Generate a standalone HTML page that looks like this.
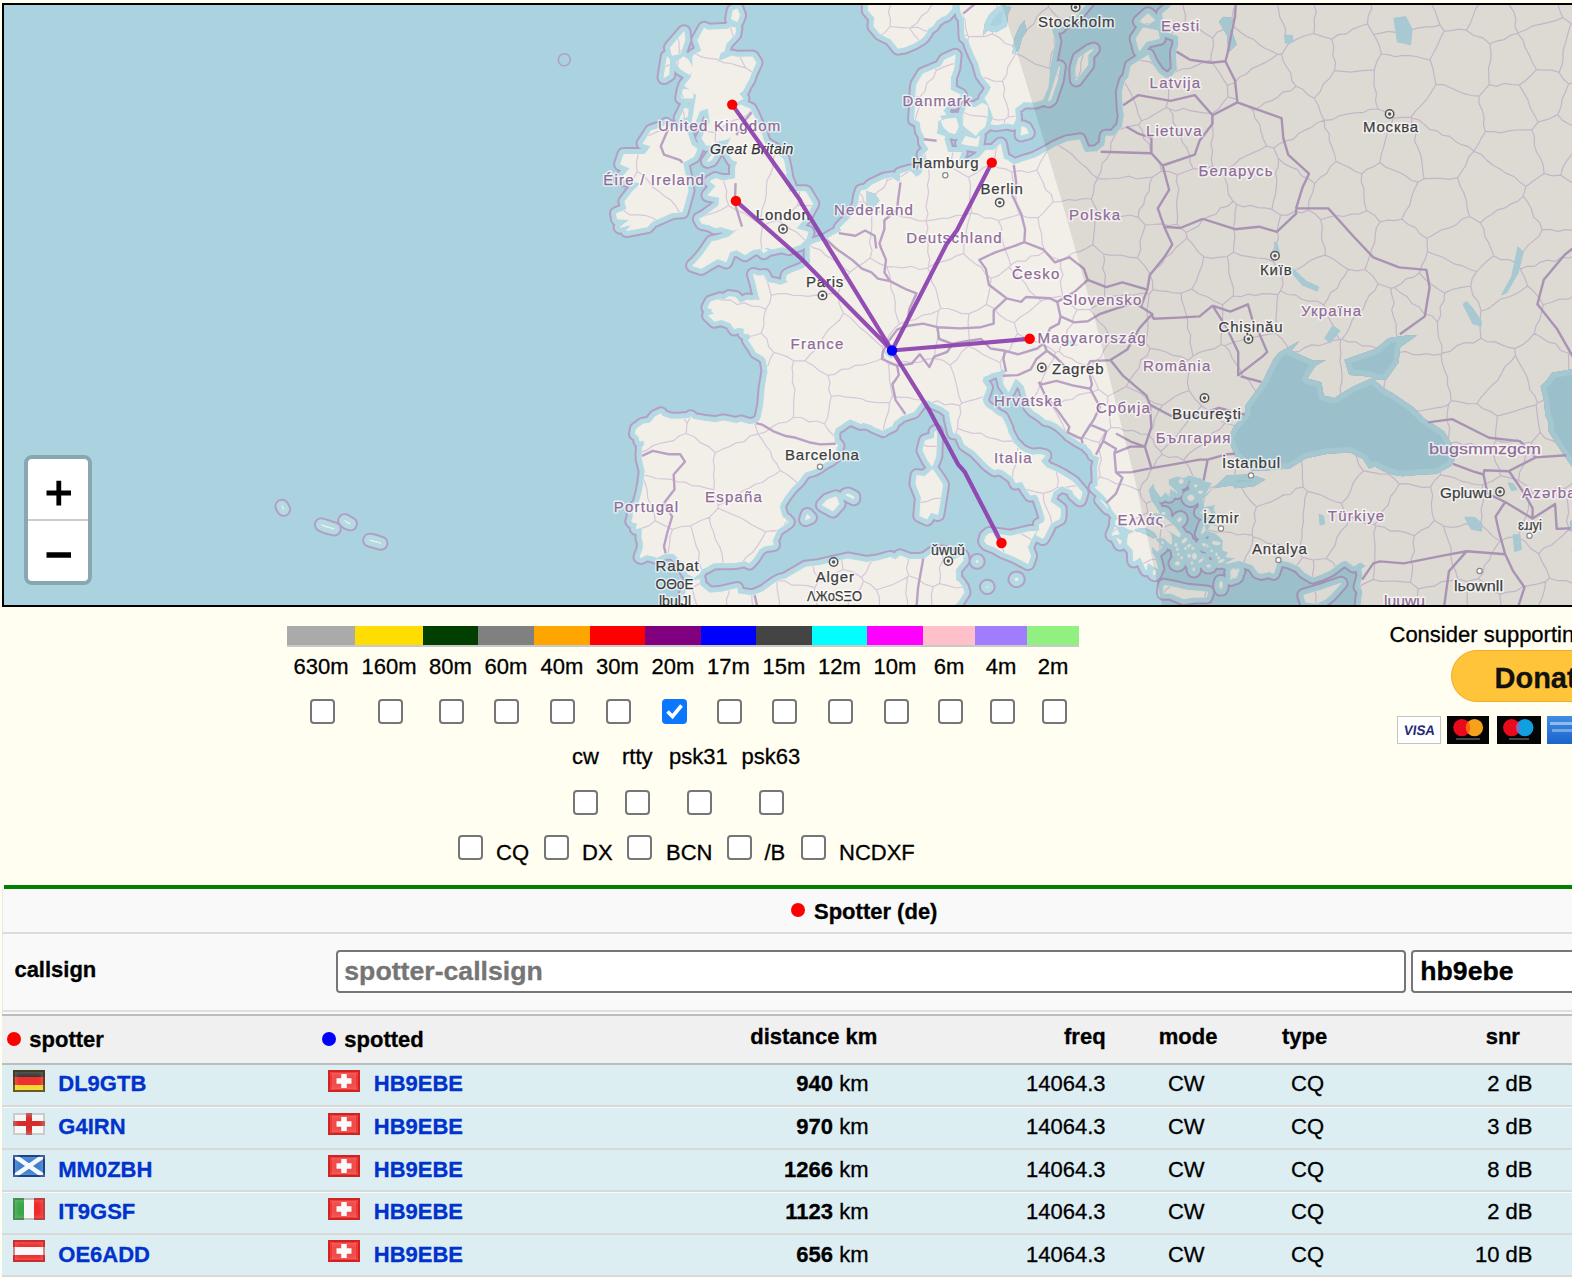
<!DOCTYPE html>
<html><head><meta charset="utf-8">
<style>
html,body{margin:0;padding:0;width:1572px;height:1278px;overflow:hidden;background:#fffef0;font-family:"Liberation Sans",sans-serif;color:#000}
.a{position:absolute;white-space:nowrap}
div.a{-webkit-text-stroke:0.3px currentColor}
</style></head><body>
<div class="a" style="left:2px;top:3px;width:1572px;height:600px;border-top:2px solid #000;border-left:2px solid #000;border-bottom:2px solid #000;overflow:hidden;background:#aad3df"><svg class="a" style="left:0;top:0" width="1572" height="600" viewBox="0 0 1572 600">
<circle cx="560.3" cy="54.7" r="6" fill="none" stroke="#b1a0c4" stroke-width="1.6"/>
<path d="M1160.2 -36.0L1167.5 0.9L1158.6 8.7L1159.3 13.7L1158.6 25.2L1174.7 31.0L1174.7 40.5L1172.5 46.6L1172.5 50.2L1173.3 64.9L1167.5 71.7L1161.8 73.5L1154.1 67.8L1147.4 57.7L1144.1 50.2L1127.1 61.0L1124.5 72.6L1121.3 76.1L1118.3 86.9L1119.2 104.0L1120.3 110.3L1118.4 121.7L1110.1 131.2L1102.0 131.2L1100.7 140.2L1092.7 146.8L1081.1 147.6L1079.0 143.5L1075.5 134.9L1062.9 136.8L1051.8 141.5L1044.1 146.0L1031.1 152.9L1018.2 157.0L1009.8 160.0L1005.0 156.4L999.4 153.7L996.5 139.0L989.7 145.4L981.7 145.4L974.9 152.9L964.8 159.2L955.5 158.6L954.4 155.1L957.3 147.6L943.9 147.6L941.5 139.3L939.9 134.3L940.7 131.5L932.2 129.0L933.4 123.1L933.4 116.3L937.6 114.0L935.1 110.3L941.8 109.7L939.2 105.7L945.0 97.4L949.5 98.8L956.4 89.9L947.9 85.8L946.3 84.3L946.5 72.6L949.9 62.8L950.2 59.5L951.1 50.2L940.8 55.0L936.8 61.6L919.0 69.0L913.0 79.0L912.5 81.4L911.2 98.8L911.4 101.7L910.6 114.3L916.1 116.8L917.4 125.9L920.3 130.9L920.6 137.6L925.1 144.6L919.0 149.6L923.0 154.2L920.6 161.4L917.4 168.7L911.7 172.8L911.4 170.9L906.1 166.0L896.5 168.7L896.5 175.4L894.8 177.3L892.1 176.0L888.4 172.8L880.4 174.1L867.5 180.3L862.7 184.8L857.2 185.9L855.6 191.0L854.3 199.2L851.9 205.0L849.3 208.4L846.9 211.8L843.4 216.0L840.2 218.6L836.1 223.0L838.1 225.8L833.4 228.1L827.6 231.2L822.1 234.5L818.8 235.8L810.4 238.4L806.1 240.4L806.4 244.2L806.1 249.3L806.7 257.4L802.7 260.9L798.0 264.1L786.6 268.4L783.1 270.4L782.3 275.1L784.3 276.8L781.8 278.3L776.6 280.3L770.7 278.8L763.8 277.5L760.4 270.6L754.6 271.1L749.4 269.4L751.9 278.0L754.9 291.1L756.5 295.7L750.9 295.0L748.2 295.7L743.3 295.0L736.4 298.6L731.6 292.5L725.2 291.6L718.7 295.7L716.6 293.7L706.7 296.9L703.9 302.7L709.1 304.2L707.5 306.1L711.0 309.0L704.6 310.5L710.4 316.2L717.6 314.5L726.4 317.9L730.5 323.9L734.0 322.2L740.4 323.4L740.1 328.4L745.3 328.8L746.9 332.4L744.5 335.2L749.3 342.3L752.0 347.0L759.7 351.6L762.1 354.9L763.0 359.7L764.1 367.4L763.6 368.5L761.3 381.5L760.5 389.9L759.7 399.6L757.3 411.9L755.6 415.7L752.0 418.1L748.8 419.2L745.3 419.6L736.9 417.0L732.4 418.5L728.9 417.9L719.5 415.9L711.6 417.7L699.3 416.1L689.6 414.3L686.6 411.7L685.3 413.4L675.5 414.1L667.4 414.3L658.4 411.4L657.0 408.8L651.2 411.7L648.0 415.7L645.5 418.1L638.9 419.2L632.3 424.1L631.5 428.9L634.9 431.3L635.9 436.1L639.6 435.0L640.7 439.4L638.3 442.2L638.3 445.5L638.0 450.2L638.3 454.6L641.2 466.3L639.9 477.2L638.0 487.5L634.8 499.1L629.5 504.1L629.1 512.4L627.8 516.1L629.1 517.7L633.6 517.7L632.3 523.5L637.5 522.3L638.3 523.9L638.0 533.1L639.4 537.8L639.1 543.7L636.0 552.0L636.9 552.4L641.2 550.4L643.3 549.7L648.0 550.8L653.1 552.4L657.6 549.9L661.6 548.3L668.9 548.3L670.8 549.7L678.0 556.4L679.3 561.8L682.7 566.8L683.7 568.8L690.6 572.2L693.0 569.8L694.6 569.6L697.8 564.0L702.2 562.2L709.6 558.0L718.2 557.4L724.0 557.8L732.1 557.4L740.9 555.6L745.4 558.0L750.1 552.6L755.2 544.3L760.5 541.0L764.9 540.2L769.5 539.6L768.1 536.2L769.7 532.5L771.6 528.2L772.9 524.9L778.6 521.0L784.3 517.1L782.4 514.9L778.2 512.0L775.3 501.8L777.1 497.4L781.0 491.3L787.1 483.1L794.6 475.9L800.8 467.2L809.8 464.6L815.7 461.4L820.1 458.0L825.7 455.2L831.0 451.3L832.1 447.0L831.8 442.4L834.0 441.1L830.2 436.6L829.7 428.5L831.6 423.0L836.9 420.1L840.2 417.4L846.3 413.9L851.9 416.3L857.0 418.5L859.5 417.4L867.0 419.6L869.8 421.6L876.0 424.1L879.2 425.6L880.4 424.1L888.1 420.8L889.5 417.0L893.6 414.1L897.6 410.8L900.0 410.1L905.8 408.1L909.8 406.8L917.0 397.4L924.3 394.9L928.6 397.4L938.6 401.9L945.5 407.0L946.3 414.1L949.5 427.8L953.7 428.0L957.3 431.7L960.5 439.4L970.4 445.9L978.2 453.9L983.8 459.9L990.7 464.9L993.8 463.6L998.9 465.1L1005.0 469.5L1009.8 473.0L1011.5 478.0L1013.5 477.4L1018.2 476.4L1021.7 483.3L1026.4 490.1L1032.0 489.2L1034.5 492.8L1038.5 504.1L1041.2 513.6L1039.6 517.7L1035.3 519.4L1035.6 524.7L1033.5 527.0L1032.4 530.1L1039.0 533.5L1042.3 527.4L1046.8 518.2L1055.7 513.6L1056.2 509.9L1056.2 503.7L1046.0 496.4L1049.3 486.5L1057.9 480.8L1068.6 485.2L1069.8 489.4L1076.0 494.9L1078.2 487.5L1069.4 477.2L1058.9 470.6L1052.0 466.8L1042.5 462.7L1036.7 456.1L1040.9 450.7L1036.1 449.6L1028.3 450.2L1021.9 448.1L1017.1 445.5L1012.3 440.5L1009.4 437.9L1003.9 427.4L1002.6 422.3L998.1 412.6L993.3 410.3L988.3 406.1L982.8 402.7L980.1 399.6L978.2 394.7L982.5 382.7L978.2 376.5L979.3 371.5L984.0 370.1L987.8 367.8L995.9 366.0L998.3 363.2L1002.1 366.7L1001.5 369.0L998.9 369.4L998.1 371.7L999.4 376.3L1000.0 379.7L1003.4 384.5L1004.4 386.8L1008.2 379.7L1010.8 373.8L1012.9 374.0L1017.1 377.7L1020.3 381.5L1023.2 392.2L1029.0 397.4L1025.6 401.4L1029.1 405.4L1036.4 410.1L1042.0 414.8L1045.1 415.0L1049.1 416.6L1054.4 419.6L1061.0 425.2L1065.3 429.8L1071.6 433.9L1073.7 435.5L1078.7 438.3L1082.5 439.0L1083.7 442.0L1087.9 445.9L1089.5 449.8L1095.7 452.2L1093.5 462.7L1094.0 471.3L1094.1 480.8L1091.1 482.3L1098.1 488.6L1102.3 493.4L1106.7 501.2L1108.8 505.7L1114.4 512.6L1113.6 515.7L1119.7 521.2L1125.3 524.5L1130.8 525.3L1130.2 527.0L1124.5 529.6L1123.2 538.8L1129.2 545.3L1129.7 556.0L1134.5 553.4L1136.3 551.8L1139.3 558.4L1142.2 564.8L1143.7 557.2L1149.8 561.4L1153.8 563.6L1151.4 554.4L1147.8 547.3L1147.4 540.8L1153.0 546.3L1157.8 542.3L1150.6 533.5L1156.2 532.5L1160.7 533.3L1163.1 536.2L1167.0 539.2L1167.6 538.0L1166.7 529.0L1162.6 525.6L1160.2 522.7L1150.6 518.8L1144.1 514.0L1148.2 507.4L1155.4 508.4L1152.2 503.2L1146.6 494.9L1144.1 485.0L1149.6 477.4L1151.4 484.4L1157.0 491.8L1161.8 486.5L1165.1 491.3L1165.9 483.3L1173.1 487.5L1164.3 479.1L1164.3 474.2L1173.3 471.0L1179.5 472.7L1184.8 470.0L1196.7 473.0L1199.6 475.5L1208.5 478.0L1201.7 489.7L1202.1 490.7L1200.0 501.6L1211.7 499.5L1210.1 504.3L1213.0 510.1L1214.0 513.0L1210.9 518.4L1216.5 522.9L1206.9 519.8L1203.7 525.6L1211.4 528.0L1219.1 535.0L1218.9 544.9L1224.6 547.5L1221.8 551.8L1232.6 553.0L1222.2 558.4L1235.3 555.4L1243.9 558.4L1248.7 560.0L1253.8 567.2L1257.4 568.4L1265.6 566.4L1269.6 568.4L1272.2 560.4L1274.4 554.8L1285.5 557.0L1295.3 561.6L1300.2 567.0L1308.7 572.0L1316.6 569.6L1326.4 565.0L1332.3 560.4L1337.6 556.4L1342.0 555.4L1349.7 561.0L1356.3 557.0L1362.4 560.8L1357.9 564.2L1358.9 570.8L1356.0 581.9L1358.4 585.0L1358.7 588.6L1357.7 594.3L1356.9 603.3L1350.0 621.3L1592.9 630.9L1592.9 -36.0ZM726.3 22.1L731.9 23.0L730.9 29.2L721.9 39.0L720.0 46.6L716.6 47.2L712.8 58.3L718.4 55.0L727.9 51.1L733.0 52.3L748.5 52.0L752.0 57.7L747.2 68.1L745.3 73.7L741.1 81.1L739.1 85.5L734.8 88.7L739.0 93.6L729.8 98.5L729.2 102.3L736.9 100.0L740.4 101.7L746.2 104.0L748.5 108.3L757.8 129.5L758.6 132.9L761.3 138.8L770.8 144.3L774.2 150.1L779.4 154.5L782.4 169.2L775.8 166.0L782.3 171.4L786.1 181.1L783.9 187.5L788.5 186.4L801.6 186.7L808.8 198.7L801.2 212.6L791.9 223.5L804.0 227.3L801.9 234.0L796.4 239.4L784.7 243.7L778.4 241.7L767.9 244.0L763.0 242.2L748.8 244.7L741.1 249.6L732.4 244.7L725.8 247.0L722.1 256.9L713.9 253.6L697.0 263.4L688.6 260.6L692.5 257.1L699.7 248.5L707.9 236.6L713.1 235.8L724.8 232.0L732.7 225.5L738.8 221.7L729.5 225.5L717.1 221.7L711.0 222.7L705.1 219.8L697.8 218.3L695.4 213.9L700.5 211.3L715.0 200.5L715.5 192.3L703.9 190.2L712.0 181.1L706.2 176.5L711.5 173.6L719.0 176.0L731.6 173.6L731.4 162.7L734.0 156.4L728.7 155.1L722.1 143.8L727.6 131.5L722.7 134.3L715.5 135.7L709.9 139.0L702.5 140.4L697.8 132.9L699.4 130.1L702.5 123.4L706.2 117.1L704.2 103.1L695.4 106.0L690.6 118.3L687.4 121.7L689.8 107.4L690.6 101.7L692.7 89.9L680.6 80.5L686.9 72.6L688.8 64.3L689.0 50.8L697.7 45.7L693.8 35.0L700.2 23.3L704.2 25.2L724.0 24.3ZM662.1 119.4L668.1 124.5L681.7 123.9L687.4 139.9L693.0 144.0L689.8 151.5L678.5 157.8L682.5 175.4L684.1 185.6L678.2 206.8L668.1 207.6L648.0 216.5L643.4 221.7L622.7 225.5L627.8 219.6L616.1 222.2L626.2 214.4L613.4 213.9L612.6 208.6L623.0 204.2L620.9 196.5L628.7 186.2L635.9 179.5L635.1 177.6L616.6 174.1L626.2 163.3L616.6 159.2L619.8 149.6L640.7 149.6L647.1 141.3L639.1 138.5L647.1 125.9L657.9 122.5ZM669.7 621.3L674.5 606.6L679.3 594.5L681.7 588.2L683.5 582.9L685.4 576.5L687.4 576.7L695.4 574.4L695.9 580.3L705.9 588.2L717.4 587.2L733.0 583.5L733.5 588.8L745.3 590.4L750.7 590.2L759.7 586.2L770.4 578.3L775.8 575.4L781.9 573.8L801.6 562.2L816.0 560.4L829.9 557.0L843.7 554.0L862.4 557.4L873.5 556.0L886.3 552.4L891.6 554.8L896.0 550.8L905.5 554.4L916.6 554.4L921.5 553.2L929.1 547.7L939.4 546.9L944.7 548.9L946.3 556.4L958.4 550.8L959.2 555.4L951.5 564.4L951.8 575.8L954.8 576.9L958.5 582.3L960.0 587.6L953.7 597.2L943.1 605.8L941.5 630.9ZM864.3 -36.0L864.3 5.6L870.7 12.8L869.9 21.2L876.3 28.9L886.8 34.1L894.0 43.2L900.6 42.0L909.3 38.4L915.4 35.0L919.0 32.3L921.7 28.6L924.3 23.6L929.1 20.6L932.0 15.9L937.5 11.8L942.0 10.3L947.9 3.7L949.2 -36.0ZM952.1 -36.0L956.8 5.6L957.6 10.3L960.3 13.7L961.1 32.0L964.5 34.4L967.2 42.6L971.2 51.7L974.5 58.3L977.5 69.6L981.7 75.5L987.3 82.3L983.8 89.3L980.9 93.0L984.9 100.3L987.0 105.4L989.7 113.2L986.8 118.8L992.2 119.7L1002.9 118.0L1009.0 119.4L1011.5 114.6L1010.7 103.7L1015.2 100.3L1019.7 96.8L1031.4 97.1L1038.8 94.5L1043.8 82.6L1045.2 71.4L1045.2 64.9L1048.3 49.9L1050.9 36.5L1047.6 24.3L1054.1 19.6L1055.7 22.1L1062.9 15.0L1066.9 8.7L1069.4 15.0L1076.6 5.6L1084.6 -3.9L1086.2 -36.0ZM679.3 51.7L672.1 57.7L676.1 63.7L685.7 69.6L689.0 63.7L684.1 54.7ZM679.3 84.3L677.7 93.0L689.0 93.0L689.0 85.8ZM680.1 26.7L666.4 42.6L668.1 50.2L676.1 48.7L680.9 35.0ZM663.2 51.7L660.0 72.6L664.8 69.6L665.6 54.7ZM680.9 103.1L676.1 113.2L683.3 111.7L684.1 104.6ZM729.2 5.6L727.6 14.0L733.2 16.5L735.6 10.3L733.2 4.0ZM710.7 146.2L703.4 156.4L707.5 155.1L711.5 148.2ZM755.7 243.0L759.7 247.8L763.4 245.2L760.5 243.5ZM983.3 100.8L983.3 110.9L980.9 121.7L974.5 126.7L972.0 130.4L962.4 123.1L959.8 120.8L958.9 110.9L962.4 102.6L971.2 102.6L978.5 98.2ZM937.1 116.0L942.8 114.0L951.9 113.2L954.4 121.4L951.1 128.7L945.3 127.3L939.9 122.5ZM957.6 138.5L961.6 131.5L972.0 134.3L975.3 130.9L973.7 141.3L964.0 139.9ZM1017.9 121.7L1017.1 130.1L1024.3 127.9L1021.9 123.1ZM1074.7 53.2L1071.8 63.7L1072.3 74.9L1077.4 68.1L1083.8 59.8L1083.8 50.2L1089.5 44.1L1085.4 45.7ZM1055.4 61.6L1044.4 95.9L1046.8 94.5L1053.3 75.5ZM1139.3 22.7L1132.1 33.5L1135.3 45.7L1142.5 36.5L1155.4 33.5L1153.8 25.8ZM1144.1 8.7L1135.3 16.5L1144.1 19.6L1150.6 15.0ZM932.2 426.3L932.6 432.8L931.8 451.3L929.9 456.7L928.0 461.2L923.8 455.2L921.1 449.8L919.0 445.3L921.4 435.7L930.2 433.3L931.0 426.9ZM928.5 464.4L933.4 471.3L938.6 479.5L936.7 492.0L933.8 509.5L927.0 507.2L923.0 514.0L915.8 510.5L917.4 492.8L911.9 478.9L912.9 470.6L920.7 471.5ZM1030.8 528.0L1032.4 526.6L1025.8 526.6L1006.1 531.3L995.7 529.6L985.4 528.4L981.7 531.7L980.6 536.2L983.0 539.2L991.0 542.3L999.1 547.1L1009.8 551.2L1024.0 558.6L1026.6 551.0L1023.4 542.3L1026.7 535.2ZM832.1 491.8L835.0 499.1L828.9 505.9L818.4 500.1L823.3 494.9ZM841.8 489.7L849.8 493.8L849.8 491.8L844.2 489.0ZM803.2 509.5L801.6 514.6L806.4 512.6ZM1159.4 586.2L1160.2 580.3L1168.3 581.9L1182.8 585.2L1194.0 586.2L1203.7 587.2L1202.1 592.1L1190.8 592.1L1179.5 593.7L1166.7 588.2L1159.4 588.2ZM1299.7 590.2L1316.2 585.4L1337.0 578.3L1326.7 589.8L1321.6 594.1L1312.2 598.6L1301.8 597.0ZM1234.2 563.4L1227.0 570.4L1227.0 574.4L1235.0 566.4ZM1203.7 503.2L1196.4 507.4L1203.7 511.5L1208.5 510.5ZM1200.4 519.8L1197.2 529.0L1201.2 526.0ZM1208.5 536.2L1215.7 539.2L1210.1 537.2ZM1175.5 532.1L1160.2 522.9L1150.6 511.1L1160.2 512.2L1169.9 520.8L1176.3 529.0ZM1096.7 494.9L1103.9 503.2L1101.5 499.1ZM1111.2 521.9L1108.0 530.1L1115.2 529.0ZM1112.8 533.1L1116.0 539.2L1117.6 536.2ZM365.7 535.2L376.9 538.2L370.5 536.2ZM340.7 515.7L346.4 518.8L343.2 517.7ZM317.4 519.8L330.3 523.9L322.2 521.9ZM278.0 501.2L279.6 504.3ZM1182.7 533.5L1181.8 533.1L1180.4 533.6L1178.9 534.9L1178.0 536.4L1177.9 537.6L1178.8 538.0L1180.3 537.5L1181.8 536.2L1182.7 534.7ZM1186.9 539.5L1186.3 539.1L1185.2 539.3L1184.2 540.0L1183.5 541.0L1183.5 541.8L1184.1 542.2L1185.1 542.0L1186.1 541.3L1186.8 540.3ZM1190.1 543.3L1189.9 542.7L1189.3 542.3L1188.5 542.3L1187.8 542.7L1187.6 543.3L1187.8 543.9L1188.5 544.2L1189.3 544.2L1189.9 543.9ZM1192.6 551.4L1192.2 549.6L1191.1 548.5L1189.8 548.5L1188.8 549.6L1188.4 551.4L1188.8 553.1L1189.8 554.2L1191.1 554.2L1192.2 553.1ZM1186.6 550.8L1186.3 549.8L1185.6 549.2L1184.7 549.2L1184.0 549.8L1183.7 550.8L1184.0 551.7L1184.7 552.3L1185.6 552.3L1186.3 551.7ZM1182.3 543.5L1182.1 542.6L1181.7 542.1L1181.2 542.1L1180.8 542.6L1180.7 543.5L1180.8 544.3L1181.2 544.8L1181.7 544.8L1182.1 544.3ZM1172.9 539.8L1172.8 538.8L1172.3 538.1L1171.7 538.1L1171.2 538.8L1171.0 539.8L1171.2 540.9L1171.7 541.6L1172.3 541.6L1172.8 540.9ZM1174.2 544.3L1174.1 543.5L1173.7 542.9L1173.2 542.9L1172.8 543.5L1172.6 544.3L1172.8 545.1L1173.2 545.6L1173.7 545.6L1174.1 545.1ZM1175.4 549.3L1175.2 548.8L1174.7 548.4L1174.1 548.4L1173.6 548.8L1173.4 549.3L1173.6 549.9L1174.1 550.3L1174.7 550.3L1175.2 549.9ZM1178.4 552.8L1178.3 551.9L1177.9 551.4L1177.4 551.4L1177.0 551.9L1176.8 552.8L1177.0 553.6L1177.4 554.1L1177.9 554.1L1178.3 553.6ZM1175.8 558.4L1175.4 557.5L1174.2 556.9L1172.7 556.9L1171.5 557.5L1171.0 558.4L1171.5 559.3L1172.7 559.9L1174.2 559.9L1175.4 559.3ZM1189.0 558.0L1188.8 557.4L1188.2 557.0L1187.6 557.0L1187.0 557.4L1186.8 558.0L1187.0 558.6L1187.6 559.0L1188.2 559.0L1188.8 558.6ZM1199.6 553.7L1198.9 553.5L1197.6 554.0L1196.1 555.1L1195.1 556.2L1194.8 557.0L1195.5 557.2L1196.9 556.7L1198.3 555.7L1199.4 554.6ZM1190.6 564.4L1190.5 563.5L1190.1 562.9L1189.6 562.9L1189.2 563.5L1189.0 564.4L1189.2 565.3L1189.6 565.9L1190.1 565.9L1190.5 565.3ZM1206.6 561.0L1206.2 560.3L1205.2 559.9L1204.0 559.9L1203.1 560.3L1202.7 561.0L1203.1 561.7L1204.0 562.1L1205.2 562.1L1206.2 561.7ZM1220.4 554.8L1219.7 554.4L1218.0 554.5L1216.1 555.3L1214.7 556.3L1214.3 557.2L1215.0 557.6L1216.7 557.4L1218.6 556.7L1220.0 555.7ZM1215.7 552.8L1215.5 552.1L1214.9 551.6L1214.2 551.6L1213.7 552.1L1213.5 552.8L1213.7 553.5L1214.2 553.9L1214.9 553.9L1215.5 553.5ZM1213.3 549.3L1213.2 548.5L1212.8 548.0L1212.3 548.0L1211.9 548.5L1211.7 549.3L1211.9 550.2L1212.3 550.7L1212.8 550.7L1213.2 550.2ZM1208.3 545.9L1208.2 545.2L1207.9 544.8L1207.5 544.8L1207.2 545.2L1207.0 545.9L1207.2 546.6L1207.5 547.1L1207.9 547.1L1208.2 546.6ZM1204.3 541.4L1203.9 540.5L1202.5 539.5L1200.6 538.8L1198.9 538.6L1198.2 539.0L1198.6 540.0L1200.0 541.0L1201.9 541.7L1203.6 541.9ZM1218.3 580.3L1218.1 578.0L1217.4 576.5L1216.6 576.5L1216.0 578.0L1215.7 580.3L1216.0 582.6L1216.6 584.1L1217.4 584.1L1218.1 582.6ZM1190.0 492.8L1189.4 491.2L1187.8 490.2L1185.8 490.2L1184.2 491.2L1183.6 492.8L1184.2 494.4L1185.8 495.4L1187.8 495.4L1189.4 494.4ZM1179.2 476.4L1178.8 475.1L1177.8 474.3L1176.5 474.3L1175.4 475.1L1175.0 476.4L1175.4 477.6L1176.5 478.4L1177.8 478.4L1178.8 477.6ZM1193.2 480.8L1192.9 480.1L1192.1 479.6L1191.1 479.6L1190.3 480.1L1190.0 480.8L1190.3 481.5L1191.1 482.0L1192.1 482.0L1192.9 481.5ZM1177.2 513.1L1176.5 512.6L1175.4 512.9L1174.3 513.8L1173.7 515.1L1173.8 516.2L1174.5 516.7L1175.7 516.4L1176.7 515.5L1177.3 514.2ZM1161.4 508.4L1161.0 507.8L1160.0 507.5L1158.8 507.5L1157.9 507.8L1157.5 508.4L1157.9 509.0L1158.8 509.4L1160.0 509.4L1161.0 509.0ZM1159.6 537.6L1159.4 537.0L1158.9 536.6L1158.3 536.6L1157.8 537.0L1157.7 537.6L1157.8 538.2L1158.3 538.6L1158.9 538.6L1159.4 538.2ZM1151.9 567.4L1151.6 566.0L1151.0 565.1L1150.2 565.1L1149.5 566.0L1149.3 567.4L1149.5 568.8L1150.2 569.7L1151.0 569.7L1151.6 568.8ZM1198.8 487.1L1198.4 486.4L1197.2 485.9L1195.7 485.9L1194.5 486.4L1194.0 487.1L1194.5 487.9L1195.7 488.3L1197.2 488.3L1198.4 487.9ZM1200.1 494.5L1200.0 494.0L1199.6 493.7L1199.1 493.7L1198.7 494.0L1198.5 494.5L1198.7 495.0L1199.1 495.3L1199.6 495.3L1200.0 495.0ZM1114.1 517.7L1113.8 516.2L1113.2 515.2L1112.4 515.2L1111.7 516.2L1111.5 517.7L1111.7 519.3L1112.4 520.3L1113.2 520.3L1113.8 519.3ZM1216.5 538.2L1215.8 537.4L1213.7 536.9L1211.3 536.9L1209.3 537.4L1208.5 538.2L1209.3 539.0L1211.3 539.6L1213.7 539.6L1215.8 539.0ZM1014.2 574.4L1013.9 573.7L1013.1 573.2L1012.1 573.2L1011.3 573.7L1011.0 574.4L1011.3 575.1L1012.1 575.5L1013.1 575.5L1013.9 575.1ZM974.1 556.4L974.0 555.8L973.5 555.4L972.9 555.4L972.4 555.8L972.2 556.4L972.4 557.0L972.9 557.3L973.5 557.3L974.0 557.0ZM984.1 581.9L984.0 581.5L983.6 581.3L983.1 581.3L982.7 581.5L982.5 581.9L982.7 582.2L983.1 582.5L983.6 582.5L984.0 582.2ZM1232.9 566.1L1231.0 564.2L1228.9 563.8L1227.2 565.2L1226.7 567.8L1227.5 570.6L1229.4 572.6L1231.5 573.0L1233.2 571.6L1233.7 569.0Z" fill="none" stroke="#b1a0c4" stroke-width="15" stroke-linejoin="round"/>
<path d="M1160.2 -36.0L1167.5 0.9L1158.6 8.7L1159.3 13.7L1158.6 25.2L1174.7 31.0L1174.7 40.5L1172.5 46.6L1172.5 50.2L1173.3 64.9L1167.5 71.7L1161.8 73.5L1154.1 67.8L1147.4 57.7L1144.1 50.2L1127.1 61.0L1124.5 72.6L1121.3 76.1L1118.3 86.9L1119.2 104.0L1120.3 110.3L1118.4 121.7L1110.1 131.2L1102.0 131.2L1100.7 140.2L1092.7 146.8L1081.1 147.6L1079.0 143.5L1075.5 134.9L1062.9 136.8L1051.8 141.5L1044.1 146.0L1031.1 152.9L1018.2 157.0L1009.8 160.0L1005.0 156.4L999.4 153.7L996.5 139.0L989.7 145.4L981.7 145.4L974.9 152.9L964.8 159.2L955.5 158.6L954.4 155.1L957.3 147.6L943.9 147.6L941.5 139.3L939.9 134.3L940.7 131.5L932.2 129.0L933.4 123.1L933.4 116.3L937.6 114.0L935.1 110.3L941.8 109.7L939.2 105.7L945.0 97.4L949.5 98.8L956.4 89.9L947.9 85.8L946.3 84.3L946.5 72.6L949.9 62.8L950.2 59.5L951.1 50.2L940.8 55.0L936.8 61.6L919.0 69.0L913.0 79.0L912.5 81.4L911.2 98.8L911.4 101.7L910.6 114.3L916.1 116.8L917.4 125.9L920.3 130.9L920.6 137.6L925.1 144.6L919.0 149.6L923.0 154.2L920.6 161.4L917.4 168.7L911.7 172.8L911.4 170.9L906.1 166.0L896.5 168.7L896.5 175.4L894.8 177.3L892.1 176.0L888.4 172.8L880.4 174.1L867.5 180.3L862.7 184.8L857.2 185.9L855.6 191.0L854.3 199.2L851.9 205.0L849.3 208.4L846.9 211.8L843.4 216.0L840.2 218.6L836.1 223.0L838.1 225.8L833.4 228.1L827.6 231.2L822.1 234.5L818.8 235.8L810.4 238.4L806.1 240.4L806.4 244.2L806.1 249.3L806.7 257.4L802.7 260.9L798.0 264.1L786.6 268.4L783.1 270.4L782.3 275.1L784.3 276.8L781.8 278.3L776.6 280.3L770.7 278.8L763.8 277.5L760.4 270.6L754.6 271.1L749.4 269.4L751.9 278.0L754.9 291.1L756.5 295.7L750.9 295.0L748.2 295.7L743.3 295.0L736.4 298.6L731.6 292.5L725.2 291.6L718.7 295.7L716.6 293.7L706.7 296.9L703.9 302.7L709.1 304.2L707.5 306.1L711.0 309.0L704.6 310.5L710.4 316.2L717.6 314.5L726.4 317.9L730.5 323.9L734.0 322.2L740.4 323.4L740.1 328.4L745.3 328.8L746.9 332.4L744.5 335.2L749.3 342.3L752.0 347.0L759.7 351.6L762.1 354.9L763.0 359.7L764.1 367.4L763.6 368.5L761.3 381.5L760.5 389.9L759.7 399.6L757.3 411.9L755.6 415.7L752.0 418.1L748.8 419.2L745.3 419.6L736.9 417.0L732.4 418.5L728.9 417.9L719.5 415.9L711.6 417.7L699.3 416.1L689.6 414.3L686.6 411.7L685.3 413.4L675.5 414.1L667.4 414.3L658.4 411.4L657.0 408.8L651.2 411.7L648.0 415.7L645.5 418.1L638.9 419.2L632.3 424.1L631.5 428.9L634.9 431.3L635.9 436.1L639.6 435.0L640.7 439.4L638.3 442.2L638.3 445.5L638.0 450.2L638.3 454.6L641.2 466.3L639.9 477.2L638.0 487.5L634.8 499.1L629.5 504.1L629.1 512.4L627.8 516.1L629.1 517.7L633.6 517.7L632.3 523.5L637.5 522.3L638.3 523.9L638.0 533.1L639.4 537.8L639.1 543.7L636.0 552.0L636.9 552.4L641.2 550.4L643.3 549.7L648.0 550.8L653.1 552.4L657.6 549.9L661.6 548.3L668.9 548.3L670.8 549.7L678.0 556.4L679.3 561.8L682.7 566.8L683.7 568.8L690.6 572.2L693.0 569.8L694.6 569.6L697.8 564.0L702.2 562.2L709.6 558.0L718.2 557.4L724.0 557.8L732.1 557.4L740.9 555.6L745.4 558.0L750.1 552.6L755.2 544.3L760.5 541.0L764.9 540.2L769.5 539.6L768.1 536.2L769.7 532.5L771.6 528.2L772.9 524.9L778.6 521.0L784.3 517.1L782.4 514.9L778.2 512.0L775.3 501.8L777.1 497.4L781.0 491.3L787.1 483.1L794.6 475.9L800.8 467.2L809.8 464.6L815.7 461.4L820.1 458.0L825.7 455.2L831.0 451.3L832.1 447.0L831.8 442.4L834.0 441.1L830.2 436.6L829.7 428.5L831.6 423.0L836.9 420.1L840.2 417.4L846.3 413.9L851.9 416.3L857.0 418.5L859.5 417.4L867.0 419.6L869.8 421.6L876.0 424.1L879.2 425.6L880.4 424.1L888.1 420.8L889.5 417.0L893.6 414.1L897.6 410.8L900.0 410.1L905.8 408.1L909.8 406.8L917.0 397.4L924.3 394.9L928.6 397.4L938.6 401.9L945.5 407.0L946.3 414.1L949.5 427.8L953.7 428.0L957.3 431.7L960.5 439.4L970.4 445.9L978.2 453.9L983.8 459.9L990.7 464.9L993.8 463.6L998.9 465.1L1005.0 469.5L1009.8 473.0L1011.5 478.0L1013.5 477.4L1018.2 476.4L1021.7 483.3L1026.4 490.1L1032.0 489.2L1034.5 492.8L1038.5 504.1L1041.2 513.6L1039.6 517.7L1035.3 519.4L1035.6 524.7L1033.5 527.0L1032.4 530.1L1039.0 533.5L1042.3 527.4L1046.8 518.2L1055.7 513.6L1056.2 509.9L1056.2 503.7L1046.0 496.4L1049.3 486.5L1057.9 480.8L1068.6 485.2L1069.8 489.4L1076.0 494.9L1078.2 487.5L1069.4 477.2L1058.9 470.6L1052.0 466.8L1042.5 462.7L1036.7 456.1L1040.9 450.7L1036.1 449.6L1028.3 450.2L1021.9 448.1L1017.1 445.5L1012.3 440.5L1009.4 437.9L1003.9 427.4L1002.6 422.3L998.1 412.6L993.3 410.3L988.3 406.1L982.8 402.7L980.1 399.6L978.2 394.7L982.5 382.7L978.2 376.5L979.3 371.5L984.0 370.1L987.8 367.8L995.9 366.0L998.3 363.2L1002.1 366.7L1001.5 369.0L998.9 369.4L998.1 371.7L999.4 376.3L1000.0 379.7L1003.4 384.5L1004.4 386.8L1008.2 379.7L1010.8 373.8L1012.9 374.0L1017.1 377.7L1020.3 381.5L1023.2 392.2L1029.0 397.4L1025.6 401.4L1029.1 405.4L1036.4 410.1L1042.0 414.8L1045.1 415.0L1049.1 416.6L1054.4 419.6L1061.0 425.2L1065.3 429.8L1071.6 433.9L1073.7 435.5L1078.7 438.3L1082.5 439.0L1083.7 442.0L1087.9 445.9L1089.5 449.8L1095.7 452.2L1093.5 462.7L1094.0 471.3L1094.1 480.8L1091.1 482.3L1098.1 488.6L1102.3 493.4L1106.7 501.2L1108.8 505.7L1114.4 512.6L1113.6 515.7L1119.7 521.2L1125.3 524.5L1130.8 525.3L1130.2 527.0L1124.5 529.6L1123.2 538.8L1129.2 545.3L1129.7 556.0L1134.5 553.4L1136.3 551.8L1139.3 558.4L1142.2 564.8L1143.7 557.2L1149.8 561.4L1153.8 563.6L1151.4 554.4L1147.8 547.3L1147.4 540.8L1153.0 546.3L1157.8 542.3L1150.6 533.5L1156.2 532.5L1160.7 533.3L1163.1 536.2L1167.0 539.2L1167.6 538.0L1166.7 529.0L1162.6 525.6L1160.2 522.7L1150.6 518.8L1144.1 514.0L1148.2 507.4L1155.4 508.4L1152.2 503.2L1146.6 494.9L1144.1 485.0L1149.6 477.4L1151.4 484.4L1157.0 491.8L1161.8 486.5L1165.1 491.3L1165.9 483.3L1173.1 487.5L1164.3 479.1L1164.3 474.2L1173.3 471.0L1179.5 472.7L1184.8 470.0L1196.7 473.0L1199.6 475.5L1208.5 478.0L1201.7 489.7L1202.1 490.7L1200.0 501.6L1211.7 499.5L1210.1 504.3L1213.0 510.1L1214.0 513.0L1210.9 518.4L1216.5 522.9L1206.9 519.8L1203.7 525.6L1211.4 528.0L1219.1 535.0L1218.9 544.9L1224.6 547.5L1221.8 551.8L1232.6 553.0L1222.2 558.4L1235.3 555.4L1243.9 558.4L1248.7 560.0L1253.8 567.2L1257.4 568.4L1265.6 566.4L1269.6 568.4L1272.2 560.4L1274.4 554.8L1285.5 557.0L1295.3 561.6L1300.2 567.0L1308.7 572.0L1316.6 569.6L1326.4 565.0L1332.3 560.4L1337.6 556.4L1342.0 555.4L1349.7 561.0L1356.3 557.0L1362.4 560.8L1357.9 564.2L1358.9 570.8L1356.0 581.9L1358.4 585.0L1358.7 588.6L1357.7 594.3L1356.9 603.3L1350.0 621.3L1592.9 630.9L1592.9 -36.0ZM726.3 22.1L731.9 23.0L730.9 29.2L721.9 39.0L720.0 46.6L716.6 47.2L712.8 58.3L718.4 55.0L727.9 51.1L733.0 52.3L748.5 52.0L752.0 57.7L747.2 68.1L745.3 73.7L741.1 81.1L739.1 85.5L734.8 88.7L739.0 93.6L729.8 98.5L729.2 102.3L736.9 100.0L740.4 101.7L746.2 104.0L748.5 108.3L757.8 129.5L758.6 132.9L761.3 138.8L770.8 144.3L774.2 150.1L779.4 154.5L782.4 169.2L775.8 166.0L782.3 171.4L786.1 181.1L783.9 187.5L788.5 186.4L801.6 186.7L808.8 198.7L801.2 212.6L791.9 223.5L804.0 227.3L801.9 234.0L796.4 239.4L784.7 243.7L778.4 241.7L767.9 244.0L763.0 242.2L748.8 244.7L741.1 249.6L732.4 244.7L725.8 247.0L722.1 256.9L713.9 253.6L697.0 263.4L688.6 260.6L692.5 257.1L699.7 248.5L707.9 236.6L713.1 235.8L724.8 232.0L732.7 225.5L738.8 221.7L729.5 225.5L717.1 221.7L711.0 222.7L705.1 219.8L697.8 218.3L695.4 213.9L700.5 211.3L715.0 200.5L715.5 192.3L703.9 190.2L712.0 181.1L706.2 176.5L711.5 173.6L719.0 176.0L731.6 173.6L731.4 162.7L734.0 156.4L728.7 155.1L722.1 143.8L727.6 131.5L722.7 134.3L715.5 135.7L709.9 139.0L702.5 140.4L697.8 132.9L699.4 130.1L702.5 123.4L706.2 117.1L704.2 103.1L695.4 106.0L690.6 118.3L687.4 121.7L689.8 107.4L690.6 101.7L692.7 89.9L680.6 80.5L686.9 72.6L688.8 64.3L689.0 50.8L697.7 45.7L693.8 35.0L700.2 23.3L704.2 25.2L724.0 24.3ZM662.1 119.4L668.1 124.5L681.7 123.9L687.4 139.9L693.0 144.0L689.8 151.5L678.5 157.8L682.5 175.4L684.1 185.6L678.2 206.8L668.1 207.6L648.0 216.5L643.4 221.7L622.7 225.5L627.8 219.6L616.1 222.2L626.2 214.4L613.4 213.9L612.6 208.6L623.0 204.2L620.9 196.5L628.7 186.2L635.9 179.5L635.1 177.6L616.6 174.1L626.2 163.3L616.6 159.2L619.8 149.6L640.7 149.6L647.1 141.3L639.1 138.5L647.1 125.9L657.9 122.5ZM669.7 621.3L674.5 606.6L679.3 594.5L681.7 588.2L683.5 582.9L685.4 576.5L687.4 576.7L695.4 574.4L695.9 580.3L705.9 588.2L717.4 587.2L733.0 583.5L733.5 588.8L745.3 590.4L750.7 590.2L759.7 586.2L770.4 578.3L775.8 575.4L781.9 573.8L801.6 562.2L816.0 560.4L829.9 557.0L843.7 554.0L862.4 557.4L873.5 556.0L886.3 552.4L891.6 554.8L896.0 550.8L905.5 554.4L916.6 554.4L921.5 553.2L929.1 547.7L939.4 546.9L944.7 548.9L946.3 556.4L958.4 550.8L959.2 555.4L951.5 564.4L951.8 575.8L954.8 576.9L958.5 582.3L960.0 587.6L953.7 597.2L943.1 605.8L941.5 630.9ZM864.3 -36.0L864.3 5.6L870.7 12.8L869.9 21.2L876.3 28.9L886.8 34.1L894.0 43.2L900.6 42.0L909.3 38.4L915.4 35.0L919.0 32.3L921.7 28.6L924.3 23.6L929.1 20.6L932.0 15.9L937.5 11.8L942.0 10.3L947.9 3.7L949.2 -36.0ZM952.1 -36.0L956.8 5.6L957.6 10.3L960.3 13.7L961.1 32.0L964.5 34.4L967.2 42.6L971.2 51.7L974.5 58.3L977.5 69.6L981.7 75.5L987.3 82.3L983.8 89.3L980.9 93.0L984.9 100.3L987.0 105.4L989.7 113.2L986.8 118.8L992.2 119.7L1002.9 118.0L1009.0 119.4L1011.5 114.6L1010.7 103.7L1015.2 100.3L1019.7 96.8L1031.4 97.1L1038.8 94.5L1043.8 82.6L1045.2 71.4L1045.2 64.9L1048.3 49.9L1050.9 36.5L1047.6 24.3L1054.1 19.6L1055.7 22.1L1062.9 15.0L1066.9 8.7L1069.4 15.0L1076.6 5.6L1084.6 -3.9L1086.2 -36.0ZM679.3 51.7L672.1 57.7L676.1 63.7L685.7 69.6L689.0 63.7L684.1 54.7ZM679.3 84.3L677.7 93.0L689.0 93.0L689.0 85.8ZM680.1 26.7L666.4 42.6L668.1 50.2L676.1 48.7L680.9 35.0ZM663.2 51.7L660.0 72.6L664.8 69.6L665.6 54.7ZM680.9 103.1L676.1 113.2L683.3 111.7L684.1 104.6ZM729.2 5.6L727.6 14.0L733.2 16.5L735.6 10.3L733.2 4.0ZM710.7 146.2L703.4 156.4L707.5 155.1L711.5 148.2ZM755.7 243.0L759.7 247.8L763.4 245.2L760.5 243.5ZM983.3 100.8L983.3 110.9L980.9 121.7L974.5 126.7L972.0 130.4L962.4 123.1L959.8 120.8L958.9 110.9L962.4 102.6L971.2 102.6L978.5 98.2ZM937.1 116.0L942.8 114.0L951.9 113.2L954.4 121.4L951.1 128.7L945.3 127.3L939.9 122.5ZM957.6 138.5L961.6 131.5L972.0 134.3L975.3 130.9L973.7 141.3L964.0 139.9ZM1017.9 121.7L1017.1 130.1L1024.3 127.9L1021.9 123.1ZM1074.7 53.2L1071.8 63.7L1072.3 74.9L1077.4 68.1L1083.8 59.8L1083.8 50.2L1089.5 44.1L1085.4 45.7ZM1055.4 61.6L1044.4 95.9L1046.8 94.5L1053.3 75.5ZM1139.3 22.7L1132.1 33.5L1135.3 45.7L1142.5 36.5L1155.4 33.5L1153.8 25.8ZM1144.1 8.7L1135.3 16.5L1144.1 19.6L1150.6 15.0ZM932.2 426.3L932.6 432.8L931.8 451.3L929.9 456.7L928.0 461.2L923.8 455.2L921.1 449.8L919.0 445.3L921.4 435.7L930.2 433.3L931.0 426.9ZM928.5 464.4L933.4 471.3L938.6 479.5L936.7 492.0L933.8 509.5L927.0 507.2L923.0 514.0L915.8 510.5L917.4 492.8L911.9 478.9L912.9 470.6L920.7 471.5ZM1030.8 528.0L1032.4 526.6L1025.8 526.6L1006.1 531.3L995.7 529.6L985.4 528.4L981.7 531.7L980.6 536.2L983.0 539.2L991.0 542.3L999.1 547.1L1009.8 551.2L1024.0 558.6L1026.6 551.0L1023.4 542.3L1026.7 535.2ZM832.1 491.8L835.0 499.1L828.9 505.9L818.4 500.1L823.3 494.9ZM841.8 489.7L849.8 493.8L849.8 491.8L844.2 489.0ZM803.2 509.5L801.6 514.6L806.4 512.6ZM1159.4 586.2L1160.2 580.3L1168.3 581.9L1182.8 585.2L1194.0 586.2L1203.7 587.2L1202.1 592.1L1190.8 592.1L1179.5 593.7L1166.7 588.2L1159.4 588.2ZM1299.7 590.2L1316.2 585.4L1337.0 578.3L1326.7 589.8L1321.6 594.1L1312.2 598.6L1301.8 597.0ZM1234.2 563.4L1227.0 570.4L1227.0 574.4L1235.0 566.4ZM1203.7 503.2L1196.4 507.4L1203.7 511.5L1208.5 510.5ZM1200.4 519.8L1197.2 529.0L1201.2 526.0ZM1208.5 536.2L1215.7 539.2L1210.1 537.2ZM1175.5 532.1L1160.2 522.9L1150.6 511.1L1160.2 512.2L1169.9 520.8L1176.3 529.0ZM1096.7 494.9L1103.9 503.2L1101.5 499.1ZM1111.2 521.9L1108.0 530.1L1115.2 529.0ZM1112.8 533.1L1116.0 539.2L1117.6 536.2ZM365.7 535.2L376.9 538.2L370.5 536.2ZM340.7 515.7L346.4 518.8L343.2 517.7ZM317.4 519.8L330.3 523.9L322.2 521.9ZM278.0 501.2L279.6 504.3ZM1182.7 533.5L1181.8 533.1L1180.4 533.6L1178.9 534.9L1178.0 536.4L1177.9 537.6L1178.8 538.0L1180.3 537.5L1181.8 536.2L1182.7 534.7ZM1186.9 539.5L1186.3 539.1L1185.2 539.3L1184.2 540.0L1183.5 541.0L1183.5 541.8L1184.1 542.2L1185.1 542.0L1186.1 541.3L1186.8 540.3ZM1190.1 543.3L1189.9 542.7L1189.3 542.3L1188.5 542.3L1187.8 542.7L1187.6 543.3L1187.8 543.9L1188.5 544.2L1189.3 544.2L1189.9 543.9ZM1192.6 551.4L1192.2 549.6L1191.1 548.5L1189.8 548.5L1188.8 549.6L1188.4 551.4L1188.8 553.1L1189.8 554.2L1191.1 554.2L1192.2 553.1ZM1186.6 550.8L1186.3 549.8L1185.6 549.2L1184.7 549.2L1184.0 549.8L1183.7 550.8L1184.0 551.7L1184.7 552.3L1185.6 552.3L1186.3 551.7ZM1182.3 543.5L1182.1 542.6L1181.7 542.1L1181.2 542.1L1180.8 542.6L1180.7 543.5L1180.8 544.3L1181.2 544.8L1181.7 544.8L1182.1 544.3ZM1172.9 539.8L1172.8 538.8L1172.3 538.1L1171.7 538.1L1171.2 538.8L1171.0 539.8L1171.2 540.9L1171.7 541.6L1172.3 541.6L1172.8 540.9ZM1174.2 544.3L1174.1 543.5L1173.7 542.9L1173.2 542.9L1172.8 543.5L1172.6 544.3L1172.8 545.1L1173.2 545.6L1173.7 545.6L1174.1 545.1ZM1175.4 549.3L1175.2 548.8L1174.7 548.4L1174.1 548.4L1173.6 548.8L1173.4 549.3L1173.6 549.9L1174.1 550.3L1174.7 550.3L1175.2 549.9ZM1178.4 552.8L1178.3 551.9L1177.9 551.4L1177.4 551.4L1177.0 551.9L1176.8 552.8L1177.0 553.6L1177.4 554.1L1177.9 554.1L1178.3 553.6ZM1175.8 558.4L1175.4 557.5L1174.2 556.9L1172.7 556.9L1171.5 557.5L1171.0 558.4L1171.5 559.3L1172.7 559.9L1174.2 559.9L1175.4 559.3ZM1189.0 558.0L1188.8 557.4L1188.2 557.0L1187.6 557.0L1187.0 557.4L1186.8 558.0L1187.0 558.6L1187.6 559.0L1188.2 559.0L1188.8 558.6ZM1199.6 553.7L1198.9 553.5L1197.6 554.0L1196.1 555.1L1195.1 556.2L1194.8 557.0L1195.5 557.2L1196.9 556.7L1198.3 555.7L1199.4 554.6ZM1190.6 564.4L1190.5 563.5L1190.1 562.9L1189.6 562.9L1189.2 563.5L1189.0 564.4L1189.2 565.3L1189.6 565.9L1190.1 565.9L1190.5 565.3ZM1206.6 561.0L1206.2 560.3L1205.2 559.9L1204.0 559.9L1203.1 560.3L1202.7 561.0L1203.1 561.7L1204.0 562.1L1205.2 562.1L1206.2 561.7ZM1220.4 554.8L1219.7 554.4L1218.0 554.5L1216.1 555.3L1214.7 556.3L1214.3 557.2L1215.0 557.6L1216.7 557.4L1218.6 556.7L1220.0 555.7ZM1215.7 552.8L1215.5 552.1L1214.9 551.6L1214.2 551.6L1213.7 552.1L1213.5 552.8L1213.7 553.5L1214.2 553.9L1214.9 553.9L1215.5 553.5ZM1213.3 549.3L1213.2 548.5L1212.8 548.0L1212.3 548.0L1211.9 548.5L1211.7 549.3L1211.9 550.2L1212.3 550.7L1212.8 550.7L1213.2 550.2ZM1208.3 545.9L1208.2 545.2L1207.9 544.8L1207.5 544.8L1207.2 545.2L1207.0 545.9L1207.2 546.6L1207.5 547.1L1207.9 547.1L1208.2 546.6ZM1204.3 541.4L1203.9 540.5L1202.5 539.5L1200.6 538.8L1198.9 538.6L1198.2 539.0L1198.6 540.0L1200.0 541.0L1201.9 541.7L1203.6 541.9ZM1218.3 580.3L1218.1 578.0L1217.4 576.5L1216.6 576.5L1216.0 578.0L1215.7 580.3L1216.0 582.6L1216.6 584.1L1217.4 584.1L1218.1 582.6ZM1190.0 492.8L1189.4 491.2L1187.8 490.2L1185.8 490.2L1184.2 491.2L1183.6 492.8L1184.2 494.4L1185.8 495.4L1187.8 495.4L1189.4 494.4ZM1179.2 476.4L1178.8 475.1L1177.8 474.3L1176.5 474.3L1175.4 475.1L1175.0 476.4L1175.4 477.6L1176.5 478.4L1177.8 478.4L1178.8 477.6ZM1193.2 480.8L1192.9 480.1L1192.1 479.6L1191.1 479.6L1190.3 480.1L1190.0 480.8L1190.3 481.5L1191.1 482.0L1192.1 482.0L1192.9 481.5ZM1177.2 513.1L1176.5 512.6L1175.4 512.9L1174.3 513.8L1173.7 515.1L1173.8 516.2L1174.5 516.7L1175.7 516.4L1176.7 515.5L1177.3 514.2ZM1161.4 508.4L1161.0 507.8L1160.0 507.5L1158.8 507.5L1157.9 507.8L1157.5 508.4L1157.9 509.0L1158.8 509.4L1160.0 509.4L1161.0 509.0ZM1159.6 537.6L1159.4 537.0L1158.9 536.6L1158.3 536.6L1157.8 537.0L1157.7 537.6L1157.8 538.2L1158.3 538.6L1158.9 538.6L1159.4 538.2ZM1151.9 567.4L1151.6 566.0L1151.0 565.1L1150.2 565.1L1149.5 566.0L1149.3 567.4L1149.5 568.8L1150.2 569.7L1151.0 569.7L1151.6 568.8ZM1198.8 487.1L1198.4 486.4L1197.2 485.9L1195.7 485.9L1194.5 486.4L1194.0 487.1L1194.5 487.9L1195.7 488.3L1197.2 488.3L1198.4 487.9ZM1200.1 494.5L1200.0 494.0L1199.6 493.7L1199.1 493.7L1198.7 494.0L1198.5 494.5L1198.7 495.0L1199.1 495.3L1199.6 495.3L1200.0 495.0ZM1114.1 517.7L1113.8 516.2L1113.2 515.2L1112.4 515.2L1111.7 516.2L1111.5 517.7L1111.7 519.3L1112.4 520.3L1113.2 520.3L1113.8 519.3ZM1216.5 538.2L1215.8 537.4L1213.7 536.9L1211.3 536.9L1209.3 537.4L1208.5 538.2L1209.3 539.0L1211.3 539.6L1213.7 539.6L1215.8 539.0ZM1014.2 574.4L1013.9 573.7L1013.1 573.2L1012.1 573.2L1011.3 573.7L1011.0 574.4L1011.3 575.1L1012.1 575.5L1013.1 575.5L1013.9 575.1ZM974.1 556.4L974.0 555.8L973.5 555.4L972.9 555.4L972.4 555.8L972.2 556.4L972.4 557.0L972.9 557.3L973.5 557.3L974.0 557.0ZM984.1 581.9L984.0 581.5L983.6 581.3L983.1 581.3L982.7 581.5L982.5 581.9L982.7 582.2L983.1 582.5L983.6 582.5L984.0 582.2ZM1232.9 566.1L1231.0 564.2L1228.9 563.8L1227.2 565.2L1226.7 567.8L1227.5 570.6L1229.4 572.6L1231.5 573.0L1233.2 571.6L1233.7 569.0Z" fill="none" stroke="#b5dae4" stroke-width="11" stroke-linejoin="round"/>
<path d="M1160.2 -36.0L1167.5 0.9L1158.6 8.7L1159.3 13.7L1158.6 25.2L1174.7 31.0L1174.7 40.5L1172.5 46.6L1172.5 50.2L1173.3 64.9L1167.5 71.7L1161.8 73.5L1154.1 67.8L1147.4 57.7L1144.1 50.2L1127.1 61.0L1124.5 72.6L1121.3 76.1L1118.3 86.9L1119.2 104.0L1120.3 110.3L1118.4 121.7L1110.1 131.2L1102.0 131.2L1100.7 140.2L1092.7 146.8L1081.1 147.6L1079.0 143.5L1075.5 134.9L1062.9 136.8L1051.8 141.5L1044.1 146.0L1031.1 152.9L1018.2 157.0L1009.8 160.0L1005.0 156.4L999.4 153.7L996.5 139.0L989.7 145.4L981.7 145.4L974.9 152.9L964.8 159.2L955.5 158.6L954.4 155.1L957.3 147.6L943.9 147.6L941.5 139.3L939.9 134.3L940.7 131.5L932.2 129.0L933.4 123.1L933.4 116.3L937.6 114.0L935.1 110.3L941.8 109.7L939.2 105.7L945.0 97.4L949.5 98.8L956.4 89.9L947.9 85.8L946.3 84.3L946.5 72.6L949.9 62.8L950.2 59.5L951.1 50.2L940.8 55.0L936.8 61.6L919.0 69.0L913.0 79.0L912.5 81.4L911.2 98.8L911.4 101.7L910.6 114.3L916.1 116.8L917.4 125.9L920.3 130.9L920.6 137.6L925.1 144.6L919.0 149.6L923.0 154.2L920.6 161.4L917.4 168.7L911.7 172.8L911.4 170.9L906.1 166.0L896.5 168.7L896.5 175.4L894.8 177.3L892.1 176.0L888.4 172.8L880.4 174.1L867.5 180.3L862.7 184.8L857.2 185.9L855.6 191.0L854.3 199.2L851.9 205.0L849.3 208.4L846.9 211.8L843.4 216.0L840.2 218.6L836.1 223.0L838.1 225.8L833.4 228.1L827.6 231.2L822.1 234.5L818.8 235.8L810.4 238.4L806.1 240.4L806.4 244.2L806.1 249.3L806.7 257.4L802.7 260.9L798.0 264.1L786.6 268.4L783.1 270.4L782.3 275.1L784.3 276.8L781.8 278.3L776.6 280.3L770.7 278.8L763.8 277.5L760.4 270.6L754.6 271.1L749.4 269.4L751.9 278.0L754.9 291.1L756.5 295.7L750.9 295.0L748.2 295.7L743.3 295.0L736.4 298.6L731.6 292.5L725.2 291.6L718.7 295.7L716.6 293.7L706.7 296.9L703.9 302.7L709.1 304.2L707.5 306.1L711.0 309.0L704.6 310.5L710.4 316.2L717.6 314.5L726.4 317.9L730.5 323.9L734.0 322.2L740.4 323.4L740.1 328.4L745.3 328.8L746.9 332.4L744.5 335.2L749.3 342.3L752.0 347.0L759.7 351.6L762.1 354.9L763.0 359.7L764.1 367.4L763.6 368.5L761.3 381.5L760.5 389.9L759.7 399.6L757.3 411.9L755.6 415.7L752.0 418.1L748.8 419.2L745.3 419.6L736.9 417.0L732.4 418.5L728.9 417.9L719.5 415.9L711.6 417.7L699.3 416.1L689.6 414.3L686.6 411.7L685.3 413.4L675.5 414.1L667.4 414.3L658.4 411.4L657.0 408.8L651.2 411.7L648.0 415.7L645.5 418.1L638.9 419.2L632.3 424.1L631.5 428.9L634.9 431.3L635.9 436.1L639.6 435.0L640.7 439.4L638.3 442.2L638.3 445.5L638.0 450.2L638.3 454.6L641.2 466.3L639.9 477.2L638.0 487.5L634.8 499.1L629.5 504.1L629.1 512.4L627.8 516.1L629.1 517.7L633.6 517.7L632.3 523.5L637.5 522.3L638.3 523.9L638.0 533.1L639.4 537.8L639.1 543.7L636.0 552.0L636.9 552.4L641.2 550.4L643.3 549.7L648.0 550.8L653.1 552.4L657.6 549.9L661.6 548.3L668.9 548.3L670.8 549.7L678.0 556.4L679.3 561.8L682.7 566.8L683.7 568.8L690.6 572.2L693.0 569.8L694.6 569.6L697.8 564.0L702.2 562.2L709.6 558.0L718.2 557.4L724.0 557.8L732.1 557.4L740.9 555.6L745.4 558.0L750.1 552.6L755.2 544.3L760.5 541.0L764.9 540.2L769.5 539.6L768.1 536.2L769.7 532.5L771.6 528.2L772.9 524.9L778.6 521.0L784.3 517.1L782.4 514.9L778.2 512.0L775.3 501.8L777.1 497.4L781.0 491.3L787.1 483.1L794.6 475.9L800.8 467.2L809.8 464.6L815.7 461.4L820.1 458.0L825.7 455.2L831.0 451.3L832.1 447.0L831.8 442.4L834.0 441.1L830.2 436.6L829.7 428.5L831.6 423.0L836.9 420.1L840.2 417.4L846.3 413.9L851.9 416.3L857.0 418.5L859.5 417.4L867.0 419.6L869.8 421.6L876.0 424.1L879.2 425.6L880.4 424.1L888.1 420.8L889.5 417.0L893.6 414.1L897.6 410.8L900.0 410.1L905.8 408.1L909.8 406.8L917.0 397.4L924.3 394.9L928.6 397.4L938.6 401.9L945.5 407.0L946.3 414.1L949.5 427.8L953.7 428.0L957.3 431.7L960.5 439.4L970.4 445.9L978.2 453.9L983.8 459.9L990.7 464.9L993.8 463.6L998.9 465.1L1005.0 469.5L1009.8 473.0L1011.5 478.0L1013.5 477.4L1018.2 476.4L1021.7 483.3L1026.4 490.1L1032.0 489.2L1034.5 492.8L1038.5 504.1L1041.2 513.6L1039.6 517.7L1035.3 519.4L1035.6 524.7L1033.5 527.0L1032.4 530.1L1039.0 533.5L1042.3 527.4L1046.8 518.2L1055.7 513.6L1056.2 509.9L1056.2 503.7L1046.0 496.4L1049.3 486.5L1057.9 480.8L1068.6 485.2L1069.8 489.4L1076.0 494.9L1078.2 487.5L1069.4 477.2L1058.9 470.6L1052.0 466.8L1042.5 462.7L1036.7 456.1L1040.9 450.7L1036.1 449.6L1028.3 450.2L1021.9 448.1L1017.1 445.5L1012.3 440.5L1009.4 437.9L1003.9 427.4L1002.6 422.3L998.1 412.6L993.3 410.3L988.3 406.1L982.8 402.7L980.1 399.6L978.2 394.7L982.5 382.7L978.2 376.5L979.3 371.5L984.0 370.1L987.8 367.8L995.9 366.0L998.3 363.2L1002.1 366.7L1001.5 369.0L998.9 369.4L998.1 371.7L999.4 376.3L1000.0 379.7L1003.4 384.5L1004.4 386.8L1008.2 379.7L1010.8 373.8L1012.9 374.0L1017.1 377.7L1020.3 381.5L1023.2 392.2L1029.0 397.4L1025.6 401.4L1029.1 405.4L1036.4 410.1L1042.0 414.8L1045.1 415.0L1049.1 416.6L1054.4 419.6L1061.0 425.2L1065.3 429.8L1071.6 433.9L1073.7 435.5L1078.7 438.3L1082.5 439.0L1083.7 442.0L1087.9 445.9L1089.5 449.8L1095.7 452.2L1093.5 462.7L1094.0 471.3L1094.1 480.8L1091.1 482.3L1098.1 488.6L1102.3 493.4L1106.7 501.2L1108.8 505.7L1114.4 512.6L1113.6 515.7L1119.7 521.2L1125.3 524.5L1130.8 525.3L1130.2 527.0L1124.5 529.6L1123.2 538.8L1129.2 545.3L1129.7 556.0L1134.5 553.4L1136.3 551.8L1139.3 558.4L1142.2 564.8L1143.7 557.2L1149.8 561.4L1153.8 563.6L1151.4 554.4L1147.8 547.3L1147.4 540.8L1153.0 546.3L1157.8 542.3L1150.6 533.5L1156.2 532.5L1160.7 533.3L1163.1 536.2L1167.0 539.2L1167.6 538.0L1166.7 529.0L1162.6 525.6L1160.2 522.7L1150.6 518.8L1144.1 514.0L1148.2 507.4L1155.4 508.4L1152.2 503.2L1146.6 494.9L1144.1 485.0L1149.6 477.4L1151.4 484.4L1157.0 491.8L1161.8 486.5L1165.1 491.3L1165.9 483.3L1173.1 487.5L1164.3 479.1L1164.3 474.2L1173.3 471.0L1179.5 472.7L1184.8 470.0L1196.7 473.0L1199.6 475.5L1208.5 478.0L1201.7 489.7L1202.1 490.7L1200.0 501.6L1211.7 499.5L1210.1 504.3L1213.0 510.1L1214.0 513.0L1210.9 518.4L1216.5 522.9L1206.9 519.8L1203.7 525.6L1211.4 528.0L1219.1 535.0L1218.9 544.9L1224.6 547.5L1221.8 551.8L1232.6 553.0L1222.2 558.4L1235.3 555.4L1243.9 558.4L1248.7 560.0L1253.8 567.2L1257.4 568.4L1265.6 566.4L1269.6 568.4L1272.2 560.4L1274.4 554.8L1285.5 557.0L1295.3 561.6L1300.2 567.0L1308.7 572.0L1316.6 569.6L1326.4 565.0L1332.3 560.4L1337.6 556.4L1342.0 555.4L1349.7 561.0L1356.3 557.0L1362.4 560.8L1357.9 564.2L1358.9 570.8L1356.0 581.9L1358.4 585.0L1358.7 588.6L1357.7 594.3L1356.9 603.3L1350.0 621.3L1592.9 630.9L1592.9 -36.0ZM726.3 22.1L731.9 23.0L730.9 29.2L721.9 39.0L720.0 46.6L716.6 47.2L712.8 58.3L718.4 55.0L727.9 51.1L733.0 52.3L748.5 52.0L752.0 57.7L747.2 68.1L745.3 73.7L741.1 81.1L739.1 85.5L734.8 88.7L739.0 93.6L729.8 98.5L729.2 102.3L736.9 100.0L740.4 101.7L746.2 104.0L748.5 108.3L757.8 129.5L758.6 132.9L761.3 138.8L770.8 144.3L774.2 150.1L779.4 154.5L782.4 169.2L775.8 166.0L782.3 171.4L786.1 181.1L783.9 187.5L788.5 186.4L801.6 186.7L808.8 198.7L801.2 212.6L791.9 223.5L804.0 227.3L801.9 234.0L796.4 239.4L784.7 243.7L778.4 241.7L767.9 244.0L763.0 242.2L748.8 244.7L741.1 249.6L732.4 244.7L725.8 247.0L722.1 256.9L713.9 253.6L697.0 263.4L688.6 260.6L692.5 257.1L699.7 248.5L707.9 236.6L713.1 235.8L724.8 232.0L732.7 225.5L738.8 221.7L729.5 225.5L717.1 221.7L711.0 222.7L705.1 219.8L697.8 218.3L695.4 213.9L700.5 211.3L715.0 200.5L715.5 192.3L703.9 190.2L712.0 181.1L706.2 176.5L711.5 173.6L719.0 176.0L731.6 173.6L731.4 162.7L734.0 156.4L728.7 155.1L722.1 143.8L727.6 131.5L722.7 134.3L715.5 135.7L709.9 139.0L702.5 140.4L697.8 132.9L699.4 130.1L702.5 123.4L706.2 117.1L704.2 103.1L695.4 106.0L690.6 118.3L687.4 121.7L689.8 107.4L690.6 101.7L692.7 89.9L680.6 80.5L686.9 72.6L688.8 64.3L689.0 50.8L697.7 45.7L693.8 35.0L700.2 23.3L704.2 25.2L724.0 24.3ZM662.1 119.4L668.1 124.5L681.7 123.9L687.4 139.9L693.0 144.0L689.8 151.5L678.5 157.8L682.5 175.4L684.1 185.6L678.2 206.8L668.1 207.6L648.0 216.5L643.4 221.7L622.7 225.5L627.8 219.6L616.1 222.2L626.2 214.4L613.4 213.9L612.6 208.6L623.0 204.2L620.9 196.5L628.7 186.2L635.9 179.5L635.1 177.6L616.6 174.1L626.2 163.3L616.6 159.2L619.8 149.6L640.7 149.6L647.1 141.3L639.1 138.5L647.1 125.9L657.9 122.5ZM669.7 621.3L674.5 606.6L679.3 594.5L681.7 588.2L683.5 582.9L685.4 576.5L687.4 576.7L695.4 574.4L695.9 580.3L705.9 588.2L717.4 587.2L733.0 583.5L733.5 588.8L745.3 590.4L750.7 590.2L759.7 586.2L770.4 578.3L775.8 575.4L781.9 573.8L801.6 562.2L816.0 560.4L829.9 557.0L843.7 554.0L862.4 557.4L873.5 556.0L886.3 552.4L891.6 554.8L896.0 550.8L905.5 554.4L916.6 554.4L921.5 553.2L929.1 547.7L939.4 546.9L944.7 548.9L946.3 556.4L958.4 550.8L959.2 555.4L951.5 564.4L951.8 575.8L954.8 576.9L958.5 582.3L960.0 587.6L953.7 597.2L943.1 605.8L941.5 630.9ZM864.3 -36.0L864.3 5.6L870.7 12.8L869.9 21.2L876.3 28.9L886.8 34.1L894.0 43.2L900.6 42.0L909.3 38.4L915.4 35.0L919.0 32.3L921.7 28.6L924.3 23.6L929.1 20.6L932.0 15.9L937.5 11.8L942.0 10.3L947.9 3.7L949.2 -36.0ZM952.1 -36.0L956.8 5.6L957.6 10.3L960.3 13.7L961.1 32.0L964.5 34.4L967.2 42.6L971.2 51.7L974.5 58.3L977.5 69.6L981.7 75.5L987.3 82.3L983.8 89.3L980.9 93.0L984.9 100.3L987.0 105.4L989.7 113.2L986.8 118.8L992.2 119.7L1002.9 118.0L1009.0 119.4L1011.5 114.6L1010.7 103.7L1015.2 100.3L1019.7 96.8L1031.4 97.1L1038.8 94.5L1043.8 82.6L1045.2 71.4L1045.2 64.9L1048.3 49.9L1050.9 36.5L1047.6 24.3L1054.1 19.6L1055.7 22.1L1062.9 15.0L1066.9 8.7L1069.4 15.0L1076.6 5.6L1084.6 -3.9L1086.2 -36.0ZM679.3 51.7L672.1 57.7L676.1 63.7L685.7 69.6L689.0 63.7L684.1 54.7ZM679.3 84.3L677.7 93.0L689.0 93.0L689.0 85.8ZM680.1 26.7L666.4 42.6L668.1 50.2L676.1 48.7L680.9 35.0ZM663.2 51.7L660.0 72.6L664.8 69.6L665.6 54.7ZM680.9 103.1L676.1 113.2L683.3 111.7L684.1 104.6ZM729.2 5.6L727.6 14.0L733.2 16.5L735.6 10.3L733.2 4.0ZM710.7 146.2L703.4 156.4L707.5 155.1L711.5 148.2ZM755.7 243.0L759.7 247.8L763.4 245.2L760.5 243.5ZM983.3 100.8L983.3 110.9L980.9 121.7L974.5 126.7L972.0 130.4L962.4 123.1L959.8 120.8L958.9 110.9L962.4 102.6L971.2 102.6L978.5 98.2ZM937.1 116.0L942.8 114.0L951.9 113.2L954.4 121.4L951.1 128.7L945.3 127.3L939.9 122.5ZM957.6 138.5L961.6 131.5L972.0 134.3L975.3 130.9L973.7 141.3L964.0 139.9ZM1017.9 121.7L1017.1 130.1L1024.3 127.9L1021.9 123.1ZM1074.7 53.2L1071.8 63.7L1072.3 74.9L1077.4 68.1L1083.8 59.8L1083.8 50.2L1089.5 44.1L1085.4 45.7ZM1055.4 61.6L1044.4 95.9L1046.8 94.5L1053.3 75.5ZM1139.3 22.7L1132.1 33.5L1135.3 45.7L1142.5 36.5L1155.4 33.5L1153.8 25.8ZM1144.1 8.7L1135.3 16.5L1144.1 19.6L1150.6 15.0ZM932.2 426.3L932.6 432.8L931.8 451.3L929.9 456.7L928.0 461.2L923.8 455.2L921.1 449.8L919.0 445.3L921.4 435.7L930.2 433.3L931.0 426.9ZM928.5 464.4L933.4 471.3L938.6 479.5L936.7 492.0L933.8 509.5L927.0 507.2L923.0 514.0L915.8 510.5L917.4 492.8L911.9 478.9L912.9 470.6L920.7 471.5ZM1030.8 528.0L1032.4 526.6L1025.8 526.6L1006.1 531.3L995.7 529.6L985.4 528.4L981.7 531.7L980.6 536.2L983.0 539.2L991.0 542.3L999.1 547.1L1009.8 551.2L1024.0 558.6L1026.6 551.0L1023.4 542.3L1026.7 535.2ZM832.1 491.8L835.0 499.1L828.9 505.9L818.4 500.1L823.3 494.9ZM841.8 489.7L849.8 493.8L849.8 491.8L844.2 489.0ZM803.2 509.5L801.6 514.6L806.4 512.6ZM1159.4 586.2L1160.2 580.3L1168.3 581.9L1182.8 585.2L1194.0 586.2L1203.7 587.2L1202.1 592.1L1190.8 592.1L1179.5 593.7L1166.7 588.2L1159.4 588.2ZM1299.7 590.2L1316.2 585.4L1337.0 578.3L1326.7 589.8L1321.6 594.1L1312.2 598.6L1301.8 597.0ZM1234.2 563.4L1227.0 570.4L1227.0 574.4L1235.0 566.4ZM1203.7 503.2L1196.4 507.4L1203.7 511.5L1208.5 510.5ZM1200.4 519.8L1197.2 529.0L1201.2 526.0ZM1208.5 536.2L1215.7 539.2L1210.1 537.2ZM1175.5 532.1L1160.2 522.9L1150.6 511.1L1160.2 512.2L1169.9 520.8L1176.3 529.0ZM1096.7 494.9L1103.9 503.2L1101.5 499.1ZM1111.2 521.9L1108.0 530.1L1115.2 529.0ZM1112.8 533.1L1116.0 539.2L1117.6 536.2ZM365.7 535.2L376.9 538.2L370.5 536.2ZM340.7 515.7L346.4 518.8L343.2 517.7ZM317.4 519.8L330.3 523.9L322.2 521.9ZM278.0 501.2L279.6 504.3ZM1182.7 533.5L1181.8 533.1L1180.4 533.6L1178.9 534.9L1178.0 536.4L1177.9 537.6L1178.8 538.0L1180.3 537.5L1181.8 536.2L1182.7 534.7ZM1186.9 539.5L1186.3 539.1L1185.2 539.3L1184.2 540.0L1183.5 541.0L1183.5 541.8L1184.1 542.2L1185.1 542.0L1186.1 541.3L1186.8 540.3ZM1190.1 543.3L1189.9 542.7L1189.3 542.3L1188.5 542.3L1187.8 542.7L1187.6 543.3L1187.8 543.9L1188.5 544.2L1189.3 544.2L1189.9 543.9ZM1192.6 551.4L1192.2 549.6L1191.1 548.5L1189.8 548.5L1188.8 549.6L1188.4 551.4L1188.8 553.1L1189.8 554.2L1191.1 554.2L1192.2 553.1ZM1186.6 550.8L1186.3 549.8L1185.6 549.2L1184.7 549.2L1184.0 549.8L1183.7 550.8L1184.0 551.7L1184.7 552.3L1185.6 552.3L1186.3 551.7ZM1182.3 543.5L1182.1 542.6L1181.7 542.1L1181.2 542.1L1180.8 542.6L1180.7 543.5L1180.8 544.3L1181.2 544.8L1181.7 544.8L1182.1 544.3ZM1172.9 539.8L1172.8 538.8L1172.3 538.1L1171.7 538.1L1171.2 538.8L1171.0 539.8L1171.2 540.9L1171.7 541.6L1172.3 541.6L1172.8 540.9ZM1174.2 544.3L1174.1 543.5L1173.7 542.9L1173.2 542.9L1172.8 543.5L1172.6 544.3L1172.8 545.1L1173.2 545.6L1173.7 545.6L1174.1 545.1ZM1175.4 549.3L1175.2 548.8L1174.7 548.4L1174.1 548.4L1173.6 548.8L1173.4 549.3L1173.6 549.9L1174.1 550.3L1174.7 550.3L1175.2 549.9ZM1178.4 552.8L1178.3 551.9L1177.9 551.4L1177.4 551.4L1177.0 551.9L1176.8 552.8L1177.0 553.6L1177.4 554.1L1177.9 554.1L1178.3 553.6ZM1175.8 558.4L1175.4 557.5L1174.2 556.9L1172.7 556.9L1171.5 557.5L1171.0 558.4L1171.5 559.3L1172.7 559.9L1174.2 559.9L1175.4 559.3ZM1189.0 558.0L1188.8 557.4L1188.2 557.0L1187.6 557.0L1187.0 557.4L1186.8 558.0L1187.0 558.6L1187.6 559.0L1188.2 559.0L1188.8 558.6ZM1199.6 553.7L1198.9 553.5L1197.6 554.0L1196.1 555.1L1195.1 556.2L1194.8 557.0L1195.5 557.2L1196.9 556.7L1198.3 555.7L1199.4 554.6ZM1190.6 564.4L1190.5 563.5L1190.1 562.9L1189.6 562.9L1189.2 563.5L1189.0 564.4L1189.2 565.3L1189.6 565.9L1190.1 565.9L1190.5 565.3ZM1206.6 561.0L1206.2 560.3L1205.2 559.9L1204.0 559.9L1203.1 560.3L1202.7 561.0L1203.1 561.7L1204.0 562.1L1205.2 562.1L1206.2 561.7ZM1220.4 554.8L1219.7 554.4L1218.0 554.5L1216.1 555.3L1214.7 556.3L1214.3 557.2L1215.0 557.6L1216.7 557.4L1218.6 556.7L1220.0 555.7ZM1215.7 552.8L1215.5 552.1L1214.9 551.6L1214.2 551.6L1213.7 552.1L1213.5 552.8L1213.7 553.5L1214.2 553.9L1214.9 553.9L1215.5 553.5ZM1213.3 549.3L1213.2 548.5L1212.8 548.0L1212.3 548.0L1211.9 548.5L1211.7 549.3L1211.9 550.2L1212.3 550.7L1212.8 550.7L1213.2 550.2ZM1208.3 545.9L1208.2 545.2L1207.9 544.8L1207.5 544.8L1207.2 545.2L1207.0 545.9L1207.2 546.6L1207.5 547.1L1207.9 547.1L1208.2 546.6ZM1204.3 541.4L1203.9 540.5L1202.5 539.5L1200.6 538.8L1198.9 538.6L1198.2 539.0L1198.6 540.0L1200.0 541.0L1201.9 541.7L1203.6 541.9ZM1218.3 580.3L1218.1 578.0L1217.4 576.5L1216.6 576.5L1216.0 578.0L1215.7 580.3L1216.0 582.6L1216.6 584.1L1217.4 584.1L1218.1 582.6ZM1190.0 492.8L1189.4 491.2L1187.8 490.2L1185.8 490.2L1184.2 491.2L1183.6 492.8L1184.2 494.4L1185.8 495.4L1187.8 495.4L1189.4 494.4ZM1179.2 476.4L1178.8 475.1L1177.8 474.3L1176.5 474.3L1175.4 475.1L1175.0 476.4L1175.4 477.6L1176.5 478.4L1177.8 478.4L1178.8 477.6ZM1193.2 480.8L1192.9 480.1L1192.1 479.6L1191.1 479.6L1190.3 480.1L1190.0 480.8L1190.3 481.5L1191.1 482.0L1192.1 482.0L1192.9 481.5ZM1177.2 513.1L1176.5 512.6L1175.4 512.9L1174.3 513.8L1173.7 515.1L1173.8 516.2L1174.5 516.7L1175.7 516.4L1176.7 515.5L1177.3 514.2ZM1161.4 508.4L1161.0 507.8L1160.0 507.5L1158.8 507.5L1157.9 507.8L1157.5 508.4L1157.9 509.0L1158.8 509.4L1160.0 509.4L1161.0 509.0ZM1159.6 537.6L1159.4 537.0L1158.9 536.6L1158.3 536.6L1157.8 537.0L1157.7 537.6L1157.8 538.2L1158.3 538.6L1158.9 538.6L1159.4 538.2ZM1151.9 567.4L1151.6 566.0L1151.0 565.1L1150.2 565.1L1149.5 566.0L1149.3 567.4L1149.5 568.8L1150.2 569.7L1151.0 569.7L1151.6 568.8ZM1198.8 487.1L1198.4 486.4L1197.2 485.9L1195.7 485.9L1194.5 486.4L1194.0 487.1L1194.5 487.9L1195.7 488.3L1197.2 488.3L1198.4 487.9ZM1200.1 494.5L1200.0 494.0L1199.6 493.7L1199.1 493.7L1198.7 494.0L1198.5 494.5L1198.7 495.0L1199.1 495.3L1199.6 495.3L1200.0 495.0ZM1114.1 517.7L1113.8 516.2L1113.2 515.2L1112.4 515.2L1111.7 516.2L1111.5 517.7L1111.7 519.3L1112.4 520.3L1113.2 520.3L1113.8 519.3ZM1216.5 538.2L1215.8 537.4L1213.7 536.9L1211.3 536.9L1209.3 537.4L1208.5 538.2L1209.3 539.0L1211.3 539.6L1213.7 539.6L1215.8 539.0ZM1014.2 574.4L1013.9 573.7L1013.1 573.2L1012.1 573.2L1011.3 573.7L1011.0 574.4L1011.3 575.1L1012.1 575.5L1013.1 575.5L1013.9 575.1ZM974.1 556.4L974.0 555.8L973.5 555.4L972.9 555.4L972.4 555.8L972.2 556.4L972.4 557.0L972.9 557.3L973.5 557.3L974.0 557.0ZM984.1 581.9L984.0 581.5L983.6 581.3L983.1 581.3L982.7 581.5L982.5 581.9L982.7 582.2L983.1 582.5L983.6 582.5L984.0 582.2ZM1232.9 566.1L1231.0 564.2L1228.9 563.8L1227.2 565.2L1226.7 567.8L1227.5 570.6L1229.4 572.6L1231.5 573.0L1233.2 571.6L1233.7 569.0Z" fill="#f2efe9" stroke="#f2efe9" stroke-width="1" stroke-linejoin="round"/>
<defs><clipPath id="lclip"><path d="M1160.2 -36.0L1167.5 0.9L1158.6 8.7L1159.3 13.7L1158.6 25.2L1174.7 31.0L1174.7 40.5L1172.5 46.6L1172.5 50.2L1173.3 64.9L1167.5 71.7L1161.8 73.5L1154.1 67.8L1147.4 57.7L1144.1 50.2L1127.1 61.0L1124.5 72.6L1121.3 76.1L1118.3 86.9L1119.2 104.0L1120.3 110.3L1118.4 121.7L1110.1 131.2L1102.0 131.2L1100.7 140.2L1092.7 146.8L1081.1 147.6L1079.0 143.5L1075.5 134.9L1062.9 136.8L1051.8 141.5L1044.1 146.0L1031.1 152.9L1018.2 157.0L1009.8 160.0L1005.0 156.4L999.4 153.7L996.5 139.0L989.7 145.4L981.7 145.4L974.9 152.9L964.8 159.2L955.5 158.6L954.4 155.1L957.3 147.6L943.9 147.6L941.5 139.3L939.9 134.3L940.7 131.5L932.2 129.0L933.4 123.1L933.4 116.3L937.6 114.0L935.1 110.3L941.8 109.7L939.2 105.7L945.0 97.4L949.5 98.8L956.4 89.9L947.9 85.8L946.3 84.3L946.5 72.6L949.9 62.8L950.2 59.5L951.1 50.2L940.8 55.0L936.8 61.6L919.0 69.0L913.0 79.0L912.5 81.4L911.2 98.8L911.4 101.7L910.6 114.3L916.1 116.8L917.4 125.9L920.3 130.9L920.6 137.6L925.1 144.6L919.0 149.6L923.0 154.2L920.6 161.4L917.4 168.7L911.7 172.8L911.4 170.9L906.1 166.0L896.5 168.7L896.5 175.4L894.8 177.3L892.1 176.0L888.4 172.8L880.4 174.1L867.5 180.3L862.7 184.8L857.2 185.9L855.6 191.0L854.3 199.2L851.9 205.0L849.3 208.4L846.9 211.8L843.4 216.0L840.2 218.6L836.1 223.0L838.1 225.8L833.4 228.1L827.6 231.2L822.1 234.5L818.8 235.8L810.4 238.4L806.1 240.4L806.4 244.2L806.1 249.3L806.7 257.4L802.7 260.9L798.0 264.1L786.6 268.4L783.1 270.4L782.3 275.1L784.3 276.8L781.8 278.3L776.6 280.3L770.7 278.8L763.8 277.5L760.4 270.6L754.6 271.1L749.4 269.4L751.9 278.0L754.9 291.1L756.5 295.7L750.9 295.0L748.2 295.7L743.3 295.0L736.4 298.6L731.6 292.5L725.2 291.6L718.7 295.7L716.6 293.7L706.7 296.9L703.9 302.7L709.1 304.2L707.5 306.1L711.0 309.0L704.6 310.5L710.4 316.2L717.6 314.5L726.4 317.9L730.5 323.9L734.0 322.2L740.4 323.4L740.1 328.4L745.3 328.8L746.9 332.4L744.5 335.2L749.3 342.3L752.0 347.0L759.7 351.6L762.1 354.9L763.0 359.7L764.1 367.4L763.6 368.5L761.3 381.5L760.5 389.9L759.7 399.6L757.3 411.9L755.6 415.7L752.0 418.1L748.8 419.2L745.3 419.6L736.9 417.0L732.4 418.5L728.9 417.9L719.5 415.9L711.6 417.7L699.3 416.1L689.6 414.3L686.6 411.7L685.3 413.4L675.5 414.1L667.4 414.3L658.4 411.4L657.0 408.8L651.2 411.7L648.0 415.7L645.5 418.1L638.9 419.2L632.3 424.1L631.5 428.9L634.9 431.3L635.9 436.1L639.6 435.0L640.7 439.4L638.3 442.2L638.3 445.5L638.0 450.2L638.3 454.6L641.2 466.3L639.9 477.2L638.0 487.5L634.8 499.1L629.5 504.1L629.1 512.4L627.8 516.1L629.1 517.7L633.6 517.7L632.3 523.5L637.5 522.3L638.3 523.9L638.0 533.1L639.4 537.8L639.1 543.7L636.0 552.0L636.9 552.4L641.2 550.4L643.3 549.7L648.0 550.8L653.1 552.4L657.6 549.9L661.6 548.3L668.9 548.3L670.8 549.7L678.0 556.4L679.3 561.8L682.7 566.8L683.7 568.8L690.6 572.2L693.0 569.8L694.6 569.6L697.8 564.0L702.2 562.2L709.6 558.0L718.2 557.4L724.0 557.8L732.1 557.4L740.9 555.6L745.4 558.0L750.1 552.6L755.2 544.3L760.5 541.0L764.9 540.2L769.5 539.6L768.1 536.2L769.7 532.5L771.6 528.2L772.9 524.9L778.6 521.0L784.3 517.1L782.4 514.9L778.2 512.0L775.3 501.8L777.1 497.4L781.0 491.3L787.1 483.1L794.6 475.9L800.8 467.2L809.8 464.6L815.7 461.4L820.1 458.0L825.7 455.2L831.0 451.3L832.1 447.0L831.8 442.4L834.0 441.1L830.2 436.6L829.7 428.5L831.6 423.0L836.9 420.1L840.2 417.4L846.3 413.9L851.9 416.3L857.0 418.5L859.5 417.4L867.0 419.6L869.8 421.6L876.0 424.1L879.2 425.6L880.4 424.1L888.1 420.8L889.5 417.0L893.6 414.1L897.6 410.8L900.0 410.1L905.8 408.1L909.8 406.8L917.0 397.4L924.3 394.9L928.6 397.4L938.6 401.9L945.5 407.0L946.3 414.1L949.5 427.8L953.7 428.0L957.3 431.7L960.5 439.4L970.4 445.9L978.2 453.9L983.8 459.9L990.7 464.9L993.8 463.6L998.9 465.1L1005.0 469.5L1009.8 473.0L1011.5 478.0L1013.5 477.4L1018.2 476.4L1021.7 483.3L1026.4 490.1L1032.0 489.2L1034.5 492.8L1038.5 504.1L1041.2 513.6L1039.6 517.7L1035.3 519.4L1035.6 524.7L1033.5 527.0L1032.4 530.1L1039.0 533.5L1042.3 527.4L1046.8 518.2L1055.7 513.6L1056.2 509.9L1056.2 503.7L1046.0 496.4L1049.3 486.5L1057.9 480.8L1068.6 485.2L1069.8 489.4L1076.0 494.9L1078.2 487.5L1069.4 477.2L1058.9 470.6L1052.0 466.8L1042.5 462.7L1036.7 456.1L1040.9 450.7L1036.1 449.6L1028.3 450.2L1021.9 448.1L1017.1 445.5L1012.3 440.5L1009.4 437.9L1003.9 427.4L1002.6 422.3L998.1 412.6L993.3 410.3L988.3 406.1L982.8 402.7L980.1 399.6L978.2 394.7L982.5 382.7L978.2 376.5L979.3 371.5L984.0 370.1L987.8 367.8L995.9 366.0L998.3 363.2L1002.1 366.7L1001.5 369.0L998.9 369.4L998.1 371.7L999.4 376.3L1000.0 379.7L1003.4 384.5L1004.4 386.8L1008.2 379.7L1010.8 373.8L1012.9 374.0L1017.1 377.7L1020.3 381.5L1023.2 392.2L1029.0 397.4L1025.6 401.4L1029.1 405.4L1036.4 410.1L1042.0 414.8L1045.1 415.0L1049.1 416.6L1054.4 419.6L1061.0 425.2L1065.3 429.8L1071.6 433.9L1073.7 435.5L1078.7 438.3L1082.5 439.0L1083.7 442.0L1087.9 445.9L1089.5 449.8L1095.7 452.2L1093.5 462.7L1094.0 471.3L1094.1 480.8L1091.1 482.3L1098.1 488.6L1102.3 493.4L1106.7 501.2L1108.8 505.7L1114.4 512.6L1113.6 515.7L1119.7 521.2L1125.3 524.5L1130.8 525.3L1130.2 527.0L1124.5 529.6L1123.2 538.8L1129.2 545.3L1129.7 556.0L1134.5 553.4L1136.3 551.8L1139.3 558.4L1142.2 564.8L1143.7 557.2L1149.8 561.4L1153.8 563.6L1151.4 554.4L1147.8 547.3L1147.4 540.8L1153.0 546.3L1157.8 542.3L1150.6 533.5L1156.2 532.5L1160.7 533.3L1163.1 536.2L1167.0 539.2L1167.6 538.0L1166.7 529.0L1162.6 525.6L1160.2 522.7L1150.6 518.8L1144.1 514.0L1148.2 507.4L1155.4 508.4L1152.2 503.2L1146.6 494.9L1144.1 485.0L1149.6 477.4L1151.4 484.4L1157.0 491.8L1161.8 486.5L1165.1 491.3L1165.9 483.3L1173.1 487.5L1164.3 479.1L1164.3 474.2L1173.3 471.0L1179.5 472.7L1184.8 470.0L1196.7 473.0L1199.6 475.5L1208.5 478.0L1201.7 489.7L1202.1 490.7L1200.0 501.6L1211.7 499.5L1210.1 504.3L1213.0 510.1L1214.0 513.0L1210.9 518.4L1216.5 522.9L1206.9 519.8L1203.7 525.6L1211.4 528.0L1219.1 535.0L1218.9 544.9L1224.6 547.5L1221.8 551.8L1232.6 553.0L1222.2 558.4L1235.3 555.4L1243.9 558.4L1248.7 560.0L1253.8 567.2L1257.4 568.4L1265.6 566.4L1269.6 568.4L1272.2 560.4L1274.4 554.8L1285.5 557.0L1295.3 561.6L1300.2 567.0L1308.7 572.0L1316.6 569.6L1326.4 565.0L1332.3 560.4L1337.6 556.4L1342.0 555.4L1349.7 561.0L1356.3 557.0L1362.4 560.8L1357.9 564.2L1358.9 570.8L1356.0 581.9L1358.4 585.0L1358.7 588.6L1357.7 594.3L1356.9 603.3L1350.0 621.3L1592.9 630.9L1592.9 -36.0ZM726.3 22.1L731.9 23.0L730.9 29.2L721.9 39.0L720.0 46.6L716.6 47.2L712.8 58.3L718.4 55.0L727.9 51.1L733.0 52.3L748.5 52.0L752.0 57.7L747.2 68.1L745.3 73.7L741.1 81.1L739.1 85.5L734.8 88.7L739.0 93.6L729.8 98.5L729.2 102.3L736.9 100.0L740.4 101.7L746.2 104.0L748.5 108.3L757.8 129.5L758.6 132.9L761.3 138.8L770.8 144.3L774.2 150.1L779.4 154.5L782.4 169.2L775.8 166.0L782.3 171.4L786.1 181.1L783.9 187.5L788.5 186.4L801.6 186.7L808.8 198.7L801.2 212.6L791.9 223.5L804.0 227.3L801.9 234.0L796.4 239.4L784.7 243.7L778.4 241.7L767.9 244.0L763.0 242.2L748.8 244.7L741.1 249.6L732.4 244.7L725.8 247.0L722.1 256.9L713.9 253.6L697.0 263.4L688.6 260.6L692.5 257.1L699.7 248.5L707.9 236.6L713.1 235.8L724.8 232.0L732.7 225.5L738.8 221.7L729.5 225.5L717.1 221.7L711.0 222.7L705.1 219.8L697.8 218.3L695.4 213.9L700.5 211.3L715.0 200.5L715.5 192.3L703.9 190.2L712.0 181.1L706.2 176.5L711.5 173.6L719.0 176.0L731.6 173.6L731.4 162.7L734.0 156.4L728.7 155.1L722.1 143.8L727.6 131.5L722.7 134.3L715.5 135.7L709.9 139.0L702.5 140.4L697.8 132.9L699.4 130.1L702.5 123.4L706.2 117.1L704.2 103.1L695.4 106.0L690.6 118.3L687.4 121.7L689.8 107.4L690.6 101.7L692.7 89.9L680.6 80.5L686.9 72.6L688.8 64.3L689.0 50.8L697.7 45.7L693.8 35.0L700.2 23.3L704.2 25.2L724.0 24.3ZM662.1 119.4L668.1 124.5L681.7 123.9L687.4 139.9L693.0 144.0L689.8 151.5L678.5 157.8L682.5 175.4L684.1 185.6L678.2 206.8L668.1 207.6L648.0 216.5L643.4 221.7L622.7 225.5L627.8 219.6L616.1 222.2L626.2 214.4L613.4 213.9L612.6 208.6L623.0 204.2L620.9 196.5L628.7 186.2L635.9 179.5L635.1 177.6L616.6 174.1L626.2 163.3L616.6 159.2L619.8 149.6L640.7 149.6L647.1 141.3L639.1 138.5L647.1 125.9L657.9 122.5ZM669.7 621.3L674.5 606.6L679.3 594.5L681.7 588.2L683.5 582.9L685.4 576.5L687.4 576.7L695.4 574.4L695.9 580.3L705.9 588.2L717.4 587.2L733.0 583.5L733.5 588.8L745.3 590.4L750.7 590.2L759.7 586.2L770.4 578.3L775.8 575.4L781.9 573.8L801.6 562.2L816.0 560.4L829.9 557.0L843.7 554.0L862.4 557.4L873.5 556.0L886.3 552.4L891.6 554.8L896.0 550.8L905.5 554.4L916.6 554.4L921.5 553.2L929.1 547.7L939.4 546.9L944.7 548.9L946.3 556.4L958.4 550.8L959.2 555.4L951.5 564.4L951.8 575.8L954.8 576.9L958.5 582.3L960.0 587.6L953.7 597.2L943.1 605.8L941.5 630.9ZM864.3 -36.0L864.3 5.6L870.7 12.8L869.9 21.2L876.3 28.9L886.8 34.1L894.0 43.2L900.6 42.0L909.3 38.4L915.4 35.0L919.0 32.3L921.7 28.6L924.3 23.6L929.1 20.6L932.0 15.9L937.5 11.8L942.0 10.3L947.9 3.7L949.2 -36.0ZM952.1 -36.0L956.8 5.6L957.6 10.3L960.3 13.7L961.1 32.0L964.5 34.4L967.2 42.6L971.2 51.7L974.5 58.3L977.5 69.6L981.7 75.5L987.3 82.3L983.8 89.3L980.9 93.0L984.9 100.3L987.0 105.4L989.7 113.2L986.8 118.8L992.2 119.7L1002.9 118.0L1009.0 119.4L1011.5 114.6L1010.7 103.7L1015.2 100.3L1019.7 96.8L1031.4 97.1L1038.8 94.5L1043.8 82.6L1045.2 71.4L1045.2 64.9L1048.3 49.9L1050.9 36.5L1047.6 24.3L1054.1 19.6L1055.7 22.1L1062.9 15.0L1066.9 8.7L1069.4 15.0L1076.6 5.6L1084.6 -3.9L1086.2 -36.0ZM679.3 51.7L672.1 57.7L676.1 63.7L685.7 69.6L689.0 63.7L684.1 54.7ZM679.3 84.3L677.7 93.0L689.0 93.0L689.0 85.8ZM680.1 26.7L666.4 42.6L668.1 50.2L676.1 48.7L680.9 35.0ZM663.2 51.7L660.0 72.6L664.8 69.6L665.6 54.7ZM680.9 103.1L676.1 113.2L683.3 111.7L684.1 104.6ZM729.2 5.6L727.6 14.0L733.2 16.5L735.6 10.3L733.2 4.0ZM710.7 146.2L703.4 156.4L707.5 155.1L711.5 148.2ZM755.7 243.0L759.7 247.8L763.4 245.2L760.5 243.5ZM983.3 100.8L983.3 110.9L980.9 121.7L974.5 126.7L972.0 130.4L962.4 123.1L959.8 120.8L958.9 110.9L962.4 102.6L971.2 102.6L978.5 98.2ZM937.1 116.0L942.8 114.0L951.9 113.2L954.4 121.4L951.1 128.7L945.3 127.3L939.9 122.5ZM957.6 138.5L961.6 131.5L972.0 134.3L975.3 130.9L973.7 141.3L964.0 139.9ZM1017.9 121.7L1017.1 130.1L1024.3 127.9L1021.9 123.1ZM1074.7 53.2L1071.8 63.7L1072.3 74.9L1077.4 68.1L1083.8 59.8L1083.8 50.2L1089.5 44.1L1085.4 45.7ZM1055.4 61.6L1044.4 95.9L1046.8 94.5L1053.3 75.5ZM1139.3 22.7L1132.1 33.5L1135.3 45.7L1142.5 36.5L1155.4 33.5L1153.8 25.8ZM1144.1 8.7L1135.3 16.5L1144.1 19.6L1150.6 15.0ZM932.2 426.3L932.6 432.8L931.8 451.3L929.9 456.7L928.0 461.2L923.8 455.2L921.1 449.8L919.0 445.3L921.4 435.7L930.2 433.3L931.0 426.9ZM928.5 464.4L933.4 471.3L938.6 479.5L936.7 492.0L933.8 509.5L927.0 507.2L923.0 514.0L915.8 510.5L917.4 492.8L911.9 478.9L912.9 470.6L920.7 471.5ZM1030.8 528.0L1032.4 526.6L1025.8 526.6L1006.1 531.3L995.7 529.6L985.4 528.4L981.7 531.7L980.6 536.2L983.0 539.2L991.0 542.3L999.1 547.1L1009.8 551.2L1024.0 558.6L1026.6 551.0L1023.4 542.3L1026.7 535.2ZM832.1 491.8L835.0 499.1L828.9 505.9L818.4 500.1L823.3 494.9ZM841.8 489.7L849.8 493.8L849.8 491.8L844.2 489.0ZM803.2 509.5L801.6 514.6L806.4 512.6ZM1159.4 586.2L1160.2 580.3L1168.3 581.9L1182.8 585.2L1194.0 586.2L1203.7 587.2L1202.1 592.1L1190.8 592.1L1179.5 593.7L1166.7 588.2L1159.4 588.2ZM1299.7 590.2L1316.2 585.4L1337.0 578.3L1326.7 589.8L1321.6 594.1L1312.2 598.6L1301.8 597.0ZM1234.2 563.4L1227.0 570.4L1227.0 574.4L1235.0 566.4ZM1203.7 503.2L1196.4 507.4L1203.7 511.5L1208.5 510.5ZM1200.4 519.8L1197.2 529.0L1201.2 526.0ZM1208.5 536.2L1215.7 539.2L1210.1 537.2ZM1175.5 532.1L1160.2 522.9L1150.6 511.1L1160.2 512.2L1169.9 520.8L1176.3 529.0ZM1096.7 494.9L1103.9 503.2L1101.5 499.1ZM1111.2 521.9L1108.0 530.1L1115.2 529.0ZM1112.8 533.1L1116.0 539.2L1117.6 536.2ZM365.7 535.2L376.9 538.2L370.5 536.2ZM340.7 515.7L346.4 518.8L343.2 517.7ZM317.4 519.8L330.3 523.9L322.2 521.9ZM278.0 501.2L279.6 504.3ZM1182.7 533.5L1181.8 533.1L1180.4 533.6L1178.9 534.9L1178.0 536.4L1177.9 537.6L1178.8 538.0L1180.3 537.5L1181.8 536.2L1182.7 534.7ZM1186.9 539.5L1186.3 539.1L1185.2 539.3L1184.2 540.0L1183.5 541.0L1183.5 541.8L1184.1 542.2L1185.1 542.0L1186.1 541.3L1186.8 540.3ZM1190.1 543.3L1189.9 542.7L1189.3 542.3L1188.5 542.3L1187.8 542.7L1187.6 543.3L1187.8 543.9L1188.5 544.2L1189.3 544.2L1189.9 543.9ZM1192.6 551.4L1192.2 549.6L1191.1 548.5L1189.8 548.5L1188.8 549.6L1188.4 551.4L1188.8 553.1L1189.8 554.2L1191.1 554.2L1192.2 553.1ZM1186.6 550.8L1186.3 549.8L1185.6 549.2L1184.7 549.2L1184.0 549.8L1183.7 550.8L1184.0 551.7L1184.7 552.3L1185.6 552.3L1186.3 551.7ZM1182.3 543.5L1182.1 542.6L1181.7 542.1L1181.2 542.1L1180.8 542.6L1180.7 543.5L1180.8 544.3L1181.2 544.8L1181.7 544.8L1182.1 544.3ZM1172.9 539.8L1172.8 538.8L1172.3 538.1L1171.7 538.1L1171.2 538.8L1171.0 539.8L1171.2 540.9L1171.7 541.6L1172.3 541.6L1172.8 540.9ZM1174.2 544.3L1174.1 543.5L1173.7 542.9L1173.2 542.9L1172.8 543.5L1172.6 544.3L1172.8 545.1L1173.2 545.6L1173.7 545.6L1174.1 545.1ZM1175.4 549.3L1175.2 548.8L1174.7 548.4L1174.1 548.4L1173.6 548.8L1173.4 549.3L1173.6 549.9L1174.1 550.3L1174.7 550.3L1175.2 549.9ZM1178.4 552.8L1178.3 551.9L1177.9 551.4L1177.4 551.4L1177.0 551.9L1176.8 552.8L1177.0 553.6L1177.4 554.1L1177.9 554.1L1178.3 553.6ZM1175.8 558.4L1175.4 557.5L1174.2 556.9L1172.7 556.9L1171.5 557.5L1171.0 558.4L1171.5 559.3L1172.7 559.9L1174.2 559.9L1175.4 559.3ZM1189.0 558.0L1188.8 557.4L1188.2 557.0L1187.6 557.0L1187.0 557.4L1186.8 558.0L1187.0 558.6L1187.6 559.0L1188.2 559.0L1188.8 558.6ZM1199.6 553.7L1198.9 553.5L1197.6 554.0L1196.1 555.1L1195.1 556.2L1194.8 557.0L1195.5 557.2L1196.9 556.7L1198.3 555.7L1199.4 554.6ZM1190.6 564.4L1190.5 563.5L1190.1 562.9L1189.6 562.9L1189.2 563.5L1189.0 564.4L1189.2 565.3L1189.6 565.9L1190.1 565.9L1190.5 565.3ZM1206.6 561.0L1206.2 560.3L1205.2 559.9L1204.0 559.9L1203.1 560.3L1202.7 561.0L1203.1 561.7L1204.0 562.1L1205.2 562.1L1206.2 561.7ZM1220.4 554.8L1219.7 554.4L1218.0 554.5L1216.1 555.3L1214.7 556.3L1214.3 557.2L1215.0 557.6L1216.7 557.4L1218.6 556.7L1220.0 555.7ZM1215.7 552.8L1215.5 552.1L1214.9 551.6L1214.2 551.6L1213.7 552.1L1213.5 552.8L1213.7 553.5L1214.2 553.9L1214.9 553.9L1215.5 553.5ZM1213.3 549.3L1213.2 548.5L1212.8 548.0L1212.3 548.0L1211.9 548.5L1211.7 549.3L1211.9 550.2L1212.3 550.7L1212.8 550.7L1213.2 550.2ZM1208.3 545.9L1208.2 545.2L1207.9 544.8L1207.5 544.8L1207.2 545.2L1207.0 545.9L1207.2 546.6L1207.5 547.1L1207.9 547.1L1208.2 546.6ZM1204.3 541.4L1203.9 540.5L1202.5 539.5L1200.6 538.8L1198.9 538.6L1198.2 539.0L1198.6 540.0L1200.0 541.0L1201.9 541.7L1203.6 541.9ZM1218.3 580.3L1218.1 578.0L1217.4 576.5L1216.6 576.5L1216.0 578.0L1215.7 580.3L1216.0 582.6L1216.6 584.1L1217.4 584.1L1218.1 582.6ZM1190.0 492.8L1189.4 491.2L1187.8 490.2L1185.8 490.2L1184.2 491.2L1183.6 492.8L1184.2 494.4L1185.8 495.4L1187.8 495.4L1189.4 494.4ZM1179.2 476.4L1178.8 475.1L1177.8 474.3L1176.5 474.3L1175.4 475.1L1175.0 476.4L1175.4 477.6L1176.5 478.4L1177.8 478.4L1178.8 477.6ZM1193.2 480.8L1192.9 480.1L1192.1 479.6L1191.1 479.6L1190.3 480.1L1190.0 480.8L1190.3 481.5L1191.1 482.0L1192.1 482.0L1192.9 481.5ZM1177.2 513.1L1176.5 512.6L1175.4 512.9L1174.3 513.8L1173.7 515.1L1173.8 516.2L1174.5 516.7L1175.7 516.4L1176.7 515.5L1177.3 514.2ZM1161.4 508.4L1161.0 507.8L1160.0 507.5L1158.8 507.5L1157.9 507.8L1157.5 508.4L1157.9 509.0L1158.8 509.4L1160.0 509.4L1161.0 509.0ZM1159.6 537.6L1159.4 537.0L1158.9 536.6L1158.3 536.6L1157.8 537.0L1157.7 537.6L1157.8 538.2L1158.3 538.6L1158.9 538.6L1159.4 538.2ZM1151.9 567.4L1151.6 566.0L1151.0 565.1L1150.2 565.1L1149.5 566.0L1149.3 567.4L1149.5 568.8L1150.2 569.7L1151.0 569.7L1151.6 568.8ZM1198.8 487.1L1198.4 486.4L1197.2 485.9L1195.7 485.9L1194.5 486.4L1194.0 487.1L1194.5 487.9L1195.7 488.3L1197.2 488.3L1198.4 487.9ZM1200.1 494.5L1200.0 494.0L1199.6 493.7L1199.1 493.7L1198.7 494.0L1198.5 494.5L1198.7 495.0L1199.1 495.3L1199.6 495.3L1200.0 495.0ZM1114.1 517.7L1113.8 516.2L1113.2 515.2L1112.4 515.2L1111.7 516.2L1111.5 517.7L1111.7 519.3L1112.4 520.3L1113.2 520.3L1113.8 519.3ZM1216.5 538.2L1215.8 537.4L1213.7 536.9L1211.3 536.9L1209.3 537.4L1208.5 538.2L1209.3 539.0L1211.3 539.6L1213.7 539.6L1215.8 539.0ZM1014.2 574.4L1013.9 573.7L1013.1 573.2L1012.1 573.2L1011.3 573.7L1011.0 574.4L1011.3 575.1L1012.1 575.5L1013.1 575.5L1013.9 575.1ZM974.1 556.4L974.0 555.8L973.5 555.4L972.9 555.4L972.4 555.8L972.2 556.4L972.4 557.0L972.9 557.3L973.5 557.3L974.0 557.0ZM984.1 581.9L984.0 581.5L983.6 581.3L983.1 581.3L982.7 581.5L982.5 581.9L982.7 582.2L983.1 582.5L983.6 582.5L984.0 582.2ZM1232.9 566.1L1231.0 564.2L1228.9 563.8L1227.2 565.2L1226.7 567.8L1227.5 570.6L1229.4 572.6L1231.5 573.0L1233.2 571.6L1233.7 569.0Z"/></clipPath></defs>
<path d="M-590.6 182.5L-583.6 181.2L-576.5 183.7L-569.6 180.5L-562.6 179.9L-555.5 179.7L-548.5 180.7L-541.4 182.3L-534.3 182.0L-527.3 181.3L-520.2 182.0L-513.2 181.5L-506.3 179.1L-499.2 178.4L-492.1 180.8L-485.1 179.9L-478.2 177.1L-471.1 179.2L-464.1 177.9L-457.0 177.7L-450.0 177.3L-443.0 176.5L-436.0 175.7L-428.9 176.4L-421.9 176.5L-414.7 178.4L-407.8 175.2L-400.7 178.0L-393.7 175.0L-386.7 175.4L-379.6 176.8L-372.6 176.6L-365.6 174.9L-358.6 173.3L-351.5 174.6L-344.5 174.0L-337.4 175.8L-330.4 172.9L-323.4 173.3L-316.3 175.0L-309.4 171.7L-302.3 172.8L-295.2 174.0L-288.2 172.7M-288.2 172.7L-281.1 172.6L-274.6 168.9L-267.6 167.9L-260.7 166.9L-253.3 168.9L-246.7 165.5L-239.5 166.1L-232.5 165.6L-225.9 162.6L-219.0 161.3L-211.6 162.7L-204.9 160.4L-198.1 158.1L-191.0 158.6L-184.2 156.1L-177.3 154.9L-170.5 152.9L-163.2 154.5L-156.2 154.0L-149.4 152.0L-142.3 152.0L-135.9 147.7L-128.8 147.4L-121.7 147.2L-114.5 147.8L-107.6 146.8L-101.0 143.7L-94.1 142.1L-87.1 141.7L-80.1 140.9L-72.9 141.4L-66.4 137.7L-59.1 138.8L-52.2 137.5L-45.2 136.8L-38.3 135.5L-31.5 133.9L-24.7 131.8L-17.8 130.7L-10.8 129.8L-3.6 130.2L2.9 126.7L9.9 126.0L17.2 127.0L23.8 124.1L30.6 122.4L37.6 121.2L44.8 122.0L51.6 120.1L58.9 121.4L65.8 120.0L72.8 119.3L79.3 115.7L86.2 114.0L93.1 113.0L100.3 113.3L107.3 113.0L114.1 111.0L120.9 109.2L128.0 108.8L135.0 108.5L142.0 107.6L148.9 106.8L155.9 106.1L162.8 104.4L169.4 101.4L176.7 102.9L183.4 99.9L190.5 99.8L197.3 98.1L204.4 98.3L211.1 95.3L218.0 94.4L225.0 93.4L231.9 92.0L239.2 93.5L246.0 91.4L252.8 89.4L259.7 88.6L267.0 89.7L273.7 86.9L280.5 84.8L287.7 85.8L294.6 84.2L301.7 84.4L308.1 80.1L315.3 80.4L322.4 80.6L329.3 79.6L336.3 78.8L342.8 74.6L349.9 74.5L356.7 72.8L363.7 72.0L371.0 73.7L377.8 71.3L384.9 71.4L391.5 68.4L398.7 69.1L405.4 66.5L412.3 64.8L419.5 65.6L426.5 65.1L433.0 61.1L440.2 61.8L447.1 60.8L453.9 58.3L460.9 57.8L467.7 55.9L474.7 55.1L481.6 54.2L488.8 54.4L495.7 53.5L502.4 50.8L509.2 49.1L516.4 49.2L523.5 49.4L530.1 46.5L537.2 45.9L544.0 44.5L551.3 45.5L558.1 43.4M558.1 43.4L556.6 36.3L553.2 29.5L551.7 22.4L551.1 15.0L550.0 7.8L548.7 0.6L545.1 -6.1L543.7 -13.3L543.2 -20.7M543.2 -20.7L536.4 -22.4L529.3 -22.4L522.3 -23.0L515.3 -24.1L508.7 -27.5L501.4 -26.2L494.6 -28.1L487.5 -28.4L480.6 -29.7L473.9 -32.3L467.0 -33.8L459.7 -32.6L452.6 -33.0L446.0 -36.0L438.7 -35.1L431.7 -35.5L425.2 -39.7L418.0 -39.0L411.2 -41.5L404.1 -41.0L397.4 -43.8L390.2 -43.3L383.1 -43.3L376.0 -43.8L369.4 -46.7L362.4 -48.1L355.6 -50.1L348.2 -48.2L341.6 -51.1L334.5 -51.3L327.6 -52.8L320.4 -52.5L313.6 -54.0L306.7 -55.9L300.0 -58.4L292.6 -56.5L285.8 -58.9L279.1 -61.1L272.2 -62.7L264.8 -61.0L257.8 -61.8L251.3 -65.7L244.4 -66.9L237.1 -66.1L230.0 -65.6L223.5 -69.8L216.2 -68.9L209.5 -71.8L202.4 -71.8L195.6 -73.6L188.3 -72.2L181.7 -75.5L174.4 -74.5L167.5 -76.2L160.8 -78.8L153.9 -79.8L146.6 -78.5L139.6 -79.7L132.8 -81.4L125.9 -82.8L118.8 -83.4L111.7 -83.5L104.9 -85.0L98.2 -87.7L91.3 -89.4L83.9 -87.3L77.2 -90.2L70.3 -92.0L63.0 -90.4L56.5 -94.3L49.1 -92.8L42.4 -95.5L35.5 -96.4L28.5 -97.7L21.4 -97.6L14.5 -99.0L7.6 -100.6L0.6 -101.1L-6.2 -103.0L-13.3 -103.3L-20.3 -104.3L-27.4 -103.8L-34.1 -107.0L-41.1 -107.6L-48.2 -107.7L-54.9 -110.6L-61.8 -111.7L-68.9 -111.6L-76.0 -111.6L-82.8 -113.7L-90.0 -113.4L-96.9 -114.6L-103.7 -116.7L-110.9 -116.5L-117.6 -118.8L-124.6 -120.1L-131.8 -119.4L-138.4 -122.6L-145.7 -121.6L-152.3 -125.0L-159.2 -126.2L-166.3 -126.3L-173.5 -125.7L-180.2 -128.3L-187.2 -128.9L-193.9 -132.0L-201.3 -130.1L-207.9 -133.7L-214.7 -135.2L-221.8 -135.3L-228.7 -136.7L-236.0 -135.5L-242.6 -139.3L-249.8 -138.6L-256.5 -141.3L-263.5 -142.2L-270.8 -140.6L-277.5 -143.8L-284.3 -145.4L-291.8 -143.3L-298.6 -145.4L-305.3 -147.8L-312.6 -146.7L-319.1 -150.4L-326.4 -149.2L-333.1 -152.2L-340.4 -150.8L-347.2 -153.1L-353.9 -155.7L-361.2 -154.2L-368.2 -155.4L-375.0 -157.3L-382.1 -157.7L-389.2 -157.7L-396.0 -159.2L-403.0 -160.2L-409.5 -164.0L-416.6 -164.1L-423.5 -165.9L-430.8 -164.4L-437.5 -167.6L-444.8 -166.3L-451.5 -168.8L-458.4 -170.2L-465.5 -170.2L-472.2 -173.1L-479.3 -173.0L-486.3 -174.1L-493.1 -176.2L-500.4 -174.5L-506.9 -178.7L-514.1 -178.4L-521.1 -178.6L-527.9 -181.1L-535.1 -180.2L-541.7 -183.9L-548.9 -183.4L-555.9 -183.7L-562.7 -186.2L-569.8 -186.0L-576.9 -186.1L-583.6 -189.2L-590.6 -189.4M-590.6 376.7L-583.6 375.0L-576.6 377.6L-569.6 375.5L-562.5 376.8L-555.5 377.9L-548.5 376.4L-541.4 376.5L-534.4 375.2L-527.4 373.9L-520.4 373.9L-513.3 374.3L-506.3 375.8L-499.2 375.1L-492.2 375.2L-485.2 376.5L-478.2 373.7L-471.1 373.9L-464.1 375.3L-457.1 372.9L-450.0 372.8L-443.0 373.9L-436.0 372.9L-428.9 373.7L-421.9 373.1L-414.9 374.3L-407.8 374.2L-400.8 372.7L-393.8 374.1L-386.7 373.5L-379.7 372.2L-372.6 374.9L-365.7 372.3L-358.6 371.9L-351.6 371.6L-344.5 373.4L-337.5 374.2L-330.5 373.7L-323.5 372.3L-316.4 371.7L-309.4 370.6L-302.3 372.8L-295.3 372.4L-288.3 371.5L-281.3 372.5L-274.2 371.7L-267.2 373.3L-260.2 372.5L-253.2 370.6L-246.1 372.9L-239.1 369.7L-232.0 371.3L-225.0 370.8L-218.0 370.0L-211.0 369.3L-203.9 371.8L-196.9 368.9L-189.9 370.7L-182.8 372.0L-175.8 369.1L-168.8 369.2L-161.7 370.5L-154.7 370.0L-147.7 370.4L-140.6 370.9L-133.6 368.5L-126.6 368.9L-119.6 368.8L-112.5 367.8L-105.5 370.7L-98.4 370.2L-91.4 369.8L-84.4 367.2L-77.3 370.1L-70.3 369.6L-63.3 368.5L-56.2 369.4L-49.2 368.2L-42.2 367.3L-35.2 366.8L-28.1 367.1L-21.1 366.3L-14.1 367.3L-7.0 368.7L0.0 368.4L7.0 368.8L14.1 368.2L21.1 366.5L28.1 367.4L35.1 366.9L42.2 368.0L49.2 367.0L56.2 365.9L63.3 367.2L70.3 368.3L77.3 365.5L84.4 367.7L91.4 364.5L98.4 365.3L105.5 365.1L112.5 366.8L119.6 367.4L126.6 366.6L133.6 365.0L140.6 366.9L147.6 364.8L154.7 364.3L161.7 366.6L168.8 365.5L175.8 365.7L182.8 365.5L189.9 366.5L196.9 364.5L203.9 365.8L210.9 365.1L218.0 365.6L225.0 364.0L232.0 364.9L239.1 364.2L246.1 363.2L253.1 362.7L260.2 364.1L267.2 362.0L274.2 364.9L281.2 362.1L288.3 361.5L295.3 361.7L302.4 364.6L309.4 362.4L316.4 361.5L323.4 361.0L330.4 360.9L337.5 363.2L344.5 362.9L351.6 363.0L358.6 363.0L365.6 360.5L372.7 361.9M372.7 361.9L380.1 361.3L387.4 359.6L395.0 360.2L402.4 359.3L409.8 358.6L416.8 354.7L424.5 356.6L431.9 355.9L439.3 355.0L446.4 351.1L453.8 350.5L461.1 349.2L468.7 349.6M468.7 349.6L479.7 344.3M479.7 344.3L484.3 338.7L491.7 336.7L497.2 332.4L502.4 327.6L508.4 323.8L513.6 319.0L518.5 313.7L523.6 308.9L529.2 304.6L536.3 302.2L540.7 296.4L546.5 292.4L552.3 288.5L557.0 283.0L563.7 280.1M563.7 280.1L565.2 273.0L567.6 266.3L571.4 260.0L572.6 252.8L574.7 245.9L577.7 239.4M577.7 239.4L571.2 235.6L563.8 234.9L557.3 231.5L550.1 230.1L542.5 230.0L536.0 226.4L529.1 224.2L522.6 220.8L515.2 220.1L508.6 216.6L501.5 215.0L494.3 213.9L488.0 209.5L480.3 209.9L474.1 205.2L466.5 205.2L459.4 203.6L452.7 200.7L446.4 196.6L439.7 193.7L431.7 194.8L425.3 190.9L418.4 188.7L411.8 185.5L404.5 184.3M404.5 184.3L397.4 185.1L390.4 183.6L383.4 183.7L376.4 181.6L369.3 183.3L362.4 180.5L355.2 182.5L348.1 182.4L341.2 180.3L334.1 180.7L327.0 181.7L320.0 179.4L312.9 181.1L306.0 178.2L298.9 178.1L291.9 177.4L284.8 177.6L277.7 178.3L270.7 177.7L263.7 177.4L256.7 175.2L249.5 177.8L242.6 174.5L235.4 177.3L228.4 176.3L221.4 175.7L214.4 173.0L207.3 174.1L200.3 174.2L193.3 172.0L186.1 174.0L179.1 172.8L172.1 172.2L165.1 171.0L158.1 170.6L151.0 170.7L143.9 171.4L136.9 171.1L129.8 171.3L122.9 168.5L115.8 169.4M115.8 169.4L108.7 168.9L101.6 168.6L94.5 170.7L87.4 169.8L80.3 168.7L73.2 169.4L66.2 171.1L59.1 170.0L52.0 168.5L44.9 170.9L37.8 171.1L30.7 170.8L23.6 169.4L16.5 169.0L9.5 171.5L2.4 171.5L-4.7 171.3L-11.8 171.0L-18.9 170.4L-26.0 171.8L-33.1 171.2L-40.1 171.8L-47.2 169.0L-54.3 169.9L-61.4 172.3L-68.5 169.2L-75.6 172.4L-82.7 171.4L-89.8 169.3L-96.9 170.1L-103.9 170.3L-111.0 171.5L-118.1 172.4L-125.2 170.9L-132.3 172.8L-139.4 172.5L-146.5 171.9L-153.5 173.3L-160.6 172.0L-167.7 170.7L-174.8 171.1L-181.9 171.8L-189.0 171.4L-196.1 172.1L-203.1 173.3L-210.2 171.7L-217.3 172.4L-224.4 171.3L-231.5 170.8L-238.6 172.5L-245.7 172.1L-252.8 171.5L-259.8 172.7L-266.9 173.5L-274.0 171.8L-281.1 171.3L-288.2 172.7M558.1 43.4L563.2 49.2L569.1 53.9L574.5 59.3L580.6 63.9L586.8 68.4M586.8 68.4L591.7 62.3L595.7 55.5L599.8 48.8L605.3 43.1L609.4 36.4M609.4 36.4L606.7 29.5L606.6 22.2L606.6 14.9L605.1 7.8L603.5 0.7L600.9 -6.2L600.3 -13.4L599.1 -20.6L598.4 -27.8L596.4 -34.8L595.5 -42.0M595.5 -42.0L588.7 -39.9L581.8 -38.1L576.3 -32.9L569.1 -31.8L562.4 -29.6L556.4 -25.6L549.8 -23.3L543.2 -20.7M587.4 83.8L580.1 83.3L573.8 87.9L566.5 87.4L559.9 90.0L552.5 89.1L545.5 89.8L538.8 92.5L532.2 95.2L524.9 94.8L518.0 96.2L511.0 96.8L504.2 98.8L497.1 99.6L490.1 100.2L483.3 102.6L476.5 104.2L469.2 103.6L462.7 107.5L455.5 107.0L448.7 109.3L441.6 109.3L435.0 112.8L427.6 111.0L421.0 114.5L414.3 116.8L407.2 117.3L400.2 118.1L393.5 120.7L386.3 120.6L379.4 121.8L372.3 122.1L365.5 124.6L358.7 126.1L351.8 127.5L344.5 127.0L337.4 127.5L330.8 130.2L324.0 132.6L316.7 131.8L310.0 134.5L303.2 136.4L296.3 138.0L289.0 136.9L282.0 138.1L275.2 139.9L268.4 141.8L261.4 142.7L254.7 145.2L247.2 143.8L240.7 147.2L233.6 147.5L226.5 148.1L219.6 149.4L212.9 151.9L206.1 153.7L199.0 154.1L192.3 156.9L184.9 155.6L178.3 158.6L171.0 158.1L164.5 161.4L157.5 162.3L150.6 164.0L143.6 164.6L136.8 166.7L130.0 168.6L122.6 167.3L115.8 169.4M404.5 184.3L411.4 182.2L418.4 180.7L425.5 179.5L432.6 178.8L439.6 177.3L446.7 176.7L453.8 175.4L460.6 173.0L468.0 173.6L475.0 172.0L481.4 167.9L489.0 169.2L496.0 168.1L503.0 166.4L509.6 162.7L517.0 163.8L523.9 161.8L530.5 158.2L537.5 156.9L545.2 158.8L552.0 156.5L558.9 154.5M558.9 154.5L563.8 149.4L568.9 144.5L574.4 140.1L580.0 135.9L586.7 132.9L591.2 127.2L596.1 122.2L602.4 118.7M602.4 118.7L600.7 111.1L597.3 104.3L592.3 98.2L591.7 90.2L587.4 83.8M587.4 83.8L587.7 79.8M587.7 79.8L586.8 68.4M567.7 465.7L561.2 469.2L554.5 472.6L548.4 476.8L541.6 480.0L535.5 484.1L529.1 487.9L523.9 493.7L516.6 496.1L510.6 500.4L503.9 503.7L498.1 508.5L490.9 511.0L485.2 515.8L479.0 519.9M479.0 519.9L486.2 519.1L493.4 519.0L500.7 518.7L507.9 520.0L515.2 518.5L522.4 520.0L529.6 518.9L536.9 520.2L544.1 520.3L551.3 520.5L558.6 521.7L565.8 518.7L573.0 521.7L580.3 520.4L587.5 520.6M587.5 520.6L589.2 511.7L590.3 502.8M590.3 502.8L587.1 496.3L583.9 489.8L578.7 484.5L575.0 478.2L572.9 471.0L567.7 465.7M567.7 465.7L570.0 455.6L575.1 446.7M575.1 446.7L568.8 443.5L562.2 440.7L554.9 440.0L549.1 435.4L542.7 432.4L536.5 428.8L529.2 428.1L523.5 423.2L516.4 422.0L509.8 419.4L503.8 415.3L496.1 415.4L490.5 410.4L483.9 408.0L476.9 406.2L471.1 401.7L463.9 400.7L457.5 397.6L451.1 394.7L444.9 391.1L437.6 390.2L431.3 386.8L424.8 384.1L418.5 380.9L412.3 377.3L405.0 376.3L399.2 371.8L392.1 370.5L385.7 367.4L378.9 365.4L372.7 361.9M-590.6 659.5L-583.7 658.7L-576.5 659.5L-569.6 657.5L-562.6 657.2L-555.8 654.7L-548.8 653.8L-541.8 652.9L-534.7 653.1L-527.7 652.4L-520.7 652.1L-514.0 648.6L-506.7 650.2L-499.7 649.9L-492.8 647.9L-486.0 645.3L-478.9 645.3L-472.1 643.4L-465.0 643.2L-457.7 645.0L-450.9 643.1L-443.9 642.4L-436.8 642.0L-429.8 641.6L-422.9 639.7L-415.9 638.9L-408.9 638.1L-401.9 637.5L-395.0 636.3L-388.0 635.7L-381.2 633.2L-374.0 634.0L-367.1 632.4L-360.0 632.6L-353.3 629.4L-346.3 628.9L-339.3 627.5L-332.0 629.3L-325.0 629.0L-318.1 627.2L-311.2 625.3L-304.1 626.1L-297.1 625.1L-290.2 623.5L-283.3 621.6L-276.3 620.9L-269.3 620.5L-262.4 619.3L-255.3 618.8L-248.3 618.7L-241.1 618.9L-234.5 614.9L-227.3 615.9L-220.6 613.2L-213.5 612.6L-206.3 614.3L-199.4 612.6L-192.2 613.0L-185.5 610.4L-178.7 608.1L-171.5 608.6L-164.4 608.4L-157.3 608.8L-150.3 608.1L-143.5 605.5L-136.6 604.4L-129.7 602.5L-122.5 603.6L-115.7 601.2L-108.7 600.1L-101.8 598.8L-94.8 597.9L-87.5 599.5L-80.8 596.6L-73.5 598.8L-66.8 594.8L-59.5 596.8L-52.9 593.3L-45.9 592.1L-38.6 593.7L-31.8 591.2L-24.6 592.1L-17.9 589.3L-11.0 588.0L-3.7 589.7L3.3 588.6L10.3 588.3L17.3 587.0L24.0 583.9L31.2 585.0L38.2 584.4L45.1 582.7L52.3 583.5L59.0 580.3L66.3 582.0L73.2 580.2L79.8 576.9L86.8 576.0L94.1 577.5L101.1 577.2L107.8 573.7L114.9 573.7L122.1 574.4L128.8 571.5L136.1 573.2L142.9 571.0L149.7 568.6L156.8 568.9L163.9 568.8L170.8 567.4L177.9 567.4L184.7 564.7L192.0 566.2L198.8 563.8L205.9 564.0L212.8 563.1L219.7 561.5L226.7 560.5L233.9 561.1L240.9 560.8L247.8 559.4L254.7 557.8L261.6 556.0L268.5 554.3L275.9 556.7L282.7 554.9L289.8 554.5L296.6 551.9L303.7 552.0L310.8 552.5L317.7 551.1L324.6 549.5L331.5 547.6L338.5 547.2L345.7 548.0L352.5 545.3L359.6 545.6L366.5 544.4L373.6 544.6L380.6 543.5L387.4 540.8L394.2 538.9L401.3 539.0L408.4 538.7L415.4 538.2M415.4 538.2L422.5 536.4L429.8 535.2L437.0 533.4L443.2 528.5L451.0 529.2L458.1 527.1L465.2 525.2L472.0 522.2L479.0 519.9M409.5 1780.1L409.8 1773.1L412.9 1766.5L413.8 1759.5L414.5 1752.5L416.4 1745.7L415.5 1738.5L415.7 1731.4L418.4 1724.8L420.4 1718.0L419.4 1710.7L422.4 1704.1L424.2 1697.3L422.8 1690.0L425.2 1683.3L426.5 1676.4L426.9 1669.4L427.1 1662.3L428.3 1655.4L431.2 1648.8L432.4 1641.9L432.4 1634.8L432.1 1627.7L435.8 1621.1L436.8 1614.2L435.9 1607.0L438.3 1600.3L440.5 1593.5L441.5 1586.6L441.3 1579.5L442.3 1572.5L443.8 1565.7L443.5 1558.5L444.6 1551.6L445.6 1544.7L448.6 1538.0L448.5 1530.9L450.3 1524.1L450.8 1517.1L452.3 1510.3L452.1 1503.1L452.8 1496.2L457.3 1489.8L456.2 1482.5L456.3 1475.4L459.3 1468.8L460.9 1462.0L459.8 1454.7L462.5 1448.0L462.7 1441.0L464.4 1434.2L463.7 1427.0L464.8 1420.0L469.3 1413.7L470.0 1406.7L469.7 1399.5L471.1 1392.7L471.1 1385.6L474.1 1379.0L473.9 1371.8L476.9 1365.2L477.3 1358.2L478.6 1351.3L480.2 1344.5L478.8 1337.1L479.1 1330.1L480.8 1323.3L481.8 1316.3L482.6 1309.4L483.5 1302.4L486.4 1295.8L488.7 1289.1L488.3 1281.9L491.1 1275.3L492.1 1268.3L490.2 1260.9L493.2 1254.3L493.5 1247.3L493.7 1240.2L497.7 1233.8L496.3 1226.4L498.5 1219.7L499.9 1212.8L502.1 1206.1L502.2 1199.0L502.3 1191.9L503.6 1185.0L503.7 1177.9L507.6 1171.5L508.8 1164.6L507.2 1157.2L507.6 1150.2L509.5 1143.4L510.9 1136.5L514.0 1129.9L515.1 1123.0L516.0 1116.1L514.2 1108.7L518.0 1102.2L518.8 1095.2L519.7 1088.3L522.0 1081.5L519.8 1074.1L521.2 1067.2L524.4 1060.7L526.2 1053.8L526.3 1046.8L526.1 1039.6L528.2 1032.9L529.9 1026.1L528.7 1018.8L530.6 1012.0L531.4 1005.0L532.1 998.0L534.4 991.3L534.4 984.2L535.8 977.3L536.5 970.4L539.5 963.7L538.2 956.5L541.8 949.9L541.1 942.7L541.6 935.7L545.9 929.3L544.5 922.0L548.1 915.5L549.0 908.5L550.1 901.6L548.6 894.3L550.8 887.5L550.6 880.4L554.7 873.9L555.5 867.0L555.8 859.9L556.3 852.9L557.0 845.9L559.8 839.3L559.6 832.2L561.3 825.3L560.6 818.1L562.0 811.3L562.5 804.3L566.0 797.7L566.5 790.7L566.1 783.5L569.8 777.0L568.8 769.8L570.4 762.9L570.6 755.9L572.1 749.0L575.2 742.4L575.1 735.3M575.1 735.3L574.0 728.2L572.9 721.2L573.5 714.0L572.4 706.9L574.0 699.7L570.7 692.8L573.3 685.4L569.4 678.5L571.9 671.2L570.6 664.2L568.5 657.2L568.9 650.0L567.7 642.9L567.1 635.8L566.4 628.7L566.5 621.6L566.5 614.4M566.5 614.4L559.4 613.3L552.4 614.0L545.4 614.9L538.7 618.5L531.7 618.5L524.5 617.0L517.8 620.6L510.6 618.9L503.8 621.1L496.6 619.3L490.0 623.4L482.7 621.2L475.9 623.5L469.0 624.9L462.1 626.1L454.8 623.7L448.0 625.5L441.1 627.4L434.1 627.1L426.9 626.1L420.2 629.2L413.1 628.6L406.3 630.8L399.3 631.3L392.1 629.8L385.2 630.7L378.4 633.2L371.5 634.3L364.5 634.9L357.3 633.7L350.4 634.8L343.5 636.2L336.6 637.1L329.4 636.3L322.4 636.6L315.4 636.9L308.5 638.4L301.7 640.4L294.8 641.5L287.6 639.8L280.7 641.6L273.6 641.2L266.9 644.2L259.7 642.2L252.9 644.5L245.7 643.3L238.7 643.9L231.9 645.9L225.1 648.3L217.8 645.7L211.0 647.9L203.9 647.2L197.1 650.0L190.2 650.9L183.0 649.3L176.2 651.6L169.3 653.0L162.2 652.9L155.2 652.8L148.4 655.5L141.3 654.3L134.3 655.3L127.3 655.7L120.5 657.7L113.3 656.3L106.3 656.5L99.3 657.0L92.5 659.6L85.4 658.9L78.6 660.7L71.5 660.1L64.7 663.2L57.5 660.9L50.5 661.3L43.7 663.6L36.7 664.2L29.7 664.8L22.8 665.4L16.0 667.9L8.7 665.2L2.0 668.5L-5.0 669.3L-11.9 670.2L-19.0 670.4L-26.1 669.0L-32.8 672.5L-39.8 672.9L-47.0 671.4L-53.8 673.8L-60.7 675.1L-67.9 673.7L-74.8 674.4L-81.8 675.3L-88.8 675.3L-95.6 678.1L-102.8 676.0L-109.7 677.2L-116.5 680.3L-123.5 680.6L-130.6 680.0L-137.5 680.6L-144.4 682.0L-151.4 683.3L-158.4 682.9L-165.3 684.5L-172.4 683.5L-179.5 683.2L-186.2 686.5L-193.3 685.6L-200.4 685.6L-207.1 688.4L-214.3 686.6L-221.3 686.9L-228.1 689.5L-235.1 690.1L-242.2 689.2L-249.1 691.0L-256.0 692.1L-263.2 690.8L-270.1 692.1L-276.9 694.3L-283.8 695.3L-290.8 695.6L-297.9 695.9L-305.0 694.6L-311.9 695.9L-318.9 696.2L-325.9 697.2L-332.8 697.7L-339.5 701.2L-346.7 700.2L-353.8 699.3L-360.8 700.0L-367.5 703.1L-374.5 703.2L-381.6 703.1L-388.4 704.7L-395.5 704.7L-402.3 707.0L-409.4 706.4L-416.4 706.8L-423.2 709.2L-430.2 709.4L-437.4 707.1L-444.4 708.4L-451.4 708.5L-458.2 710.3L-465.3 710.3L-472.3 710.7L-479.2 711.3L-485.9 715.0L-493.1 713.5L-499.9 715.5L-507.1 714.7L-513.9 716.8L-521.0 716.5L-528.1 715.8L-534.9 717.5L-541.8 719.5L-548.8 719.2L-555.8 720.1L-562.9 718.9L-569.7 722.0L-576.6 722.6L-583.7 722.0L-590.6 723.2M546.8 -1196.0L548.5 -1189.0L547.1 -1181.9L546.2 -1174.8L548.1 -1167.9L549.4 -1160.9L549.0 -1153.8L549.1 -1146.8L550.8 -1139.9L551.3 -1132.8L551.6 -1125.8L551.4 -1118.8L551.3 -1111.7L552.1 -1104.7L552.6 -1097.7L553.5 -1090.7L552.2 -1083.6L551.5 -1076.5L552.7 -1069.5L553.2 -1062.5L553.2 -1055.5L555.2 -1048.6L553.7 -1041.4L555.0 -1034.5L555.0 -1027.4L555.1 -1020.4L556.0 -1013.4L556.9 -1006.4L557.5 -999.4L557.9 -992.4L557.2 -985.3L558.0 -978.3L557.6 -971.2L560.1 -964.3L559.2 -957.2L557.7 -950.1L560.3 -943.2L559.5 -936.1L560.1 -929.1L561.2 -922.1L559.0 -915.0L561.8 -908.1L560.5 -901.0L563.0 -894.1L563.7 -887.1L561.2 -879.9L563.1 -873.0L564.8 -866.0L563.9 -858.9L564.1 -851.9L563.4 -844.8L566.0 -837.9L565.9 -830.9L563.6 -823.7L564.8 -816.7L567.2 -809.8L566.9 -802.7L567.2 -795.7L566.4 -788.6L567.0 -781.6L566.5 -774.6L566.9 -767.6L568.4 -760.6L567.9 -753.5L568.3 -746.5L568.5 -739.5L569.9 -732.5L569.2 -725.4L569.8 -718.4L569.4 -711.4L572.6 -704.5L570.2 -697.3L573.7 -690.5L571.3 -683.3L572.3 -676.3L573.0 -669.3L571.7 -662.2L573.4 -655.2L574.3 -648.2L573.3 -641.2L573.4 -634.1L574.7 -627.1L575.8 -620.2L575.9 -613.1L576.3 -606.1L575.7 -599.0L577.6 -592.1L577.6 -585.0L577.3 -578.0L578.3 -571.0L578.8 -564.0L577.5 -556.9L577.6 -549.9L579.3 -542.9L579.8 -535.9L581.1 -528.9L581.0 -521.9L581.9 -514.9L580.7 -507.8L581.1 -500.7L583.2 -493.8L580.5 -486.6L583.0 -479.7L581.5 -472.6L581.9 -465.6L581.8 -458.5L584.9 -451.7L584.4 -444.6L583.0 -437.5L586.6 -430.6L586.8 -423.6L585.3 -416.5L585.9 -409.5L584.7 -402.4L585.6 -395.4L586.8 -388.4L585.5 -381.3L587.6 -374.4L587.9 -367.3L587.7 -360.3L589.1 -353.3L589.5 -346.3L589.0 -339.2L590.3 -332.3L588.5 -325.1L589.8 -318.2L590.7 -311.2L592.6 -304.2L591.9 -297.1L592.2 -290.1L592.0 -283.1L592.3 -276.0L591.5 -269.0L591.5 -261.9L593.6 -255.0L594.1 -248.0L593.8 -240.9L592.8 -233.8L595.5 -226.9L595.2 -219.9L594.5 -212.8L597.2 -205.9L597.0 -198.8L595.0 -191.7L595.9 -184.7L597.4 -177.7L599.2 -170.8L596.7 -163.6L597.8 -156.6L597.7 -149.6L597.4 -142.5L598.1 -135.5L600.1 -128.6L601.4 -121.6L601.3 -114.6L600.9 -107.5L601.2 -100.5L602.7 -93.5L603.1 -86.5L601.8 -79.4L602.3 -72.4L603.5 -65.4L601.6 -58.3L603.7 -51.3M603.7 -51.3L610.3 -48.4L617.9 -47.9L624.2 -44.1L630.6 -40.4L638.0 -39.5L644.3 -35.7L651.9 -35.5L658.4 -32.0L664.5 -27.7L671.6 -26.0L678.3 -23.3L685.7 -22.4L692.2 -18.8M692.2 -18.8L693.5 -19.4M693.5 -19.4L695.2 -26.2L697.2 -33.0L697.9 -40.0L701.0 -46.5L702.4 -53.4L705.8 -59.8L706.0 -67.0L707.2 -74.0L708.0 -81.1L709.9 -87.8L713.7 -94.1L713.2 -101.5L715.0 -108.3L717.0 -115.1L720.0 -121.6L722.8 -128.1L723.8 -135.1L726.2 -141.8L725.4 -149.3L727.0 -156.1L731.4 -162.2L731.6 -169.5L734.7 -175.9L735.2 -183.1L736.3 -190.0L738.4 -196.8L739.6 -203.7L744.2 -209.8L744.8 -216.9L745.8 -224.0L747.9 -230.7L749.4 -237.5L750.0 -244.7L754.7 -250.7L755.4 -257.8L758.5 -264.3L758.4 -271.6L760.8 -278.2L761.3 -285.4L762.3 -292.4L767.2 -298.4L768.6 -305.3L768.5 -312.6L772.3 -318.9L773.8 -325.7L773.8 -333.0L776.6 -339.6L779.6 -346.1L779.7 -353.3L783.1 -359.7L782.4 -367.1L784.6 -373.8L787.5 -380.3L787.6 -387.6L789.6 -394.3L793.4 -400.6L793.8 -407.8L796.6 -414.3L796.4 -421.7L798.0 -428.5L800.4 -435.2L801.5 -442.1L806.0 -448.3L805.4 -455.7L808.1 -462.3L808.3 -469.5L811.5 -475.9L812.8 -482.9L814.6 -489.7L815.2 -496.8L817.2 -503.5L821.4 -509.7L821.5 -517.0L822.9 -523.9L824.4 -530.7L826.5 -537.5L829.0 -544.1M829.0 -544.1L828.6 -551.2L828.4 -558.2L831.1 -565.1L830.4 -572.2L830.3 -579.2L832.7 -586.1L831.0 -593.2L832.2 -600.2L834.7 -607.1L832.6 -614.3L834.3 -621.2L836.2 -628.1L836.6 -635.1L834.7 -642.3L835.9 -649.3L837.7 -656.2L837.0 -663.3L839.6 -670.1L837.4 -677.3L840.5 -684.2L839.4 -691.3L838.9 -698.4L840.2 -705.3L839.6 -712.4L842.1 -719.3L841.0 -726.4L843.8 -733.2L843.2 -740.3L842.9 -747.4L842.9 -754.4L844.7 -761.3L843.8 -768.5L846.7 -775.3L844.5 -782.5L846.4 -789.4L847.0 -796.4L846.5 -803.5L848.8 -810.4L847.9 -817.5L849.4 -824.4L849.5 -831.5L849.1 -838.5L849.9 -845.5L849.3 -852.6L850.1 -859.6L853.0 -866.4L851.6 -873.6L853.3 -880.5L851.8 -887.6L853.9 -894.5L853.7 -901.6L854.7 -908.6L854.5 -915.6L854.1 -922.7L855.5 -929.7L855.7 -936.7L855.8 -943.7L858.5 -950.6L857.4 -957.7L858.3 -964.7L860.6 -971.6L860.6 -978.6L861.5 -985.6L861.9 -992.6L859.8 -999.8L860.8 -1006.8L860.4 -1013.8L863.3 -1020.7L863.7 -1027.7L863.1 -1034.8L863.8 -1041.8L865.2 -1048.7L865.8 -1055.7L864.7 -1062.9L867.3 -1069.7L866.0 -1076.8L867.5 -1083.8L866.4 -1090.9L866.7 -1097.9L870.0 -1104.7L869.9 -1111.8L870.3 -1118.8L868.4 -1126.0L868.9 -1133.0L869.8 -1140.0L870.4 -1147.0L871.3 -1154.0L872.1 -1161.0L871.3 -1168.0L872.8 -1175.0L874.5 -1181.9L873.3 -1189.0L875.0 -1196.0M595.5 -42.0L603.7 -51.3M577.7 239.4L585.9 237.3L593.1 232.9M593.1 232.9L595.2 225.8M595.2 225.8L592.1 219.2L589.3 212.5L584.5 206.7L581.8 200.0L579.3 193.1L574.9 187.2L570.5 181.3L569.9 173.4L566.4 167.0L561.5 161.4L558.9 154.5M575.1 446.7L578.2 444.6M578.2 444.6L576.5 437.4L579.5 430.2L578.6 422.9L576.6 415.7L577.3 408.5L576.8 401.3L579.3 394.1L578.3 386.8M578.3 386.8L571.1 385.5L565.1 380.8L558.0 379.0L550.4 379.0L544.3 374.6L537.1 373.3L530.6 369.7L523.9 367.1L516.4 366.7L509.3 365.0L503.5 359.7L496.0 359.2L489.7 355.1L482.6 353.6L475.8 351.2L468.7 349.6M415.4 538.2L422.3 540.8L429.6 541.5L436.9 542.3L444.3 542.3L451.0 546.0L458.4 546.5L465.5 548.3L472.3 551.2L480.1 549.8L486.8 553.5L494.4 552.4L501.1 556.1L508.2 557.9L515.7 557.4L522.7 559.9L529.5 562.8L536.9 563.1L544.2 564.2L551.5 564.6L558.8 565.4L565.7 568.4M565.7 568.4L573.6 565.8M573.6 565.8L576.1 558.9L579.2 552.3L581.5 545.4L584.8 538.9L587.2 531.9L591.4 525.8M591.4 525.8L587.5 520.6M566.5 614.4L567.9 613.8M567.9 613.8L568.3 606.2L567.8 598.6L565.8 591.1L565.5 583.6L566.1 575.9L565.7 568.4M595.2 225.8L600.7 218.7L607.7 212.8L612.1 204.9M612.1 204.9L615.1 198.2L618.5 191.7L623.8 186.3L625.0 178.6L629.8 173.0L633.1 166.4M633.1 166.4L632.4 158.3L634.0 150.1L632.9 142.0L632.6 133.8M632.6 133.8L625.5 129.2L617.0 127.3L610.2 121.9L602.4 118.7M479.7 344.3L487.1 343.6L494.4 342.0L501.9 342.1L509.3 341.3L516.3 337.6L523.7 337.2L531.1 336.4L538.4 334.8L545.7 333.2L553.1 333.0L560.5 331.6L568.1 332.4L575.3 330.4L582.7 329.5M582.7 329.5L587.7 323.3L594.1 318.7L600.4 313.9M600.4 313.9L595.1 309.2L589.6 304.6L583.9 300.3L578.4 295.7L573.0 291.1L570.1 283.6L563.7 280.1M587.7 79.8L595.1 78.9L601.7 74.9L609.4 75.4L616.8 74.6L623.6 71.4L630.4 68.1L637.9 67.8L645.0 65.9L652.0 63.3L659.5 62.8L666.2 59.2L673.8 59.2M673.8 59.2L675.3 45.5M675.3 45.5L674.9 36.3L671.6 27.8M671.6 27.8L663.7 28.3L656.0 29.5L648.0 29.5L640.4 31.5L632.8 34.1L625.1 35.2L617.4 36.6L609.4 36.4M573.6 565.8L581.7 568.5L587.7 574.9L595.4 578.2M595.4 578.2L602.8 575.7L608.8 570.5L616.0 567.6M616.0 567.6L612.3 560.5L611.3 552.6L609.4 544.9L607.1 537.3L603.1 530.4M603.1 530.4L591.4 525.8M567.9 613.8L577.1 612.9L586.2 615.4L595.4 614.7M595.4 614.7L596.6 607.4L596.3 600.1L594.8 592.8L594.3 585.5L595.4 578.2M575.1 735.3L578.0 728.4L578.1 720.8L580.1 713.7L582.5 706.7L583.7 699.4L587.1 692.7L586.9 685.0L588.0 677.7L591.7 671.0L593.7 663.9L596.2 656.9L597.6 649.6L600.1 642.7L602.1 635.5L602.3 628.0L604.2 620.8M604.2 620.8L595.4 614.7M590.3 502.8L596.3 498.7L601.5 493.5L607.7 489.8L614.2 486.5L619.0 480.9L626.2 478.5L631.0 472.8L637.6 469.7M637.6 469.7L636.6 462.8L637.6 455.6L635.1 448.8M635.1 448.8L627.9 449.8L620.7 449.4L613.7 447.5L606.5 447.8L599.6 445.4L592.3 447.4L585.4 443.9L578.2 444.6M578.3 386.8L585.3 385.5L591.7 382.8L597.9 379.4M597.9 379.4L598.1 378.8M598.1 378.8L595.6 371.8L592.9 365.0L592.0 357.5L589.3 350.6L586.8 343.7L584.3 336.7L582.7 329.5M600.4 313.9L607.5 313.3L614.6 313.6L621.8 313.8L628.9 313.6L635.9 311.7M635.9 311.7L641.2 302.2M641.2 302.2L640.9 294.1L642.3 286.3L643.8 278.4L644.9 270.5M644.9 270.5L639.3 266.1L633.1 262.6L627.0 258.8L621.0 255.0L615.8 250.1L610.3 245.6L605.6 239.9L599.8 235.9L593.1 232.9M702.8 1780.1L703.7 1773.0L703.8 1766.0L703.4 1759.0L701.8 1752.1L702.2 1745.0L699.1 1738.2L701.0 1731.0L700.4 1724.0L699.0 1717.1L699.6 1710.0L700.6 1703.0L698.6 1696.0L698.9 1689.0L697.3 1682.1L697.1 1675.1L698.7 1668.0L695.3 1661.1L695.5 1654.1L696.9 1647.0L695.8 1640.0L694.1 1633.1L695.9 1626.0L694.5 1619.0L694.9 1612.0L694.0 1605.0L694.0 1598.0L693.8 1591.0L692.9 1584.0L691.5 1577.0L691.4 1570.0L693.6 1562.9L692.1 1555.9L690.2 1549.0L692.5 1541.9L690.0 1535.0L689.1 1528.0L690.3 1520.9L689.0 1513.9L689.5 1506.9L689.4 1499.9L687.9 1492.9L688.8 1485.9L686.8 1478.9L687.9 1471.9L687.8 1464.9L685.6 1457.9L686.5 1450.9L684.9 1443.9L685.9 1436.9L687.1 1429.8L685.6 1422.8L685.9 1415.8L685.7 1408.8L683.0 1401.9L685.9 1394.7L684.5 1387.8L682.0 1380.9L684.3 1373.7L682.3 1366.8L681.2 1359.8L683.7 1352.7L681.9 1345.8L682.4 1338.7L679.7 1331.8L681.7 1324.7L678.8 1317.8L679.1 1310.8L679.2 1303.8L677.6 1296.8L679.3 1289.7L677.6 1282.8L677.6 1275.8L678.7 1268.7L677.4 1261.7L678.7 1254.6L677.4 1247.7L678.0 1240.6L676.5 1233.7L677.4 1226.6L676.9 1219.6L674.1 1212.7L675.8 1205.6L674.0 1198.7L675.2 1191.6L674.6 1184.6L674.7 1177.6L671.9 1170.7L672.4 1163.7L673.4 1156.6L673.8 1149.6L672.7 1142.6L669.9 1135.7L671.6 1128.6L669.4 1121.7L670.7 1114.6L671.3 1107.6L668.4 1100.7L671.0 1093.5L669.8 1086.6L667.9 1079.6L667.4 1072.6L667.9 1065.6L669.0 1058.5L667.8 1051.5L665.7 1044.6L665.1 1037.6L665.0 1030.6L667.2 1023.5L664.6 1016.6L665.6 1009.5L664.3 1002.6L665.4 995.5L664.0 988.5L662.8 981.6L665.1 974.4L663.5 967.5L663.7 960.5L663.8 953.4L664.0 946.4L660.3 939.6L661.1 932.5L660.1 925.5L661.0 918.5L662.0 911.4L661.4 904.4L658.3 897.5L658.5 890.5L660.5 883.4L659.6 876.4L658.3 869.4L658.2 862.4L656.7 855.5L658.9 848.4L656.9 841.4L658.3 834.3L657.0 827.4L654.7 820.5L655.3 813.4L654.6 806.4L656.7 799.3L655.2 792.4L652.9 785.4L653.0 778.4L653.4 771.4L653.4 764.4L653.5 757.3L652.5 750.4L652.0 743.4L650.4 736.4L652.1 729.3L650.9 722.3L649.4 715.4L650.7 708.3L652.2 701.2L648.5 694.4L648.5 687.4L650.1 680.3L648.3 673.3L648.8 666.3M648.8 666.3L643.2 661.1L638.8 654.8L633.2 649.6L629.1 643.1L624.0 637.5L620.2 630.7L615.3 624.9L609.0 620.3M609.0 620.3L604.2 620.8M671.6 27.8L673.0 20.4L677.7 14.5L681.3 8.2L684.6 1.7L687.2 -5.1L689.7 -12.0L692.2 -18.8M603.1 530.4L610.2 529.4L617.0 527.0L623.9 525.3L631.2 525.6L638.0 523.1M638.0 523.1L645.2 520.6L651.0 515.6M651.0 515.6L650.3 507.6L647.2 500.2L643.7 493.0L643.1 484.9L640.8 477.3L637.8 469.9M637.8 469.9L637.6 469.7M632.6 133.8L639.6 131.6L646.8 129.8L653.5 126.6L660.7 125.1L667.6 122.4L674.2 119.0L681.7 118.2M681.7 118.2L680.1 110.9L679.1 103.6L680.5 95.9L677.7 88.7L676.3 81.4L674.9 74.1L673.9 66.7L673.8 59.2M598.1 378.8L602.0 372.3L605.7 365.6L609.7 359.2L616.6 354.8L619.8 347.7L624.1 341.5L628.8 335.6L632.4 328.8L637.3 323.0M637.3 323.0L635.9 311.7M635.7 447.9L632.8 440.6L630.7 433.1L629.8 425.3L628.1 417.7L627.8 409.7L625.5 402.3L623.6 394.7M623.6 394.7L618.0 389.6L610.5 387.5L605.1 381.9L597.9 379.4M635.1 448.8L635.7 447.9M635.7 447.9L642.5 445.4L648.4 440.9L655.1 438.5L662.3 437.1L669.5 435.6L675.3 430.8L682.1 428.5M682.1 428.5L683.1 418.5M683.1 418.5L679.4 412.3L674.0 407.4L670.8 400.8L664.1 397.0L660.8 390.4L657.5 383.8L651.9 379.1M651.9 379.1L645.2 383.7L638.2 387.7L631.5 392.3L623.6 394.7M644.9 270.5L650.5 265.7L656.9 262.3L663.6 259.3M663.6 259.3L668.2 252.2L670.6 244.0L675.2 236.9L678.5 229.2L683.4 222.3M683.4 222.3L676.4 220.2L669.5 217.6L662.2 216.6L654.6 216.4L648.0 212.8L641.0 210.3L633.6 209.8L626.0 209.9L619.5 205.6L612.1 204.9M609.0 620.3L616.5 617.7L622.8 612.8M622.8 612.8L623.5 604.5L623.9 596.2L625.3 588.0L627.7 580.0L628.8 571.8M628.8 571.8L616.0 567.6M651.9 379.1L656.3 372.5L658.6 365.0L661.2 357.7M661.2 357.7L658.5 351.1L652.4 346.7L648.8 340.7L646.0 334.1L641.8 328.5L637.3 323.0M637.8 469.9L645.1 471.1L652.1 473.5L659.5 473.8L666.9 474.3L673.8 477.0L681.3 477.2L688.1 480.7L695.5 481.2L702.6 483.2L709.8 484.7M709.8 484.7L710.4 477.3L709.5 469.9L710.5 462.5L709.2 455.0L711.3 447.7M711.3 447.7L704.8 441.6L696.8 437.9L690.3 431.8L682.1 428.5M628.8 571.8L631.2 571.1M631.2 571.1L630.7 562.8L633.8 555.1L635.4 547.2L635.1 539.0L635.4 530.9L638.0 523.1M661.2 357.7L668.8 357.0L676.2 357.5L683.5 360.2L691.1 358.3L698.5 360.3M698.5 360.3L703.5 355.2L706.4 348.7L710.8 343.2L714.8 337.4M714.8 337.4L709.7 330.9L704.3 324.6L698.8 318.3M698.8 318.3L691.8 315.8L684.5 314.0L677.0 312.9L670.2 309.4L662.6 309.1L655.8 305.5L648.7 303.3L641.2 302.2M622.8 612.8L630.3 614.4L638.0 613.2L645.4 615.5L653.0 615.0M653.0 615.0L657.5 608.4L658.6 600.5L660.9 593.0L664.7 586.0L667.5 578.7M667.5 578.7L663.3 573.5M663.3 573.5L655.4 571.3L647.1 573.6L639.1 573.4L631.2 571.1M648.8 666.3L651.1 658.4L654.2 650.8L657.0 643.1L658.0 634.9L660.8 627.2M660.8 627.2L658.4 620.2L653.0 615.0M663.3 573.5L663.0 566.4L665.7 559.6L664.0 552.3L664.5 545.3L665.6 538.4L666.1 531.4L668.4 524.5M668.4 524.5L659.7 520.1L651.0 515.6M681.7 118.2L689.1 120.7L697.0 121.7L703.6 126.6L711.6 127.3M711.6 127.3L717.5 123.3L723.3 118.9L729.6 115.4L736.8 113.5L743.3 110.4L748.1 104.4L754.1 100.3L761.1 98.1M761.1 98.1L763.3 86.1M763.3 86.1L758.6 79.6L751.8 75.1L748.4 67.5L741.7 62.8M741.7 62.8L734.3 60.9L727.1 58.5L719.4 57.6L712.5 54.1L704.8 53.3L697.3 51.9L690.4 47.9L682.3 48.8L675.3 45.5M728.9 1780.1L729.9 1773.0L727.5 1765.9L729.7 1758.9L728.9 1751.8L730.7 1744.8L727.8 1737.7L729.7 1730.6L729.3 1723.5L731.2 1716.5L731.4 1709.4L730.3 1702.3L728.9 1695.2L729.1 1688.2L729.2 1681.1L729.9 1674.0L729.3 1667.0L729.2 1659.9L731.3 1652.8L731.0 1645.8L729.8 1638.7L732.4 1631.6L729.7 1624.5L731.0 1617.5L729.6 1610.4L732.3 1603.3L732.4 1596.3L730.3 1589.2L732.1 1582.1L732.4 1575.1L730.6 1568.0L730.8 1560.9L731.5 1553.8L733.0 1546.8L730.5 1539.7L732.4 1532.6L732.2 1525.5L731.7 1518.5L732.3 1511.4L733.5 1504.3L731.1 1497.2L733.6 1490.2L731.8 1483.1L733.4 1476.1L733.8 1469.0L731.4 1461.9L733.9 1454.8L734.5 1447.8L732.1 1440.7L731.2 1433.6L731.6 1426.5L734.7 1419.5L731.4 1412.4L734.7 1405.3L732.0 1398.2L734.2 1391.2L732.0 1384.1L732.3 1377.0L734.3 1370.0L732.2 1362.9L733.2 1355.8L735.3 1348.8L734.7 1341.7L735.4 1334.6L735.8 1327.6L732.5 1320.5L733.3 1313.4L735.4 1306.3L735.1 1299.3L732.8 1292.2L734.6 1285.1L733.7 1278.0L734.5 1271.0L733.4 1263.9L733.2 1256.8L736.7 1249.8L734.4 1242.7L736.5 1235.6L733.8 1228.5L735.2 1221.5L734.1 1214.4L735.2 1207.3L734.4 1200.2L736.3 1193.2L734.4 1186.1L736.6 1179.1L735.9 1172.0L734.5 1164.9L735.5 1157.8L736.1 1150.8L736.2 1143.7M736.2 1143.7L737.4 1136.6L735.1 1129.6L734.4 1122.6L736.9 1115.5L736.3 1108.5L735.5 1101.5L733.6 1094.5L733.1 1087.5L733.1 1080.4L732.2 1073.4L731.8 1066.4L733.3 1059.3L732.7 1052.3L733.0 1045.2L732.0 1038.2L730.5 1031.2L732.7 1024.1L732.3 1017.1L731.7 1010.1L731.5 1003.1L731.7 996.0L732.5 988.9L731.9 981.9L731.1 974.9L729.7 967.9L729.2 960.9L729.3 953.9L731.1 946.7L728.7 939.8L728.5 932.8L728.3 925.7L727.1 918.7L729.9 911.6L726.1 904.7L728.0 897.6L728.9 890.5L726.3 883.6L727.3 876.5L726.2 869.5L725.5 862.5L725.1 855.4L724.6 848.4L726.9 841.3L726.5 834.3L726.7 827.2L723.3 820.3L725.4 813.2L723.8 806.2L724.8 799.1L724.2 792.1L723.1 785.1L725.2 778.0L721.5 771.1L723.9 764.0L724.0 756.9L722.6 749.9L722.3 742.9M722.3 742.9L720.4 736.0L719.6 728.8L714.8 722.9L714.0 715.7L712.2 708.8L708.8 702.4L707.7 695.3L704.5 688.9L702.7 682.0L700.8 675.1L698.9 668.3L695.5 661.9L694.3 654.8L691.9 648.1L688.6 641.7L687.7 634.5L685.2 627.9M685.2 627.9L677.0 628.5L669.0 625.9L660.8 627.2M667.5 578.7L674.4 580.0L681.2 582.2L688.3 582.8M688.3 582.8L694.7 579.1L701.1 575.4M701.1 575.4L699.3 568.6L696.6 562.0L694.5 555.2L695.4 547.7L692.3 541.2L690.4 534.4L688.7 527.6L686.8 520.8M686.8 520.8L677.4 521.5L668.4 524.5M741.7 62.8L738.0 56.3L735.0 49.4L734.4 41.7L730.4 35.2L728.2 28.1L726.1 20.9L723.5 13.9L720.6 7.0L715.1 1.2L713.4 -6.1L711.0 -13.2M711.0 -13.2L702.7 -17.4L693.5 -19.4M685.2 627.9L692.9 622.7L699.2 615.9M699.2 615.9L695.2 608.0L692.6 599.7L690.1 591.3L688.3 582.8M633.1 166.4L639.6 170.4L644.4 176.0L648.8 182.2L655.0 186.4L660.7 191.2L667.0 195.3L671.8 201.1L675.8 207.7L682.0 211.8L688.0 216.3M688.0 216.3L695.3 213.0L702.7 209.9L710.5 207.8L717.8 204.5L724.7 200.4M724.7 200.4L722.2 193.4L722.7 185.7L720.3 178.6L719.5 171.2L717.2 164.1L716.4 156.7L715.0 149.4L713.8 142.0L711.2 135.0L711.6 127.3M683.1 418.5L686.6 410.9L692.1 404.5L694.9 396.4L699.6 389.6L705.0 383.1M705.0 383.1L703.6 375.3L699.9 368.1L698.5 360.3M683.4 222.3L688.0 216.3M686.8 520.8L695.8 516.0L705.4 512.3M705.4 512.3L714.0 503.3M714.0 503.3L714.2 500.4M714.2 500.4L711.1 492.8L709.8 484.7M663.6 259.3L670.3 263.6L678.6 264.3L685.1 269.3L692.0 273.2L699.7 275.2M699.7 275.2L706.4 271.9L713.7 270.3L721.2 269.3L728.0 266.3L734.8 263.2L741.4 259.7L748.9 258.8L756.0 256.6M756.0 256.6L756.0 249.4L757.7 242.2L756.7 234.9L757.5 227.7L758.3 220.5M758.3 220.5L754.3 217.7M754.3 217.7L747.2 212.9L740.1 208.1L731.9 205.2L724.7 200.4M698.8 318.3L700.3 309.4L702.9 300.6L704.5 291.7M704.5 291.7L703.6 283.0L699.7 275.2M833.9 1780.1L832.9 1773.1L835.8 1766.1L835.0 1759.1L833.9 1752.0L835.1 1745.0L834.0 1738.0L833.2 1731.0L835.7 1724.0L834.5 1716.9L835.1 1709.9L835.1 1702.9L836.7 1695.9L836.3 1688.9L833.8 1681.8L835.9 1674.9L835.6 1667.8L835.7 1660.8L837.2 1653.8L835.8 1646.8L836.1 1639.8L837.7 1632.8L836.2 1625.7L836.5 1618.7L836.7 1611.7L837.9 1604.7L837.5 1597.7L837.8 1590.7L836.7 1583.6L835.5 1576.6L837.9 1569.6L837.6 1562.6L838.5 1555.6L838.6 1548.6L836.4 1541.5L836.9 1534.5L836.4 1527.5L839.2 1520.5L836.8 1513.4L836.8 1506.4L839.3 1499.5L838.8 1492.4L837.0 1485.4L839.4 1478.4L839.6 1471.4L838.9 1464.4L837.5 1457.3L839.9 1450.3L839.0 1443.3L839.7 1436.3L841.3 1429.3L840.8 1422.3L841.1 1415.3L838.6 1408.2L839.4 1401.2L840.2 1394.2L838.4 1387.1L842.1 1380.2L839.6 1373.1L839.7 1366.1L840.0 1359.1L839.9 1352.1L842.2 1345.1L841.2 1338.1L841.2 1331.0L840.9 1324.0L839.7 1317.0L840.7 1310.0L842.9 1303.0L842.8 1296.0L843.1 1289.0L841.0 1281.9L840.9 1274.9L840.5 1267.9L842.4 1260.9L841.9 1253.8L842.3 1246.8L842.5 1239.8L843.0 1232.8L842.3 1225.8L844.0 1218.8L841.9 1211.7L844.6 1204.8L843.5 1197.7L841.7 1190.7L842.8 1183.7L843.7 1176.7L843.4 1169.6L844.0 1162.6L843.3 1155.6L843.2 1148.6L845.2 1141.6L843.5 1134.6L845.1 1127.6L845.6 1120.5L844.9 1113.5L844.5 1106.5L846.4 1099.5L844.7 1092.5L846.4 1085.5L843.6 1078.4L845.0 1071.4L845.9 1064.4L843.9 1057.4L846.9 1050.4L844.2 1043.3L846.2 1036.3L844.8 1029.3L847.6 1022.3L846.4 1015.3L847.4 1008.3L846.4 1001.2L847.1 994.2L847.3 987.2L846.0 980.2L845.8 973.2L848.2 966.2L845.8 959.1L848.7 952.2L846.2 945.1L846.0 938.1L846.1 931.1L848.7 924.1L849.4 917.1L847.6 910.0L848.5 903.0L847.2 896.0L849.7 889.0L849.0 882.0L847.2 874.9L846.9 867.9L849.3 860.9L847.1 853.9L850.1 846.9L849.0 839.9M849.0 839.9L847.2 833.0L846.0 826.0L846.3 818.9L844.3 812.0L844.2 804.9L841.7 798.2L843.4 790.8L840.3 784.1L841.1 776.9L837.7 770.2L839.0 762.9L838.6 755.9L835.5 749.2L833.2 742.4L833.5 735.2L833.4 728.1L830.9 721.3L831.0 714.2L828.4 707.4L828.7 700.3L828.7 693.2L826.6 686.3L826.5 679.2L823.5 672.5L825.0 665.2L821.5 658.6L823.3 651.2L822.6 644.2L821.4 637.2L818.9 630.4L817.1 623.6L816.8 616.5M816.8 616.5L813.0 614.5M813.0 614.5L806.5 617.6L799.2 618.9L792.9 622.4L786.2 625.0M786.2 625.0L784.0 631.9L786.3 639.2L784.2 646.1L782.2 652.9L782.4 660.0L782.0 667.1L782.9 674.2L782.1 681.2L780.9 688.2L778.0 695.0L777.5 702.0L779.0 709.2L775.9 716.0L778.4 723.3L775.7 730.1L773.7 737.0L775.2 744.2L772.4 751.0L772.8 758.1L774.3 765.4L772.6 772.3L771.5 779.2L771.5 786.3L769.1 793.2L770.4 800.4L767.6 807.2L768.7 814.3L768.8 821.4L766.4 828.3L767.4 835.4L765.0 842.3L763.5 849.2L763.5 856.3L763.3 863.3L764.2 870.5L761.8 877.3L762.6 884.5L760.0 891.3L761.1 898.5L758.9 905.4L759.0 912.4L758.2 919.4L756.5 926.4L757.6 933.5L757.0 940.5L753.5 947.3L755.0 954.5L752.5 961.3L751.7 968.3L752.5 975.5L753.0 982.6L752.5 989.6L749.0 996.4L751.1 1003.6L749.0 1010.5L748.2 1017.5L749.0 1024.7L747.1 1031.6L747.5 1038.7L745.5 1045.6L744.9 1052.6L744.8 1059.6L744.7 1066.7L743.3 1073.6L743.3 1080.7L742.9 1087.7L741.8 1094.7L738.9 1101.5L739.5 1108.6L737.5 1115.5L739.9 1122.8L735.9 1129.5L736.9 1136.7L736.2 1143.7M699.2 615.9L708.7 618.9L718.6 619.9M718.6 619.9L720.5 618.5M720.5 618.5L721.7 610.7L723.1 602.8L722.4 594.7L725.2 587.1L724.1 578.9L726.3 571.2M726.3 571.2L724.4 570.6M724.4 570.6L716.8 573.0L709.2 575.4L701.1 575.4M711.3 447.7L718.2 444.2L725.5 441.6L732.3 437.8L740.3 436.7L746.2 430.9L754.0 429.2M754.0 429.2L751.7 421.1L748.0 413.4L746.7 404.9L743.8 397.0M743.8 397.0L736.4 393.2L728.6 390.7L720.0 390.1L712.5 386.8L705.0 383.1M714.8 337.4L721.9 336.3L729.3 336.1L735.6 331.3L743.1 331.8L750.2 330.5L757.1 328.3M757.1 328.3L759.9 320.5L759.8 312.1L761.9 304.1M761.9 304.1L755.0 301.5L747.6 301.1L740.7 298.0L732.9 299.6L726.4 294.8L718.8 295.1L711.6 293.6L704.5 291.7M724.4 570.6L720.6 563.8L718.8 556.3L718.1 548.5L715.5 541.3L711.4 534.6L709.6 527.1L706.6 520.0L705.4 512.3M726.3 571.2L729.3 571.0M729.3 571.0L733.1 564.1L737.8 557.8L742.7 551.7L749.2 546.7L753.9 540.4L758.0 533.6L761.7 526.7M761.7 526.7L754.9 523.4L748.1 520.0L741.7 515.7L735.1 512.0L728.1 509.2L721.1 506.2L714.0 503.3M743.8 397.0L746.2 390.3L750.8 384.8L754.8 379.0L757.8 372.7L758.9 365.3L764.2 360.2L766.3 353.4L770.0 347.4M770.0 347.4L764.7 341.7L762.8 333.7L757.1 328.3M722.3 742.9L723.6 735.7L724.6 728.4L723.1 721.0L726.3 713.9L727.4 706.7L728.0 699.4L728.2 692.1L728.0 684.7M728.0 684.7L728.1 677.4L727.0 670.2L725.2 663.1L723.6 656.0L723.9 648.6L722.7 641.4L722.0 634.1L718.9 627.2L718.6 619.9M786.2 625.0L775.9 620.1M775.9 620.1L767.5 618.1L758.9 619.5M758.9 619.5L755.7 625.9L751.3 631.8L750.9 639.6L745.0 644.9L742.5 651.7L741.2 659.0L736.2 664.6L735.1 672.1L732.1 678.7L728.0 684.7M758.9 619.5L751.1 614.4M751.1 614.4L743.5 615.6L735.9 617.4L728.2 617.5L720.5 618.5M761.9 304.1L765.9 297.8L767.1 290.5M767.1 290.5L765.5 283.5L763.4 276.7L760.1 270.3L759.2 263.1L756.0 256.6M754.3 217.7L757.0 211.0L758.3 203.9L760.9 197.1L762.2 190.0L762.4 182.7L763.0 175.4L766.6 168.9L769.0 162.1L768.9 154.7L771.5 147.9L774.0 141.1L775.5 134.1L774.5 126.4L777.8 119.8L779.6 112.9M779.6 112.9L772.3 109.3L766.4 104.1L761.1 98.1M751.1 614.4L750.9 605.8L748.2 597.6L747.6 589.1L745.9 580.7M745.9 580.7L737.6 576.0L729.3 571.0M711.0 -13.2L718.6 -13.7L726.1 -14.1L733.6 -13.5L741.1 -11.7L748.6 -12.4L756.2 -13.5L763.7 -14.2L771.2 -13.5L778.7 -12.6M778.7 -12.6L780.4 -19.4L780.6 -26.5L782.4 -33.3L783.9 -40.2L782.5 -47.5L785.5 -54.1L784.3 -61.4L788.1 -67.9L786.9 -75.2L788.2 -82.1L791.7 -88.7L790.6 -96.0L791.1 -103.0L794.5 -109.6L794.6 -116.7L796.6 -123.5L795.9 -130.7L797.3 -137.6L799.9 -144.3L799.4 -151.5L802.1 -158.1L800.3 -165.5L803.6 -172.1L802.3 -179.4L804.6 -186.2L803.8 -193.4L805.4 -200.2L809.2 -206.8L808.5 -214.0L810.8 -220.7L809.8 -228.0L811.2 -234.9L811.4 -242.0L814.0 -248.7L816.1 -255.4L815.9 -262.6L816.5 -269.6L819.5 -276.2L820.4 -283.2L820.6 -290.3L819.5 -297.5L822.5 -304.2L822.9 -311.2L825.8 -317.9L824.7 -325.2L826.8 -331.9L827.7 -338.9L827.8 -346.0L829.4 -352.9L831.0 -359.7L832.8 -366.5L832.4 -373.7M832.4 -373.7L832.2 -380.8L831.6 -387.9L833.7 -395.0L830.2 -402.1L832.9 -409.2L832.2 -416.3L831.6 -423.4L831.1 -430.5L832.0 -437.6L832.4 -444.7L831.7 -451.8L831.6 -458.9L828.9 -466.0L829.8 -473.1L829.0 -480.2L831.8 -487.3L831.4 -494.4L828.6 -501.5L830.1 -508.6L829.9 -515.7L827.8 -522.7L828.9 -529.9L830.1 -537.0L829.0 -544.1M714.2 500.4L720.6 497.3L726.2 492.7L733.2 490.7L738.6 485.8L745.3 483.1L751.2 479.2L758.4 477.5L764.0 473.0L770.5 470.0L776.2 465.6M776.2 465.6L773.0 459.2L768.4 453.7L766.5 446.5L762.1 441.0L758.3 434.9L754.1 429.2M754.1 429.2L754.0 429.2M770.0 347.4L776.8 349.5L783.5 351.9L789.6 355.8M789.6 355.8L800.8 355.8M800.8 355.8L805.8 350.0L811.3 344.6L816.1 338.6L819.6 331.6L823.9 325.2L829.7 320.1L835.6 315.0L839.3 308.1M839.3 308.1L835.4 298.9L833.8 289.0M833.8 289.0L826.4 288.3L819.0 290.5L811.6 290.2L804.2 291.3L796.7 290.5L789.3 290.4L781.9 288.5L774.4 288.6L767.1 290.5M763.3 86.1L766.7 79.7L771.4 74.3L777.6 70.0L779.9 62.7L784.6 57.3L789.3 51.9L792.7 45.5L798.2 40.7M798.2 40.7L800.7 31.6L804.8 23.1M804.8 23.1L801.4 15.1L798.7 6.9M798.7 6.9L791.8 0.7L786.5 -7.3L778.7 -12.6M761.7 526.7L768.9 525.7L776.2 526.3M776.2 526.3L778.8 525.0M778.8 525.0L781.7 517.6L787.7 511.8L790.1 504.1L794.1 497.2M794.1 497.2L796.6 489.1L796.8 480.7M796.8 480.7L790.2 475.2L783.6 469.8L776.2 465.6M758.3 220.5L765.8 217.5L773.8 215.6M773.8 215.6L779.7 209.5L787.7 206.0L793.8 200.1M793.8 200.1L794.6 192.8L795.7 185.6L797.0 178.4L798.2 171.2L797.3 163.8L798.5 156.6L801.3 149.6L800.8 142.1L800.8 134.8L802.4 127.7M802.4 127.7L795.1 122.3L786.7 118.5L779.6 112.9M775.9 620.1L776.4 612.7L773.3 605.5L775.7 597.9L774.3 590.6L773.0 583.3L773.1 575.9M773.1 575.9L772.7 575.6M772.7 575.6L763.5 575.7L755.0 579.8L745.9 580.7M833.8 289.0L837.0 281.3L840.5 273.8L845.9 267.3M845.9 267.3L840.0 262.9L834.4 258.0L828.3 253.9L821.7 250.4L816.5 244.9L809.0 242.6L803.4 237.7L798.1 232.4L792.8 227.2L786.1 223.9L780.2 219.4L773.8 215.6M772.7 575.6L774.2 568.6L773.3 561.5L775.8 554.6L775.6 547.5L774.6 540.4L775.3 533.3L776.2 526.3M754.1 429.2L761.6 426.9L768.0 422.0L774.8 418.1L783.0 417.0L789.5 412.4M789.5 412.4L789.6 405.3L789.6 398.2L790.1 391.2L791.0 384.1L788.2 377.0L789.0 369.9L788.0 362.9L789.6 355.8M832.4 -373.7L833.7 -366.4L834.3 -359.0L834.0 -351.4L835.6 -344.2L836.9 -336.8L838.5 -329.6L838.8 -322.1L840.8 -314.9L839.8 -307.3L840.9 -299.9L842.9 -292.7M842.9 -292.7L843.6 -285.5L847.8 -279.2L847.8 -271.9L849.4 -264.9L852.1 -258.3L852.6 -251.0L854.4 -244.2L856.8 -237.4L858.3 -230.5L860.8 -223.8L861.8 -216.7L866.3 -210.5L866.1 -203.1L867.9 -196.2L870.1 -189.4L873.1 -182.8L875.7 -176.2L875.7 -168.8L876.7 -161.7L880.5 -155.3L882.5 -148.5L884.3 -141.6L886.6 -134.9L886.4 -127.4L887.2 -120.3L889.7 -113.6L893.1 -107.1L893.7 -99.9L897.7 -93.6L896.9 -86.0L900.5 -79.6L903.5 -73.0L903.2 -65.6L906.7 -59.2L908.1 -52.1L910.7 -45.5L911.0 -38.2M911.0 -38.2L918.3 -36.6L925.6 -34.4L932.7 -31.8L940.7 -32.7L947.6 -29.3M947.6 -29.3L951.9 -35.6L952.7 -43.6L956.2 -50.3L960.7 -56.6L962.9 -63.9L966.0 -70.8L970.0 -77.3L972.9 -84.3M972.9 -84.3L972.2 -91.3L974.7 -98.2L972.9 -105.3L975.6 -112.2L975.8 -119.2L975.2 -126.2L973.7 -133.3L976.8 -140.2L974.5 -147.3L976.5 -154.2L976.6 -161.2L975.7 -168.3L978.1 -175.2L978.8 -182.1L978.6 -189.1L978.3 -196.2L979.1 -203.1L979.7 -210.1L978.8 -217.2L981.5 -224.1L982.3 -231.0L982.0 -238.0L982.9 -245.0L981.0 -252.1L983.7 -259.0L980.8 -266.2L982.6 -273.1L981.7 -280.1L983.2 -287.1L984.4 -294.0L984.9 -301.0L984.3 -308.0L984.3 -315.0L984.1 -322.1L985.2 -329.0L985.2 -336.0L985.2 -343.0L987.5 -349.9L987.1 -357.0L987.2 -364.0L986.7 -371.0L988.9 -377.9L987.4 -385.0L988.0 -392.0L989.4 -398.9L990.3 -405.9L991.6 -412.8L991.2 -419.8L992.3 -426.8L992.5 -433.8L992.2 -440.8L992.5 -447.8L990.6 -454.9L991.4 -461.9L991.1 -468.9L994.5 -475.8L994.4 -482.8L994.4 -489.8L993.5 -496.8L994.1 -503.8L993.8 -510.8L995.9 -517.7L997.5 -524.7L995.4 -531.8L994.8 -538.8L995.7 -545.8L996.7 -552.8L999.0 -559.7L999.0 -566.7L998.1 -573.7L997.2 -580.8L997.6 -587.8L998.1 -594.7L1000.7 -601.6L1000.0 -608.7L1002.2 -615.6L1002.3 -622.6L1002.3 -629.6L1001.5 -636.6L1003.1 -643.6L1000.9 -650.7L1001.2 -657.7L1003.2 -664.6L1003.4 -671.6L1002.7 -678.6L1003.2 -685.6L1002.7 -692.7L1006.3 -699.5L1005.9 -706.5L1007.1 -713.5L1007.6 -720.4L1006.0 -727.5L1007.5 -734.5L1006.6 -741.5L1008.5 -748.4L1009.0 -755.4L1006.8 -762.6L1006.7 -769.6L1007.8 -776.5L1009.5 -783.4L1009.1 -790.5L1008.1 -797.5L1011.5 -804.4L1011.7 -811.4L1010.9 -818.4L1009.7 -825.5L1013.1 -832.3L1012.2 -839.4L1010.9 -846.5L1012.2 -853.4L1013.6 -860.3L1014.9 -867.3L1013.8 -874.4L1014.8 -881.3L1013.6 -888.4L1014.1 -895.4L1016.8 -902.2L1015.3 -909.3L1014.6 -916.4L1016.8 -923.3L1015.4 -930.4L1016.1 -937.3L1017.4 -944.3L1018.2 -951.2L1018.7 -958.2L1019.4 -965.2L1018.8 -972.2L1017.8 -979.3L1020.5 -986.2L1018.5 -993.3L1020.3 -1000.2L1020.4 -1007.2L1021.8 -1014.2L1022.3 -1021.1L1020.9 -1028.2L1022.8 -1035.1L1023.3 -1042.1L1022.9 -1049.1L1022.0 -1056.2L1025.2 -1063.1L1024.4 -1070.1L1022.8 -1077.2L1023.8 -1084.2L1026.9 -1091.0L1024.5 -1098.1L1025.5 -1105.1L1027.3 -1112.0L1027.8 -1119.0L1027.4 -1126.0L1028.2 -1133.0L1026.0 -1140.1L1026.6 -1147.1L1030.1 -1153.9L1029.9 -1161.0L1027.5 -1168.1L1027.9 -1175.1L1028.9 -1182.0L1031.8 -1188.9L1030.6 -1196.0M798.7 6.9L803.5 1.2L810.0 -2.5L816.0 -6.7L820.7 -12.4L826.8 -16.6L830.6 -23.2L835.7 -28.4L840.8 -33.7L848.0 -36.6L852.8 -42.2M852.8 -42.2L851.1 -49.3L853.9 -56.6L852.7 -63.7L850.5 -70.8L852.5 -78.1L849.9 -85.1L850.8 -92.3L849.1 -99.4L851.3 -106.7L851.4 -113.9L851.2 -121.0L847.6 -128.0L850.4 -135.3L849.0 -142.4L849.7 -149.6L848.3 -156.7L848.4 -163.9L848.0 -171.1L848.5 -178.2L845.6 -185.3L845.2 -192.4L846.7 -199.7L845.5 -206.8L845.6 -214.0L844.0 -221.1L846.3 -228.3L843.4 -235.4L846.1 -242.6L845.7 -249.8L844.2 -256.9L842.7 -264.0L844.3 -271.2L842.4 -278.3L842.9 -285.5L842.9 -292.7M773.1 575.9L780.8 575.8L787.8 580.2L795.6 580.0L803.3 580.7L810.7 582.6M810.7 582.6L815.6 573.9M815.6 573.9L810.5 567.6L808.6 559.5L805.1 552.3L801.3 545.3L796.3 538.9M796.3 538.9L789.6 535.4L784.3 530.0L778.8 525.0M813.0 614.5L811.7 606.6L812.8 598.5L810.0 590.6L810.7 582.6M802.4 127.7L812.5 127.9L822.6 127.4M822.6 127.4L829.8 125.4L835.8 121.3L840.9 115.5L848.1 113.6M848.1 113.6L849.2 104.8L853.2 96.9M853.2 96.9L847.2 92.8L843.7 86.2L838.4 81.4L833.2 76.4L828.1 71.5L822.9 66.5L818.5 60.9L813.6 55.7L809.2 49.9L803.8 45.3L798.2 40.7M796.8 480.7L803.8 478.0L810.4 474.8L816.8 471.0L823.1 467.1L829.2 462.8M829.2 462.8L832.0 452.9L838.0 444.4M838.0 444.4L834.2 437.7L830.3 431.0L824.7 425.5L820.6 419.0M820.6 419.0L813.1 416.0L804.8 416.8L797.6 412.5L789.5 412.4M815.6 573.9L823.4 570.6L831.5 568.3L839.0 564.5M839.0 564.5L837.7 555.3L837.4 546.0L837.6 536.7M837.6 536.7L829.4 537.7L821.1 538.2L812.9 539.5L804.6 538.7L796.3 538.9M794.1 497.2L799.3 502.4L805.9 505.0L811.4 509.5L817.8 512.7L823.7 516.6L829.4 520.7L835.9 523.6L842.4 526.5M842.4 526.5L848.9 521.8L855.8 517.8L863.0 514.3L870.1 510.5M870.1 510.5L863.6 505.7L859.1 499.3L855.8 491.8L850.8 485.7L844.0 481.1L840.1 474.1L835.0 468.2L829.2 462.8M820.6 419.0L823.6 412.4L824.9 405.4L825.7 398.3L827.2 391.4M827.2 391.4L824.6 384.6L826.0 377.1L823.7 370.3M823.7 370.3L815.7 366.0L808.7 360.2L800.8 355.8M837.6 536.7L842.4 526.5M845.9 267.3L852.4 262.2L859.4 258.0L866.1 253.1M866.1 253.1L868.1 245.5L865.5 237.7L867.1 230.1L867.8 222.4L867.7 214.8L867.8 207.1M867.8 207.1L865.0 199.6M865.0 199.6L860.2 197.7M860.2 197.7L852.8 196.4L845.4 198.6L838.0 197.0L830.7 198.1L823.2 197.3L816.0 200.8L808.6 200.6L801.2 200.6L793.8 200.1M860.2 197.7L858.1 190.6L851.8 185.7L849.2 178.9L847.2 171.8L844.6 164.9L838.6 159.9L836.0 153.0L833.4 146.2L830.0 139.8L826.8 133.3L822.6 127.4M1138.6 1780.1L1139.2 1773.1L1137.1 1766.1L1136.9 1759.1L1135.8 1752.1L1138.0 1745.0L1136.0 1738.1L1135.9 1731.0L1138.2 1723.9L1136.8 1716.9L1136.3 1709.9L1136.3 1702.9L1135.9 1695.9L1136.0 1688.9L1134.3 1681.9L1133.2 1674.9L1132.9 1667.9L1132.5 1660.9L1133.5 1653.8L1132.4 1646.9L1132.1 1639.8L1133.2 1632.8L1134.7 1625.7L1133.4 1618.7L1131.6 1611.8L1133.2 1604.7L1130.8 1597.7L1130.3 1590.7L1130.7 1583.7L1130.9 1576.7L1131.6 1569.6L1130.5 1562.6L1131.2 1555.6L1128.7 1548.7L1131.5 1541.5L1129.1 1534.6L1130.6 1527.5L1127.5 1520.6L1130.1 1513.5L1127.7 1506.5L1129.7 1499.4L1129.2 1492.4L1128.5 1485.4L1126.8 1478.5L1125.6 1471.5L1126.0 1464.5L1128.3 1457.3L1125.4 1450.4L1126.9 1443.4L1126.4 1436.3L1126.4 1429.3L1124.4 1422.4L1124.1 1415.4L1123.6 1408.3L1126.6 1401.2L1124.1 1394.3L1124.9 1387.2L1124.3 1380.2L1122.8 1373.3L1122.0 1366.3L1121.6 1359.3L1124.3 1352.1L1121.5 1345.2L1124.2 1338.1L1121.8 1331.1L1122.8 1324.1L1120.5 1317.1L1122.6 1310.0L1120.4 1303.1L1120.5 1296.1L1120.8 1289.0L1119.1 1282.1L1119.3 1275.0L1121.1 1268.0L1119.0 1261.0L1119.1 1254.0L1120.2 1246.9L1118.0 1240.0L1117.6 1233.0L1117.5 1225.9L1117.8 1218.9L1117.5 1211.9L1118.2 1204.8L1117.3 1197.8L1118.5 1190.8L1115.3 1183.9L1117.3 1176.8L1117.6 1169.7L1115.2 1162.8L1114.2 1155.8L1115.4 1148.7L1114.0 1141.8L1115.0 1134.7L1115.7 1127.7L1113.2 1120.7L1113.0 1113.7L1114.1 1106.6L1112.7 1099.7L1112.7 1092.6L1113.2 1085.6L1111.7 1078.6L1111.3 1071.6L1112.1 1064.6L1112.2 1057.5L1113.7 1050.5L1112.0 1043.5L1110.1 1036.5L1110.3 1029.5L1112.0 1022.4L1111.1 1015.4L1111.9 1008.4L1112.0 1001.3L1111.4 994.3L1108.4 987.4L1111.2 980.3L1109.4 973.3L1108.1 966.4L1107.6 959.4L1109.9 952.3L1107.3 945.3L1106.5 938.3L1106.9 931.3L1109.1 924.2L1107.1 917.2L1107.8 910.2L1106.8 903.2M1106.8 903.2L1103.7 896.7L1103.4 889.5L1101.3 882.7L1099.3 875.9L1099.3 868.6L1096.7 862.0L1094.2 855.3L1095.6 847.7L1092.3 841.2L1089.6 834.5L1087.4 827.8L1088.1 820.4L1086.0 813.6L1082.7 807.1L1082.6 799.9L1082.0 792.7L1079.7 786.0L1077.0 779.4L1076.3 772.3L1075.1 765.3L1073.7 758.4L1070.3 751.9L1071.0 744.5L1069.9 737.5L1067.6 730.7L1066.4 723.7L1063.0 717.3L1063.3 709.9L1059.2 703.6L1057.7 696.7L1057.4 689.5L1056.9 682.4L1052.4 676.1L1052.3 668.9M1052.3 668.9L1046.1 664.7L1040.2 660.2L1035.7 654.1L1029.5 649.9L1024.1 644.8L1019.9 638.3L1014.0 633.8L1008.4 629.0M1008.4 629.0L1002.1 632.0M1002.1 632.0L997.2 637.7L995.4 645.2L991.1 651.2L989.7 658.8L983.2 663.7L982.0 671.5L977.8 677.6L974.2 684.0M974.2 684.0L973.1 691.1L970.5 697.9L971.0 705.1L968.1 711.9L968.4 719.1L968.7 726.4L965.4 733.1L966.6 740.5L962.7 747.1L963.5 754.4L963.3 761.6L959.6 768.2L960.8 775.6L959.4 782.6L958.5 789.6L956.3 796.5L957.5 803.9L955.2 810.7L954.9 817.9L951.4 824.6L953.3 832.0L950.0 838.7L950.2 846.0L948.4 852.9L946.9 859.9L945.3 866.8L946.3 874.2L944.8 881.2L944.2 888.3L940.1 894.8L941.9 902.3L940.9 909.4L938.4 916.2L937.1 923.2L935.0 930.1L936.8 937.5L935.1 944.5L934.3 951.6L931.7 958.4L931.1 965.5L930.2 972.5L927.4 979.3L927.1 986.5L926.6 993.6M926.6 993.6L924.7 1000.5L923.8 1007.5L925.7 1014.7L922.7 1021.5L924.1 1028.7L924.8 1035.8L921.1 1042.6L923.4 1049.9L923.2 1056.9L921.6 1063.9L921.0 1070.9L918.0 1077.7L917.8 1084.8L918.8 1091.9L917.9 1098.9L916.2 1105.8L915.7 1112.9L915.7 1119.9L915.6 1127.0L916.5 1134.1L915.5 1141.1L913.4 1148.0L913.1 1155.1L911.7 1162.0L910.8 1169.0L910.0 1176.0L912.2 1183.3L912.0 1190.3L908.5 1197.1L909.1 1204.2L909.9 1211.4L907.5 1218.2L908.5 1225.4L908.0 1232.4L907.0 1239.4L905.8 1246.4L904.7 1253.4L906.3 1260.6L903.3 1267.4L903.2 1274.4L903.1 1281.5L901.9 1288.5L900.8 1295.5L903.1 1302.7L900.8 1309.6L899.5 1316.6L898.8 1323.6L898.5 1330.6L899.6 1337.8L896.2 1344.6L896.3 1351.6L897.7 1358.8L896.4 1365.8L893.9 1372.7L896.1 1379.9L894.8 1386.9L892.2 1393.7L891.8 1400.8L893.7 1408.0L891.3 1414.9L892.1 1422.0L890.4 1428.9L889.4 1435.9L891.2 1443.1L890.3 1450.1L889.7 1457.2L888.9 1464.2L889.2 1471.2L888.3 1478.2L886.7 1485.2L886.1 1492.2L886.8 1499.3L884.4 1506.2L882.5 1513.1L883.2 1520.2L883.5 1527.3L881.6 1534.3L882.0 1541.4L882.4 1548.5L880.7 1555.4L881.8 1562.5L878.9 1569.4L880.1 1576.6L878.8 1583.5L876.1 1590.4L876.2 1597.4L875.4 1604.4L875.5 1611.5L875.0 1618.5L874.2 1625.5L872.6 1632.5L874.8 1639.7L872.2 1646.6L873.3 1653.8L872.9 1660.8L870.3 1667.6L870.5 1674.7L869.0 1681.7L868.4 1688.7L868.8 1695.8L869.7 1702.9L869.7 1710.0L867.3 1716.9L866.0 1723.9L867.1 1731.0L867.2 1738.1L866.9 1745.1L865.7 1752.1L863.3 1759.0L865.2 1766.2L863.8 1773.2L862.3 1780.1M816.8 616.5L825.0 616.0L833.1 617.1M833.1 617.1L833.2 617.1M833.2 617.1L838.2 610.6L843.4 604.3L844.9 595.6L849.6 588.9L856.5 583.7L859.5 576.0M859.5 576.0L857.5 572.4M857.5 572.4L848.9 566.9L839.0 564.5M839.3 308.1L845.8 312.1L850.9 317.4L856.1 322.8L862.1 327.2L867.5 332.3L872.9 337.3L878.5 342.3M878.5 342.3L882.1 335.9L885.8 329.6L890.1 323.8L895.6 318.8M895.6 318.8L892.8 311.9L891.0 304.8L891.3 297.3L889.9 290.1L886.8 283.3L887.0 275.8L885.2 268.7L882.8 261.7M882.8 261.7L874.2 257.9L866.1 253.1M865.0 199.6L869.5 193.6L873.3 186.9L880.0 182.5L883.4 175.5M883.4 175.5L881.5 168.5L877.6 162.0L875.8 154.9L875.5 147.4L872.3 140.7L871.3 133.3L868.4 126.6M868.4 126.6L861.1 123.1L855.5 117.0L848.1 113.6M823.7 370.3L831.0 369.1L837.3 364.4L844.8 363.9L851.4 360.3L859.0 359.9L866.1 358.0L873.1 355.7L879.8 352.5M879.8 352.5L878.5 342.3M853.2 96.9L857.5 91.0L862.2 85.5L868.7 81.7L873.5 76.2L878.3 70.9M878.3 70.9L876.3 63.0L875.8 55.1L876.5 47.1L874.1 39.3L874.7 31.2M874.7 31.2L867.8 30.0L860.6 30.6L853.7 29.7L846.7 28.3L839.8 27.1L832.9 25.6L825.6 27.2L818.9 24.0L811.7 24.9L804.8 23.1M838.0 444.4L844.6 441.4L851.9 440.3L858.8 438.1L865.6 435.6L872.8 434.3L879.2 430.6M879.2 430.6L879.8 422.1L881.8 414.0L884.6 406.0L885.6 397.6M885.6 397.6L878.2 397.7L870.9 397.3L863.6 396.3L856.5 393.5L849.2 392.6L841.9 392.2L834.7 390.5L827.2 391.4M857.5 572.4L862.5 566.9L865.3 559.9L869.5 553.8L874.8 548.6L877.0 541.2L882.9 536.2L885.5 529.1L890.9 523.9M890.9 523.9L888.8 514.2M888.8 514.2L879.1 514.0L870.1 510.5M926.6 993.6L926.5 986.6L925.1 979.6L927.8 972.5L927.5 965.5L925.9 958.5L924.9 951.5L924.5 944.5L925.8 937.5L925.7 930.5L925.1 923.5L926.2 916.4L925.5 909.4L926.2 902.4L923.7 895.4L923.5 888.4L924.5 881.4L924.8 874.3L923.8 867.3L925.2 860.3L923.5 853.3L923.8 846.3L924.2 839.3L925.0 832.3L925.1 825.2L923.5 818.2L923.7 811.2L925.3 804.2L925.3 797.2L924.0 790.2L922.1 783.2L923.2 776.2L923.8 769.1L922.4 762.1L921.4 755.1L924.7 748.1L924.3 741.1L921.4 734.1L922.5 727.1L923.0 720.0L921.7 713.0L920.8 706.0L923.1 699.0L923.1 692.0L921.8 685.0L920.4 678.0L921.4 671.0L920.3 664.0L921.6 656.9M921.6 656.9L917.0 650.7L909.1 648.1L903.9 642.5L899.3 636.1L892.1 632.8L886.3 627.9L881.5 621.8M881.5 621.8L877.9 624.9M877.9 624.9L877.8 632.1L875.9 638.9L873.0 645.4L870.4 652.0L871.1 659.4L869.5 666.2L865.8 672.6L865.5 679.7L864.2 686.6L862.0 693.3M862.0 693.3L862.8 700.4L861.7 707.3L858.5 714.1L860.9 721.3L859.8 728.3L857.4 735.1L856.3 742.0L855.6 749.0L856.5 756.1L854.2 762.9L854.8 770.0L855.3 777.1L854.1 784.0L852.6 790.9L851.9 797.9L853.4 805.1L852.6 812.0L849.2 818.8L851.6 826.0L848.5 832.8L849.0 839.9M862.0 693.3L858.9 686.6L855.9 679.8L853.3 672.8L851.4 665.6L850.5 658.0L845.1 652.2L844.8 644.4L840.4 638.1L837.3 631.4L836.5 623.7L833.1 617.1M885.6 397.6L888.5 391.1M888.5 391.1L887.0 383.2L885.5 375.3L885.3 367.2L884.6 359.3M884.6 359.3L879.8 352.5M888.8 514.2L895.6 508.5L900.7 501.3M900.7 501.3L900.4 493.9L897.8 486.9L894.2 480.2L895.2 472.5L893.1 465.4L892.5 458.0L891.1 450.8L887.3 444.1L886.3 436.8M886.3 436.8L879.2 430.6M868.4 126.6L875.6 126.4L882.6 124.9L889.2 121.6L896.2 120.5L903.2 119.2L910.3 118.2M910.3 118.2L912.2 111.0L914.6 103.9L917.4 97.0M917.4 97.0L915.5 92.2M915.5 92.2L908.6 89.9L902.6 86.0L897.6 80.3L890.6 78.3L884.8 74.0L878.3 70.9M874.7 31.2L881.2 27.4L885.9 21.5M885.9 21.5L886.5 14.3L884.4 7.2L886.5 -0.1L885.8 -7.3L884.4 -14.4M884.4 -14.4L880.3 -20.4L874.4 -24.3L869.2 -29.0L864.1 -33.8L857.5 -36.9L852.8 -42.2M877.9 624.9L870.5 623.0L862.9 622.7L855.7 619.8L847.8 621.0L840.7 618.2L833.2 617.1M881.5 621.8L881.6 621.5M881.6 621.5L879.2 614.3L879.0 606.6L875.5 599.7L875.3 592.0L872.3 585.0M872.3 585.0L866.6 579.5L859.5 576.0M915.5 92.2L920.9 86.3L922.8 78.1L929.4 72.9L932.3 65.4M932.3 65.4L929.2 58.9L925.2 52.9L921.3 46.9L915.6 42.0L914.3 34.4L909.5 29.0L905.5 23.0M905.5 23.0L895.7 22.4L885.9 21.5M881.6 621.5L888.1 618.3L895.3 617.1L901.6 613.4M901.6 613.4L903.0 605.2L903.7 596.9L901.8 588.5L902.6 580.2L903.6 571.9M903.6 571.9L896.1 576.0L888.5 579.8L880.3 582.3L872.3 585.0M903.6 571.9L904.8 570.8M904.8 570.8L902.5 563.2L904.6 555.2L901.9 547.7L902.3 539.8M902.3 539.8L895.3 532.7L890.9 523.9M867.8 207.1L875.8 206.8L883.2 210.4L891.2 209.7L898.8 211.9L906.6 212.9L914.1 215.6L922.0 215.8M922.0 215.8L924.0 208.7L921.9 201.5L923.4 194.4L924.6 187.3L923.4 180.2L925.2 173.1L924.9 166.0L924.4 158.8M924.4 158.8L917.8 162.2L910.2 163.1L903.8 166.9L897.6 171.3L890.1 172.5L883.4 175.5M886.3 436.8L893.8 438.6L901.4 438.2L909.0 438.7L916.6 439.1L924.0 441.4L931.6 441.3L939.3 440.3L946.7 442.0M946.7 442.0L949.8 432.5L953.7 423.4M953.7 423.4L953.9 415.7L956.7 408.4L955.8 400.6M955.8 400.6L948.4 398.9L940.6 399.8L933.6 396.0L925.6 398.0L918.4 395.0L910.9 394.5L903.6 392.4L895.9 392.4L888.5 391.1M901.6 613.4L909.2 611.8L916.9 613.2L924.5 613.0M924.5 613.0L926.8 605.3L927.8 597.5L927.4 589.5L929.0 581.8M929.0 581.8L920.5 579.0L913.2 573.7L904.8 570.8M884.6 359.3L892.5 359.3L899.9 356.3L907.9 357.7L915.6 357.1L923.0 354.1L930.8 353.4M930.8 353.4L931.0 345.4L932.8 337.5L934.2 329.6L932.2 321.4L933.2 313.5L934.5 305.5M934.5 305.5L926.9 308.8L918.7 310.0L911.5 314.5L903.4 316.0L895.6 318.8M882.8 261.7L891.0 262.0L899.1 262.9L907.4 261.3L915.4 264.5L923.6 263.1M923.6 263.1L924.2 262.5M924.2 262.5L925.7 254.6L923.7 246.9L924.2 239.1L921.7 231.4L923.9 223.5L922.1 215.8M922.1 215.8L922.0 215.8M934.5 305.5L936.8 303.5M936.8 303.5L934.8 296.7L933.3 289.7L931.5 282.9L927.6 276.7L927.3 269.4L923.6 263.1M902.3 539.8L909.7 540.2L917.2 541.0L924.1 544.2L931.1 547.0L938.7 547.0M938.7 547.0L947.2 544.1L955.2 540.1L962.2 534.5M962.2 534.5L965.0 528.4M965.0 528.4L960.3 522.5L956.8 515.7L951.1 510.6L945.2 505.7L941.9 498.7L936.9 493.1M936.9 493.1L929.4 493.7L922.5 496.7L915.1 497.7L908.1 500.5L900.7 501.3M924.4 158.8L924.6 158.6M924.6 158.6L921.5 152.1L919.6 145.2L917.5 138.4L915.0 131.7L911.3 125.5L910.3 118.2M884.4 -14.4L888.5 -20.5L894.7 -24.4L900.9 -28.1L906.3 -32.8L911.0 -38.2M921.6 656.9L923.8 649.9L926.8 643.3L930.7 637.1L932.5 630.0L936.6 623.8M936.6 623.8L930.8 618.1L924.5 613.0M974.2 684.0L973.2 676.8L968.4 670.8L967.3 663.6L965.3 656.7L963.0 649.9L960.5 643.1L958.0 636.4L954.1 630.1L952.5 623.1M952.5 623.1L944.5 622.2L936.6 623.8M936.9 493.1L942.5 486.5L944.0 477.5L951.1 471.8L953.9 463.6M953.9 463.6L951.4 456.4L947.7 449.7L946.7 442.0M924.6 158.6L934.8 158.0L944.6 160.5M944.6 160.5L947.7 153.2L949.4 145.5L949.6 137.4L952.8 130.1L955.4 122.7L958.7 115.4L959.1 107.3M959.1 107.3L957.1 105.2M957.1 105.2L949.1 104.1L941.4 101.0L933.1 101.2L925.1 99.7L917.4 97.0M924.2 262.5L930.9 258.6L938.3 256.7L945.7 254.6L952.4 250.8L959.7 248.7M959.7 248.7L960.0 240.4L961.7 232.3L962.6 224.2L964.5 216.1L967.0 208.2M967.0 208.2L959.6 210.1L952.0 210.7L944.8 213.1L937.1 213.4L929.6 214.8L922.1 215.8M905.5 23.0L906.6 22.6M906.6 22.6L913.2 18.1L917.2 11.2L923.7 6.6L927.8 -0.3L932.4 -6.7L938.7 -11.4L942.8 -18.2L949.1 -23.1M949.1 -23.1L949.4 -24.2M949.4 -24.2L947.6 -29.3M932.3 65.4L939.8 61.9L947.5 59.2L955.7 58.3M955.7 58.3L958.7 51.8L962.0 45.5L962.4 38.2L965.1 31.6M965.1 31.6L963.7 30.4M963.7 30.4L956.5 30.0L949.4 28.7L942.2 28.0L935.2 25.8L928.0 25.9L920.7 25.8L913.9 22.3L906.6 22.6M929.0 581.8L935.5 578.6M935.5 578.6L936.5 570.7L935.3 562.6L939.1 555.0L938.7 547.0M967.0 208.2L967.3 207.8M967.3 207.8L967.6 200.7L965.6 193.6L966.1 186.4L966.5 179.2L964.4 172.2M964.4 172.2L957.7 168.6L951.1 164.6L944.6 160.5M955.8 400.6L957.7 398.1M957.7 398.1L954.7 390.8L953.2 382.9L951.3 375.2L949.2 367.6L946.1 360.2M946.1 360.2L939.1 355.3L930.8 353.4M936.8 303.5L944.0 303.5L950.9 305.6L957.6 308.6L964.9 308.6M964.9 308.6L974.1 304.9L982.3 299.4M982.3 299.4L984.3 290.8L986.2 282.1L987.2 273.3M987.2 273.3L981.3 268.8L977.3 262.3L970.8 258.4L965.0 253.9L959.7 248.7M952.5 623.1L962.3 615.9M962.3 615.9L962.9 607.7L964.5 599.7L969.0 592.3L969.4 584.0M969.4 584.0L961.1 581.6L952.2 583.0L943.8 580.6L935.5 578.6M957.7 398.1L964.5 396.2L971.5 394.4L978.2 392.0L985.7 392.0L992.0 388.2L999.1 386.8M999.1 386.8L998.5 379.6L999.1 372.1L997.3 365.0L996.1 357.8M996.1 357.8L989.8 354.5L983.2 351.7L977.1 348.2L971.2 344.1L964.7 341.2M964.7 341.2L957.8 346.8L952.9 354.5L946.1 360.2M953.9 463.6L961.8 464.5L969.5 466.0L977.3 467.3L984.7 470.6L992.7 470.7L1000.6 471.2L1008.2 473.4M1008.2 473.4L1009.3 465.2L1012.7 457.4L1012.0 448.9L1014.9 441.0M1014.9 441.0L1014.4 438.5M1014.4 438.5L1007.0 435.9L998.8 436.4L991.4 433.9L983.7 432.5L976.7 428.0L968.6 428.4L961.1 426.2L953.7 423.4M957.1 105.2L957.4 96.6L960.0 88.5L963.5 80.6L964.5 72.1M964.5 72.1L960.8 64.8L955.7 58.3M1048.0 -1196.0L1046.8 -1188.9L1046.9 -1181.9L1048.6 -1174.9L1047.5 -1167.8L1050.8 -1160.9L1048.1 -1153.8L1050.1 -1146.8L1051.2 -1139.8L1049.5 -1132.7L1049.4 -1125.7L1051.4 -1118.7L1052.7 -1111.7L1050.1 -1104.6L1050.8 -1097.6L1051.7 -1090.6L1050.6 -1083.5L1054.2 -1076.6L1054.4 -1069.6L1054.4 -1062.6L1055.1 -1055.5L1052.9 -1048.4L1053.4 -1041.4L1055.6 -1034.5L1055.7 -1027.4L1055.9 -1020.4L1054.6 -1013.3L1054.6 -1006.3L1053.8 -999.2L1056.3 -992.3L1054.3 -985.2L1056.6 -978.2L1057.0 -971.2L1057.8 -964.2L1058.1 -957.2L1055.7 -950.1L1055.9 -943.0L1057.2 -936.0L1059.4 -929.1L1059.6 -922.1L1060.0 -915.0L1059.6 -908.0L1058.4 -900.9L1061.2 -894.0L1059.7 -886.9L1059.5 -879.9L1062.1 -872.9L1060.9 -865.8L1059.9 -858.8L1060.9 -851.8L1061.6 -844.8L1060.4 -837.7L1061.6 -830.7L1062.8 -823.7L1062.9 -816.7L1061.2 -809.6L1061.8 -802.6L1061.8 -795.5L1063.4 -788.6L1065.2 -781.6L1065.3 -774.6L1064.8 -767.5L1064.0 -760.4L1066.7 -753.5L1064.1 -746.4L1064.5 -739.4L1065.7 -732.4L1067.8 -725.4L1065.2 -718.3L1066.9 -711.3L1066.2 -704.2L1066.9 -697.2L1066.6 -690.2L1068.0 -683.2L1066.3 -676.1L1066.6 -669.1L1066.9 -662.1L1068.3 -655.1L1069.7 -648.1L1069.7 -641.1L1070.4 -634.1L1068.4 -626.9L1069.0 -619.9L1069.3 -612.9L1069.5 -605.9L1069.1 -598.8L1070.5 -591.9L1072.1 -584.9L1070.8 -577.8L1072.8 -570.8L1071.8 -563.8L1073.7 -556.8L1071.5 -549.7L1073.1 -542.7L1074.1 -535.7L1072.1 -528.6L1075.4 -521.7L1072.6 -514.6L1073.5 -507.6L1075.9 -500.6L1074.0 -493.5L1074.9 -486.5L1074.0 -479.4L1075.4 -472.5L1076.3 -465.5L1074.7 -458.4L1078.0 -451.5L1075.8 -444.3L1078.5 -437.4L1078.2 -430.4L1079.0 -423.4L1076.6 -416.2L1078.4 -409.3L1077.6 -402.2L1079.6 -395.2L1078.2 -388.1L1078.7 -381.1L1081.0 -374.2L1079.8 -367.1L1079.3 -360.1L1081.4 -353.1L1080.0 -346.0L1080.9 -339.0M1080.9 -339.0L1083.1 -332.2L1084.3 -325.2L1083.8 -317.8L1085.2 -310.9L1086.5 -303.9L1090.0 -297.4L1090.9 -290.3L1091.6 -283.2L1093.2 -276.3L1095.8 -269.5L1095.8 -262.3L1098.9 -255.7L1098.5 -248.3L1101.6 -241.7L1104.3 -235.0L1103.6 -227.6L1107.2 -221.1L1106.8 -213.8L1110.5 -207.3L1108.7 -199.6L1111.7 -193.0L1112.5 -185.9L1116.1 -179.4L1115.8 -172.1L1118.2 -165.3L1120.1 -158.5L1119.6 -151.1L1123.8 -144.7L1123.7 -137.5L1126.6 -130.8L1125.4 -123.3L1126.7 -116.3L1131.2 -110.0L1131.2 -102.7L1132.6 -95.8L1133.2 -88.6L1134.7 -81.7L1137.5 -75.0L1136.9 -67.6L1141.0 -61.2L1142.6 -54.3L1141.7 -46.8L1145.7 -40.4L1145.8 -33.2M1145.8 -33.2L1149.4 -30.2M1149.4 -30.2L1158.2 -30.1L1166.7 -27.7L1175.3 -26.4M1175.3 -26.4L1184.8 -31.1M1184.8 -31.1L1185.5 -38.6L1186.1 -46.1L1190.1 -53.0L1189.7 -60.7L1192.1 -67.9L1191.4 -75.6L1195.0 -82.7L1193.8 -90.5L1197.5 -97.5L1197.7 -105.0L1200.3 -112.2L1199.8 -119.9M1199.8 -119.9L1200.8 -126.9L1200.3 -134.0L1199.9 -141.0L1201.1 -148.0L1199.6 -155.1L1198.4 -162.1L1201.3 -169.1L1200.9 -176.2L1200.4 -183.2L1200.7 -190.2L1198.8 -197.3L1199.6 -204.3L1200.9 -211.3L1201.4 -218.4L1201.3 -225.4L1198.5 -232.4L1200.4 -239.5L1199.9 -246.5L1199.4 -253.5L1198.5 -260.6L1198.4 -267.6L1199.6 -274.6L1199.7 -281.7L1198.9 -288.7L1199.2 -295.7L1199.9 -302.8L1200.6 -309.8L1200.0 -316.8L1198.4 -323.9L1201.0 -330.9L1199.2 -337.9L1201.3 -345.0L1201.4 -352.0L1198.3 -359.0L1199.9 -366.1L1201.3 -373.1L1199.2 -380.1L1199.8 -387.2L1198.9 -394.2L1197.9 -401.2L1198.5 -408.3L1198.2 -415.3L1198.8 -422.3L1200.0 -429.4L1199.8 -436.4L1201.2 -443.4L1200.2 -450.5L1199.0 -457.5L1201.2 -464.5L1200.0 -471.6L1199.7 -478.6L1200.8 -485.6L1200.1 -492.7L1199.0 -499.7L1199.9 -506.7L1198.8 -513.8L1201.2 -520.8L1198.6 -527.8L1201.2 -534.9L1197.9 -541.9L1197.7 -548.9L1199.6 -556.0L1198.4 -563.0L1199.5 -570.0L1198.1 -577.1L1200.6 -584.1L1200.0 -591.1L1200.1 -598.2L1201.0 -605.2L1201.2 -612.2L1200.0 -619.3L1200.2 -626.3L1197.6 -633.3L1197.8 -640.4L1199.1 -647.4L1201.1 -654.4L1198.7 -661.5L1199.6 -668.5L1197.6 -675.5L1199.0 -682.6L1200.8 -689.6L1199.7 -696.6L1200.5 -703.7L1197.6 -710.7L1198.2 -717.7L1198.2 -724.8L1200.5 -731.8L1197.9 -738.8L1200.8 -745.9L1198.4 -752.9L1200.7 -759.9L1199.3 -766.9L1198.6 -774.0L1200.9 -781.0L1198.9 -788.0L1200.0 -795.1L1197.7 -802.1L1200.4 -809.1L1201.0 -816.2L1197.8 -823.2L1200.1 -830.2L1198.4 -837.3L1197.9 -844.3L1198.7 -851.3L1199.8 -858.4L1200.8 -865.4L1201.0 -872.4L1201.0 -879.5L1199.6 -886.5L1199.7 -893.5L1197.9 -900.6L1200.0 -907.6L1199.3 -914.6L1198.6 -921.7L1200.6 -928.7L1198.2 -935.7L1197.8 -942.8L1197.9 -949.8L1197.8 -956.8L1199.4 -963.9L1200.2 -970.9L1197.9 -977.9L1199.1 -985.0L1199.3 -992.0L1199.3 -999.0L1198.8 -1006.1L1199.2 -1013.1L1197.3 -1020.1L1197.5 -1027.2L1198.8 -1034.2L1198.1 -1041.2L1200.0 -1048.3L1198.1 -1055.3L1200.2 -1062.3L1198.1 -1069.4L1197.5 -1076.4L1198.9 -1083.4L1198.6 -1090.5L1198.4 -1097.5L1199.9 -1104.5L1198.0 -1111.6L1199.6 -1118.6L1200.2 -1125.6L1198.8 -1132.7L1199.0 -1139.7L1200.5 -1146.7L1199.3 -1153.8L1197.8 -1160.8L1197.4 -1167.8L1197.4 -1174.9L1198.3 -1181.9L1197.4 -1188.9L1198.9 -1196.0M964.7 341.2L965.3 333.0L964.5 324.9L964.1 316.7L964.9 308.6M963.7 30.4L961.6 22.8L961.0 14.7L956.5 7.7L954.1 0.2L952.6 -7.6L950.6 -15.3L949.1 -23.1M987.2 273.3L994.0 270.9L999.6 266.5L1005.2 262.2M1005.2 262.2L1006.8 260.1M1006.8 260.1L1004.5 252.7L1001.5 245.6L999.0 238.2L997.2 230.7L997.6 222.6L994.4 215.5M994.4 215.5L987.7 213.1L980.5 212.9L974.2 209.3L967.3 207.8M965.0 528.4L971.8 525.3L979.2 525.3L986.3 523.6M986.3 523.6L991.9 517.6L998.2 512.4M998.2 512.4L1000.7 504.1L1006.6 497.5L1010.3 489.8L1013.4 481.8M1013.4 481.8L1008.2 473.4M964.4 172.2L972.4 167.9L979.7 162.5L988.2 159.2M988.2 159.2L990.9 152.0L992.2 144.3L995.0 137.0L995.1 129.0L1000.0 122.4L1000.7 114.5M1000.7 114.5L993.5 115.1L986.7 113.1L979.8 111.3L972.8 110.8L965.8 110.0L959.1 107.3M965.1 31.6L973.0 31.4L980.9 31.6L988.4 28.9M988.4 28.9L989.1 20.6L990.2 12.3L992.9 4.3L992.6 -4.1L994.9 -12.2M994.9 -12.2L987.2 -13.9L979.9 -16.9L972.1 -18.0L964.2 -19.0L956.6 -20.7L949.4 -24.2M969.4 584.0L973.1 580.9M973.1 580.9L971.4 573.1L971.2 565.0L969.1 557.3L964.4 550.3L964.1 542.2L962.2 534.5M1014.4 438.5L1015.0 431.5L1014.6 424.4L1017.0 417.5L1017.0 410.5L1018.8 403.6L1018.3 396.5M1018.3 396.5L1011.6 393.9L1006.2 388.7L999.1 386.8M973.1 580.9L982.3 581.9L991.6 580.7M991.6 580.7L997.4 574.2L1002.4 566.8L1009.2 561.2M1009.2 561.2L1005.3 554.9L1000.4 549.4L998.3 542.1L994.6 535.8L990.4 529.7L986.3 523.6M964.5 72.1L972.8 74.9L981.6 72.6L989.8 76.1L998.3 76.4M998.3 76.4L1002.6 70.0L1003.8 61.9L1007.8 55.3L1011.7 48.6M1011.7 48.6L1008.6 40.7M1008.6 40.7L1001.1 38.2L995.3 32.6L988.4 28.9M1002.1 632.0L995.8 628.6L988.6 627.1L982.4 623.3L975.4 621.7L969.2 617.9L962.3 615.9M996.1 357.8L999.8 350.1L1006.3 344.1L1009.1 335.7L1013.6 328.6M1013.6 328.6L1010.2 317.8M1010.2 317.8L1002.2 314.7L995.4 309.8L989.7 303.3L982.3 299.4M1000.7 114.5L1004.2 112.0M1004.2 112.0L1004.3 104.7L1002.3 97.7L999.4 90.9L1000.8 83.3L998.3 76.4M1008.6 40.7L1014.3 35.7L1017.9 28.7L1023.7 23.8L1029.6 19.0L1033.0 11.8L1038.2 6.4L1044.6 2.0M1044.6 2.0L1044.0 -8.9M1044.0 -8.9L1039.5 -15.6L1035.8 -22.8M1035.8 -22.8L1027.7 -24.5L1019.6 -25.3L1011.3 -23.9M1011.3 -23.9L1003.5 -17.5L994.9 -12.2M1011.3 -23.9L1008.7 -30.7L1004.5 -36.5L1000.9 -42.7L996.2 -48.2L993.5 -55.0L988.7 -60.4L985.8 -67.0L980.8 -72.3L975.8 -77.7L972.9 -84.3M1008.4 629.0L1010.1 624.8M1010.1 624.8L1009.9 614.4L1009.5 603.9M1009.5 603.9L1005.0 598.2L1000.1 592.7L995.7 586.8L991.6 580.7M994.4 215.5L1001.3 213.5L1008.4 211.7L1015.2 209.4M1015.2 209.4L1013.0 202.5L1012.0 195.4L1011.5 188.2L1010.3 181.1L1008.7 174.1L1007.8 167.0M1007.8 167.0L1001.5 163.9L994.3 162.9L988.2 159.2M1035.8 -22.8L1038.7 -29.5L1040.7 -36.6L1045.1 -42.8L1047.7 -49.6L1050.8 -56.3L1052.7 -63.5L1054.6 -70.6L1059.7 -76.5L1061.1 -83.9L1063.5 -90.8L1066.7 -97.5M1066.7 -97.5L1066.3 -104.6L1067.2 -111.7L1068.7 -118.7L1069.5 -125.8L1068.7 -133.0L1070.0 -140.0L1068.6 -147.3L1069.8 -154.3L1069.9 -161.4L1070.2 -168.5L1070.8 -175.6L1072.6 -182.7L1072.9 -189.8L1071.5 -197.0L1072.0 -204.1L1074.4 -211.1L1074.3 -218.2L1074.8 -225.3L1075.1 -232.4L1075.7 -239.5L1074.6 -246.7L1074.3 -253.9L1075.8 -260.9L1075.0 -268.1L1078.8 -275.0L1077.6 -282.2L1078.6 -289.2L1080.0 -296.3L1079.9 -303.4L1078.2 -310.6L1079.0 -317.7L1078.6 -324.9L1081.5 -331.8L1080.9 -339.0M1018.3 396.5L1029.7 392.9M1029.7 392.9L1033.6 386.8L1035.9 379.9L1038.7 373.2L1041.5 366.6L1045.3 360.4L1049.2 354.3L1051.6 347.5M1051.6 347.5L1045.9 343.1L1039.5 340.1L1033.2 336.8L1026.2 335.1L1019.8 332.0L1013.6 328.6M1007.8 167.0L1016.1 165.7L1024.6 167.5L1032.8 165.1M1032.8 165.1L1036.4 157.2L1040.8 149.8L1045.7 142.6L1050.9 135.7M1050.9 135.7L1049.9 127.7M1049.9 127.7L1047.3 120.1L1042.0 114.1M1042.0 114.1L1034.5 112.4L1026.8 113.8L1019.4 111.6L1011.8 111.0L1004.2 112.0M998.2 512.4L1004.5 517.2L1011.3 521.6L1016.1 528.2L1023.2 532.1L1030.0 536.4L1035.3 542.4M1035.3 542.4L1041.4 538.4L1045.3 532.1L1050.5 527.1M1050.5 527.1L1047.9 519.5L1046.4 511.5L1042.9 504.1L1039.9 496.6L1039.3 488.4M1039.3 488.4L1030.5 486.6L1021.9 484.4L1013.4 481.8M1009.2 561.2L1016.0 558.6L1023.1 559.1L1030.1 558.8M1030.1 558.8L1033.6 550.9L1035.3 542.4M1010.2 317.8L1016.6 311.8L1024.1 307.3L1030.7 301.6L1037.2 295.8M1037.2 295.8L1031.0 290.9L1025.3 285.8L1021.6 278.5L1016.2 273.1L1010.0 268.3L1005.2 262.2M1042.0 114.1L1044.2 107.3L1049.4 102.1L1052.7 95.9L1053.7 88.6L1058.0 82.9L1060.8 76.5M1060.8 76.5L1053.4 69.9L1045.6 63.6M1045.6 63.6L1038.6 61.2L1031.4 59.2L1025.0 55.2L1018.7 51.2L1011.7 48.6M1009.5 603.9L1016.2 600.4L1022.6 596.2L1028.4 591.1L1035.1 587.5L1041.8 584.0L1048.6 580.7M1048.6 580.7L1043.8 575.4L1039.0 570.0L1035.8 563.3L1030.1 558.8M1006.8 260.1L1013.1 256.0L1021.1 256.2L1026.9 251.0L1034.5 250.3L1040.8 246.3M1040.8 246.3L1038.2 238.1L1037.7 229.4L1035.3 221.2L1034.0 212.7M1034.0 212.7L1024.3 212.7L1015.2 209.4M1039.3 488.4L1046.6 486.4L1053.2 482.5M1053.2 482.5L1054.4 475.4L1052.6 468.3L1054.6 461.2L1053.7 454.1L1055.7 447.0L1054.1 439.9M1054.1 439.9L1046.3 441.7L1038.5 440.8L1030.6 441.5L1022.8 440.3L1014.9 441.0M1052.3 668.9L1055.4 661.8L1057.7 654.4L1058.8 646.8L1060.3 639.2L1063.8 632.2L1063.5 624.1L1066.2 616.9L1069.1 609.7M1069.1 609.7L1068.5 608.5M1068.5 608.5L1061.0 609.6L1054.0 612.8L1046.1 612.9L1039.7 618.1L1032.1 618.8L1025.0 621.7L1017.9 624.5L1010.1 624.8M1054.1 439.9L1059.1 434.0L1065.9 430.4M1065.9 430.4L1061.0 425.1L1058.3 418.6L1054.9 412.4L1051.5 406.2L1047.8 400.2M1047.8 400.2L1038.5 397.2L1029.7 392.9M1034.0 212.7L1039.6 207.9L1044.2 202.1L1049.2 196.8M1049.2 196.8L1047.5 189.6L1041.6 184.7L1039.4 177.8L1036.1 171.5L1032.8 165.1M1051.6 347.5L1055.0 346.2M1055.0 346.2L1057.5 339.1L1062.2 332.9L1063.0 325.0L1068.3 319.1L1069.5 311.4L1073.0 304.7M1073.0 304.7L1065.4 298.2L1058.6 290.9M1058.6 290.9L1051.4 292.1L1044.3 293.9L1037.2 295.8M1058.6 290.9L1057.4 283.8L1056.3 276.8L1059.0 269.6L1056.5 262.6L1056.6 255.5M1056.6 255.5L1048.0 252.1L1040.8 246.3M1068.5 608.5L1067.9 598.3L1066.2 588.2M1066.2 588.2L1057.5 584.3L1048.6 580.7M1045.6 63.6L1046.2 56.3L1047.5 49.0L1050.6 42.1L1050.0 34.5L1051.6 27.4L1054.7 20.4L1054.4 12.9M1054.4 12.9L1049.1 7.8L1044.6 2.0M1056.6 255.5L1062.8 252.0L1068.9 248.0L1076.2 246.4L1082.6 243.2L1088.8 239.5M1088.8 239.5L1089.7 231.0L1090.6 222.6L1091.1 214.0L1093.2 205.7M1093.2 205.7L1087.3 194.0M1087.3 194.0L1079.6 193.5L1072.0 195.3L1064.3 194.5L1056.8 196.7L1049.2 196.8M1049.9 127.7L1057.1 127.6L1063.9 124.1L1071.0 123.9L1078.5 125.6L1085.4 123.7L1092.5 122.7L1099.5 121.2L1106.6 120.3M1106.6 120.3L1102.6 113.7L1097.9 107.6L1093.9 101.0L1091.5 93.6L1087.8 86.9L1082.6 81.0L1079.4 74.0M1079.4 74.0L1074.3 72.2M1074.3 72.2L1067.4 73.9L1060.8 76.5M1066.2 588.2L1073.1 581.3M1073.1 581.3L1072.9 573.5L1075.8 566.2L1075.4 558.4L1077.7 551.1L1078.2 543.4L1080.0 535.9M1080.0 535.9L1072.7 533.5L1064.9 532.8L1057.9 529.4L1050.5 527.1M1087.3 194.0L1089.7 187.4L1090.1 180.2L1093.4 173.8M1093.4 173.8L1093.3 173.1M1093.3 173.1L1087.5 168.9L1083.1 163.2L1077.5 158.9L1072.4 154.1L1067.5 149.0L1061.7 144.8L1055.5 141.1L1050.9 135.7M1106.8 903.2L1107.3 896.2L1109.4 889.3L1109.3 882.2L1110.7 875.3L1110.0 868.2L1111.1 861.2L1113.7 854.4L1113.9 847.4L1114.1 840.3L1112.9 833.1L1115.4 826.3L1114.1 819.1L1118.1 812.4L1119.0 805.4L1118.9 798.3L1118.0 791.2L1120.8 784.4L1119.2 777.1L1122.2 770.4L1121.9 763.3L1120.8 756.1L1124.7 749.4L1123.9 742.3L1124.8 735.3M1124.8 735.3L1125.0 727.9L1123.5 720.7L1121.9 713.6L1122.1 706.2L1118.7 699.3L1120.2 691.7L1117.2 684.8L1115.1 677.7L1115.2 670.3L1113.2 663.2L1112.2 656.0L1113.2 648.5L1110.4 641.5L1109.5 634.3L1109.7 626.9M1109.7 626.9L1102.7 624.7L1095.9 621.9L1090.0 616.9L1083.2 614.1L1076.4 611.3L1069.1 609.7M1073.1 581.3L1081.1 582.1L1088.7 579.2L1096.7 579.5L1104.4 576.8L1112.3 576.6M1112.3 576.6L1118.5 570.0L1122.2 561.8M1122.2 561.8L1118.6 555.2L1113.9 549.4L1108.0 544.6L1103.1 539.0L1099.7 532.2M1099.7 532.2L1089.2 530.2M1089.2 530.2L1080.0 535.9M1073.0 304.7L1085.9 304.5M1085.9 304.5L1094.2 299.2L1100.6 291.7M1100.6 291.7L1100.6 284.6L1100.7 277.5L1101.4 270.4L1098.7 263.3L1100.5 256.2L1099.7 249.1M1099.7 249.1L1094.1 244.4L1088.8 239.5M1044.0 -8.9L1051.9 -8.9L1059.4 -11.2L1066.9 -13.2L1075.0 -11.5L1082.3 -15.0L1090.3 -14.4L1097.8 -16.3M1097.8 -16.3L1101.0 -22.8M1101.0 -22.8L1099.0 -30.1L1093.9 -36.0L1092.3 -43.4L1088.2 -49.8L1084.5 -56.3L1081.3 -63.1L1080.6 -71.0L1075.6 -76.9L1073.0 -83.9L1069.8 -90.7L1066.7 -97.5M1054.4 12.9L1062.3 15.5L1068.0 21.8L1075.1 25.8L1082.6 29.1M1082.6 29.1L1090.5 26.2L1096.7 20.6L1104.2 17.0M1104.2 17.0L1101.6 8.9L1100.5 0.4L1100.2 -8.1L1097.8 -16.3M1053.2 482.5L1061.6 482.4L1069.9 480.8L1078.3 480.5L1086.7 479.8M1086.7 479.8L1096.3 472.0M1096.3 472.0L1094.8 463.4L1097.3 454.7L1095.4 446.1L1095.2 437.5M1095.2 437.5L1087.9 435.7L1080.8 432.9L1073.0 433.2L1065.9 430.4M1047.8 400.2L1054.8 398.7L1061.0 395.2L1068.2 394.5L1074.1 389.9L1081.0 388.3L1088.1 387.2L1094.6 384.6M1094.6 384.6L1091.7 377.6L1088.6 370.8L1086.2 363.6M1086.2 363.6L1080.1 359.9L1073.2 357.5L1067.3 353.4L1060.3 351.3L1055.0 346.2M1109.7 626.9L1116.7 621.7L1121.7 614.3L1128.6 609.0M1128.6 609.0L1126.4 602.0L1122.2 596.0L1119.1 589.4L1116.0 582.9L1112.3 576.6M1089.2 530.2L1087.5 523.0L1089.5 515.7L1087.4 508.6L1089.1 501.3L1088.4 494.1L1087.7 486.9L1086.7 479.8M1074.3 72.2L1076.8 65.3L1076.8 57.8L1079.1 50.8L1081.4 43.8L1080.1 36.1L1082.6 29.1M1095.2 437.5L1099.9 429.2L1106.9 422.7M1106.9 422.7L1105.8 414.8L1105.4 407.0L1103.4 399.3L1103.9 391.3M1103.9 391.3L1094.6 384.6M1086.2 363.6L1090.1 357.0L1096.7 352.4L1100.0 345.3L1104.1 338.7L1109.8 333.4M1109.8 333.4L1104.2 328.3L1100.5 321.6L1094.6 316.7L1090.6 310.3L1085.9 304.5M1103.9 391.3L1113.1 386.5L1122.1 381.5M1122.1 381.5L1125.9 375.0L1130.1 368.8L1135.1 363.1L1136.6 355.2L1143.4 350.6L1146.0 343.4M1146.0 343.4L1141.7 337.7M1141.7 337.7L1133.6 337.7L1125.5 337.2L1117.9 333.5L1109.8 333.4M1101.0 -22.8L1108.5 -24.3L1116.0 -26.1L1123.2 -29.0L1131.1 -28.7L1138.2 -32.1L1145.8 -33.2M1099.7 532.2L1106.4 529.4L1111.8 524.3L1118.7 521.8L1125.2 518.5L1131.0 514.1L1137.4 510.9L1143.8 507.5M1143.8 507.5L1142.1 498.6M1142.1 498.6L1137.5 492.8L1135.7 485.7M1135.7 485.7L1128.0 482.4L1120.2 479.5L1111.7 478.6L1104.3 474.5L1096.3 472.0M1093.3 173.1L1097.1 166.5L1098.0 158.7L1103.5 152.8L1106.6 146.0L1106.9 137.9L1110.6 131.3L1114.5 124.8M1114.5 124.8L1106.6 120.3M1104.2 17.0L1112.3 18.8L1119.6 22.5L1126.8 26.4M1126.8 26.4L1136.4 19.4M1136.4 19.4L1136.8 11.9L1140.0 5.2L1141.1 -2.1L1143.1 -9.1L1145.5 -16.1L1147.1 -23.2L1149.4 -30.2M1079.4 74.0L1087.0 73.8L1094.4 72.3L1101.4 68.8L1108.9 68.0L1116.4 67.7M1116.4 67.7L1122.0 58.7L1130.3 52.2M1130.3 52.2L1128.5 43.7L1126.5 35.2L1126.8 26.4M1093.2 205.7L1101.3 207.8L1109.4 209.4L1117.5 211.5L1126.1 210.0L1134.2 212.4M1134.2 212.4L1135.0 205.1L1139.8 199.2L1141.0 192.1L1145.1 186.0L1145.7 178.6L1148.4 172.0M1148.4 172.0L1140.6 172.9L1132.7 174.0L1124.8 171.1L1117.0 173.0L1109.1 173.5L1101.3 173.8L1093.4 173.8M1141.7 337.7L1143.3 329.7L1144.1 321.6L1143.4 313.4L1142.9 305.2L1144.3 297.1L1145.2 289.0M1145.2 289.0L1137.7 288.0L1130.4 290.2L1122.9 289.8L1115.5 290.6L1108.1 291.4L1100.6 291.7M1099.7 249.1L1108.1 250.3L1116.6 250.0L1125.0 252.1L1133.4 252.8M1133.4 252.8L1136.7 244.9L1135.9 236.1L1138.9 228.1L1141.4 220.0M1141.4 220.0L1134.2 212.4M1261.4 1780.1L1263.0 1773.1L1263.6 1766.0L1260.4 1758.8L1262.9 1751.8L1263.2 1744.7L1264.2 1737.7L1263.1 1730.5L1262.1 1723.4L1263.0 1716.3L1264.7 1709.3L1265.1 1702.2L1263.4 1695.1L1265.3 1688.1L1265.6 1681.0L1265.8 1673.9L1263.8 1666.7L1265.6 1659.7L1265.4 1652.6L1266.6 1645.6L1266.0 1638.5L1265.5 1631.4L1267.7 1624.3L1266.6 1617.2L1268.6 1610.2L1267.1 1603.1L1268.3 1596.0L1269.5 1589.0L1267.2 1581.8L1269.7 1574.8L1267.6 1567.6L1271.0 1560.7L1267.9 1553.5L1270.7 1546.5L1269.7 1539.3L1269.3 1532.2L1270.7 1525.2M1270.7 1525.2L1270.3 1518.1L1270.8 1511.1L1270.5 1504.1L1269.5 1497.0L1271.0 1490.0L1270.3 1483.0L1272.8 1475.9L1270.7 1468.9L1271.0 1461.8L1270.3 1454.8L1273.0 1447.8L1270.7 1440.7L1272.0 1433.7L1272.7 1426.7L1271.2 1419.6L1272.5 1412.6L1270.9 1405.5L1270.3 1398.5L1270.1 1391.5L1271.6 1384.4L1273.2 1377.4L1270.9 1370.3L1271.8 1363.3L1273.0 1356.3L1271.3 1349.2L1270.9 1342.2L1272.3 1335.2L1272.0 1328.1L1273.9 1321.1L1273.8 1314.1L1271.5 1307.0L1272.7 1300.0L1272.3 1292.9L1271.0 1285.9L1272.5 1278.9L1274.3 1271.8L1272.1 1264.8L1273.2 1257.7L1273.7 1250.7L1271.4 1243.7L1274.6 1236.6L1271.7 1229.6L1272.5 1222.6L1274.0 1215.5L1271.6 1208.5L1272.9 1201.4L1272.1 1194.4L1273.4 1187.4L1271.8 1180.3L1272.3 1173.3L1272.6 1166.2L1272.2 1159.2L1272.3 1152.2L1272.7 1145.1L1273.9 1138.1L1272.6 1131.1L1275.1 1124.0L1273.7 1117.0L1273.2 1109.9L1273.2 1102.9L1275.4 1095.9L1272.6 1088.8L1275.2 1081.8L1272.9 1074.7L1276.0 1067.7L1274.2 1060.7L1274.9 1053.6L1275.9 1046.6L1273.2 1039.6L1273.2 1032.5L1275.5 1025.5L1275.2 1018.5L1275.7 1011.4L1274.2 1004.4L1275.0 997.3L1274.0 990.3L1274.9 983.3L1274.4 976.2L1275.6 969.2L1274.6 962.1L1274.6 955.1L1275.9 948.1L1274.0 941.0L1276.6 934.0L1275.6 927.0L1274.7 919.9L1274.3 912.9L1275.8 905.8L1275.9 898.8L1276.7 891.8L1275.5 884.7L1276.0 877.7M1276.0 877.7L1274.7 870.8L1275.3 863.6L1272.1 856.9L1273.6 849.6L1272.2 842.7L1271.5 835.7L1270.3 828.7L1266.9 822.1L1267.8 814.9L1266.0 808.0L1263.6 801.3L1265.3 793.9L1263.1 787.1L1262.6 780.1L1260.7 773.3L1257.9 766.6L1259.7 759.2L1256.2 752.6L1255.5 745.6L1255.7 738.4L1253.1 731.7L1253.1 724.6L1252.2 717.6M1252.2 717.6L1248.7 711.2L1242.8 706.6L1240.4 699.5L1234.6 694.7L1231.7 688.0L1228.1 681.7L1224.1 675.6L1218.1 671.0L1214.5 664.8L1212.7 657.3L1206.9 652.5L1202.9 646.5L1198.7 640.6L1195.5 634.0L1190.9 628.5M1190.9 628.5L1183.7 630.0L1177.0 632.7L1170.4 635.9L1163.5 637.9M1163.5 637.9L1160.5 644.8L1157.9 651.8L1156.2 659.2L1150.9 665.1L1148.1 672.1L1146.0 679.3L1142.5 685.9L1141.5 693.6L1137.5 700.1L1136.7 707.8L1132.3 714.1L1129.6 721.1L1126.1 727.8L1124.8 735.3M1163.5 637.9L1160.5 631.3L1156.6 625.2L1150.8 620.5L1148.4 613.5L1143.6 608.1M1143.6 608.1L1136.1 608.6L1128.6 609.0M1114.5 124.8L1124.4 121.6L1134.6 119.7M1134.6 119.7L1137.5 115.7M1137.5 115.7L1134.0 109.0L1132.4 101.5L1129.6 94.6L1126.6 87.8L1123.0 81.2L1118.3 75.0L1116.4 67.7M1135.7 485.7L1138.3 478.9L1143.3 473.7L1145.9 466.9L1150.0 461.1L1153.0 454.6L1157.9 449.3M1157.9 449.3L1156.9 446.5M1156.9 446.5L1151.6 441.5L1148.9 434.6L1144.0 429.3M1144.0 429.3L1136.4 429.0L1129.4 425.4L1121.6 425.9L1114.5 422.7L1106.9 422.7M1143.6 608.1L1147.8 602.2L1152.6 596.6L1157.7 591.4L1161.5 585.0L1167.5 580.5L1172.5 575.2M1172.5 575.2L1166.6 568.4L1160.1 562.2L1156.0 554.1M1156.0 554.1L1147.2 554.7L1139.2 558.4L1131.1 561.6L1122.2 561.8M1144.0 429.3L1149.1 422.8L1150.4 414.4L1154.1 407.1L1158.5 400.3M1158.5 400.3L1150.4 398.0L1143.3 394.0L1137.0 388.3L1129.5 385.0L1122.1 381.5M1156.0 554.1L1156.3 546.5L1155.7 538.9L1156.1 531.3L1157.2 523.8M1157.2 523.8L1154.0 517.3L1147.9 513.2L1143.8 507.5M1148.4 172.0L1157.4 166.2M1157.4 166.2L1155.8 158.8L1152.2 152.3L1146.4 146.9L1145.5 139.1L1139.6 133.7L1138.5 126.0L1134.6 119.7M1145.2 289.0L1148.8 284.7M1148.8 284.7L1148.5 276.5L1146.1 268.8M1146.1 268.8L1140.3 260.4L1133.4 252.8M1146.1 268.8L1151.5 263.8L1157.5 259.4L1161.1 252.6L1167.3 248.5L1171.9 242.7L1177.5 237.9L1183.1 233.1M1183.1 233.1L1182.0 227.5M1182.0 227.5L1173.0 219.1M1173.0 219.1L1165.1 220.5L1157.1 218.8L1149.3 219.5L1141.4 220.0M1137.5 115.7L1144.1 113.3L1150.1 109.5L1156.2 106.1L1162.2 102.5M1162.2 102.5L1164.4 94.4L1164.7 86.1L1164.4 77.8L1164.9 69.5M1164.9 69.5L1159.9 64.5M1159.9 64.5L1152.3 62.0L1145.7 56.9L1137.5 55.7L1130.3 52.2M1136.4 19.4L1145.0 18.8L1153.3 20.5L1161.6 22.7L1170.2 22.9M1170.2 22.9L1181.0 18.6M1181.0 18.6L1181.6 10.9L1179.6 3.5L1178.7 -4.0L1178.8 -11.6L1177.2 -19.0L1175.3 -26.4M1142.1 498.6L1148.5 495.8L1155.1 493.2L1162.0 491.6L1167.9 487.4L1174.1 484.1L1181.3 483.2L1188.1 481.2L1194.2 477.5M1194.2 477.5L1188.6 470.5L1185.1 462.1L1179.7 455.0M1179.7 455.0L1172.8 451.7L1164.8 452.5L1157.9 449.3M1157.4 166.2L1165.7 166.7L1173.4 169.7M1173.4 169.7L1181.4 166.7L1189.4 163.8M1189.4 163.8L1186.1 157.3L1185.4 149.8L1182.8 143.0L1178.2 137.1L1176.6 129.9L1173.3 123.4L1169.1 117.3L1169.0 109.5L1164.6 103.5M1164.6 103.5L1162.2 102.5M1146.0 343.4L1154.0 344.7L1161.6 346.7L1168.8 350.4L1176.8 351.3L1183.9 355.3M1183.9 355.3L1189.0 351.1M1189.0 351.1L1187.6 344.1L1186.0 337.1L1186.7 329.8L1183.4 323.2L1183.7 315.9L1182.1 308.9L1180.1 302.1L1177.6 295.3L1177.2 288.2M1177.2 288.2L1170.0 288.0L1163.0 286.4L1155.8 285.9L1148.8 284.7M1173.0 219.1L1173.6 212.1L1173.1 205.0L1172.5 197.9L1173.6 190.9L1175.0 183.8L1172.2 176.8L1173.4 169.7M1158.5 400.3L1164.9 396.1L1171.0 391.5L1177.8 388.1L1185.2 385.7M1185.2 385.7L1183.3 378.2L1184.3 370.5L1185.4 362.9L1183.9 355.3M1156.9 446.5L1162.5 441.3L1168.4 436.3L1173.1 430.3L1177.5 424.0L1182.6 418.3L1186.2 411.2L1192.3 406.4L1197.7 401.0M1197.7 401.0L1190.8 393.9L1185.2 385.7M1172.5 575.2L1179.7 577.4L1187.4 577.3L1194.3 580.6M1194.3 580.6L1195.8 573.7L1196.5 566.6L1198.3 559.7L1199.3 552.7L1199.6 545.6L1203.1 539.0L1204.7 532.1L1204.9 525.0M1204.9 525.0L1199.8 519.6L1194.1 514.8M1194.1 514.8L1187.1 517.9L1179.3 518.0L1171.7 518.9L1164.2 520.3L1157.2 523.8M1159.9 64.5L1162.5 57.8L1161.7 50.2L1166.3 44.0L1167.3 36.9L1167.7 29.6L1170.2 22.9M1177.2 288.2L1187.7 284.1M1187.7 284.1L1192.1 276.6L1194.8 268.4L1198.1 260.4L1199.8 251.8M1199.8 251.8L1193.5 246.2L1188.8 239.2L1183.1 233.1M1164.9 69.5L1171.7 66.7L1178.6 64.0L1186.1 63.3L1192.9 60.4L1199.5 57.1L1206.7 55.3M1206.7 55.3L1207.5 47.8L1209.6 40.5L1208.7 32.9M1208.7 32.9L1201.9 29.1L1195.6 24.4L1188.1 22.0L1181.0 18.6M1164.6 103.5L1171.7 106.0L1179.3 103.4L1186.3 105.7L1193.5 106.8L1200.7 108.2L1208.0 108.2M1208.0 108.2L1214.5 104.0L1219.0 97.7L1224.0 91.9M1224.0 91.9L1223.4 80.3M1223.4 80.3L1219.1 74.1L1215.4 67.5L1211.0 61.5L1206.7 55.3M1182.0 227.5L1188.3 224.2L1194.6 221.1L1198.7 214.4L1205.2 211.4L1212.2 209.1L1216.4 202.8L1223.8 201.1L1229.1 196.3M1229.1 196.3L1224.4 189.3L1223.5 180.9L1220.9 173.1L1216.8 165.9M1216.8 165.9L1209.0 161.5M1209.0 161.5L1199.3 163.6L1189.4 163.8M1197.7 401.0L1203.8 405.0L1210.0 408.8L1214.8 414.5L1221.0 418.2M1221.0 418.2L1228.5 420.0L1236.1 421.7M1236.1 421.7L1241.3 415.1L1245.3 407.8L1251.0 401.5L1255.6 394.6M1255.6 394.6L1253.1 387.7L1248.7 382.1L1245.3 375.7L1239.3 371.1L1236.2 364.6L1232.0 358.9L1228.0 353.0L1225.5 346.1L1220.7 340.7M1220.7 340.7L1217.2 339.6M1217.2 339.6L1210.6 343.6L1203.0 345.2L1195.7 347.3L1189.0 351.1M1194.1 514.8L1198.0 507.5L1197.2 498.8L1200.4 491.3L1203.5 483.8M1203.5 483.8L1194.2 477.5M1199.8 -119.9L1202.1 -112.9L1202.9 -105.3L1207.8 -99.1L1207.7 -91.3L1211.5 -84.8L1213.2 -77.6L1214.2 -70.1L1219.4 -64.0L1220.8 -56.7L1223.6 -49.8L1226.0 -42.8L1227.6 -35.5L1228.5 -28.0L1231.5 -21.2M1231.5 -21.2L1237.2 -18.1M1237.2 -18.1L1246.8 -21.5M1246.8 -21.5L1250.2 -27.6L1251.8 -34.7L1257.1 -39.9L1259.2 -46.6L1261.2 -53.5L1266.4 -58.7L1269.5 -65.0L1270.7 -72.2L1276.1 -77.3L1278.8 -83.8L1280.1 -91.0L1282.4 -97.7L1288.3 -102.6L1291.3 -108.9L1293.3 -115.7M1293.3 -115.7L1293.2 -123.1L1296.9 -129.7L1298.2 -136.7L1299.0 -143.8L1301.0 -150.7L1302.8 -157.7L1301.7 -165.2L1304.8 -171.9L1306.4 -178.9L1305.6 -186.3L1308.2 -193.1L1309.4 -200.1L1311.3 -207.1L1311.6 -214.3L1311.9 -221.5L1313.1 -228.6L1315.4 -235.4L1315.2 -242.7L1319.1 -249.3L1320.5 -256.3L1319.5 -263.8L1322.4 -270.5L1323.6 -277.6L1322.9 -285.0L1326.5 -291.6L1327.8 -298.7L1327.4 -306.0L1328.0 -313.2L1329.9 -320.1L1332.0 -327.0M1332.0 -327.0L1333.4 -334.4L1332.7 -341.9L1334.4 -349.2L1332.5 -356.8L1332.8 -364.2L1334.1 -371.6L1336.5 -378.9L1335.5 -386.4M1335.5 -386.4L1334.2 -393.5L1333.9 -400.5L1336.2 -407.6L1333.8 -414.6L1335.8 -421.6L1333.6 -428.6L1334.1 -435.7L1335.5 -442.7L1336.2 -449.8L1334.5 -456.8L1334.6 -463.9L1333.0 -470.9L1334.0 -477.9L1333.6 -485.0L1335.5 -492.0L1335.2 -499.1L1335.3 -506.1L1334.4 -513.1L1334.9 -520.2L1332.8 -527.2L1333.6 -534.3L1333.2 -541.3L1333.1 -548.3L1334.7 -555.4L1332.7 -562.4L1333.0 -569.4L1332.8 -576.5L1334.8 -583.5L1334.0 -590.6L1333.3 -597.6L1332.9 -604.6L1334.8 -611.7L1334.7 -618.7L1332.9 -625.8L1333.3 -632.8L1334.3 -639.9L1332.0 -646.9L1331.9 -653.9L1331.3 -661.0L1332.7 -668.0L1333.6 -675.1L1331.3 -682.1L1332.2 -689.1L1334.1 -696.2L1332.2 -703.2L1331.8 -710.2L1333.4 -717.3L1333.5 -724.3L1331.6 -731.4L1330.6 -738.4L1332.4 -745.4L1332.7 -752.5L1333.3 -759.5L1332.2 -766.6L1330.9 -773.6L1331.6 -780.6L1330.7 -787.7L1331.2 -794.7L1331.2 -801.8L1332.7 -808.8L1332.6 -815.9L1332.6 -822.9L1330.9 -829.9L1332.6 -837.0L1329.6 -844.0L1332.3 -851.0L1331.2 -858.1L1332.0 -865.1L1330.3 -872.1L1332.3 -879.2L1328.7 -886.2L1331.6 -893.3L1331.5 -900.3L1329.8 -907.3L1331.3 -914.4L1329.1 -921.4L1330.9 -928.5L1329.8 -935.5L1329.6 -942.5L1328.7 -949.6L1330.8 -956.6L1330.5 -963.7L1328.1 -970.7L1331.2 -977.8L1328.4 -984.8L1328.9 -991.8L1329.0 -998.9L1329.5 -1005.9L1330.6 -1013.0L1330.7 -1020.0L1329.5 -1027.0L1328.5 -1034.1L1327.5 -1041.1L1327.2 -1048.1L1328.8 -1055.2L1329.0 -1062.2L1328.4 -1069.3L1330.2 -1076.3L1328.1 -1083.3L1327.8 -1090.4L1328.0 -1097.4L1327.0 -1104.4L1329.7 -1111.5L1328.4 -1118.5L1328.2 -1125.6L1327.7 -1132.6L1327.0 -1139.6L1327.1 -1146.7L1327.7 -1153.7L1327.5 -1160.8L1329.3 -1167.8L1327.7 -1174.9L1326.4 -1181.9L1325.8 -1188.9L1327.3 -1196.0M1179.7 455.0L1184.8 448.8L1191.1 444.1L1198.1 440.0L1204.2 435.0L1208.6 428.0L1215.8 424.2L1221.0 418.2M1190.9 628.5L1193.4 621.4L1196.4 614.4L1199.0 607.3L1201.6 600.2M1201.6 600.2L1200.3 592.9L1202.3 585.8M1202.3 585.8L1194.3 580.6M1208.7 32.9L1213.2 27.2L1220.0 24.4L1225.0 19.5M1225.0 19.5L1228.1 12.2L1229.5 4.3L1233.7 -2.6L1235.8 -10.2L1237.2 -18.1M1231.5 -21.2L1223.6 -22.2L1215.6 -23.0L1208.2 -26.3L1200.5 -28.3L1192.4 -28.5L1184.8 -31.1M1209.0 161.5L1207.2 153.9L1208.6 146.3L1206.9 138.7L1209.3 131.0L1208.7 123.4L1207.3 115.8L1208.0 108.2M1203.5 483.8L1212.3 481.0L1221.0 477.5L1230.1 475.8M1230.1 475.8L1230.8 468.3L1232.5 461.0L1236.5 454.4L1237.0 446.8L1239.7 439.8L1240.7 432.4M1240.7 432.4L1236.1 421.7M1217.2 339.6L1216.9 331.7L1218.8 323.8L1218.4 315.8L1218.8 307.8L1218.5 299.8M1218.5 299.8L1210.7 296.2L1203.2 291.8L1194.9 289.0L1187.7 284.1M1199.8 251.8L1207.6 253.4L1215.4 252.2L1223.2 251.5M1223.2 251.5L1229.4 247.2M1229.4 247.2L1230.0 239.2L1230.9 231.2L1229.5 223.1L1230.9 215.2L1231.0 207.1L1232.5 199.2M1232.5 199.2L1229.1 196.3M1497.1 1780.1L1498.4 1773.1L1495.4 1766.0L1496.9 1759.0L1498.4 1751.9L1498.1 1744.9L1497.9 1737.8L1496.4 1730.8L1496.1 1723.7L1497.8 1716.7L1496.3 1709.6L1497.9 1702.6L1496.5 1695.5L1498.0 1688.5L1497.3 1681.5L1498.2 1674.4L1498.8 1667.4L1496.6 1660.3L1498.8 1653.3L1495.3 1646.2L1498.4 1639.2L1495.3 1632.1L1497.2 1625.1L1496.6 1618.0L1498.0 1611.0L1496.3 1603.9L1495.9 1596.9L1498.0 1589.8L1497.2 1582.8L1497.9 1575.8L1496.9 1568.7L1495.3 1561.7L1497.9 1554.6L1495.9 1547.6L1496.8 1540.5L1495.1 1533.5L1496.1 1526.4L1497.5 1519.4L1497.9 1512.3L1497.4 1505.3L1496.7 1498.2L1497.7 1491.2L1497.5 1484.1L1495.8 1477.1L1497.0 1470.1L1497.2 1463.0L1497.7 1456.0L1495.8 1448.9L1496.2 1441.9L1496.3 1434.8L1495.4 1427.8L1496.3 1420.7L1497.7 1413.7L1497.1 1406.6L1495.7 1399.6L1497.7 1392.5L1495.4 1385.5L1497.7 1378.5L1495.5 1371.4L1495.4 1364.4L1495.9 1357.3L1496.9 1350.3L1496.0 1343.2L1498.2 1336.2L1498.4 1329.1L1496.0 1322.1L1497.7 1315.0L1497.5 1308.0L1497.0 1300.9L1495.9 1293.9L1498.4 1286.8L1498.4 1279.8L1495.0 1272.8L1496.1 1265.7L1496.1 1258.7L1495.6 1251.6L1496.5 1244.6L1498.1 1237.5L1495.0 1230.5L1497.9 1223.4L1496.0 1216.4L1494.9 1209.3L1498.1 1202.3L1495.9 1195.2L1495.6 1188.2L1495.3 1181.1L1496.2 1174.1L1495.3 1167.1L1495.5 1160.0L1495.7 1153.0L1496.9 1145.9L1496.4 1138.9L1495.9 1131.8L1496.7 1124.8L1497.6 1117.7L1497.4 1110.7L1496.0 1103.6L1498.1 1096.6L1497.6 1089.5L1496.8 1082.5L1496.5 1075.4L1496.0 1068.4L1495.3 1061.4L1498.0 1054.3L1497.0 1047.3L1495.1 1040.2L1498.1 1033.2L1497.9 1026.1L1494.9 1019.1L1497.3 1012.0L1495.6 1005.0L1496.7 997.9L1497.7 990.9L1496.0 983.8L1496.5 976.8L1497.1 969.8L1495.4 962.7L1496.9 955.7L1496.2 948.6L1498.2 941.6L1495.4 934.5L1497.2 927.5L1494.8 920.4L1495.6 913.4L1495.1 906.3L1495.2 899.3L1496.5 892.2L1495.3 885.2L1497.5 878.1L1495.0 871.1L1496.9 864.1L1497.7 857.0L1495.1 850.0L1495.4 842.9L1497.4 835.9L1496.3 828.8L1497.9 821.8L1495.8 814.7L1496.0 807.7L1498.0 800.6L1496.4 793.6M1496.4 793.6L1494.3 786.8L1494.9 779.3L1493.1 772.4L1489.2 766.0L1488.9 758.8L1488.7 751.5L1484.3 745.2L1485.3 737.7L1483.5 730.8L1481.9 723.8L1479.9 717.0L1476.6 710.4L1476.5 703.2M1476.5 703.2L1474.5 696.0L1468.4 691.0L1467.2 683.4L1463.6 677.1L1458.9 671.3L1456.7 664.3L1452.4 658.3L1450.1 651.3L1444.5 646.1L1442.6 638.9M1442.6 638.9L1435.8 634.2L1427.6 632.8L1420.9 628.2L1413.1 626.0M1413.1 626.0L1406.3 630.7L1399.4 635.2M1399.4 635.2L1397.3 641.9L1398.1 649.2L1396.2 656.0L1397.1 663.2L1394.4 669.9L1394.9 677.1L1391.1 683.6L1390.7 690.7L1390.6 697.8L1387.7 704.4L1386.8 711.4L1385.7 718.4L1387.8 725.8L1384.6 732.4L1383.5 739.3L1382.9 746.4L1384.0 753.6L1379.8 760.1L1380.5 767.3L1379.0 774.2L1377.2 781.0L1378.1 788.2L1378.0 795.3L1373.8 801.8L1375.1 809.1L1374.9 816.2L1373.6 823.1L1369.5 829.6L1369.4 836.7L1370.3 843.9L1369.5 850.9L1365.8 857.5L1365.6 864.5L1364.9 871.5L1365.5 878.7L1363.5 885.5L1360.6 892.2L1363.0 899.6L1360.5 906.4L1360.8 913.5L1356.4 920.0L1358.6 927.4L1354.6 933.9L1353.9 940.9L1353.3 947.9L1354.8 955.2L1351.4 961.9L1351.2 968.9L1350.2 975.9L1350.4 983.0L1348.1 989.8L1346.0 996.6L1347.4 1003.9L1343.8 1010.4L1344.4 1017.6L1343.9 1024.7L1343.0 1031.6L1341.2 1038.5L1339.5 1045.3L1338.8 1052.3L1336.7 1059.1L1337.0 1066.3L1336.0 1073.2L1333.3 1079.9L1335.1 1087.3L1334.8 1094.3L1332.6 1101.1L1331.7 1108.1L1331.4 1115.1L1329.3 1121.9L1329.7 1129.1L1325.5 1135.6L1326.0 1142.8L1323.6 1149.5L1323.3 1156.6L1322.2 1163.5L1321.0 1170.4L1321.7 1177.6L1319.1 1184.4L1320.0 1191.6L1317.8 1198.4L1316.6 1205.3L1315.0 1212.1L1316.1 1219.4L1314.5 1226.3L1311.8 1233.0L1310.8 1239.9L1309.2 1246.8L1311.3 1254.2L1309.9 1261.1L1309.3 1268.1L1306.1 1274.8L1305.0 1281.7L1304.3 1288.7L1302.9 1295.6L1302.8 1302.7L1301.6 1309.6L1299.3 1316.4L1299.3 1323.5L1298.3 1330.4L1297.5 1337.4L1296.8 1344.4L1294.9 1351.2L1294.6 1358.3L1295.1 1365.5L1293.1 1372.3L1292.1 1379.2L1291.0 1386.2L1289.6 1393.0L1289.3 1400.1L1288.2 1407.0L1287.0 1414.0L1286.2 1421.0L1283.1 1427.6L1285.2 1435.0L1284.5 1442.0L1280.9 1448.6L1281.1 1455.7L1279.9 1462.6L1278.4 1469.5L1278.2 1476.6L1277.6 1483.6L1277.4 1490.7L1273.4 1497.2L1272.1 1504.1L1273.4 1511.4L1271.8 1518.3L1270.7 1525.2M1201.6 600.2L1207.0 604.9L1212.7 609.4L1215.4 616.6L1220.5 621.6L1227.0 625.3L1231.9 630.5L1235.7 636.7L1240.4 642.1L1246.1 646.4L1251.3 651.4L1255.9 656.8M1255.9 656.8L1257.3 648.9L1261.5 642.0L1263.9 634.5L1266.2 626.9L1265.9 618.5L1269.4 611.4M1269.4 611.4L1264.9 601.0M1264.9 601.0L1258.5 596.3L1252.6 590.6L1245.5 587.0L1238.3 583.3L1231.8 578.7M1231.8 578.7L1224.7 581.7L1217.4 583.8L1209.5 583.2L1202.3 585.8M1231.8 578.7L1232.8 571.5L1237.7 565.7L1239.7 558.9L1241.5 551.9L1245.4 545.8L1248.0 539.1L1249.0 531.9M1249.0 531.9L1248.3 530.3M1248.3 530.3L1241.1 529.0L1233.7 530.0L1226.6 527.3L1219.3 527.0L1212.1 526.8L1204.9 525.0M1216.8 165.9L1224.1 163.7L1230.3 159.5L1235.8 154.0L1242.5 150.8L1249.3 147.6L1256.2 144.8L1262.6 141.0M1262.6 141.0L1259.3 134.1L1257.0 126.8L1255.6 119.2L1250.8 112.8L1249.2 105.3M1249.2 105.3L1243.3 101.2L1236.3 99.1L1231.1 93.9L1224.0 91.9M1223.4 80.3L1230.5 77.8L1235.6 72.0L1242.5 69.0L1247.8 63.6L1254.7 60.6L1261.4 57.4L1267.8 53.5L1273.8 49.2M1273.8 49.2L1267.4 46.0L1260.7 43.2L1254.8 39.2L1249.5 34.2L1242.7 31.6L1236.8 27.5L1231.3 22.8L1225.0 19.5M1218.5 299.8L1229.3 291.0M1229.3 291.0L1229.5 282.9L1226.9 275.2L1224.8 267.5L1224.8 259.4L1223.2 251.5M1248.3 530.3L1248.5 523.1L1251.4 516.2L1250.2 508.7L1252.5 501.7M1252.5 501.7L1246.3 495.8L1241.1 488.9L1236.8 481.3L1230.1 475.8M1220.7 340.7L1227.6 337.7L1234.9 336.0L1242.0 333.9L1249.3 332.4L1256.6 331.0L1263.9 329.4L1271.2 327.9M1271.2 327.9L1272.7 320.3L1271.9 312.6L1272.7 304.9L1273.0 297.3L1273.9 289.6M1273.9 289.6L1266.4 288.9L1258.9 288.7L1251.6 290.6L1244.1 289.1L1236.7 291.7L1229.3 291.0M1273.9 289.6L1276.7 285.7M1276.7 285.7L1279.1 278.9L1278.0 271.7M1278.0 271.7L1273.6 263.9L1269.0 256.1M1269.0 256.1L1261.3 253.7L1253.1 253.0L1245.1 251.6L1237.0 250.3L1229.4 247.2M1252.2 717.6L1254.0 710.1L1252.6 702.4L1254.3 694.9L1253.9 687.2L1254.6 679.6L1253.9 671.9L1254.3 664.3L1255.9 656.8M1276.0 877.7L1277.2 870.6L1280.2 863.9L1281.5 856.7L1281.4 849.3L1285.7 842.9L1286.5 835.6L1287.0 828.3L1289.4 821.5L1291.0 814.4L1295.0 808.0L1295.8 800.7L1296.8 793.5L1298.3 786.5L1300.2 779.5L1302.0 772.5L1304.0 765.6L1307.3 759.0L1309.1 752.0L1310.5 744.9L1313.0 738.0L1314.0 730.8L1313.8 723.4L1315.4 716.3L1317.6 709.4L1319.7 702.5L1322.4 695.7L1324.1 688.7M1324.1 688.7L1325.1 681.5L1324.2 674.4L1323.5 667.2L1322.7 660.1L1325.2 652.8L1324.3 645.7L1322.6 638.5L1321.5 631.4L1324.7 624.2L1322.8 617.0M1322.8 617.0L1310.8 611.5M1310.8 611.5L1302.6 612.3L1294.3 610.2L1286.0 612.8L1277.7 610.8L1269.4 611.4M1249.0 531.9L1256.6 534.0L1263.5 538.4L1271.7 538.9L1279.4 540.8L1286.8 543.7L1294.0 547.3M1294.0 547.3L1296.3 539.8L1298.1 532.3L1298.0 524.5L1299.4 516.9L1299.1 509.0L1300.3 501.4L1300.8 493.7L1303.4 486.3M1303.4 486.3L1299.3 482.2M1299.3 482.2L1292.0 483.4L1286.6 489.3L1279.1 490.2L1272.8 493.9L1266.3 497.2L1259.3 499.2L1252.5 501.7M1240.7 432.4L1247.3 436.7L1255.3 437.3L1262.5 439.9L1269.0 444.4L1276.1 447.4L1283.4 449.8L1291.0 451.6L1297.6 455.5M1297.6 455.5L1305.2 446.8M1305.2 446.8L1307.4 439.3L1305.5 431.3L1306.5 423.7L1307.6 416.1L1309.4 408.6L1310.2 400.9M1310.2 400.9L1302.9 396.5L1295.9 391.7L1289.0 386.7L1281.4 382.9M1281.4 382.9L1274.3 384.5L1268.5 388.8L1262.7 393.2L1255.6 394.6M1335.5 -386.4L1336.2 -379.3L1340.9 -373.2L1341.6 -366.1L1344.1 -359.4L1344.3 -352.1L1345.5 -345.1L1349.6 -338.9L1350.9 -331.9L1350.8 -324.5L1353.2 -317.8L1357.0 -311.5L1356.8 -304.2L1358.3 -297.2L1361.4 -290.7L1364.1 -284.1L1364.2 -276.8L1367.2 -270.3L1369.7 -263.6L1371.4 -256.8L1372.4 -249.7L1375.2 -243.1L1376.1 -236.0L1377.4 -229.0L1379.2 -222.2L1381.6 -215.5L1382.0 -208.3L1386.3 -202.1L1387.3 -195.0L1387.0 -187.6L1389.1 -180.9L1390.7 -174.0L1393.1 -167.3L1395.7 -160.6L1396.7 -153.6L1399.3 -146.9L1402.7 -140.5L1404.0 -133.5L1406.4 -126.8L1405.5 -119.3L1409.3 -112.9L1410.8 -106.0L1412.2 -99.1L1415.5 -92.6L1415.2 -85.2L1416.8 -78.3L1418.6 -71.5L1420.1 -64.5L1423.9 -58.2L1426.3 -51.5L1426.0 -44.1L1428.1 -37.4L1430.6 -30.7M1430.6 -30.7L1439.5 -33.0L1448.6 -34.9L1457.7 -36.1M1457.7 -36.1L1457.8 -43.3L1461.5 -49.8L1461.5 -57.0L1464.1 -63.7L1463.7 -70.9L1464.9 -77.9L1466.9 -84.7L1469.0 -91.5L1470.8 -98.3L1470.3 -105.6L1472.8 -112.3L1473.0 -119.5L1476.0 -126.1L1476.9 -133.1L1477.5 -140.2L1478.1 -147.3L1479.1 -154.3L1482.6 -160.8L1483.6 -167.8L1483.1 -175.1L1483.7 -182.2L1485.3 -189.0L1489.4 -195.5L1487.4 -203.0L1491.4 -209.4L1491.7 -216.6L1493.1 -223.5L1494.4 -230.4L1495.2 -237.5L1497.1 -244.3L1496.7 -251.6L1501.0 -257.9L1499.4 -265.4L1500.8 -272.3L1504.0 -278.9L1505.2 -285.9L1507.1 -292.7L1508.0 -299.7L1510.1 -306.5L1508.3 -314.1L1509.5 -321.0L1511.6 -327.8L1514.8 -334.4L1513.9 -341.7L1516.5 -348.4L1518.7 -355.2L1517.8 -362.6L1520.4 -369.3L1523.1 -376.0L1523.8 -383.0L1523.9 -390.2L1525.5 -397.1L1526.1 -404.1L1529.8 -410.6L1530.5 -417.7L1531.4 -424.7L1531.4 -431.9L1534.2 -438.5L1534.6 -445.6L1537.0 -452.4L1536.8 -459.6L1539.9 -466.2L1540.6 -473.3L1541.0 -480.4L1542.7 -487.2L1544.9 -494.0L1545.2 -501.1L1548.1 -507.8L1546.0 -515.4L1550.4 -521.7L1551.1 -528.8L1551.6 -535.9L1554.2 -542.6L1553.0 -550.0L1555.0 -556.8L1557.6 -563.5L1559.3 -570.4L1559.0 -577.6L1562.5 -584.1L1562.6 -591.3L1561.8 -598.6L1563.4 -605.5L1564.5 -612.5L1567.5 -619.1L1568.0 -626.2L1569.1 -633.2L1571.0 -640.0L1571.0 -647.2L1573.8 -653.9M1573.8 -653.9L1575.6 -660.8L1575.7 -667.9L1575.0 -675.0L1575.0 -682.0L1574.8 -689.1L1576.2 -696.1L1575.6 -703.2L1578.2 -710.1L1578.5 -717.1L1578.0 -724.2L1578.7 -731.2L1576.4 -738.4L1576.9 -745.4L1578.0 -752.4L1577.6 -759.5L1579.0 -766.5L1581.3 -773.5L1581.1 -780.5L1581.9 -787.5L1579.6 -794.7L1580.0 -801.8L1579.6 -808.8L1580.8 -815.8L1580.4 -822.9L1582.4 -829.9L1581.9 -836.9L1583.6 -843.9L1583.6 -851.0L1584.0 -858.0L1583.3 -865.1L1585.2 -872.1L1585.4 -879.1L1585.8 -886.2L1585.3 -893.2L1585.6 -900.3L1585.3 -907.3L1584.7 -914.4L1586.6 -921.4L1587.5 -928.4L1586.3 -935.5L1589.1 -942.5L1589.5 -949.5L1589.7 -956.5L1589.9 -963.6L1589.1 -970.7L1588.3 -977.8L1589.0 -984.8L1591.0 -991.8L1592.2 -998.8L1589.4 -1005.9L1589.4 -1013.0L1591.0 -1020.0L1591.3 -1027.0L1592.5 -1034.0L1591.1 -1041.1L1594.1 -1048.1L1592.6 -1055.2L1595.0 -1062.1L1593.3 -1069.3L1593.5 -1076.3L1593.4 -1083.4L1596.6 -1090.3L1595.6 -1097.4L1596.8 -1104.4L1594.4 -1111.6L1596.4 -1118.5L1597.4 -1125.5L1598.7 -1132.5L1598.9 -1139.6L1596.2 -1146.8L1597.5 -1153.7L1600.1 -1160.7L1598.8 -1167.8L1600.6 -1174.8L1598.4 -1181.9L1598.0 -1189.0L1600.0 -1196.0M1232.5 199.2L1239.4 201.8L1246.8 200.4L1253.8 202.6L1261.0 202.9L1268.0 204.4M1268.0 204.4L1269.2 197.2L1271.3 190.0L1272.3 182.7L1272.9 175.4L1271.6 167.8L1274.5 160.7L1274.2 153.3M1274.2 153.3L1269.7 143.0M1269.7 143.0L1262.6 141.0M1269.0 256.1L1268.6 248.2L1271.3 240.7L1274.4 233.3L1273.2 225.2L1274.8 217.6L1276.6 210.0M1276.6 210.0L1268.0 204.4M1249.2 105.3L1255.5 102.1L1261.0 97.6L1267.9 95.6L1274.0 92.0L1279.1 86.8L1286.7 85.9L1292.0 81.2M1292.0 81.2L1287.7 75.4L1286.9 68.1L1282.9 62.3L1279.3 56.2L1277.6 49.3M1277.6 49.3L1273.8 49.2M1277.6 49.3L1284.4 38.9M1284.4 38.9L1280.8 32.5L1281.8 24.7L1279.0 18.1L1275.6 11.6L1274.6 4.5L1273.1 -2.5L1269.3 -8.8M1269.3 -8.8L1262.5 -14.4L1254.4 -17.4L1246.8 -21.5M1281.4 382.9L1281.8 375.6L1283.9 368.6L1286.8 361.8L1287.1 354.5L1287.5 347.2M1287.5 347.2L1282.6 340.4L1277.6 333.5L1271.2 327.9M1299.3 482.2L1298.4 473.3L1298.4 464.4L1297.6 455.5M1276.6 210.0L1283.7 210.1L1290.3 206.6L1297.7 207.8L1304.5 205.3M1304.5 205.3L1304.9 196.0L1308.8 187.4L1310.8 178.4M1310.8 178.4L1304.9 174.0L1297.9 171.1L1293.4 164.6L1286.3 161.9L1279.7 158.4L1274.2 153.3M1278.0 271.7L1285.1 267.8L1292.6 264.8L1299.5 260.7L1306.0 255.7L1313.4 252.4L1321.2 250.1M1321.2 250.1L1321.1 242.9L1318.0 236.1L1317.5 229.0L1318.5 221.6L1316.5 214.7M1316.5 214.7L1311.3 209.0L1304.5 205.3M1287.5 347.2L1294.8 346.7L1301.1 342.4L1307.8 339.9L1315.4 340.7L1322.2 338.3L1328.9 335.7L1335.9 334.3M1335.9 334.3L1331.1 328.2L1329.2 320.7L1325.4 314.1L1323.3 306.7L1319.8 300.0M1319.8 300.0L1313.2 296.0L1305.1 296.3L1297.8 294.3L1291.3 289.8L1283.4 289.5L1276.7 285.7M1269.7 143.0L1275.5 138.7L1282.2 135.9L1289.5 134.2L1294.7 128.6L1301.0 125.1L1307.6 122.2L1313.4 117.7L1320.3 115.3M1320.3 115.3L1320.3 115.3M1320.3 115.3L1316.6 108.0L1314.2 100.2L1310.2 93.2M1310.2 93.2L1303.8 89.7L1298.7 84.3L1292.0 81.2M1284.4 38.9L1292.5 34.4L1300.8 30.7L1309.8 28.5M1309.8 28.5L1310.6 21.2L1310.3 13.7L1312.3 6.4L1309.7 -1.1L1312.3 -8.5L1311.8 -15.9M1311.8 -15.9L1304.6 -15.3L1297.7 -13.1L1290.8 -11.1L1283.4 -11.6L1276.2 -10.9L1269.3 -8.8M1264.9 601.0L1269.1 594.9L1273.3 588.8L1278.1 583.2L1282.1 576.9L1285.8 570.5L1289.3 563.9L1294.3 558.4L1298.6 552.4M1298.6 552.4L1294.0 547.3M1310.8 611.5L1310.8 604.4L1311.9 597.3L1312.0 590.2L1310.2 583.2L1309.2 576.2L1308.6 569.1L1309.9 562.0L1309.3 555.0M1309.3 555.0L1298.6 552.4M1310.2 93.2L1316.0 86.8L1319.6 78.8L1326.0 72.9L1330.5 65.6M1330.5 65.6L1331.6 57.6L1328.7 49.9L1329.9 41.9L1327.7 34.2M1327.7 34.2L1318.7 31.6L1309.8 28.5M1309.3 555.0L1322.1 553.5M1322.1 553.5L1326.5 546.9L1331.1 540.4L1332.9 532.3L1337.3 525.7L1343.2 520.0L1345.7 512.2M1345.7 512.2L1340.2 506.0L1337.5 498.2M1337.5 498.2L1330.5 496.5L1323.9 493.5L1317.4 490.2L1310.4 488.2L1303.4 486.3M1337.5 498.2L1343.2 492.6L1346.8 485.6L1349.2 477.8L1353.9 471.4L1359.5 465.8M1359.5 465.8L1354.8 459.7L1352.8 452.3L1349.7 445.4M1349.7 445.4L1342.4 447.3L1334.9 445.8L1327.5 445.6L1320.1 447.4L1312.6 445.3L1305.2 446.8M1310.8 178.4L1315.9 172.7L1322.7 168.6L1326.4 161.5L1332.1 156.4M1332.1 156.4L1330.6 149.4L1328.3 142.7L1325.4 136.1L1325.2 128.7L1320.6 122.7L1320.3 115.3M1293.3 -115.7L1295.7 -108.9L1296.9 -101.9L1296.4 -94.5L1299.2 -87.8L1302.3 -81.1L1302.8 -73.9L1303.2 -66.7L1303.9 -59.6L1307.9 -53.1L1307.0 -45.6L1309.8 -38.9L1310.8 -31.8L1312.6 -24.9L1313.8 -17.9M1313.8 -17.9L1321.6 -17.3L1329.3 -14.6L1337.1 -14.1L1344.9 -13.4L1352.8 -13.3L1360.6 -12.7L1368.5 -12.7M1368.5 -12.7L1370.2 -14.5M1370.2 -14.5L1368.1 -21.5L1366.8 -28.5L1368.8 -36.0L1367.4 -43.0L1366.4 -50.1L1364.3 -57.1L1363.3 -64.2L1364.8 -71.5L1362.5 -78.5L1359.8 -85.4L1360.1 -92.6L1359.3 -99.7L1357.4 -106.7L1359.8 -114.2L1358.6 -121.2L1357.4 -128.3L1353.7 -135.1L1354.3 -142.3L1352.3 -149.3L1353.6 -156.7L1353.1 -163.8L1352.1 -170.9L1351.3 -178.0L1348.0 -184.8L1346.8 -191.9L1346.2 -199.0L1348.0 -206.4L1347.1 -213.5L1345.1 -220.5L1343.2 -227.5L1344.5 -234.8L1341.0 -241.6L1340.9 -248.8L1338.9 -255.8L1341.5 -263.3L1338.6 -270.2L1339.0 -277.4L1338.3 -284.5L1336.6 -291.5L1337.2 -298.8L1335.6 -305.8L1335.2 -313.0L1334.5 -320.1L1332.0 -327.0M1311.8 -15.9L1313.8 -17.9M1327.7 34.2L1334.2 29.7L1342.4 28.9L1348.8 24.1L1356.1 21.3L1363.5 18.9M1363.5 18.9L1364.2 10.9L1367.8 3.4L1365.7 -5.0L1368.5 -12.7M1319.8 300.0L1323.7 293.9L1326.8 287.4L1333.5 283.2L1336.1 276.3L1340.8 270.7L1344.2 264.4M1344.2 264.4L1336.6 259.5L1329.4 254.0L1321.2 250.1M1399.4 635.2L1390.3 633.7L1381.5 631.4L1372.6 629.1M1372.6 629.1L1367.0 634.5L1362.3 640.5L1357.0 646.1L1353.7 653.4L1347.4 658.1L1342.8 664.3L1338.4 670.6L1334.1 677.0L1328.8 682.6L1324.1 688.7M1372.6 629.1L1365.8 623.4L1360.3 616.7L1355.3 609.5L1350.2 602.4M1350.2 602.4L1344.0 607.2L1337.3 611.1L1329.3 612.7L1322.8 617.0M1310.2 400.9L1318.0 399.6L1325.5 397.2L1333.0 394.7M1333.0 394.7L1337.2 391.2M1337.2 391.2L1336.0 384.1L1337.8 377.0L1338.1 369.9L1337.3 362.8L1335.8 355.8L1336.9 348.7L1336.2 341.6L1336.5 334.5M1336.5 334.5L1335.9 334.3M1316.5 214.7L1324.0 212.4L1331.7 210.5L1339.9 211.5L1347.4 209.2L1355.3 208.8L1362.7 205.8M1362.7 205.8L1360.6 198.5L1359.9 191.0L1359.8 183.5L1357.2 176.3L1357.8 168.7M1357.8 168.7L1351.1 166.2L1345.0 162.4L1338.5 159.5L1332.1 156.4M1344.2 264.4L1352.6 265.9L1360.9 264.5M1360.9 264.5L1363.4 257.8L1365.7 251.1L1367.7 244.2L1370.6 237.7L1371.3 230.4L1372.2 223.2L1376.1 217.0M1376.1 217.0L1370.5 210.1L1362.7 205.8M1320.3 115.3L1328.2 114.7L1335.4 110.7L1343.1 109.1L1350.8 107.8L1358.8 107.7L1366.1 104.3L1374.0 104.0M1374.0 104.0L1371.6 96.3L1372.5 88.3L1370.0 80.6L1370.2 72.7L1370.3 64.8M1370.3 64.8L1362.4 65.4L1354.4 66.2L1346.5 67.1L1338.5 66.3L1330.5 65.6M1350.2 602.4L1351.7 594.7L1354.3 587.4L1357.2 580.1M1357.2 580.1L1351.2 575.9L1345.2 571.7L1339.3 567.3L1332.7 563.7L1328.7 556.9L1322.1 553.5M1336.5 334.5L1337.6 334.3M1337.6 334.3L1342.4 328.6L1345.7 321.9L1348.3 314.8L1353.0 309.0L1359.1 304.2L1361.8 297.1L1365.1 290.5L1371.0 285.5L1374.0 278.7M1374.0 278.7L1368.5 270.6L1360.9 264.5M1349.7 445.4L1352.5 439.1M1352.5 439.1L1348.0 432.2L1346.0 424.3L1343.0 416.8L1338.3 410.0L1335.7 402.3L1333.0 394.7M1357.2 580.1L1369.3 574.4M1369.3 574.4L1370.1 566.7L1370.6 559.1L1370.8 551.4L1371.1 543.8L1370.6 536.1L1369.8 528.4L1371.7 520.8M1371.7 520.8L1370.6 519.5M1370.6 519.5L1361.8 518.7L1354.3 513.5L1345.7 512.2M1370.2 -14.5L1378.3 -13.3L1386.4 -13.2L1394.5 -16.2L1402.6 -13.7L1410.7 -15.9L1418.8 -14.8M1418.8 -14.8L1424.2 -23.1L1430.6 -30.7M1370.3 64.8L1372.8 56.5L1377.3 49.0M1377.3 49.0L1375.8 42.0L1373.1 35.5L1369.4 29.4M1369.4 29.4L1363.5 18.9M1370.6 519.5L1375.7 513.3L1378.5 505.7L1384.3 500.0L1386.4 491.9L1391.4 485.7L1395.3 478.8M1395.3 478.8L1390.3 473.5L1384.4 469.1M1384.4 469.1L1376.0 468.9L1367.8 467.3L1359.5 465.8M1352.5 439.1L1358.7 433.5L1367.0 431.3L1372.8 425.1L1379.6 420.6L1387.3 417.3M1387.3 417.3L1388.4 411.7M1388.4 411.7L1383.7 405.4L1380.9 398.1L1376.6 391.7M1376.6 391.7L1368.7 391.1L1360.8 391.4L1352.9 390.1L1345.1 390.4L1337.2 391.2M1357.8 168.7L1363.3 164.1L1370.0 161.4L1376.0 157.5M1376.0 157.5L1377.1 149.8L1379.5 142.4L1381.4 134.9L1383.4 127.5L1386.6 120.3L1389.4 113.1M1389.4 113.1L1382.4 107.3L1374.0 104.0M1376.6 391.7L1379.8 384.6L1380.7 376.6L1383.9 369.5L1387.9 362.7L1390.5 355.4L1393.2 348.1M1393.2 348.1L1385.8 348.0L1378.9 346.0L1372.4 342.7L1365.5 340.8L1358.1 340.9L1351.8 336.8L1344.4 336.9L1337.6 334.3M1384.4 469.1L1386.5 461.5L1388.0 453.8L1389.2 446.1L1393.1 438.9L1393.3 430.9M1393.3 430.9L1389.9 424.3L1387.3 417.3M1389.4 113.1L1398.1 112.3L1406.8 112.1M1406.8 112.1L1412.0 105.6L1417.9 99.7L1423.4 93.5L1427.8 86.4L1432.1 79.3M1432.1 79.3L1430.2 71.1L1428.8 62.8L1426.0 54.8M1426.0 54.8L1419.1 53.5L1412.3 51.5L1405.3 50.6L1398.3 50.5L1391.1 51.7L1384.3 49.6L1377.3 49.0M1369.4 29.4L1376.8 28.1L1384.1 26.4L1391.8 27.3L1398.9 24.3L1406.6 25.0L1413.9 23.2L1421.3 21.9L1428.8 21.9L1436.1 20.2M1436.1 20.2L1433.4 12.8L1430.8 5.4L1427.3 -1.6L1423.2 -8.3L1418.8 -14.8M1376.1 217.0L1383.3 215.2L1390.7 215.7L1397.9 214.1M1397.9 214.1L1401.2 206.7L1405.9 199.9L1407.5 191.8L1410.4 184.3L1414.2 177.1M1414.2 177.1L1407.0 175.3L1401.4 170.7L1395.1 167.2L1388.4 164.7L1381.7 162.1L1376.0 157.5M1413.1 626.0L1413.2 618.9L1411.9 611.9L1412.4 604.8L1413.5 597.8L1413.4 590.8L1414.1 583.8M1414.1 583.8L1406.5 577.4M1406.5 577.4L1399.1 576.8L1391.6 576.1L1384.2 576.0L1376.7 576.3L1369.3 574.4M1393.3 430.9L1400.3 432.7L1405.7 437.8L1411.2 442.4L1418.6 443.6L1424.7 447.1L1431.0 450.3L1437.0 454.2M1437.0 454.2L1441.6 446.5L1444.7 438.1M1444.7 438.1L1444.7 430.4L1445.7 422.7L1442.8 415.0L1443.3 407.3L1444.5 399.6M1444.5 399.6L1437.7 402.2L1430.6 403.1L1423.5 404.5L1416.5 406.0L1409.1 405.5L1402.4 408.9L1395.3 409.9L1388.4 411.7M1393.2 348.1L1394.2 347.5M1394.2 347.5L1395.0 340.2L1393.1 333.2L1392.1 326.1L1392.1 318.9L1389.5 311.9L1387.7 304.9L1390.2 297.4L1387.8 290.4L1386.9 283.3M1386.9 283.3L1374.0 278.7M1386.9 283.3L1390.3 282.4M1390.3 282.4L1396.8 279.0L1402.1 273.8L1409.6 272.2L1415.5 267.8M1415.5 267.8L1417.7 260.6L1421.3 253.9L1423.5 246.6M1423.5 246.6L1422.9 233.2M1422.9 233.2L1416.2 229.1L1411.3 222.5L1403.9 219.3L1397.9 214.1M1371.7 520.8L1379.6 522.0L1386.8 526.1L1395.1 525.8L1402.8 527.9L1410.3 530.7M1410.3 530.7L1416.9 525.5L1424.7 521.9L1430.3 515.4M1430.3 515.4L1428.0 507.2L1427.4 498.7L1428.6 490.1L1426.6 481.9M1426.6 481.9L1418.6 482.6L1410.9 480.6L1403.2 478.6L1395.3 478.8M1406.5 577.4L1407.9 569.7L1408.8 561.9L1407.0 553.9L1410.4 546.4L1409.1 538.4L1410.3 530.7M1444.5 399.6L1447.0 395.7M1447.0 395.7L1446.5 387.7L1443.6 380.1L1443.4 372.1L1440.3 364.6L1437.9 357.0L1437.1 349.1M1437.1 349.1L1429.9 350.1L1422.8 348.6L1415.6 349.9L1408.5 349.3L1401.4 346.4L1394.2 347.5M1414.1 583.8L1422.1 582.1L1430.3 581.2L1437.6 576.7L1445.9 575.9L1453.8 574.1M1453.8 574.1L1451.7 566.5L1448.4 559.3L1446.9 551.5L1447.1 543.3L1444.4 535.9L1441.6 528.5L1439.5 521.0M1439.5 521.0L1430.3 515.4M1414.2 177.1L1420.0 173.7M1420.0 173.7L1418.8 166.0L1418.1 158.3L1416.9 150.6L1414.1 143.3L1410.6 136.1L1412.0 127.9L1407.9 120.8L1407.6 113.0M1407.6 113.0L1406.8 112.1M1426.6 481.9L1430.8 475.3L1436.5 469.9M1436.5 469.9L1435.4 462.1L1437.0 454.2M1426.0 54.8L1429.6 47.7L1433.4 40.6L1436.5 33.3L1440.1 26.2M1440.1 26.2L1436.1 20.2M1440.1 26.2L1447.5 25.7L1454.9 24.2L1462.3 25.2M1462.3 25.2L1466.4 18.3L1469.2 10.9L1471.8 3.4L1476.9 -2.9L1480.6 -9.9L1483.9 -17.1L1485.9 -24.9M1485.9 -24.9L1479.5 -29.3L1471.3 -29.1L1464.6 -32.9L1457.7 -36.1M1422.9 233.2L1429.9 229.5L1436.7 225.2L1444.6 223.2L1452.0 220.1L1457.9 214.0L1465.6 211.5M1465.6 211.5L1463.2 203.7L1462.4 195.5L1459.8 187.8L1455.9 180.4L1453.6 172.6M1453.6 172.6L1445.3 174.3L1436.8 173.3L1428.4 173.4L1420.0 173.7M1437.1 349.1L1437.9 348.2M1437.9 348.2L1437.8 340.3L1434.6 332.9L1433.8 325.1L1433.5 317.3M1433.5 317.3L1428.4 311.0L1420.0 308.7L1415.2 302.0L1407.9 298.5L1403.2 291.7L1396.3 287.6L1390.3 282.4M1433.5 317.3L1436.7 310.3L1436.1 302.4L1440.1 295.6L1440.6 287.9M1440.6 287.9L1433.7 283.7L1427.0 279.1L1420.8 274.0L1415.5 267.8M1407.6 113.0L1414.5 114.9L1420.2 119.3L1425.5 124.4L1432.8 125.8L1438.4 130.3L1445.8 131.4L1451.2 136.3L1457.4 139.7L1464.4 141.6L1470.0 146.2M1470.0 146.2L1474.0 139.8L1477.4 133.1L1481.4 126.7M1481.4 126.7L1479.5 119.7L1480.1 112.2L1478.3 105.2L1475.0 98.5L1475.1 91.1M1475.1 91.1L1467.5 90.5L1460.3 88.7L1453.4 86.0L1446.6 82.7L1439.7 79.6L1432.1 79.3M1439.5 521.0L1447.0 522.4L1454.4 521.7L1461.7 518.7L1469.2 520.9L1476.6 519.5M1476.6 519.5L1477.9 511.6L1477.2 503.6L1479.5 495.8L1478.4 487.7L1478.4 479.8M1478.4 479.8L1471.1 479.5L1464.2 477.5L1457.2 476.2L1450.6 472.8L1443.6 471.1L1436.5 469.9M1437.9 348.2L1446.2 346.4L1452.9 340.6L1460.8 337.6L1469.8 337.8L1477.0 333.3M1477.0 333.3L1476.1 324.2L1476.1 315.2L1477.0 306.2M1477.0 306.2L1474.7 297.3L1468.7 289.9L1466.6 281.0M1466.6 281.0L1457.6 282.3L1448.9 284.2L1440.6 287.9M1453.6 172.6L1457.9 166.2L1462.1 159.7L1464.4 152.0L1470.0 146.4M1470.0 146.4L1470.0 146.2M1476.5 703.2L1478.5 696.2L1480.2 689.1L1482.4 682.1L1483.2 674.8L1483.4 667.4L1485.5 660.4L1488.6 653.7L1488.3 646.1L1490.1 639.1L1492.2 632.1L1494.8 625.2M1494.8 625.2L1486.7 622.3L1478.1 621.3L1469.6 620.1L1461.4 617.7M1461.4 617.7L1455.4 621.9L1451.8 628.1L1448.0 634.2L1442.6 638.9M1447.0 395.7L1455.6 396.8L1464.1 398.8L1472.9 398.5M1472.9 398.5L1477.3 392.2L1482.4 386.3L1487.6 380.7L1493.5 375.6L1497.4 368.8L1500.9 361.7L1506.9 356.6L1511.5 350.4M1511.5 350.4L1510.7 343.6M1510.7 343.6L1503.8 342.2L1497.2 339.6L1490.7 336.7L1483.3 337.0L1477.0 333.3M1423.5 246.6L1430.5 249.5L1437.8 251.7L1444.5 255.6L1451.2 259.2L1458.7 260.8L1465.5 264.2L1472.7 266.7M1472.7 266.7L1478.0 260.9L1483.6 255.5L1489.9 250.9M1489.9 250.9L1487.2 244.2L1484.5 237.6L1480.8 231.3L1479.8 223.9L1476.2 217.7M1476.2 217.7L1465.6 211.5M1475.1 91.1L1480.1 85.4L1485.2 79.6M1485.2 79.6L1484.8 71.5L1484.5 63.3L1486.7 55.2L1487.1 47.0L1485.8 38.8M1485.8 38.8L1478.7 32.9L1469.7 30.5L1462.3 25.2M1444.7 438.1L1452.2 437.2L1459.4 439.8L1467.0 438.3L1474.1 441.9L1481.5 441.9L1488.9 441.8M1488.9 441.8L1491.7 435.4M1491.7 435.4L1491.6 427.3L1492.5 419.2L1493.3 411.1M1493.3 411.1L1486.8 406.4L1479.0 403.8L1472.9 398.5M1461.4 617.7L1461.3 609.4L1463.2 601.3L1463.2 593.0L1463.2 584.8L1463.2 576.5M1463.2 576.5L1453.8 574.1M1466.6 281.0L1468.3 273.3L1472.7 266.7M1476.2 217.7L1481.8 213.0L1488.0 209.3L1493.7 204.8L1501.0 202.9L1507.0 198.9L1513.8 196.2L1519.1 191.1M1519.1 191.1L1522.0 181.4M1522.0 181.4L1515.6 176.9L1509.8 171.4L1502.4 168.4L1496.0 163.9L1489.0 160.2L1482.9 155.3L1477.4 149.5L1470.0 146.4M1494.8 625.2L1501.7 618.8M1501.7 618.8L1500.2 611.5L1497.0 604.5L1496.8 596.9L1495.8 589.4M1495.8 589.4L1488.0 585.1L1481.7 578.6L1474.3 573.7M1474.3 573.7L1463.2 576.5M1522.0 181.4L1528.0 177.1L1533.9 172.7L1540.0 168.4M1540.0 168.4L1539.4 160.7L1536.8 153.7L1532.5 147.1L1530.2 139.9L1530.5 132.0L1527.8 124.9M1527.8 124.9L1520.1 124.9L1512.3 125.0L1504.6 125.8L1496.9 127.8L1489.2 126.5L1481.4 126.7M1478.4 479.8L1488.1 476.2L1496.7 470.6M1496.7 470.6L1495.1 463.3L1491.2 456.6L1489.6 449.4L1488.9 441.8M1477.0 306.2L1484.3 303.8L1490.4 299.0L1496.4 294.2L1504.0 292.3L1511.0 289.3L1517.6 285.5L1523.6 280.7M1523.6 280.7L1520.4 272.1L1516.2 263.9M1516.2 263.9L1512.0 257.9M1512.0 257.9L1505.0 254.5L1496.9 254.7L1489.9 250.9M1485.8 38.8L1492.7 36.1L1500.1 34.6L1506.4 30.4L1513.5 28.2M1513.5 28.2L1513.8 27.8M1513.8 27.8L1510.9 21.2L1511.9 13.6L1509.7 6.8L1505.6 0.4L1504.2 -6.7L1504.3 -14.0L1504.0 -21.3L1500.8 -27.9M1500.8 -27.9L1493.3 -26.8L1485.9 -24.9M1474.3 573.7L1479.1 568.1L1480.3 560.4L1485.4 554.9L1487.8 547.9L1491.9 541.9L1496.1 535.9M1496.1 535.9L1488.8 531.4L1483.0 525.1L1476.6 519.5M1496.1 535.9L1504.4 532.4L1513.4 532.1M1513.4 532.1L1516.5 524.9L1519.1 517.6L1522.5 510.5L1524.6 503.0L1524.8 494.8L1528.8 487.9M1528.8 487.9L1522.6 480.7L1514.6 475.4M1514.6 475.4L1505.7 472.8L1496.7 470.6M1496.4 793.6L1500.0 787.2L1500.6 779.9L1501.4 772.6L1505.7 766.4L1506.0 759.0L1510.9 753.0L1511.6 745.7L1515.0 739.2L1515.7 731.9L1517.3 724.9L1520.6 718.4L1522.9 711.6L1524.2 704.5L1525.7 697.4L1528.4 690.8L1531.5 684.2L1532.0 676.8L1533.9 669.9L1537.2 663.4L1540.0 656.8L1540.1 649.3L1543.7 642.9M1543.7 642.9L1538.0 637.3L1534.8 629.5L1528.4 624.4M1528.4 624.4L1519.3 623.4L1510.8 619.7L1501.7 618.8M1570.9 -526.1L1570.4 -533.2L1569.8 -540.3L1571.4 -547.4L1572.9 -554.4L1572.7 -561.5L1570.3 -568.7L1572.8 -575.7L1572.6 -582.8L1572.3 -590.0L1573.1 -597.0L1572.8 -604.2L1571.7 -611.3L1573.7 -618.3L1571.8 -625.5L1572.6 -632.6L1574.8 -639.6L1573.9 -646.8L1573.8 -653.9M1500.8 -27.9L1507.0 -33.2L1513.2 -38.6M1513.2 -38.6L1514.7 -45.5L1514.8 -52.5L1515.2 -59.5L1516.7 -66.4L1515.6 -73.6L1517.6 -80.4L1517.3 -87.5L1521.5 -94.1L1522.1 -101.1L1522.0 -108.2L1521.0 -115.3L1524.3 -122.0L1523.1 -129.2L1525.8 -136.0L1526.1 -143.0L1526.7 -150.0L1528.1 -156.9L1527.2 -164.0L1530.0 -170.8L1529.8 -177.9L1531.4 -184.7L1532.5 -191.7L1531.3 -198.9L1532.7 -205.8L1533.3 -212.7L1533.1 -219.8L1536.8 -226.5L1536.9 -233.5L1537.1 -240.5L1538.1 -247.5L1540.1 -254.3L1538.0 -261.6L1539.9 -268.5L1541.9 -275.3L1542.2 -282.3L1542.9 -289.3L1542.8 -296.4L1543.5 -303.3L1546.0 -310.1L1545.6 -317.2L1548.6 -323.9L1549.3 -330.9L1550.3 -337.8L1548.7 -345.1L1550.3 -352.0L1549.7 -359.1L1551.4 -366.0L1551.3 -373.0L1553.6 -379.8L1556.1 -386.6L1556.2 -393.6L1555.6 -400.8L1556.1 -407.8L1559.3 -414.5L1556.9 -421.8L1560.6 -428.4L1561.5 -435.4L1559.5 -442.7L1563.5 -449.3L1563.2 -456.4L1563.1 -463.4L1564.1 -470.4L1565.5 -477.3L1566.1 -484.3L1568.1 -491.1L1569.0 -498.0L1567.8 -505.2L1567.5 -512.3L1571.1 -519.0L1570.9 -526.1M1570.9 -526.1L1570.8 -518.9L1571.2 -511.8L1573.6 -504.9L1574.0 -497.8L1571.5 -490.5L1573.8 -483.5L1573.8 -476.4L1572.4 -469.2L1575.6 -462.3L1574.4 -455.1L1576.9 -448.1L1575.5 -440.9L1575.3 -433.8L1577.7 -426.8L1576.0 -419.6L1575.6 -412.5L1576.5 -405.4L1577.1 -398.3L1576.9 -391.2L1578.1 -384.2L1579.1 -377.1L1578.5 -370.0L1579.0 -362.9L1580.0 -355.8L1580.3 -348.7L1582.5 -341.7L1582.3 -334.6L1582.7 -327.5L1581.2 -320.3L1581.9 -313.2L1584.0 -306.2L1581.9 -299.0L1585.7 -292.1L1586.1 -285.0L1585.5 -277.8L1586.8 -270.8L1584.1 -263.5L1586.6 -256.6L1586.9 -249.5L1585.6 -242.3L1587.2 -235.2L1587.2 -228.1L1588.3 -221.1L1588.6 -214.0L1587.2 -206.8L1590.1 -199.8L1589.6 -192.7L1590.1 -185.6L1591.8 -178.6L1592.1 -171.5L1591.3 -164.3M1591.3 -164.3L1592.7 -157.3L1593.1 -150.1L1595.8 -143.4L1598.6 -136.6L1596.9 -129.0L1601.2 -122.6L1600.0 -115.1L1604.4 -108.7L1603.7 -101.2L1606.9 -94.6L1608.0 -87.5L1608.8 -80.4L1609.1 -73.1L1611.7 -66.4L1613.2 -59.4L1614.7 -52.4L1615.7 -45.3L1618.0 -38.5L1617.0 -31.0L1620.1 -24.3M1620.1 -24.3L1627.2 -23.7L1634.2 -22.3L1640.8 -19.1L1647.9 -18.1L1654.4 -15.1L1661.9 -15.8L1668.3 -11.9L1675.5 -11.3L1681.9 -7.7L1689.4 -8.2L1696.2 -6.0L1703.2 -4.8L1709.9 -2.3L1717.0 -1.5L1723.6 1.5L1730.8 2.3L1737.4 5.0L1744.7 5.2L1751.5 7.5L1758.3 9.5L1765.1 11.8L1772.0 13.2L1779.1 14.1L1786.3 14.6L1793.2 16.4L1799.8 19.4M1799.8 19.4L1807.2 19.6L1814.1 22.2M1814.1 22.2L1821.1 20.9L1828.2 20.7L1835.3 22.3L1842.3 21.0L1849.4 22.9L1856.4 20.3L1863.4 20.2L1870.4 19.9L1877.5 19.6L1884.6 21.4L1891.6 20.9L1898.6 19.5L1905.7 21.4L1912.7 20.8L1919.7 19.8L1926.8 20.3L1933.8 20.3L1940.9 19.4L1947.9 18.0L1955.0 18.8L1962.0 20.8L1969.0 18.6L1976.1 19.4L1983.1 17.3L1990.2 19.6L1997.2 19.8L2004.2 17.9L2011.3 17.7L2018.3 18.1L2025.4 17.0L2032.4 16.7L2039.4 16.3L2046.5 18.1L2053.5 17.3L2060.6 18.8L2067.7 18.7L2074.7 18.2L2081.7 18.3L2088.8 17.8L2095.8 14.7L2102.8 15.0L2109.9 17.9L2117.0 17.4L2124.0 16.3L2131.0 16.2L2138.0 15.4L2145.1 15.2L2152.1 14.0L2159.2 15.4L2166.2 14.2L2173.2 13.5L2180.3 16.1L2187.3 14.9L2194.4 15.8L2201.4 13.6L2208.5 14.5L2215.5 13.2L2222.6 15.1L2229.6 12.7L2236.6 14.1L2243.7 13.7L2250.7 12.7L2257.7 11.7L2264.8 13.0L2271.8 13.0L2278.9 13.9L2285.9 11.5L2292.9 11.3L2300.0 11.6L2307.1 13.3L2314.1 11.1L2321.1 12.4L2328.1 10.1L2335.2 10.1L2342.3 12.2L2349.3 11.3L2356.3 9.8L2363.4 11.0L2370.5 12.5L2377.5 10.4L2384.5 10.8L2391.6 10.2L2398.6 10.4L2405.6 8.6L2412.7 11.4L2419.7 10.2L2426.8 9.2L2433.8 8.9L2440.8 8.4L2447.9 10.9L2455.0 10.4L2462.0 8.6L2469.0 9.3L2476.1 9.0L2483.1 7.6L2490.1 6.8L2497.2 9.2L2504.2 7.0L2511.3 8.3L2518.3 6.2L2525.3 6.1L2532.4 6.4L2539.4 8.0L2546.5 7.8L2553.6 9.0L2560.6 7.6L2567.6 7.0L2574.6 5.0L2581.7 8.3L2588.7 6.5L2595.8 7.6L2602.8 4.6L2609.9 7.3L2616.9 5.8L2623.9 4.8L2631.0 5.3L2638.0 4.0L2645.1 5.7L2652.1 4.2L2659.2 5.8L2666.2 3.8L2673.2 5.5L2680.3 5.1L2687.3 5.3L2694.4 6.0L2701.4 3.5L2708.5 4.7L2715.5 3.6L2722.6 5.2L2729.6 4.8L2736.6 4.5L2743.7 3.7L2750.7 2.4L2757.8 4.6L2764.8 2.9M1510.7 343.6L1518.3 339.9L1524.8 334.7L1530.3 328.3M1530.3 328.3L1532.0 321.0L1535.9 314.4L1537.6 307.1L1539.2 299.8M1539.2 299.8L1534.9 292.6L1529.7 286.4L1523.6 280.7M1527.8 124.9L1534.2 117.2M1534.2 117.2L1530.2 109.8L1526.2 102.5L1523.7 94.4L1519.5 87.1L1515.2 79.9M1515.2 79.9L1507.7 79.7L1500.2 78.4L1492.7 81.4L1485.2 79.6M1514.6 475.4L1515.6 467.1L1519.8 460.0L1521.2 451.9L1526.4 445.1L1527.9 437.0M1527.9 437.0L1520.6 438.2L1513.5 435.0L1506.1 437.0L1498.9 437.1L1491.7 435.4M1515.2 79.9L1521.6 75.5L1527.1 70.2L1532.5 64.7M1532.5 64.7L1528.4 57.5L1525.2 49.9L1521.3 42.7L1518.8 34.8L1513.5 28.2M1493.3 411.1L1501.0 408.9L1508.8 406.8L1516.5 404.3L1524.2 401.9L1532.1 399.9M1532.1 399.9L1533.4 397.7M1533.4 397.7L1530.9 390.7L1525.8 384.8L1524.6 377.2L1522.2 370.1L1518.6 363.6L1514.7 357.1L1511.5 350.4M1512.0 257.9L1516.0 252.0L1519.6 246.0L1523.9 240.4L1529.6 235.9L1534.9 231.1L1538.2 224.8M1538.2 224.8L1535.5 217.4L1529.5 211.9L1527.5 204.1L1523.9 197.3L1519.1 191.1M1495.8 589.4L1503.4 587.2L1511.4 586.4L1518.4 582.0L1526.2 580.4L1534.0 578.9L1541.6 576.7M1541.6 576.7L1545.5 573.0M1545.5 573.0L1542.6 564.6L1538.1 556.9L1534.6 548.8M1534.6 548.8L1527.1 543.8L1521.3 536.6L1513.4 532.1M1527.9 437.0L1536.2 427.4M1536.2 427.4L1534.4 418.3L1533.2 409.1L1532.1 399.9M1533.4 397.7L1542.0 394.7L1551.1 393.5L1560.1 391.5M1560.1 391.5L1563.7 386.8M1563.7 386.8L1564.7 379.1L1563.6 371.4L1564.9 363.7L1564.5 355.9L1564.7 348.2M1564.7 348.2L1557.0 345.7L1551.8 338.8L1543.7 336.9L1537.3 332.2L1530.3 328.3M1536.2 427.4L1541.3 433.4L1549.1 435.9L1555.6 440.1L1561.5 445.2L1567.8 449.7L1573.2 455.3M1573.2 455.3L1579.6 450.8L1584.2 444.5L1588.5 437.9L1595.1 433.6M1595.1 433.6L1589.4 428.1L1585.1 421.6L1579.2 416.3L1574.5 410.0L1571.2 402.6L1564.9 397.6L1560.1 391.5M1528.8 487.9L1536.8 485.8L1545.0 486.0L1552.9 483.1L1561.1 483.4M1561.1 483.4L1567.9 478.8M1567.9 478.8L1569.7 471.0L1571.9 463.3L1573.2 455.3M2442.9 1780.1L2437.5 1775.4L2434.6 1768.8L2429.7 1763.8L2426.7 1757.3L2422.1 1752.0L2418.7 1745.7L2413.6 1740.8L2408.1 1736.2L2403.9 1730.6L2401.1 1723.9L2397.2 1718.1L2390.8 1714.1L2387.6 1707.8L2383.0 1702.5L2379.3 1696.5L2376.2 1690.1L2371.1 1685.2L2367.4 1679.2L2363.2 1673.6L2357.6 1669.0L2354.3 1662.7L2349.4 1657.7L2345.4 1651.9L2341.3 1646.2L2337.5 1640.3L2331.8 1635.8L2329.5 1628.8L2323.3 1624.7L2319.5 1618.8L2316.8 1612.0L2313.0 1606.2L2307.0 1601.9L2304.4 1595.1L2297.6 1591.5L2296.0 1583.9L2289.6 1580.0L2284.8 1574.8L2282.7 1567.6L2276.7 1563.3L2274.2 1556.5L2267.8 1552.5L2263.9 1546.7L2260.4 1540.6L2255.3 1535.6L2252.2 1529.2L2247.6 1523.9L2244.5 1517.5L2239.6 1512.4L2236.7 1505.8L2232.1 1500.5L2225.9 1496.4L2223.8 1489.2L2219.5 1483.6L2214.4 1478.8L2210.0 1473.3L2204.7 1468.5L2200.9 1462.6L2196.4 1457.2L2192.1 1451.7L2189.1 1445.2L2184.0 1440.3L2181.0 1433.7L2176.2 1428.6L2172.7 1422.4L2166.4 1418.5L2164.3 1411.2L2159.1 1406.4L2155.2 1400.6L2149.9 1395.8L2146.9 1389.3L2141.9 1384.3L2138.5 1378.1L2133.9 1372.8L2128.4 1368.2L2124.6 1362.2L2121.7 1355.7L2115.3 1351.7L2112.9 1344.8L2108.4 1339.4L2104.6 1333.5L2099.3 1328.7L2095.5 1322.8L2091.2 1317.2L2087.8 1311.1L2081.6 1307.0L2078.6 1300.4L2073.7 1295.4L2070.4 1289.1L2065.2 1284.2L2060.8 1278.8L2056.7 1273.2L2054.3 1266.1L2048.6 1261.7L2045.8 1255.0L2041.2 1249.7L2035.6 1245.2L2032.2 1239.0L2026.4 1234.6L2024.8 1227.0L2019.7 1222.1L2013.9 1217.6L2010.9 1211.2L2006.6 1205.7L2002.8 1199.7L1997.5 1194.9L1995.1 1188.0L1990.0 1183.1L1984.2 1178.7L1982.1 1171.5L1978.0 1165.8L1972.1 1161.4L1969.1 1155.0L1965.3 1149.1L1961.1 1143.5L1954.5 1139.6L1952.5 1132.4L1946.6 1128.1L1943.9 1121.3L1939.3 1116.0L1934.5 1110.9L1931.5 1104.4L1927.0 1099.0L1923.3 1093.0L1918.9 1087.5L1913.6 1082.8L1909.8 1076.8L1905.4 1071.4L1900.4 1066.4L1896.4 1060.6L1892.2 1055.0L1887.2 1050.1L1883.1 1044.4L1880.5 1037.6L1876.3 1032.0L1871.6 1026.7L1867.3 1021.2L1862.6 1016.0L1858.5 1010.3L1854.6 1004.5L1848.4 1000.4L1845.4 993.8L1842.7 987.1L1836.3 983.2L1832.8 977.0L1827.5 972.3L1823.7 966.3L1821.1 959.5L1814.6 955.7L1812.6 948.4L1808.3 942.9L1804.3 937.1L1798.3 932.9L1796.0 925.8L1790.2 921.5L1786.2 915.7L1783.4 909.1L1778.0 904.4L1774.1 898.5L1768.2 894.2L1763.7 888.8L1760.2 882.7L1755.5 877.4L1753.3 870.3L1747.5 866.0L1745.3 858.8L1740.2 853.9L1734.6 849.4L1731.8 842.7L1726.5 837.9L1722.8 831.9L1717.3 827.3L1715.2 820.1L1710.9 814.6L1706.0 809.5L1702.1 803.7L1696.9 798.8L1692.0 793.7L1688.4 787.7L1685.3 781.2L1680.6 776.0L1675.1 771.4L1671.2 765.6L1667.6 759.5L1662.1 754.9L1657.9 749.3L1654.8 742.8L1649.7 737.9L1647.6 730.7L1641.2 726.8L1638.7 719.9L1634.6 714.2L1629.0 709.7L1625.4 703.6L1622.5 697.0L1617.2 692.3L1612.3 687.2L1609.7 680.3L1603.5 676.3L1601.2 669.2L1595.1 665.1L1591.2 659.2L1586.7 653.9L1583.4 647.6L1579.8 641.5L1575.0 636.3L1570.3 631.2M1570.3 631.2L1564.1 635.2L1556.3 635.4L1550.0 639.2L1543.7 642.9M1528.4 624.4L1530.3 617.6L1533.4 611.1L1532.7 603.6L1536.3 597.2L1538.8 590.6L1540.7 583.8L1541.6 576.7M1545.5 573.0L1553.6 575.7L1562.4 575.7L1570.3 579.2L1578.5 581.4M1578.5 581.4L1587.0 577.1M1587.0 577.1L1589.9 568.9L1594.6 561.7L1597.6 553.6L1601.6 546.0M1601.6 546.0L1595.4 542.5L1589.5 538.6L1583.5 534.9L1577.9 530.3L1570.7 528.6L1565.1 524.3M1565.1 524.3L1559.5 529.8L1553.6 534.9L1547.7 540.0L1539.9 542.9L1534.6 548.8M1540.0 168.4L1548.2 170.8L1556.7 170.2M1556.7 170.2L1558.8 162.5L1562.8 155.7L1567.9 149.3L1571.0 142.1L1574.7 135.1L1576.4 127.3M1576.4 127.3L1571.8 121.5L1564.6 119.0L1558.4 115.3L1553.7 109.6M1553.7 109.6L1544.3 114.2L1534.2 117.2M1513.8 27.8L1521.3 25.3L1528.2 21.1L1536.0 19.4L1543.7 17.6L1551.5 15.7L1558.7 12.6M1558.7 12.6L1555.7 5.4L1553.7 -2.1L1552.6 -9.8L1551.4 -17.4M1551.4 -17.4L1544.3 -19.6L1538.0 -23.3L1531.6 -26.7L1526.4 -32.5L1520.2 -36.3L1513.2 -38.6M1565.1 524.3L1562.6 516.2L1564.6 507.8L1563.9 499.6L1562.5 491.5L1561.1 483.4M1516.2 263.9L1523.0 261.4L1530.3 261.4L1536.5 257.1L1543.4 255.2L1551.1 256.6L1557.3 252.3L1564.9 253.0L1571.6 250.6L1577.9 246.4L1585.2 246.2M1585.2 246.2L1580.6 240.6L1578.6 233.7M1578.6 233.7L1569.8 225.4M1569.8 225.4L1561.9 224.7L1553.9 226.3L1546.1 224.3L1538.2 224.8M1553.7 109.6L1557.0 102.1L1558.2 93.9L1561.7 86.6L1564.5 78.9M1564.5 78.9L1559.0 73.8L1555.1 67.3M1555.1 67.3L1547.7 65.1L1540.1 65.1L1532.5 64.7M1569.8 225.4L1570.6 217.7L1570.4 210.0L1568.5 202.3L1571.6 194.7L1571.3 187.0L1570.4 179.3M1570.4 179.3L1563.6 174.7L1556.7 170.2M1570.3 631.2L1574.4 624.6M1574.4 624.6L1575.4 617.5L1575.7 610.2L1577.4 603.1L1577.3 595.8L1577.0 588.5L1578.5 581.4M1558.7 12.6L1567.1 18.5M1567.1 18.5L1575.6 18.9L1584.2 18.1L1592.7 19.5M1592.7 19.5L1595.0 11.8L1600.5 6.0L1605.5 -0.2L1608.9 -7.3L1611.1 -15.0L1615.9 -21.2M1615.9 -21.2L1609.0 -22.8L1602.2 -24.5L1595.3 -26.0L1588.2 -27.0L1581.4 -28.7L1574.6 -30.8L1567.5 -31.6M1567.5 -31.6L1561.2 -27.9L1556.7 -22.2L1551.4 -17.4M1555.1 67.3L1557.8 60.6L1559.2 53.5L1558.9 46.1L1561.1 39.2L1563.0 32.3L1564.8 25.4L1567.1 18.5M1539.2 299.8L1547.4 297.3L1555.4 294.2L1564.3 294.2L1572.0 290.1M1572.0 290.1L1576.7 283.4L1579.5 275.7L1584.5 269.2L1589.2 262.5L1591.8 254.6M1591.8 254.6L1585.2 246.2M1564.5 78.9L1571.5 77.3L1578.7 78.7L1585.8 79.5L1592.8 77.1L1600.0 78.5L1607.1 77.9L1614.1 76.5M1614.1 76.5L1617.7 71.8M1617.7 71.8L1614.2 65.7L1610.6 59.6L1609.8 52.2L1605.5 46.5L1602.3 40.2L1599.7 33.7L1597.6 27.0L1593.9 21.0M1593.9 21.0L1592.7 19.5M1564.7 348.2L1572.1 347.4L1579.0 345.3L1585.4 341.8M1585.4 341.8L1585.5 333.5L1582.5 325.5L1582.3 317.2L1580.1 309.2L1581.0 300.8M1581.0 300.8L1572.0 290.1M2764.8 1067.6L2757.9 1065.9L2751.5 1062.9L2744.8 1060.8L2738.7 1057.2L2731.7 1055.7L2725.8 1051.4L2719.0 1049.6L2712.3 1047.5L2706.3 1043.4L2699.3 1042.0L2692.4 1040.4L2686.9 1035.1L2680.3 1032.7L2674.0 1029.7L2666.6 1029.0L2660.1 1026.5L2654.1 1022.5L2646.9 1021.7L2641.5 1016.3L2634.5 1014.8L2627.8 1012.5L2620.7 1011.6L2614.4 1008.2L2608.1 1005.1L2602.3 1000.6L2594.7 1000.8L2588.8 996.7L2581.6 995.8L2576.2 990.2L2569.4 988.3L2563.0 985.5L2556.4 983.1L2549.1 982.4L2542.6 979.6L2535.8 977.6L2530.0 973.3L2522.8 972.3L2516.5 969.3L2509.9 966.7L2504.4 961.6L2497.7 959.5L2490.5 958.5L2484.9 953.6L2477.3 953.7L2470.7 951.2L2464.5 947.7L2458.6 943.7L2451.1 943.5L2445.5 938.5L2438.7 936.8L2432.5 933.3L2425.3 932.2L2418.4 930.6L2412.0 927.8L2406.3 923.1L2399.5 921.2L2393.3 917.7L2386.0 917.0L2379.6 914.1L2373.0 911.7L2367.3 907.0L2360.6 904.9L2353.3 904.1L2347.6 899.6L2340.1 899.2L2334.2 895.2L2327.4 893.3L2321.5 889.0L2315.0 886.5L2308.4 884.0L2301.2 883.0L2294.5 880.9L2288.8 876.3L2282.3 873.5L2274.9 873.2L2269.4 867.8L2263.0 865.0L2255.8 864.2L2249.5 861.1L2243.1 858.0L2236.9 854.5L2230.1 852.8L2223.4 850.6L2217.2 847.2L2210.3 845.5L2203.1 844.4L2197.3 840.1L2190.6 837.9L2184.0 835.5L2177.5 832.7L2170.8 830.7L2164.4 827.8L2158.4 823.7L2152.1 820.6L2145.0 819.5L2139.0 815.5L2131.5 815.3L2125.5 811.4L2119.3 808.0L2112.8 805.3L2105.8 804.0L2098.9 802.1L2093.5 796.9L2086.5 795.4L2080.0 792.7L2073.1 791.1L2066.3 789.2L2060.3 785.1L2053.6 783.0L2047.7 778.8L2040.9 777.0L2034.5 774.0L2027.7 772.0L2021.4 768.8L2014.1 768.3L2008.7 762.8L2001.6 761.6L1995.1 758.9L1988.1 757.6L1981.4 755.3L1975.7 750.7L1969.2 748.0L1962.6 745.6L1955.5 744.4L1949.3 741.0L1943.2 737.4L1936.5 735.2L1930.3 731.7L1922.7 731.8L1917.1 726.9L1909.6 726.9L1903.9 722.2L1897.2 719.9L1890.1 718.8L1884.0 715.1L1877.8 711.6L1871.6 708.3L1864.0 708.4L1858.0 704.3L1851.9 700.7L1844.5 700.4L1839.0 695.2L1832.5 692.4L1825.2 691.8L1818.5 689.6L1811.9 687.2L1805.5 684.4L1799.2 681.1L1793.1 677.5L1786.8 674.1L1779.8 672.8L1773.8 668.8L1766.6 668.0L1760.4 664.6L1753.0 664.2L1747.0 660.2L1740.0 658.9L1733.6 655.9L1728.0 651.0L1720.5 650.7L1714.2 647.5L1708.0 644.1L1701.5 641.5L1694.9 639.0M1694.9 639.0L1687.6 639.8L1680.6 638.7L1673.7 635.8L1666.5 636.0L1659.3 636.2L1652.4 634.0L1645.2 633.6L1638.4 630.5L1630.9 633.0L1623.9 631.7L1616.8 631.2L1609.9 628.7L1603.0 626.4L1595.8 626.2L1588.4 627.7L1581.5 625.4L1574.4 624.6M1601.6 546.0L1607.5 540.5L1615.1 537.1L1620.8 531.2L1626.8 525.8L1632.2 519.7L1639.0 515.2M1639.0 515.2L1632.4 512.1L1626.1 508.5L1619.4 505.7L1613.2 501.7L1606.0 500.0L1600.1 495.6L1594.5 490.5L1587.1 489.0L1580.8 485.4L1574.8 481.3L1567.9 478.8M1578.6 233.7L1584.2 228.9L1588.9 223.3L1592.7 216.9L1598.5 212.2L1601.9 205.5L1607.9 201.0L1611.1 194.1L1617.2 189.8M1617.2 189.8L1613.9 182.3L1612.7 174.2M1612.7 174.2L1610.0 171.8M1610.0 171.8L1602.3 174.4L1594.3 175.3L1586.1 175.4L1578.6 179.5L1570.4 179.3M1567.5 -31.6L1570.1 -38.4L1568.6 -45.8L1572.9 -52.3L1574.1 -59.3L1574.2 -66.5L1576.2 -73.3L1577.8 -80.2L1577.3 -87.5L1580.0 -94.3L1578.4 -101.8L1582.3 -108.3L1583.1 -115.3L1584.8 -122.2L1583.8 -129.6L1584.8 -136.6L1587.6 -143.4L1589.1 -150.3L1590.7 -157.2L1591.3 -164.3M1610.0 171.8L1609.0 164.3L1610.4 156.8L1611.9 149.4L1609.4 141.9L1611.5 134.4L1610.4 126.9M1610.4 126.9L1601.9 125.4L1593.4 126.5L1584.9 127.4L1576.4 127.3M1563.7 386.8L1570.7 384.7L1577.8 383.1L1584.5 380.1L1591.6 378.2L1598.8 377.1L1605.8 374.9L1613.5 375.7L1620.0 372.0L1627.6 372.0L1634.3 369.1L1641.7 368.5L1648.4 365.3M1648.4 365.3L1641.9 361.3L1634.7 359.3L1627.3 357.6L1620.1 355.7L1613.5 352.0L1606.2 350.2L1599.8 345.9L1591.8 345.9L1585.4 341.8M1639.0 515.2L1646.0 514.3L1652.7 511.9L1659.6 510.8L1666.6 509.8L1673.8 510.0L1680.8 508.7L1687.2 505.0L1694.5 505.8L1701.4 504.4L1708.0 501.5L1715.0 500.3L1721.6 497.6L1728.9 498.3L1735.6 495.8L1742.7 495.4L1749.7 494.6L1756.4 492.2L1763.4 491.1L1770.2 489.2L1776.8 486.3L1783.9 486.1L1790.5 483.3L1797.5 482.4L1805.0 483.8L1811.4 480.3L1818.2 478.1L1825.3 477.7L1831.9 475.0L1839.2 475.6L1845.8 472.9L1852.7 471.5L1859.9 471.6L1867.0 471.2L1873.3 466.6L1880.7 467.7L1887.5 465.9L1894.3 464.1L1901.2 462.5L1907.8 459.7L1914.9 459.5L1922.0 458.7L1928.7 456.7L1936.1 457.7L1942.5 454.0L1949.8 454.4L1956.7 452.9L1963.6 451.4L1970.2 449.0L1977.1 447.6L1984.3 447.5L1990.7 443.5L1997.7 442.5L2004.4 440.4L2011.6 440.7L2018.5 439.2L2025.8 439.6L2032.7 438.1L2039.2 434.9L2046.2 433.8L2052.8 431.1L2060.1 432.0L2066.9 429.8L2073.5 427.2L2080.9 428.3L2087.2 424.0L2094.2 423.1L2101.3 422.7L2108.6 423.2L2114.9 418.8L2121.9 417.9L2129.2 418.3L2135.8 415.3L2143.1 416.1L2149.3 411.5L2156.4 410.9L2163.3 409.7L2170.6 410.3L2177.0 406.2L2184.3 406.9L2191.1 404.9M2191.1 404.9L2186.5 404.3M2186.5 404.3L2179.5 402.2L2172.4 401.2L2165.3 401.1L2157.9 403.1L2150.9 400.8L2143.7 401.1L2136.6 400.7L2129.5 399.6L2122.6 397.1L2115.4 397.0L2108.2 397.9L2101.1 396.6L2093.9 396.7L2087.1 392.9L2080.0 392.9L2072.7 393.2L2065.8 390.7L2058.7 390.0L2051.3 392.0L2044.2 391.2L2037.1 390.7L2030.1 388.4L2023.0 387.8L2015.9 387.4L2008.9 385.8L2001.7 386.0L1994.5 386.1L1987.5 384.1L1980.5 382.4L1973.1 384.9L1966.1 382.6L1959.0 381.9M1959.0 381.9L1951.7 383.2L1944.5 381.0L1937.2 382.1L1930.0 380.6L1922.7 381.2L1915.4 380.1L1908.2 381.4L1900.9 381.4L1893.6 380.0L1886.4 380.6L1879.1 382.2L1871.8 383.0L1864.6 380.1L1857.3 383.1L1850.0 380.0L1842.8 380.0L1835.5 380.9L1828.2 381.5M1828.2 381.5L1817.9 382.1M1817.9 382.1L1810.5 382.1L1803.8 384.9L1796.8 386.1L1789.9 388.2L1783.3 391.1L1776.4 393.2L1768.9 392.5L1762.2 395.2L1755.5 397.9L1748.2 398.0L1741.5 400.6L1734.5 402.3L1727.1 401.7L1720.3 404.2L1713.2 405.4L1706.2 406.8L1699.6 409.7L1692.6 411.3L1685.6 412.9L1678.7 414.8L1671.4 414.9L1664.4 416.2L1657.9 419.8L1650.6 420.0L1644.0 423.4L1637.3 425.7L1629.7 424.9L1622.7 426.2L1616.1 429.4L1608.6 428.7L1601.9 431.3L1595.1 433.6M1817.9 382.1L1810.7 382.0L1803.8 379.8L1796.8 378.8L1789.5 380.6L1782.7 377.1L1775.5 378.1L1768.3 378.0L1761.3 376.9L1754.3 375.7L1747.3 375.0L1740.1 375.1L1733.0 375.3L1726.1 372.5L1719.1 371.5L1712.0 370.9L1704.8 371.3L1697.9 368.9L1690.6 371.2L1683.6 370.1L1676.5 369.8L1669.6 367.2L1662.5 366.6L1655.4 367.0L1648.4 365.3M1610.4 126.9L1613.9 122.7M1613.9 122.7L1614.0 115.0L1612.2 107.3L1612.3 99.6L1615.7 91.9L1615.5 84.2L1614.1 76.5M1593.9 21.0L1601.0 19.4L1608.1 21.4L1615.2 20.8L1622.3 20.9L1629.4 21.9L1636.5 21.2L1643.6 22.2L1650.7 21.2L1657.8 22.0L1664.9 19.1L1672.0 21.5L1679.1 19.7L1686.2 21.8L1693.3 21.3L1700.4 21.9L1707.5 21.0L1714.6 19.7L1721.7 20.1L1728.8 21.0L1735.9 18.3L1743.0 20.0L1750.1 20.1L1757.2 20.5L1764.3 19.1L1771.4 20.0L1778.5 20.5L1785.6 19.1L1792.7 20.2L1799.8 19.4M1620.1 -24.3L1615.9 -21.2M1587.0 577.1L1592.7 582.0L1600.0 583.9L1606.0 588.1L1612.4 591.6L1618.2 596.3L1625.5 598.2L1631.8 601.9L1638.0 605.9L1643.9 610.3L1651.1 612.4L1656.0 618.6L1663.2 620.8L1669.1 625.2L1676.0 627.8L1683.1 630.2L1688.8 635.0L1694.9 639.0M2764.8 431.9L2757.8 431.3L2750.7 432.7L2743.9 429.2L2736.8 430.3L2729.8 430.4L2722.7 431.6L2715.8 430.5L2708.8 429.8L2701.8 428.4L2694.8 429.8L2687.8 428.3L2680.8 428.8L2673.8 427.4L2666.9 426.6L2659.8 426.9L2652.9 425.7L2645.9 425.8L2638.8 427.5L2631.9 425.1L2624.8 425.4L2617.9 424.0L2610.9 423.1L2603.8 424.8L2596.9 422.7L2589.8 424.6L2582.9 422.8L2575.8 424.8L2568.9 421.5L2561.9 422.5L2554.9 422.2L2547.9 421.7L2540.9 421.8L2533.9 422.0L2526.9 420.0L2519.9 419.9L2512.8 421.6L2505.9 420.5L2499.0 417.8L2491.9 419.8L2484.9 419.5L2477.9 418.1L2470.9 418.5L2464.0 416.1L2457.0 415.7L2449.9 418.4L2442.9 417.7L2435.9 417.6L2428.9 416.3L2421.9 416.5L2415.0 414.8L2408.0 413.7L2400.9 416.3L2393.9 416.1L2386.9 415.5L2379.9 414.5L2372.9 414.8L2366.0 413.4L2359.0 413.3L2352.0 411.6L2345.1 410.5L2338.1 410.1L2331.0 411.8L2324.0 410.6L2316.9 412.1L2310.0 410.1L2303.1 408.8L2296.1 408.4L2289.0 410.8L2282.0 410.4L2275.1 407.4L2268.1 407.8L2261.1 407.2L2254.0 409.4L2247.1 407.1L2240.0 408.9L2233.1 406.0L2226.1 405.5L2219.0 406.8L2212.0 407.7L2205.1 404.7L2198.2 403.4L2191.1 404.9M1617.7 71.8L1624.9 70.4L1631.6 67.8L1638.6 65.9L1646.1 65.8L1653.2 64.5L1659.7 60.7L1666.6 58.4L1674.3 59.3L1680.8 55.6L1687.8 53.8L1694.7 51.6L1702.1 51.3L1709.3 50.4L1715.9 46.9L1723.3 46.4L1729.9 43.1L1736.9 41.4L1744.3 40.9L1751.4 39.7L1758.2 37.2L1765.2 35.3L1772.3 33.9L1779.4 32.5L1786.5 30.8L1793.1 27.6L1800.0 25.3L1806.7 22.2L1814.1 22.2M1591.8 254.6L1600.7 254.8M1600.7 254.8L1604.4 248.6L1607.5 242.0L1610.0 235.1L1616.7 230.6L1618.1 223.1L1623.7 218.0L1624.4 210.0L1629.5 204.6M1629.5 204.6L1623.0 197.5L1617.2 189.8M1612.7 174.2L1620.0 173.9L1627.1 172.1L1634.2 170.7L1641.2 168.7L1648.0 165.9L1655.7 167.2L1662.7 165.6L1669.7 163.2L1676.9 162.1L1684.1 161.6L1691.1 159.2L1698.2 157.7L1705.3 156.4L1712.6 155.9L1719.7 154.5L1726.6 151.8L1734.0 151.9L1740.8 149.2L1748.2 148.8L1755.2 146.9M1755.2 146.9L1748.0 146.1L1741.3 143.0L1734.2 141.7L1727.1 141.1L1719.8 141.3L1712.7 140.2L1705.7 138.7L1698.7 136.8L1691.3 137.7L1684.6 134.6L1677.7 132.1L1670.1 133.9L1663.6 129.8L1656.3 129.7L1649.5 127.0L1642.3 126.8L1635.2 125.6L1628.2 124.3L1620.9 124.2L1613.9 122.7M1828.2 381.5L1821.1 380.6L1815.3 375.9L1808.6 373.6L1801.7 372.0L1794.5 371.5L1788.1 368.4L1781.5 366.2L1774.6 364.5L1768.1 361.9L1761.4 359.8L1755.3 355.8L1748.2 354.9L1741.9 351.5L1735.1 349.5L1727.6 349.9L1721.6 345.7L1714.5 344.8L1708.1 341.9L1701.3 339.8L1694.9 337.0L1687.7 336.4L1681.4 332.9L1674.4 331.8L1668.2 328.2L1661.2 327.0L1654.7 324.3L1648.4 320.9L1640.9 321.2L1633.9 319.9L1628.2 314.7L1621.1 313.8L1614.6 311.2L1608.1 308.4L1601.5 306.0L1594.2 305.5L1588.2 301.3L1581.0 300.8M1959.0 381.9L1952.2 379.9L1946.0 376.4L1939.5 373.7L1932.3 372.9L1925.7 370.4L1919.0 368.2L1912.4 366.0L1905.8 363.4L1899.7 359.5L1892.1 359.9L1886.6 354.3L1879.7 352.7L1872.8 351.1L1866.3 348.5L1859.3 347.3L1853.2 343.3L1846.7 340.6L1839.4 339.9L1833.0 337.2L1826.0 335.8L1819.4 333.3L1813.5 328.9L1806.6 327.3L1799.7 325.6L1793.3 322.6L1786.1 321.8L1779.3 320.0L1773.1 316.5L1766.7 313.4L1759.6 312.4L1753.4 308.8L1746.5 307.2L1739.8 305.0L1733.7 301.1L1726.6 300.0L1720.5 296.4L1713.8 294.0L1706.7 292.9L1699.7 291.7L1694.0 286.6L1687.1 285.2L1680.5 282.8L1673.9 280.1L1667.1 278.2L1660.9 274.6L1653.2 275.3L1647.7 269.7L1640.7 268.5L1633.8 266.9L1627.8 262.8L1621.1 260.5L1614.1 259.2L1606.8 258.8L1600.7 254.8M2186.5 404.3L2180.0 401.5L2173.1 399.8L2166.7 396.9L2160.4 393.6L2152.9 393.6L2147.1 388.8L2139.9 388.3L2133.1 386.1L2126.3 384.4L2119.7 381.8L2113.3 378.9L2107.0 375.6L2100.8 371.9L2093.3 372.1L2086.8 369.3L2080.3 366.7L2073.9 363.4L2067.0 362.0L2060.7 358.5L2053.5 357.9L2046.7 355.9L2040.7 351.7L2034.3 348.8L2026.9 348.5L2020.2 346.4L2014.3 341.9L2006.9 341.6L2001.4 336.3L1994.4 334.7L1987.2 334.1L1980.8 330.9L1973.8 329.7L1967.2 327.2L1960.9 324.0L1954.9 319.8L1948.3 317.3L1941.5 315.5L1934.7 313.5L1928.0 311.3L1921.3 309.2L1914.8 306.3L1908.0 304.5L1901.3 302.4L1895.2 298.6L1887.9 298.0L1881.4 295.3L1875.1 292.0L1868.8 288.6L1861.4 288.3L1854.9 285.7L1848.2 283.4L1841.4 281.7L1834.9 278.8L1828.8 274.9L1821.4 274.6L1815.2 271.3L1808.3 269.5L1802.0 266.2L1795.6 263.1L1788.2 263.0L1782.0 259.3L1775.0 258.0L1768.9 254.0L1762.4 251.6L1755.2 250.7L1748.6 248.3L1742.0 245.7L1735.4 243.2L1729.5 239.0L1722.8 236.6L1716.1 234.5L1709.0 233.5L1702.4 230.9L1695.5 229.4L1689.2 226.2L1683.1 222.1L1675.4 222.7L1669.2 219.3L1662.3 217.5L1656.5 213.0L1649.2 212.4L1642.8 209.4L1635.6 208.5L1629.5 204.6M2764.8 162.1L2757.8 161.3L2750.8 161.8L2743.8 160.7L2736.7 160.9L2729.7 160.7L2722.7 162.3L2715.7 162.2L2708.7 160.9L2701.7 162.8L2694.7 159.5L2687.7 160.1L2680.6 160.8L2673.6 161.2L2666.6 162.1L2659.6 160.3L2652.6 159.4L2645.6 161.7L2638.6 161.6L2631.6 159.4L2624.6 160.1L2617.6 158.8L2610.5 160.1L2603.5 157.9L2596.5 158.2L2589.5 160.1L2582.5 159.2L2575.5 158.9L2568.5 159.3L2561.5 157.9L2554.5 158.2L2547.4 157.7L2540.4 159.6L2533.4 158.6L2526.4 158.3L2519.4 158.1L2512.3 160.0L2505.4 157.1L2498.3 158.3L2491.3 159.2L2484.3 156.6L2477.3 157.6L2470.3 156.8L2463.3 156.7L2456.3 157.0L2449.3 155.8L2442.2 158.8L2435.2 157.7L2428.2 158.2L2421.2 156.4L2414.2 157.8L2407.2 158.4L2400.2 157.9L2393.2 157.7L2386.2 156.2L2379.2 156.4L2372.1 156.3L2365.1 157.8L2358.1 155.9L2351.1 156.7L2344.1 157.2L2337.1 157.2L2330.1 156.8L2323.1 155.8L2316.0 156.5L2309.0 155.3L2302.0 156.3L2295.0 154.2L2288.0 153.5L2281.0 155.4L2274.0 156.2L2267.0 152.9L2259.9 156.0L2253.0 153.8L2246.0 153.3L2238.9 154.2L2231.9 152.6L2224.9 155.2L2217.9 153.0L2210.9 152.3L2203.9 152.2L2196.9 152.3L2189.9 153.6L2182.8 153.3L2175.9 152.0L2168.8 153.5L2161.8 153.9L2154.8 154.6L2147.8 153.9L2140.8 154.0L2133.8 151.0L2126.7 153.2L2119.7 152.9L2112.8 150.5L2105.7 151.5L2098.7 152.3L2091.7 153.4L2084.7 152.3L2077.7 152.5L2070.7 150.0L2063.7 151.8L2056.7 149.7L2049.6 152.1L2042.6 152.8L2035.6 149.7L2028.6 152.5L2021.6 149.8L2014.6 150.4L2007.6 151.5L2000.6 149.4L1993.5 150.7L1986.6 148.6L1979.5 150.0L1972.5 148.5L1965.5 148.5L1958.5 150.4L1951.5 149.1L1944.5 148.9L1937.5 149.1L1930.4 151.2L1923.4 148.7L1916.4 148.4L1909.4 150.3L1902.4 150.5L1895.4 150.5L1888.4 148.7L1881.3 150.2L1874.4 147.4L1867.3 148.9L1860.4 146.7L1853.3 147.5L1846.3 148.5L1839.3 149.3L1832.3 148.3L1825.3 147.5L1818.3 146.5L1811.3 146.3L1804.2 148.2L1797.2 149.2L1790.2 146.8L1783.2 146.6L1776.2 146.7L1769.2 146.0L1762.2 145.9L1755.2 146.9" fill="none" stroke="#d6c7da" stroke-width="1.2" clip-path="url(#lclip)"/>
<defs><clipPath id="wclip"><path d="M1248.7 465.3L1256.7 465.7L1286.0 463.6L1301.5 453.5L1323.6 448.7L1346.0 447.4L1358.9 454.1L1365.0 463.4L1370.9 461.6L1380.3 466.8L1389.9 470.0L1398.1 471.3L1419.5 469.5L1432.4 469.1L1447.0 461.0L1450.2 455.8L1450.9 444.8L1440.1 426.3L1419.7 413.0L1409.1 401.9L1388.6 387.9L1380.9 384.0L1370.1 374.7L1367.2 373.6L1350.0 380.9L1343.1 384.9L1330.2 392.9L1319.8 390.6L1317.4 377.2L1303.4 373.6L1311.4 360.9L1321.9 355.1L1309.8 355.8L1287.3 345.8L1295.3 335.9L1274.9 347.4L1269.6 354.0L1258.3 377.0L1241.5 400.3L1240.7 408.6L1229.4 421.9L1222.5 437.2L1226.2 439.0L1231.0 450.9L1247.1 465.3ZM1369.3 372.4L1357.3 370.8L1345.2 370.1L1340.4 354.7L1371.7 343.7L1384.6 332.9L1406.3 330.0L1412.8 330.5L1396.2 342.3L1394.6 357.4L1382.2 374.7L1370.1 374.7ZM1210.1 482.3L1223.0 470.2L1246.8 469.5L1261.6 474.4L1249.5 481.6L1230.5 483.3L1228.6 480.2L1209.8 483.3ZM1201.7 489.7L1209.8 482.3L1208.8 483.3L1202.1 490.7ZM1246.8 469.5L1248.7 464.9L1247.9 465.3L1247.9 469.5ZM1567.2 546.3L1576.2 542.9L1566.7 523.3L1566.4 516.7L1575.2 505.3L1584.9 482.3L1579.2 478.0L1572.0 469.5L1568.8 463.1L1557.5 446.8L1544.6 426.7L1544.6 417.4L1541.4 410.8L1539.8 395.1L1536.6 381.5L1543.0 374.7L1547.9 367.8L1560.7 365.5L1572.0 363.2L1600.9 360.9L1600.9 552.4ZM978.8 31.0L983.3 25.8L992.3 27.3L1002.9 21.2L1004.2 8.7L1007.4 2.1L997.8 -0.1L991.3 4.0L984.9 10.3L980.9 18.1ZM1008.4 49.3L1014.7 45.7L1017.9 33.5L1022.6 26.1L1020.3 15.6L1015.5 21.2L1010.3 33.5ZM1219.7 11.8L1214.9 16.5L1223.0 30.4L1224.6 47.2L1232.6 39.6L1226.2 21.2L1231.0 13.4ZM862.7 186.2L862.7 200.8L869.1 203.4L875.5 195.5L870.7 188.8ZM1131.0 526.0L1131.8 524.1L1141.3 523.3L1144.6 524.3L1150.6 528.0L1153.0 532.1L1149.5 533.5L1144.6 530.7L1135.8 527.0Z"/></clipPath></defs>
<path d="M1248.7 465.3L1256.7 465.7L1286.0 463.6L1301.5 453.5L1323.6 448.7L1346.0 447.4L1358.9 454.1L1365.0 463.4L1370.9 461.6L1380.3 466.8L1389.9 470.0L1398.1 471.3L1419.5 469.5L1432.4 469.1L1447.0 461.0L1450.2 455.8L1450.9 444.8L1440.1 426.3L1419.7 413.0L1409.1 401.9L1388.6 387.9L1380.9 384.0L1370.1 374.7L1367.2 373.6L1350.0 380.9L1343.1 384.9L1330.2 392.9L1319.8 390.6L1317.4 377.2L1303.4 373.6L1311.4 360.9L1321.9 355.1L1309.8 355.8L1287.3 345.8L1295.3 335.9L1274.9 347.4L1269.6 354.0L1258.3 377.0L1241.5 400.3L1240.7 408.6L1229.4 421.9L1222.5 437.2L1226.2 439.0L1231.0 450.9L1247.1 465.3ZM1369.3 372.4L1357.3 370.8L1345.2 370.1L1340.4 354.7L1371.7 343.7L1384.6 332.9L1406.3 330.0L1412.8 330.5L1396.2 342.3L1394.6 357.4L1382.2 374.7L1370.1 374.7ZM1210.1 482.3L1223.0 470.2L1246.8 469.5L1261.6 474.4L1249.5 481.6L1230.5 483.3L1228.6 480.2L1209.8 483.3ZM1201.7 489.7L1209.8 482.3L1208.8 483.3L1202.1 490.7ZM1246.8 469.5L1248.7 464.9L1247.9 465.3L1247.9 469.5ZM1567.2 546.3L1576.2 542.9L1566.7 523.3L1566.4 516.7L1575.2 505.3L1584.9 482.3L1579.2 478.0L1572.0 469.5L1568.8 463.1L1557.5 446.8L1544.6 426.7L1544.6 417.4L1541.4 410.8L1539.8 395.1L1536.6 381.5L1543.0 374.7L1547.9 367.8L1560.7 365.5L1572.0 363.2L1600.9 360.9L1600.9 552.4ZM978.8 31.0L983.3 25.8L992.3 27.3L1002.9 21.2L1004.2 8.7L1007.4 2.1L997.8 -0.1L991.3 4.0L984.9 10.3L980.9 18.1ZM1008.4 49.3L1014.7 45.7L1017.9 33.5L1022.6 26.1L1020.3 15.6L1015.5 21.2L1010.3 33.5ZM1219.7 11.8L1214.9 16.5L1223.0 30.4L1224.6 47.2L1232.6 39.6L1226.2 21.2L1231.0 13.4ZM862.7 186.2L862.7 200.8L869.1 203.4L875.5 195.5L870.7 188.8ZM1131.0 526.0L1131.8 524.1L1141.3 523.3L1144.6 524.3L1150.6 528.0L1153.0 532.1L1149.5 533.5L1144.6 530.7L1135.8 527.0Z" fill="#b5dae4"/>
<g clip-path="url(#wclip)"><path d="M1248.7 465.3L1256.7 465.7L1286.0 463.6L1301.5 453.5L1323.6 448.7L1346.0 447.4L1358.9 454.1L1365.0 463.4L1370.9 461.6L1380.3 466.8L1389.9 470.0L1398.1 471.3L1419.5 469.5L1432.4 469.1L1447.0 461.0L1450.2 455.8L1450.9 444.8L1440.1 426.3L1419.7 413.0L1409.1 401.9L1388.6 387.9L1380.9 384.0L1370.1 374.7L1367.2 373.6L1350.0 380.9L1343.1 384.9L1330.2 392.9L1319.8 390.6L1317.4 377.2L1303.4 373.6L1311.4 360.9L1321.9 355.1L1309.8 355.8L1287.3 345.8L1295.3 335.9L1274.9 347.4L1269.6 354.0L1258.3 377.0L1241.5 400.3L1240.7 408.6L1229.4 421.9L1222.5 437.2L1226.2 439.0L1231.0 450.9L1247.1 465.3ZM1369.3 372.4L1357.3 370.8L1345.2 370.1L1340.4 354.7L1371.7 343.7L1384.6 332.9L1406.3 330.0L1412.8 330.5L1396.2 342.3L1394.6 357.4L1382.2 374.7L1370.1 374.7ZM1210.1 482.3L1223.0 470.2L1246.8 469.5L1261.6 474.4L1249.5 481.6L1230.5 483.3L1228.6 480.2L1209.8 483.3ZM1201.7 489.7L1209.8 482.3L1208.8 483.3L1202.1 490.7ZM1246.8 469.5L1248.7 464.9L1247.9 465.3L1247.9 469.5ZM1567.2 546.3L1576.2 542.9L1566.7 523.3L1566.4 516.7L1575.2 505.3L1584.9 482.3L1579.2 478.0L1572.0 469.5L1568.8 463.1L1557.5 446.8L1544.6 426.7L1544.6 417.4L1541.4 410.8L1539.8 395.1L1536.6 381.5L1543.0 374.7L1547.9 367.8L1560.7 365.5L1572.0 363.2L1600.9 360.9L1600.9 552.4ZM978.8 31.0L983.3 25.8L992.3 27.3L1002.9 21.2L1004.2 8.7L1007.4 2.1L997.8 -0.1L991.3 4.0L984.9 10.3L980.9 18.1ZM1008.4 49.3L1014.7 45.7L1017.9 33.5L1022.6 26.1L1020.3 15.6L1015.5 21.2L1010.3 33.5ZM1219.7 11.8L1214.9 16.5L1223.0 30.4L1224.6 47.2L1232.6 39.6L1226.2 21.2L1231.0 13.4ZM862.7 186.2L862.7 200.8L869.1 203.4L875.5 195.5L870.7 188.8ZM1131.0 526.0L1131.8 524.1L1141.3 523.3L1144.6 524.3L1150.6 528.0L1153.0 532.1L1149.5 533.5L1144.6 530.7L1135.8 527.0Z" fill="none" stroke="#b1a0c4" stroke-width="15" stroke-linejoin="round"/>
<path d="M1248.7 465.3L1256.7 465.7L1286.0 463.6L1301.5 453.5L1323.6 448.7L1346.0 447.4L1358.9 454.1L1365.0 463.4L1370.9 461.6L1380.3 466.8L1389.9 470.0L1398.1 471.3L1419.5 469.5L1432.4 469.1L1447.0 461.0L1450.2 455.8L1450.9 444.8L1440.1 426.3L1419.7 413.0L1409.1 401.9L1388.6 387.9L1380.9 384.0L1370.1 374.7L1367.2 373.6L1350.0 380.9L1343.1 384.9L1330.2 392.9L1319.8 390.6L1317.4 377.2L1303.4 373.6L1311.4 360.9L1321.9 355.1L1309.8 355.8L1287.3 345.8L1295.3 335.9L1274.9 347.4L1269.6 354.0L1258.3 377.0L1241.5 400.3L1240.7 408.6L1229.4 421.9L1222.5 437.2L1226.2 439.0L1231.0 450.9L1247.1 465.3ZM1369.3 372.4L1357.3 370.8L1345.2 370.1L1340.4 354.7L1371.7 343.7L1384.6 332.9L1406.3 330.0L1412.8 330.5L1396.2 342.3L1394.6 357.4L1382.2 374.7L1370.1 374.7ZM1210.1 482.3L1223.0 470.2L1246.8 469.5L1261.6 474.4L1249.5 481.6L1230.5 483.3L1228.6 480.2L1209.8 483.3ZM1201.7 489.7L1209.8 482.3L1208.8 483.3L1202.1 490.7ZM1246.8 469.5L1248.7 464.9L1247.9 465.3L1247.9 469.5ZM1567.2 546.3L1576.2 542.9L1566.7 523.3L1566.4 516.7L1575.2 505.3L1584.9 482.3L1579.2 478.0L1572.0 469.5L1568.8 463.1L1557.5 446.8L1544.6 426.7L1544.6 417.4L1541.4 410.8L1539.8 395.1L1536.6 381.5L1543.0 374.7L1547.9 367.8L1560.7 365.5L1572.0 363.2L1600.9 360.9L1600.9 552.4ZM978.8 31.0L983.3 25.8L992.3 27.3L1002.9 21.2L1004.2 8.7L1007.4 2.1L997.8 -0.1L991.3 4.0L984.9 10.3L980.9 18.1ZM1008.4 49.3L1014.7 45.7L1017.9 33.5L1022.6 26.1L1020.3 15.6L1015.5 21.2L1010.3 33.5ZM1219.7 11.8L1214.9 16.5L1223.0 30.4L1224.6 47.2L1232.6 39.6L1226.2 21.2L1231.0 13.4ZM862.7 186.2L862.7 200.8L869.1 203.4L875.5 195.5L870.7 188.8ZM1131.0 526.0L1131.8 524.1L1141.3 523.3L1144.6 524.3L1150.6 528.0L1153.0 532.1L1149.5 533.5L1144.6 530.7L1135.8 527.0Z" fill="#aad3df" stroke="#b5dae4" stroke-width="11" stroke-linejoin="round"/></g>
<path d="M1270.4 237.1L1272.8 248.5L1275.2 247.3L1272.8 238.4ZM1285.7 264.9L1298.6 279.8L1313.0 285.9L1314.6 282.2L1301.8 276.1L1288.1 263.6ZM1329.1 321.0L1321.1 332.9L1325.9 337.6L1335.6 325.8ZM1390.2 13.4L1393.5 36.5L1406.3 39.6L1407.9 24.3L1401.5 11.8ZM1280.9 30.4L1281.7 38.1L1288.9 36.5L1288.1 30.4ZM1514.1 242.2L1507.7 272.3L1498.0 289.6L1502.8 287.1L1514.1 267.4L1518.9 247.3ZM1459.4 299.3L1469.0 318.6L1477.1 321.0L1477.1 316.2L1469.0 304.2L1462.6 296.9ZM1461.0 512.6L1467.4 523.9L1477.1 526.0L1477.9 518.8L1470.7 512.6ZM1509.3 530.1L1510.9 546.3L1517.3 544.3L1515.7 530.1ZM1504.4 478.0L1507.7 485.4L1512.5 484.4L1509.3 479.1ZM1315.4 509.5L1316.2 519.8L1320.3 518.8L1319.5 511.5ZM1058.9 335.2L1066.9 341.1L1072.6 339.9L1065.3 335.2ZM880.4 347.0L886.8 352.8L891.6 349.3L886.8 347.0Z" fill="#b8dce6" stroke="#b8dce6" stroke-width="1.5" stroke-linejoin="round"/>
<path d="M752.0 418.1L758.1 419.6L769.4 426.3L780.6 430.7L791.9 432.8L804.8 437.2L816.0 439.4L831.6 438.7M638.0 450.9L648.8 445.9L664.8 449.2L676.1 449.2L680.9 456.7L669.7 469.5L670.5 484.4L660.0 498.0L668.1 511.5L663.2 528.0L660.0 541.3L661.6 548.3M822.1 234.5L830.5 242.2L833.7 244.7L848.2 254.9L857.9 263.6L867.5 267.4L873.9 273.6L886.0 276.1M834.8 228.1L851.4 230.7L861.1 225.5L870.7 230.7L872.3 243.5M877.2 243.5L882.0 254.9L880.4 267.4L886.0 276.1M896.5 177.3L894.0 195.5L893.2 204.7L880.4 215.2L880.4 224.2L875.5 238.4L877.2 243.5M886.0 276.1L902.9 284.7L912.5 288.4L905.3 304.2L902.9 321.0M902.9 321.0L893.2 324.6L885.2 335.2L878.8 347.0L878.0 354.0L893.2 360.9L894.8 370.1L888.4 379.3L891.6 395.1L901.3 409.0M902.9 321.0L919.0 318.6L933.4 322.2L935.1 334.0L948.7 338.8M893.2 360.9L907.7 358.6L915.8 349.3L925.4 362.1L930.2 351.6L943.1 347.0L948.7 338.8M919.8 134.3L932.6 135.7M1009.8 160.0L1012.3 178.1L1008.2 190.2L1017.1 208.6L1021.1 224.2L1020.3 237.1L1010.7 240.9L991.3 247.3L975.3 254.9L981.7 263.6L984.9 279.8L1002.6 293.3L989.7 305.4L989.7 318.6L976.9 322.2L956.0 323.4L933.4 322.2M948.7 338.8L960.8 336.4L976.9 334.0L986.5 343.5L1001.0 345.8L1013.9 349.3L1033.2 343.5L1039.6 338.3L1046.0 323.4L1054.9 318.6L1056.5 311.4L1053.3 296.9L1046.0 293.3L1021.9 292.0L1017.1 296.9L1002.6 293.3M1020.3 237.1L1039.6 244.7L1050.9 257.4L1065.3 252.3L1079.8 263.6L1083.8 274.8M1083.8 274.8L1070.2 287.1L1053.3 296.9M1083.8 274.8L1102.3 282.2L1118.4 277.3L1143.3 284.7L1145.8 269.9L1160.2 252.3L1168.3 239.6L1160.2 221.7L1153.8 203.4L1165.1 184.8L1158.6 160.5L1147.4 148.2L1096.7 146.8M1147.4 148.2L1147.4 132.9L1134.5 128.7L1122.4 121.7M1119.2 100.3L1134.5 90.1L1166.7 95.9L1190.8 90.1L1208.5 110.3M1158.6 160.5L1190.8 149.6L1195.6 135.7L1208.5 118.8L1208.5 110.3M1172.5 46.6L1186.0 54.7L1206.9 57.7L1221.4 56.2L1231.0 75.5L1233.4 97.4L1208.5 110.3M1221.4 56.2L1223.8 47.2L1224.6 42.6L1231.0 11.8L1231.8 -2.3M1233.4 97.4L1277.6 113.2L1279.3 132.9L1284.1 149.6L1305.0 168.7L1298.6 182.2L1292.1 203.4M1160.2 221.7L1176.3 223.0L1198.8 213.9L1231.0 224.2L1255.1 221.7L1272.8 226.8L1292.1 208.6L1292.1 203.4M1292.1 203.4L1324.3 203.4L1350.0 232.0L1369.3 252.3L1395.1 262.4L1422.4 264.9L1425.6 282.2L1420.8 311.4L1395.9 329.3M1208.5 300.6L1226.2 306.6L1243.9 299.3L1250.3 321.0L1255.1 328.1L1263.2 347.0L1258.3 351.6L1234.2 370.1M1208.5 300.6L1223.0 323.4L1234.2 347.0L1234.2 371.3M1149.0 313.8L1174.7 312.6L1195.6 311.4L1208.5 300.6M1236.6 371.3L1257.5 377.0M1143.3 284.7L1136.9 301.8L1148.2 309.0L1149.0 313.8M1056.5 311.4L1070.2 317.4L1083.8 316.2L1095.9 309.0L1110.4 304.2L1129.7 298.1L1136.9 301.8M1148.2 309.0L1135.3 323.4L1123.2 344.6L1106.4 355.1L1086.2 356.3L1083.8 360.9L1063.7 364.4L1052.5 352.8L1042.8 345.8L1039.6 338.3M1001.0 345.8L999.4 354.0L1002.1 366.7M998.6 370.8L1013.9 370.1L1026.7 364.4L1032.4 354.0L1042.8 345.8M1034.8 377.0L1038.0 379.3L1052.5 375.8L1068.6 380.4L1086.2 383.8L1095.9 401.9L1089.5 415.2L1077.4 433.9M1034.8 377.0L1041.2 390.6L1054.1 406.3L1065.3 421.9L1063.7 427.4L1077.4 433.9L1078.7 438.3M1083.8 360.9L1087.9 379.3L1086.2 383.8M1077.4 433.9L1086.2 419.6L1102.3 426.3L1099.1 436.1L1091.9 449.8M1099.1 436.1L1112.0 443.7L1110.4 448.1L1112.0 467.4L1118.4 472.7L1112.0 488.6L1102.3 498.0M1112.0 428.5L1128.1 437.2L1140.9 441.6M1140.9 441.6L1147.4 463.1L1126.5 467.4L1112.0 467.4M1110.4 448.1L1126.5 441.6L1140.9 441.6M1106.4 355.1L1118.4 370.1L1142.5 390.6L1145.8 399.6L1166.7 410.8L1190.8 410.8L1214.9 403.0L1240.7 409.7M1145.8 399.6L1147.4 421.9L1140.9 441.6M1147.4 463.1L1166.7 459.9L1195.6 454.6L1203.7 454.6L1199.6 475.5M1203.7 454.6L1223.0 449.2L1231.0 448.7M1448.9 458.9L1469.0 466.3L1479.5 469.5L1483.5 488.6L1501.2 497.0L1491.6 511.5L1494.8 526.0L1501.2 549.3L1462.6 546.3L1440.1 550.4L1399.9 558.4L1375.8 556.4L1369.3 558.4L1359.7 572.4M1462.6 546.3L1444.9 566.4L1440.1 601.9M1501.2 549.3L1509.3 566.4L1520.5 582.3L1514.1 601.9M1424.0 417.4L1448.1 414.1L1485.1 432.8L1515.7 436.1L1531.8 452.4L1562.3 450.2M1531.8 452.4L1504.4 466.3L1480.3 465.3L1479.5 469.5M1504.4 465.3L1518.9 486.5L1528.6 503.2L1528.6 513.6L1501.2 497.0M1528.6 513.6L1551.1 499.1L1552.7 523.9L1566.7 523.3M1568.8 351.6L1552.7 323.4L1533.4 299.3L1539.8 274.8L1560.7 249.8L1576.8 237.1M959.2 8.7L970.4 -0.7L978.5 -19.8M750.7 590.2L753.3 601.9L754.9 621.3M919.3 553.4L914.1 582.3L912.5 601.9L906.1 621.3M664.0 124.5L656.8 141.3L660.0 149.6L676.1 155.1L678.5 157.8M747.7 107.4L740.4 116.0L732.4 130.1M731.6 178.1L730.8 198.1L738.0 221.7M1359.7 572.4L1358.1 574.4" fill="none" stroke="#b9a1c4" stroke-width="2.4" stroke-linejoin="round"/>
<path d="M998 0 L1027.6 95 L1057.5 195 L1091 315 L1131 475 L1158 600 L1600 620 L1600 -20 L995 -20Z" fill="#000" fill-opacity="0.085"/>
<circle cx="1071.6" cy="2.2" r="4.2" fill="#fff" fill-opacity="0.6" stroke="#555" stroke-width="1.5"/><circle cx="1071.6" cy="2.2" r="1.7" fill="#555"/>
<circle cx="995.7" cy="197.6" r="4.2" fill="#fff" fill-opacity="0.6" stroke="#555" stroke-width="1.5"/><circle cx="995.7" cy="197.6" r="1.7" fill="#555"/>
<circle cx="779" cy="224" r="4.2" fill="#fff" fill-opacity="0.6" stroke="#555" stroke-width="1.5"/><circle cx="779" cy="224" r="1.7" fill="#555"/>
<circle cx="818.5" cy="290.4" r="4.2" fill="#fff" fill-opacity="0.6" stroke="#555" stroke-width="1.5"/><circle cx="818.5" cy="290.4" r="1.7" fill="#555"/>
<circle cx="829.6" cy="557" r="4.2" fill="#fff" fill-opacity="0.6" stroke="#555" stroke-width="1.5"/><circle cx="829.6" cy="557" r="1.7" fill="#555"/>
<circle cx="1385.6" cy="109" r="4.2" fill="#fff" fill-opacity="0.6" stroke="#555" stroke-width="1.5"/><circle cx="1385.6" cy="109" r="1.7" fill="#555"/>
<circle cx="1271" cy="250.7" r="4.2" fill="#fff" fill-opacity="0.6" stroke="#555" stroke-width="1.5"/><circle cx="1271" cy="250.7" r="1.7" fill="#555"/>
<circle cx="1037.8" cy="362.5" r="4.2" fill="#fff" fill-opacity="0.6" stroke="#555" stroke-width="1.5"/><circle cx="1037.8" cy="362.5" r="1.7" fill="#555"/>
<circle cx="1200.5" cy="393" r="4.2" fill="#fff" fill-opacity="0.6" stroke="#555" stroke-width="1.5"/><circle cx="1200.5" cy="393" r="1.7" fill="#555"/>
<circle cx="1244.5" cy="334" r="4.2" fill="#fff" fill-opacity="0.6" stroke="#555" stroke-width="1.5"/><circle cx="1244.5" cy="334" r="1.7" fill="#555"/>
<circle cx="1496" cy="486.8" r="4.2" fill="#fff" fill-opacity="0.6" stroke="#555" stroke-width="1.5"/><circle cx="1496" cy="486.8" r="1.7" fill="#555"/>
<circle cx="944.3" cy="556" r="4.2" fill="#fff" fill-opacity="0.6" stroke="#555" stroke-width="1.5"/><circle cx="944.3" cy="556" r="1.7" fill="#555"/>
<circle cx="941.3" cy="170.2" r="2.6" fill="#fff" stroke="#888" stroke-width="1.2"/>
<circle cx="816" cy="461.8" r="2.6" fill="#fff" stroke="#888" stroke-width="1.2"/>
<circle cx="1247" cy="470.4" r="2.6" fill="#fff" stroke="#888" stroke-width="1.2"/>
<circle cx="1217" cy="523.5" r="2.6" fill="#fff" stroke="#888" stroke-width="1.2"/>
<circle cx="1274.4" cy="555" r="2.6" fill="#fff" stroke="#888" stroke-width="1.2"/>
<circle cx="1525.5" cy="530.8" r="2.6" fill="#fff" stroke="#888" stroke-width="1.2"/>
<circle cx="1475.6" cy="566" r="2.6" fill="#fff" stroke="#888" stroke-width="1.2"/>
<g font-family="Liberation Sans, sans-serif" font-size="15" stroke-linejoin="round">
<text x="898.4" y="101" fill="#fff" fill-opacity="0.7" stroke="#fff" stroke-opacity="0.7" stroke-width="3.2" letter-spacing="1.2">Danmark</text>
<text x="654" y="125.69999999999999" fill="#fff" fill-opacity="0.7" stroke="#fff" stroke-opacity="0.7" stroke-width="3.2" letter-spacing="1.2">United Kingdom</text>
<text x="599.3" y="180" fill="#fff" fill-opacity="0.7" stroke="#fff" stroke-opacity="0.7" stroke-width="3.2" letter-spacing="1.2">Éire / Ireland</text>
<text x="830" y="210.3" fill="#fff" fill-opacity="0.7" stroke="#fff" stroke-opacity="0.7" stroke-width="3.2" letter-spacing="1.2">Nederland</text>
<text x="902.3" y="237.7" fill="#fff" fill-opacity="0.7" stroke="#fff" stroke-opacity="0.7" stroke-width="3.2" letter-spacing="1.2">Deutschland</text>
<text x="786.6" y="344.2" fill="#fff" fill-opacity="0.7" stroke="#fff" stroke-opacity="0.7" stroke-width="3.2" letter-spacing="1.2">France</text>
<text x="701" y="497.3" fill="#fff" fill-opacity="0.7" stroke="#fff" stroke-opacity="0.7" stroke-width="3.2" letter-spacing="1.2">España</text>
<text x="609.8" y="506.7" fill="#fff" fill-opacity="0.7" stroke="#fff" stroke-opacity="0.7" stroke-width="3.2" letter-spacing="1.2">Portugal</text>
<text x="990" y="458.2" fill="#fff" fill-opacity="0.7" stroke="#fff" stroke-opacity="0.7" stroke-width="3.2" letter-spacing="1.2">Italia</text>
<text x="990" y="401.2" fill="#fff" fill-opacity="0.7" stroke="#fff" stroke-opacity="0.7" stroke-width="3.2" letter-spacing="1.2">Hrvatska</text>
<text x="1065" y="215.2" fill="#fff" fill-opacity="0.7" stroke="#fff" stroke-opacity="0.7" stroke-width="3.2" letter-spacing="1.2">Polska</text>
<text x="1145.6" y="83.2" fill="#fff" fill-opacity="0.7" stroke="#fff" stroke-opacity="0.7" stroke-width="3.2" letter-spacing="1.2">Latvija</text>
<text x="1142" y="130.5" fill="#fff" fill-opacity="0.7" stroke="#fff" stroke-opacity="0.7" stroke-width="3.2" letter-spacing="1.2">Lietuva</text>
<text x="1157" y="26.2" fill="#fff" fill-opacity="0.7" stroke="#fff" stroke-opacity="0.7" stroke-width="3.2" letter-spacing="1.2">Eesti</text>
<text x="1194.5" y="171.2" fill="#fff" fill-opacity="0.7" stroke="#fff" stroke-opacity="0.7" stroke-width="3.2" letter-spacing="1.2">Беларусь</text>
<text x="1297" y="311" fill="#fff" fill-opacity="0.7" stroke="#fff" stroke-opacity="0.7" stroke-width="3.2" letter-spacing="1.2">Україна</text>
<text x="1139" y="366" fill="#fff" fill-opacity="0.7" stroke="#fff" stroke-opacity="0.7" stroke-width="3.2" letter-spacing="1.2">România</text>
<text x="1092" y="407.5" fill="#fff" fill-opacity="0.7" stroke="#fff" stroke-opacity="0.7" stroke-width="3.2" letter-spacing="1.2">Србија</text>
<text x="1151.7" y="438" fill="#fff" fill-opacity="0.7" stroke="#fff" stroke-opacity="0.7" stroke-width="3.2" letter-spacing="1.2">България</text>
<text x="1113.5" y="520" fill="#fff" fill-opacity="0.7" stroke="#fff" stroke-opacity="0.7" stroke-width="3.2" letter-spacing="1.2">Ελλάς</text>
<text x="1323.8" y="516" fill="#fff" fill-opacity="0.7" stroke="#fff" stroke-opacity="0.7" stroke-width="3.2" letter-spacing="1.2">Türkiye</text>
<text x="1058.6" y="300" fill="#fff" fill-opacity="0.7" stroke="#fff" stroke-opacity="0.7" stroke-width="3.2" letter-spacing="1.2">Slovensko</text>
<text x="1008" y="274" fill="#fff" fill-opacity="0.7" stroke="#fff" stroke-opacity="0.7" stroke-width="3.2" letter-spacing="1.2">Česko</text>
<text x="1033.4" y="338" fill="#fff" fill-opacity="0.7" stroke="#fff" stroke-opacity="0.7" stroke-width="3.2" letter-spacing="1.2">Magyarország</text>
<text x="1518" y="492.5" fill="#fff" fill-opacity="0.7" stroke="#fff" stroke-opacity="0.7" stroke-width="3.2" letter-spacing="1.2">Azərbaycan</text>
<text x="1034" y="21.5" fill="#fff" fill-opacity="0.7" stroke="#fff" stroke-opacity="0.7" stroke-width="3.2" letter-spacing="0.8">Stockholm</text>
<text x="908" y="162.8" fill="#fff" fill-opacity="0.7" stroke="#fff" stroke-opacity="0.7" stroke-width="3.2" letter-spacing="0.8">Hamburg</text>
<text x="976.5" y="189.2" fill="#fff" fill-opacity="0.7" stroke="#fff" stroke-opacity="0.7" stroke-width="3.2" letter-spacing="0.8">Berlin</text>
<text x="751.8" y="215.3" fill="#fff" fill-opacity="0.7" stroke="#fff" stroke-opacity="0.7" stroke-width="3.2" letter-spacing="0.8">London</text>
<text x="802" y="281.8" fill="#fff" fill-opacity="0.7" stroke="#fff" stroke-opacity="0.7" stroke-width="3.2" letter-spacing="0.8">Paris</text>
<text x="781" y="454.8" fill="#fff" fill-opacity="0.7" stroke="#fff" stroke-opacity="0.7" stroke-width="3.2" letter-spacing="0.8">Barcelona</text>
<text x="651.5" y="565.8" fill="#fff" fill-opacity="0.7" stroke="#fff" stroke-opacity="0.7" stroke-width="3.2" letter-spacing="0.8">Rabat</text>
<text x="811.7" y="576.8" fill="#fff" fill-opacity="0.7" stroke="#fff" stroke-opacity="0.7" stroke-width="3.2" letter-spacing="0.8">Alger</text>
<text x="1359" y="127.30000000000001" fill="#fff" fill-opacity="0.7" stroke="#fff" stroke-opacity="0.7" stroke-width="3.2" letter-spacing="0.8">Москва</text>
<text x="1256" y="269.8" fill="#fff" fill-opacity="0.7" stroke="#fff" stroke-opacity="0.7" stroke-width="3.2" letter-spacing="0.8">Київ</text>
<text x="1048" y="368.8" fill="#fff" fill-opacity="0.7" stroke="#fff" stroke-opacity="0.7" stroke-width="3.2" letter-spacing="0.8">Zagreb</text>
<text x="1168" y="413.8" fill="#fff" fill-opacity="0.7" stroke="#fff" stroke-opacity="0.7" stroke-width="3.2" letter-spacing="0.8">Bucureşti</text>
<text x="1218" y="462.5" fill="#fff" fill-opacity="0.7" stroke="#fff" stroke-opacity="0.7" stroke-width="3.2" letter-spacing="0.8">İstanbul</text>
<text x="1199" y="518" fill="#fff" fill-opacity="0.7" stroke="#fff" stroke-opacity="0.7" stroke-width="3.2" letter-spacing="0.8">İzmir</text>
<text x="1248" y="548.8" fill="#fff" fill-opacity="0.7" stroke="#fff" stroke-opacity="0.7" stroke-width="3.2" letter-spacing="0.8">Antalya</text>
<text x="1214.6" y="326.8" fill="#fff" fill-opacity="0.7" stroke="#fff" stroke-opacity="0.7" stroke-width="3.2" letter-spacing="0.8">Chișinău</text>
<text x="1425" y="449" fill="#fff" fill-opacity="0.7" stroke="#fff" stroke-opacity="0.7" stroke-width="3.2" textLength="112" lengthAdjust="spacingAndGlyphs">bugsmmzgcm</text>
<text x="1436" y="492.5" fill="#fff" fill-opacity="0.7" stroke="#fff" stroke-opacity="0.7" stroke-width="3.2" textLength="52" lengthAdjust="spacingAndGlyphs">Gpluwu</text>
<text x="927" y="549.5" fill="#fff" fill-opacity="0.7" stroke="#fff" stroke-opacity="0.7" stroke-width="3.2" textLength="34" lengthAdjust="spacingAndGlyphs">ǔwuǔ</text>
<text x="1514" y="525" fill="#fff" fill-opacity="0.7" stroke="#fff" stroke-opacity="0.7" stroke-width="3.2" textLength="24" lengthAdjust="spacingAndGlyphs">ɛɹɹyi</text>
<text x="1450" y="586" fill="#fff" fill-opacity="0.7" stroke="#fff" stroke-opacity="0.7" stroke-width="3.2" textLength="49" lengthAdjust="spacingAndGlyphs">lьownll</text>
<text x="651.5" y="583.5" fill="#fff" fill-opacity="0.7" stroke="#fff" stroke-opacity="0.7" stroke-width="3.2" textLength="38" lengthAdjust="spacingAndGlyphs">OΘoE</text>
<text x="655" y="601" fill="#fff" fill-opacity="0.7" stroke="#fff" stroke-opacity="0.7" stroke-width="3.2" textLength="32" lengthAdjust="spacingAndGlyphs">lbulJl</text>
<text x="803" y="595.5" fill="#fff" fill-opacity="0.7" stroke="#fff" stroke-opacity="0.7" stroke-width="3.2" textLength="55" lengthAdjust="spacingAndGlyphs">ΛЖoSΞO</text>
<text x="1380" y="601" fill="#fff" fill-opacity="0.7" stroke="#fff" stroke-opacity="0.7" stroke-width="3.2" textLength="41" lengthAdjust="spacingAndGlyphs">luuwu</text>
<text x="706" y="148.5" fill="#fff" fill-opacity="0.7" stroke="#fff" stroke-opacity="0.7" stroke-width="3.2" font-size="14" font-style="italic" letter-spacing="0.4">Great Britain</text>
<text x="898.4" y="101" fill="#8f6b95" stroke="#8f6b95" stroke-width="0.25" letter-spacing="1.2">Danmark</text>
<text x="654" y="125.69999999999999" fill="#8f6b95" stroke="#8f6b95" stroke-width="0.25" letter-spacing="1.2">United Kingdom</text>
<text x="599.3" y="180" fill="#8f6b95" stroke="#8f6b95" stroke-width="0.25" letter-spacing="1.2">Éire / Ireland</text>
<text x="830" y="210.3" fill="#8f6b95" stroke="#8f6b95" stroke-width="0.25" letter-spacing="1.2">Nederland</text>
<text x="902.3" y="237.7" fill="#8f6b95" stroke="#8f6b95" stroke-width="0.25" letter-spacing="1.2">Deutschland</text>
<text x="786.6" y="344.2" fill="#8f6b95" stroke="#8f6b95" stroke-width="0.25" letter-spacing="1.2">France</text>
<text x="701" y="497.3" fill="#8f6b95" stroke="#8f6b95" stroke-width="0.25" letter-spacing="1.2">España</text>
<text x="609.8" y="506.7" fill="#8f6b95" stroke="#8f6b95" stroke-width="0.25" letter-spacing="1.2">Portugal</text>
<text x="990" y="458.2" fill="#8f6b95" stroke="#8f6b95" stroke-width="0.25" letter-spacing="1.2">Italia</text>
<text x="990" y="401.2" fill="#8f6b95" stroke="#8f6b95" stroke-width="0.25" letter-spacing="1.2">Hrvatska</text>
<text x="1065" y="215.2" fill="#8f6b95" stroke="#8f6b95" stroke-width="0.25" letter-spacing="1.2">Polska</text>
<text x="1145.6" y="83.2" fill="#8f6b95" stroke="#8f6b95" stroke-width="0.25" letter-spacing="1.2">Latvija</text>
<text x="1142" y="130.5" fill="#8f6b95" stroke="#8f6b95" stroke-width="0.25" letter-spacing="1.2">Lietuva</text>
<text x="1157" y="26.2" fill="#8f6b95" stroke="#8f6b95" stroke-width="0.25" letter-spacing="1.2">Eesti</text>
<text x="1194.5" y="171.2" fill="#8f6b95" stroke="#8f6b95" stroke-width="0.25" letter-spacing="1.2">Беларусь</text>
<text x="1297" y="311" fill="#8f6b95" stroke="#8f6b95" stroke-width="0.25" letter-spacing="1.2">Україна</text>
<text x="1139" y="366" fill="#8f6b95" stroke="#8f6b95" stroke-width="0.25" letter-spacing="1.2">România</text>
<text x="1092" y="407.5" fill="#8f6b95" stroke="#8f6b95" stroke-width="0.25" letter-spacing="1.2">Србија</text>
<text x="1151.7" y="438" fill="#8f6b95" stroke="#8f6b95" stroke-width="0.25" letter-spacing="1.2">България</text>
<text x="1113.5" y="520" fill="#8f6b95" stroke="#8f6b95" stroke-width="0.25" letter-spacing="1.2">Ελλάς</text>
<text x="1323.8" y="516" fill="#8f6b95" stroke="#8f6b95" stroke-width="0.25" letter-spacing="1.2">Türkiye</text>
<text x="1058.6" y="300" fill="#8f6b95" stroke="#8f6b95" stroke-width="0.25" letter-spacing="1.2">Slovensko</text>
<text x="1008" y="274" fill="#8f6b95" stroke="#8f6b95" stroke-width="0.25" letter-spacing="1.2">Česko</text>
<text x="1033.4" y="338" fill="#8f6b95" stroke="#8f6b95" stroke-width="0.25" letter-spacing="1.2">Magyarország</text>
<text x="1518" y="492.5" fill="#8f6b95" stroke="#8f6b95" stroke-width="0.25" letter-spacing="1.2">Azərbaycan</text>
<text x="1034" y="21.5" fill="#3d3d3d" stroke="#3d3d3d" stroke-width="0.25" letter-spacing="0.8">Stockholm</text>
<text x="908" y="162.8" fill="#3d3d3d" stroke="#3d3d3d" stroke-width="0.25" letter-spacing="0.8">Hamburg</text>
<text x="976.5" y="189.2" fill="#3d3d3d" stroke="#3d3d3d" stroke-width="0.25" letter-spacing="0.8">Berlin</text>
<text x="751.8" y="215.3" fill="#3d3d3d" stroke="#3d3d3d" stroke-width="0.25" letter-spacing="0.8">London</text>
<text x="802" y="281.8" fill="#3d3d3d" stroke="#3d3d3d" stroke-width="0.25" letter-spacing="0.8">Paris</text>
<text x="781" y="454.8" fill="#3d3d3d" stroke="#3d3d3d" stroke-width="0.25" letter-spacing="0.8">Barcelona</text>
<text x="651.5" y="565.8" fill="#3d3d3d" stroke="#3d3d3d" stroke-width="0.25" letter-spacing="0.8">Rabat</text>
<text x="811.7" y="576.8" fill="#3d3d3d" stroke="#3d3d3d" stroke-width="0.25" letter-spacing="0.8">Alger</text>
<text x="1359" y="127.30000000000001" fill="#3d3d3d" stroke="#3d3d3d" stroke-width="0.25" letter-spacing="0.8">Москва</text>
<text x="1256" y="269.8" fill="#3d3d3d" stroke="#3d3d3d" stroke-width="0.25" letter-spacing="0.8">Київ</text>
<text x="1048" y="368.8" fill="#3d3d3d" stroke="#3d3d3d" stroke-width="0.25" letter-spacing="0.8">Zagreb</text>
<text x="1168" y="413.8" fill="#3d3d3d" stroke="#3d3d3d" stroke-width="0.25" letter-spacing="0.8">Bucureşti</text>
<text x="1218" y="462.5" fill="#3d3d3d" stroke="#3d3d3d" stroke-width="0.25" letter-spacing="0.8">İstanbul</text>
<text x="1199" y="518" fill="#3d3d3d" stroke="#3d3d3d" stroke-width="0.25" letter-spacing="0.8">İzmir</text>
<text x="1248" y="548.8" fill="#3d3d3d" stroke="#3d3d3d" stroke-width="0.25" letter-spacing="0.8">Antalya</text>
<text x="1214.6" y="326.8" fill="#3d3d3d" stroke="#3d3d3d" stroke-width="0.25" letter-spacing="0.8">Chișinău</text>
<text x="1425" y="449" fill="#8f6b95" stroke="#8f6b95" stroke-width="0.25" textLength="112" lengthAdjust="spacingAndGlyphs">bugsmmzgcm</text>
<text x="1436" y="492.5" fill="#3d3d3d" stroke="#3d3d3d" stroke-width="0.25" textLength="52" lengthAdjust="spacingAndGlyphs">Gpluwu</text>
<text x="927" y="549.5" fill="#3d3d3d" stroke="#3d3d3d" stroke-width="0.25" textLength="34" lengthAdjust="spacingAndGlyphs">ǔwuǔ</text>
<text x="1514" y="525" fill="#3d3d3d" stroke="#3d3d3d" stroke-width="0.25" textLength="24" lengthAdjust="spacingAndGlyphs">ɛɹɹyi</text>
<text x="1450" y="586" fill="#3d3d3d" stroke="#3d3d3d" stroke-width="0.25" textLength="49" lengthAdjust="spacingAndGlyphs">lьownll</text>
<text x="651.5" y="583.5" fill="#3d3d3d" stroke="#3d3d3d" stroke-width="0.25" textLength="38" lengthAdjust="spacingAndGlyphs">OΘoE</text>
<text x="655" y="601" fill="#3d3d3d" stroke="#3d3d3d" stroke-width="0.25" textLength="32" lengthAdjust="spacingAndGlyphs">lbulJl</text>
<text x="803" y="595.5" fill="#3d3d3d" stroke="#3d3d3d" stroke-width="0.25" textLength="55" lengthAdjust="spacingAndGlyphs">ΛЖoSΞO</text>
<text x="1380" y="601" fill="#8f6b95" stroke="#8f6b95" stroke-width="0.25" textLength="41" lengthAdjust="spacingAndGlyphs">luuwu</text>
<text x="706" y="148.5" fill="#333" stroke="#333" stroke-width="0.25" font-size="14" font-style="italic" letter-spacing="0.4">Great Britain</text>
</g>
<path d="M728.2 99.6L795.8 194.7L797.4 198.2L888.0 345.5" stroke="#8c3fae" stroke-opacity="0.92" stroke-width="4.2" fill="none" stroke-linejoin="round" stroke-linecap="round"/>
<path d="M731.9 195.9L797.0 253.4L888.0 345.5" stroke="#8c3fae" stroke-opacity="0.92" stroke-width="4.2" fill="none" stroke-linejoin="round" stroke-linecap="round"/>
<path d="M987.8 157.6L955.4 220.5L953.0 225.2L942.5 239.3L888.0 345.5" stroke="#8c3fae" stroke-opacity="0.92" stroke-width="4.2" fill="none" stroke-linejoin="round" stroke-linecap="round"/>
<path d="M1025.7 333.8L888.0 345.5" stroke="#8c3fae" stroke-opacity="0.92" stroke-width="4.2" fill="none" stroke-linejoin="round" stroke-linecap="round"/>
<path d="M997.5 538.0L960.9 467.2L954.3 459.7L924.2 403.3L888.0 345.5" stroke="#8c3fae" stroke-opacity="0.92" stroke-width="4.2" fill="none" stroke-linejoin="round" stroke-linecap="round"/>
<circle cx="728.2" cy="99.6" r="5.2" fill="#f00"/>
<circle cx="731.9" cy="195.9" r="5.2" fill="#f00"/>
<circle cx="987.8" cy="157.6" r="5.2" fill="#f00"/>
<circle cx="1025.7" cy="333.8" r="5.2" fill="#f00"/>
<circle cx="997.5" cy="538" r="5.2" fill="#f00"/>
<circle cx="888" cy="345.5" r="5.2" fill="#00f"/>
</svg><div class="a" style="left:20px;top:450px;width:60px;height:122px;border:4px solid #8aa7b1;border-radius:8px;background:#fff;overflow:hidden"><div class="a" style="left:0;top:60px;width:60px;height:2px;background:#ccc"></div><svg class="a" style="left:0;top:0" width="60" height="122"><path d="M18.5 34H43M30.8 21.8V46.4" stroke="#000" stroke-width="4.8"/><path d="M18.5 96H43" stroke="#000" stroke-width="5.4"/></svg></div></div>
<div class="a" style="left:287px;top:626px;width:68px;height:19px;background:#aaaaaa"></div><div class="a" style="top:653.73px;font-size:22px;line-height:26px;left:21.00px;width:600px;text-align:center;">630m</div>
<div class="a" style="left:310px;top:699px;width:21px;height:21px;border:2px solid #767676;border-radius:4px;background:#fff"></div>
<div class="a" style="left:355px;top:626px;width:68px;height:19px;background:#ffdd00"></div><div class="a" style="top:653.73px;font-size:22px;line-height:26px;left:89.00px;width:600px;text-align:center;">160m</div>
<div class="a" style="left:378px;top:699px;width:21px;height:21px;border:2px solid #767676;border-radius:4px;background:#fff"></div>
<div class="a" style="left:423px;top:626px;width:55px;height:19px;background:#003f00"></div><div class="a" style="top:653.73px;font-size:22px;line-height:26px;left:150.50px;width:600px;text-align:center;">80m</div>
<div class="a" style="left:439px;top:699px;width:21px;height:21px;border:2px solid #767676;border-radius:4px;background:#fff"></div>
<div class="a" style="left:478px;top:626px;width:56px;height:19px;background:#808080"></div><div class="a" style="top:653.73px;font-size:22px;line-height:26px;left:206.00px;width:600px;text-align:center;">60m</div>
<div class="a" style="left:494px;top:699px;width:21px;height:21px;border:2px solid #767676;border-radius:4px;background:#fff"></div>
<div class="a" style="left:534px;top:626px;width:56px;height:19px;background:#ffa500"></div><div class="a" style="top:653.73px;font-size:22px;line-height:26px;left:262.00px;width:600px;text-align:center;">40m</div>
<div class="a" style="left:550px;top:699px;width:21px;height:21px;border:2px solid #767676;border-radius:4px;background:#fff"></div>
<div class="a" style="left:590px;top:626px;width:55px;height:19px;background:#ff0000"></div><div class="a" style="top:653.73px;font-size:22px;line-height:26px;left:317.50px;width:600px;text-align:center;">30m</div>
<div class="a" style="left:606px;top:699px;width:21px;height:21px;border:2px solid #767676;border-radius:4px;background:#fff"></div>
<div class="a" style="left:645px;top:626px;width:56px;height:19px;background:#800080"></div><div class="a" style="top:653.73px;font-size:22px;line-height:26px;left:373.00px;width:600px;text-align:center;">20m</div>
<div class="a" style="left:662px;top:699px;width:25px;height:25px;border-radius:4px;background:#0b76fe"><svg width="25" height="25" viewBox="0 0 25 25"><path d="M5.5 12.5 L10.5 17.5 L19.5 6.5" fill="none" stroke="#fff" stroke-width="3.6"/></svg></div>
<div class="a" style="left:701px;top:626px;width:55px;height:19px;background:#0000ff"></div><div class="a" style="top:653.73px;font-size:22px;line-height:26px;left:428.50px;width:600px;text-align:center;">17m</div>
<div class="a" style="left:717px;top:699px;width:21px;height:21px;border:2px solid #767676;border-radius:4px;background:#fff"></div>
<div class="a" style="left:756px;top:626px;width:56px;height:19px;background:#444444"></div><div class="a" style="top:653.73px;font-size:22px;line-height:26px;left:484.00px;width:600px;text-align:center;">15m</div>
<div class="a" style="left:772px;top:699px;width:21px;height:21px;border:2px solid #767676;border-radius:4px;background:#fff"></div>
<div class="a" style="left:812px;top:626px;width:55px;height:19px;background:#00ffff"></div><div class="a" style="top:653.73px;font-size:22px;line-height:26px;left:539.50px;width:600px;text-align:center;">12m</div>
<div class="a" style="left:828px;top:699px;width:21px;height:21px;border:2px solid #767676;border-radius:4px;background:#fff"></div>
<div class="a" style="left:867px;top:626px;width:56px;height:19px;background:#ff00ff"></div><div class="a" style="top:653.73px;font-size:22px;line-height:26px;left:595.00px;width:600px;text-align:center;">10m</div>
<div class="a" style="left:884px;top:699px;width:21px;height:21px;border:2px solid #767676;border-radius:4px;background:#fff"></div>
<div class="a" style="left:923px;top:626px;width:52px;height:19px;background:#ffc0cb"></div><div class="a" style="top:653.73px;font-size:22px;line-height:26px;left:649.00px;width:600px;text-align:center;">6m</div>
<div class="a" style="left:938px;top:699px;width:21px;height:21px;border:2px solid #767676;border-radius:4px;background:#fff"></div>
<div class="a" style="left:975px;top:626px;width:52px;height:19px;background:#a07cff"></div><div class="a" style="top:653.73px;font-size:22px;line-height:26px;left:701.00px;width:600px;text-align:center;">4m</div>
<div class="a" style="left:990px;top:699px;width:21px;height:21px;border:2px solid #767676;border-radius:4px;background:#fff"></div>
<div class="a" style="left:1027px;top:626px;width:52px;height:19px;background:#90f080"></div><div class="a" style="top:653.73px;font-size:22px;line-height:26px;left:753.00px;width:600px;text-align:center;">2m</div>
<div class="a" style="left:1042px;top:699px;width:21px;height:21px;border:2px solid #767676;border-radius:4px;background:#fff"></div>
<div class="a" style="left:287px;top:645px;width:792px;height:2px;background:#c9c9c9"></div>
<div class="a" style="top:743.73px;font-size:22px;line-height:26px;left:572.00px;">cw</div>
<div class="a" style="top:743.73px;font-size:22px;line-height:26px;left:622.00px;">rtty</div>
<div class="a" style="top:743.73px;font-size:22px;line-height:26px;left:669.00px;">psk31</div>
<div class="a" style="top:743.73px;font-size:22px;line-height:26px;left:741.60px;">psk63</div>
<div class="a" style="left:573px;top:790px;width:21px;height:21px;border:2px solid #767676;border-radius:4px;background:#fff"></div>
<div class="a" style="left:625px;top:790px;width:21px;height:21px;border:2px solid #767676;border-radius:4px;background:#fff"></div>
<div class="a" style="left:687px;top:790px;width:21px;height:21px;border:2px solid #767676;border-radius:4px;background:#fff"></div>
<div class="a" style="left:759px;top:790px;width:21px;height:21px;border:2px solid #767676;border-radius:4px;background:#fff"></div>
<div class="a" style="left:458px;top:835px;width:21px;height:21px;border:2px solid #767676;border-radius:4px;background:#fff"></div>
<div class="a" style="top:839.73px;font-size:22px;line-height:26px;left:496.00px;">CQ</div>
<div class="a" style="left:544px;top:835px;width:21px;height:21px;border:2px solid #767676;border-radius:4px;background:#fff"></div>
<div class="a" style="top:839.73px;font-size:22px;line-height:26px;left:582.00px;">DX</div>
<div class="a" style="left:627px;top:835px;width:21px;height:21px;border:2px solid #767676;border-radius:4px;background:#fff"></div>
<div class="a" style="top:839.73px;font-size:22px;line-height:26px;left:666.00px;">BCN</div>
<div class="a" style="left:727px;top:835px;width:21px;height:21px;border:2px solid #767676;border-radius:4px;background:#fff"></div>
<div class="a" style="top:839.73px;font-size:22px;line-height:26px;left:764.50px;">/B</div>
<div class="a" style="left:801px;top:835px;width:21px;height:21px;border:2px solid #767676;border-radius:4px;background:#fff"></div>
<div class="a" style="top:839.73px;font-size:22px;line-height:26px;left:839.00px;">NCDXF</div>
<div class="a" style="top:622.23px;font-size:22px;line-height:26px;left:1389.50px;">Consider supporting this site</div>
<div class="a" style="left:1451px;top:650px;width:300px;height:50px;border-radius:26px;background:#ffc43a;border:1px solid #f0ad28"></div><div class="a" style="top:660.62px;font-size:29px;line-height:35px;font-weight:bold;color:#111;left:1494.50px;">Donate</div>
<div class="a" style="left:1397px;top:716px;width:42px;height:26px;background:#fff;border:1px solid #c4c4c4"></div><svg class="a" style="left:1397px;top:716px" width="44" height="28"><text x="22" y="19" text-anchor="middle" font-family="Liberation Sans, sans-serif" font-weight="bold" font-size="14" fill="#1f2a77" transform="skewX(-8) translate(2.5 0)" textLength="31" lengthAdjust="spacingAndGlyphs">VISA</text></svg><svg class="a" style="left:1447px;top:716px" width="42" height="28"><rect width="42" height="28" fill="#050505"/><circle cx="14.8" cy="11.6" r="8.6" fill="#ea0a1b"/><circle cx="27.5" cy="11.6" r="8.6" fill="#f7a21b"/><path d="M21.15 5.8A8.6 8.6 0 0 1 21.15 17.4A8.6 8.6 0 0 1 21.15 5.8Z" fill="#fb6310"/><rect x="9" y="22" width="24" height="2" fill="#444"/></svg><svg class="a" style="left:1497px;top:716px" width="44" height="28"><rect width="44" height="28" fill="#050505"/><circle cx="14.6" cy="11.6" r="8.6" fill="#ea0a1b"/><circle cx="27.9" cy="11.6" r="8.6" fill="#10a0e0"/><path d="M21.25 5.9A8.6 8.6 0 0 1 21.25 17.3A8.6 8.6 0 0 1 21.25 5.9Z" fill="#7a6ec4"/><rect x="12" y="22" width="20" height="2" fill="#444"/></svg><div class="a" style="left:1547px;top:716px;width:44px;height:28px;background:linear-gradient(180deg,#3f8ee4,#1a63cc)"></div><div class="a" style="left:1550px;top:722px;width:24px;height:3px;background:rgba(255,255,255,.45)"></div><div class="a" style="left:1552px;top:729px;width:20px;height:3px;background:rgba(255,255,255,.35)"></div><div class="a" style="left:4px;top:885px;width:1568px;height:4px;background:#008000"></div><div class="a" style="left:2px;top:889px;width:1570px;height:388px;background:#f9f9f9;border-left:1px solid #e8e8e8"></div><div class="a" style="left:2px;top:932px;width:1570px;height:2px;background:#dcdcdc"></div><div class="dot a" style="left:791px;top:903px;width:14px;height:14px;border-radius:50%;background:#f00"></div><div class="a" style="top:898.73px;font-size:22px;line-height:26px;font-weight:bold;left:814.00px;">Spotter (de)</div>
<div class="a" style="top:956.73px;font-size:22px;line-height:26px;font-weight:bold;left:14.40px;">callsign</div>
<div class="a" style="left:336px;top:950px;width:1066px;height:39px;border:2px solid #767676;border-radius:4px;background:#fff"></div><div class="a" style="top:954.79px;font-size:26.67px;line-height:32px;font-weight:bold;color:#757575;left:344.30px;">spotter-callsign</div>
<div class="a" style="left:1411px;top:950px;width:300px;height:39px;border:2px solid #767676;border-radius:4px;background:#fff"></div><div class="a" style="top:954.79px;font-size:26.67px;line-height:32px;font-weight:bold;left:1420.30px;">hb9ebe</div>
<div class="a" style="left:2px;top:1010px;width:1570px;height:2px;background:#dedede"></div><div class="a" style="left:2px;top:1014px;width:1570px;height:47px;background:#f0f0f0;border-top:2px solid #bdbdbd;border-bottom:2px solid #bdbdbd"></div><div class="a" style="left:7px;top:1032px;width:14px;height:14px;border-radius:50%;background:#f00"></div><div class="a" style="top:1027.33px;font-size:22px;line-height:26px;font-weight:bold;left:29.30px;">spotter</div>
<div class="a" style="left:321.5px;top:1032px;width:14px;height:14px;border-radius:50%;background:#00f"></div><div class="a" style="top:1027.33px;font-size:22px;line-height:26px;font-weight:bold;left:344.30px;">spotted</div>
<div class="a" style="top:1024.33px;font-size:22px;line-height:26px;font-weight:bold;left:750.20px;">distance km</div>
<div class="a" style="top:1024.33px;font-size:22px;line-height:26px;font-weight:bold;right:466.40px;">freq</div>
<div class="a" style="top:1024.33px;font-size:22px;line-height:26px;font-weight:bold;left:1158.70px;">mode</div>
<div class="a" style="top:1024.33px;font-size:22px;line-height:26px;font-weight:bold;left:1282.00px;">type</div>
<div class="a" style="top:1024.33px;font-size:22px;line-height:26px;font-weight:bold;left:1485.70px;">snr</div>
<div class="a" style="left:2px;top:1065.0px;width:1570px;height:40px;background:#ddeef3;border-bottom:2px solid #d9d9d9"></div><div class="a" style="left:13px;top:1070px;width:32px;height:22px;overflow:hidden;filter:blur(0.5px)"><div style="height:7px;background:#3a3a34"></div><div style="height:8px;background:#ee3030"></div><div style="height:7px;background:#f2d52a"></div><div class="a" style="left:0;top:0;width:32px;height:22px;box-shadow:inset 0 0 0 2px rgba(60,50,10,.75),inset 0 0 4px 3px rgba(255,255,255,.22)"></div></div><div class="a" style="top:1071.33px;font-size:22px;line-height:26px;font-weight:bold;color:#0033cc;left:58.30px;">DL9GTB</div>
<div class="a" style="left:328px;top:1070px;width:32px;height:22px;overflow:hidden;filter:blur(0.5px)"><svg width="32" height="22"><rect width="32" height="22" fill="#f21d1d"/><rect x="4" y="3" width="24" height="16" fill="#f04a4a"/><path d="M16 4V18M8.5 11H23.5" stroke="#fafafa" stroke-width="5.5"/></svg><div class="a" style="left:0;top:0;width:32px;height:22px;box-shadow:inset 0 0 0 2px rgba(170,0,0,.5),inset 0 0 4px 3px rgba(255,255,255,.22)"></div></div><div class="a" style="top:1071.33px;font-size:22px;line-height:26px;font-weight:bold;color:#0033cc;left:373.80px;">HB9EBE</div>
<div class="a" style="top:1071.33px;font-size:22px;line-height:26px;right:703.50px;"><b>940</b> km</div>
<div class="a" style="top:1071.33px;font-size:22px;line-height:26px;right:466.40px;">14064.3</div>
<div class="a" style="top:1071.33px;font-size:22px;line-height:26px;left:886.30px;width:600px;text-align:center;">CW</div>
<div class="a" style="top:1071.33px;font-size:22px;line-height:26px;left:1007.60px;width:600px;text-align:center;">CQ</div>
<div class="a" style="top:1071.33px;font-size:22px;line-height:26px;right:39.60px;">2 dB</div>
<div class="a" style="left:2px;top:1107.6px;width:1570px;height:40px;background:#ddeef3;border-bottom:2px solid #d9d9d9"></div><div class="a" style="left:13px;top:1113px;width:32px;height:22px;overflow:hidden;filter:blur(0.5px)"><div class="a" style="left:0;top:0;width:32px;height:22px;background:#f6f6f6"></div><div class="a" style="left:13px;top:0;width:6px;height:22px;background:#d52b2b"></div><div class="a" style="left:0;top:8px;width:32px;height:5px;background:#d52b2b"></div><div class="a" style="left:0;top:0;width:32px;height:22px;box-shadow:inset 0 0 0 2px rgba(120,120,120,.35),inset 0 0 4px 3px rgba(255,255,255,.22)"></div></div><div class="a" style="top:1113.93px;font-size:22px;line-height:26px;font-weight:bold;color:#0033cc;left:58.30px;">G4IRN</div>
<div class="a" style="left:328px;top:1113px;width:32px;height:22px;overflow:hidden;filter:blur(0.5px)"><svg width="32" height="22"><rect width="32" height="22" fill="#f21d1d"/><rect x="4" y="3" width="24" height="16" fill="#f04a4a"/><path d="M16 4V18M8.5 11H23.5" stroke="#fafafa" stroke-width="5.5"/></svg><div class="a" style="left:0;top:0;width:32px;height:22px;box-shadow:inset 0 0 0 2px rgba(170,0,0,.5),inset 0 0 4px 3px rgba(255,255,255,.22)"></div></div><div class="a" style="top:1113.93px;font-size:22px;line-height:26px;font-weight:bold;color:#0033cc;left:373.80px;">HB9EBE</div>
<div class="a" style="top:1113.93px;font-size:22px;line-height:26px;right:703.50px;"><b>970</b> km</div>
<div class="a" style="top:1113.93px;font-size:22px;line-height:26px;right:466.40px;">14064.3</div>
<div class="a" style="top:1113.93px;font-size:22px;line-height:26px;left:886.30px;width:600px;text-align:center;">CW</div>
<div class="a" style="top:1113.93px;font-size:22px;line-height:26px;left:1007.60px;width:600px;text-align:center;">CQ</div>
<div class="a" style="top:1113.93px;font-size:22px;line-height:26px;right:39.60px;">3 dB</div>
<div class="a" style="left:2px;top:1150.2px;width:1570px;height:40px;background:#ddeef3;border-bottom:2px solid #d9d9d9"></div><div class="a" style="left:13px;top:1155px;width:32px;height:22px;overflow:hidden;filter:blur(0.5px)"><svg width="32" height="22"><rect width="32" height="22" fill="#3e7fcc"/><path d="M0 0L32 22M32 0L0 22" stroke="#f4f8ff" stroke-width="4.5"/></svg><div class="a" style="left:0;top:0;width:32px;height:22px;box-shadow:inset 0 0 0 2px rgba(0,30,110,.7),inset 0 0 4px 3px rgba(255,255,255,.22)"></div></div><div class="a" style="top:1156.53px;font-size:22px;line-height:26px;font-weight:bold;color:#0033cc;left:58.30px;">MM0ZBH</div>
<div class="a" style="left:328px;top:1155px;width:32px;height:22px;overflow:hidden;filter:blur(0.5px)"><svg width="32" height="22"><rect width="32" height="22" fill="#f21d1d"/><rect x="4" y="3" width="24" height="16" fill="#f04a4a"/><path d="M16 4V18M8.5 11H23.5" stroke="#fafafa" stroke-width="5.5"/></svg><div class="a" style="left:0;top:0;width:32px;height:22px;box-shadow:inset 0 0 0 2px rgba(170,0,0,.5),inset 0 0 4px 3px rgba(255,255,255,.22)"></div></div><div class="a" style="top:1156.53px;font-size:22px;line-height:26px;font-weight:bold;color:#0033cc;left:373.80px;">HB9EBE</div>
<div class="a" style="top:1156.53px;font-size:22px;line-height:26px;right:703.50px;"><b>1266</b> km</div>
<div class="a" style="top:1156.53px;font-size:22px;line-height:26px;right:466.40px;">14064.3</div>
<div class="a" style="top:1156.53px;font-size:22px;line-height:26px;left:886.30px;width:600px;text-align:center;">CW</div>
<div class="a" style="top:1156.53px;font-size:22px;line-height:26px;left:1007.60px;width:600px;text-align:center;">CQ</div>
<div class="a" style="top:1156.53px;font-size:22px;line-height:26px;right:39.60px;">8 dB</div>
<div class="a" style="left:2px;top:1192.8px;width:1570px;height:40px;background:#ddeef3;border-bottom:2px solid #d9d9d9"></div><div class="a" style="left:13px;top:1198px;width:32px;height:22px;overflow:hidden;filter:blur(0.5px)"><div class="a" style="left:0;top:0;width:11px;height:22px;background:#3aa548"></div><div class="a" style="left:11px;top:0;width:10px;height:22px;background:#f7f7f7"></div><div class="a" style="left:21px;top:0;width:11px;height:22px;background:#ee2a2a"></div><div class="a" style="left:0;top:0;width:32px;height:22px;box-shadow:inset 0 0 0 2px rgba(0,0,0,.22),inset 0 0 4px 3px rgba(255,255,255,.22)"></div></div><div class="a" style="top:1199.13px;font-size:22px;line-height:26px;font-weight:bold;color:#0033cc;left:58.30px;">IT9GSF</div>
<div class="a" style="left:328px;top:1198px;width:32px;height:22px;overflow:hidden;filter:blur(0.5px)"><svg width="32" height="22"><rect width="32" height="22" fill="#f21d1d"/><rect x="4" y="3" width="24" height="16" fill="#f04a4a"/><path d="M16 4V18M8.5 11H23.5" stroke="#fafafa" stroke-width="5.5"/></svg><div class="a" style="left:0;top:0;width:32px;height:22px;box-shadow:inset 0 0 0 2px rgba(170,0,0,.5),inset 0 0 4px 3px rgba(255,255,255,.22)"></div></div><div class="a" style="top:1199.13px;font-size:22px;line-height:26px;font-weight:bold;color:#0033cc;left:373.80px;">HB9EBE</div>
<div class="a" style="top:1199.13px;font-size:22px;line-height:26px;right:703.50px;"><b>1123</b> km</div>
<div class="a" style="top:1199.13px;font-size:22px;line-height:26px;right:466.40px;">14064.3</div>
<div class="a" style="top:1199.13px;font-size:22px;line-height:26px;left:886.30px;width:600px;text-align:center;">CW</div>
<div class="a" style="top:1199.13px;font-size:22px;line-height:26px;left:1007.60px;width:600px;text-align:center;">CQ</div>
<div class="a" style="top:1199.13px;font-size:22px;line-height:26px;right:39.60px;">2 dB</div>
<div class="a" style="left:2px;top:1235.4px;width:1570px;height:40px;background:#ddeef3;border-bottom:2px solid #d9d9d9"></div><div class="a" style="left:13px;top:1240px;width:32px;height:22px;overflow:hidden;filter:blur(0.5px)"><div style="height:7px;background:#ee2e2e"></div><div style="height:8px;background:#f8f8f8"></div><div style="height:7px;background:#ee2e2e"></div><div class="a" style="left:0;top:0;width:32px;height:22px;box-shadow:inset 0 0 0 2px rgba(150,0,0,.45),inset 0 0 4px 3px rgba(255,255,255,.22)"></div></div><div class="a" style="top:1241.73px;font-size:22px;line-height:26px;font-weight:bold;color:#0033cc;left:58.30px;">OE6ADD</div>
<div class="a" style="left:328px;top:1240px;width:32px;height:22px;overflow:hidden;filter:blur(0.5px)"><svg width="32" height="22"><rect width="32" height="22" fill="#f21d1d"/><rect x="4" y="3" width="24" height="16" fill="#f04a4a"/><path d="M16 4V18M8.5 11H23.5" stroke="#fafafa" stroke-width="5.5"/></svg><div class="a" style="left:0;top:0;width:32px;height:22px;box-shadow:inset 0 0 0 2px rgba(170,0,0,.5),inset 0 0 4px 3px rgba(255,255,255,.22)"></div></div><div class="a" style="top:1241.73px;font-size:22px;line-height:26px;font-weight:bold;color:#0033cc;left:373.80px;">HB9EBE</div>
<div class="a" style="top:1241.73px;font-size:22px;line-height:26px;right:703.50px;"><b>656</b> km</div>
<div class="a" style="top:1241.73px;font-size:22px;line-height:26px;right:466.40px;">14064.3</div>
<div class="a" style="top:1241.73px;font-size:22px;line-height:26px;left:886.30px;width:600px;text-align:center;">CW</div>
<div class="a" style="top:1241.73px;font-size:22px;line-height:26px;left:1007.60px;width:600px;text-align:center;">CQ</div>
<div class="a" style="top:1241.73px;font-size:22px;line-height:26px;right:39.60px;">10 dB</div>
</body></html>
